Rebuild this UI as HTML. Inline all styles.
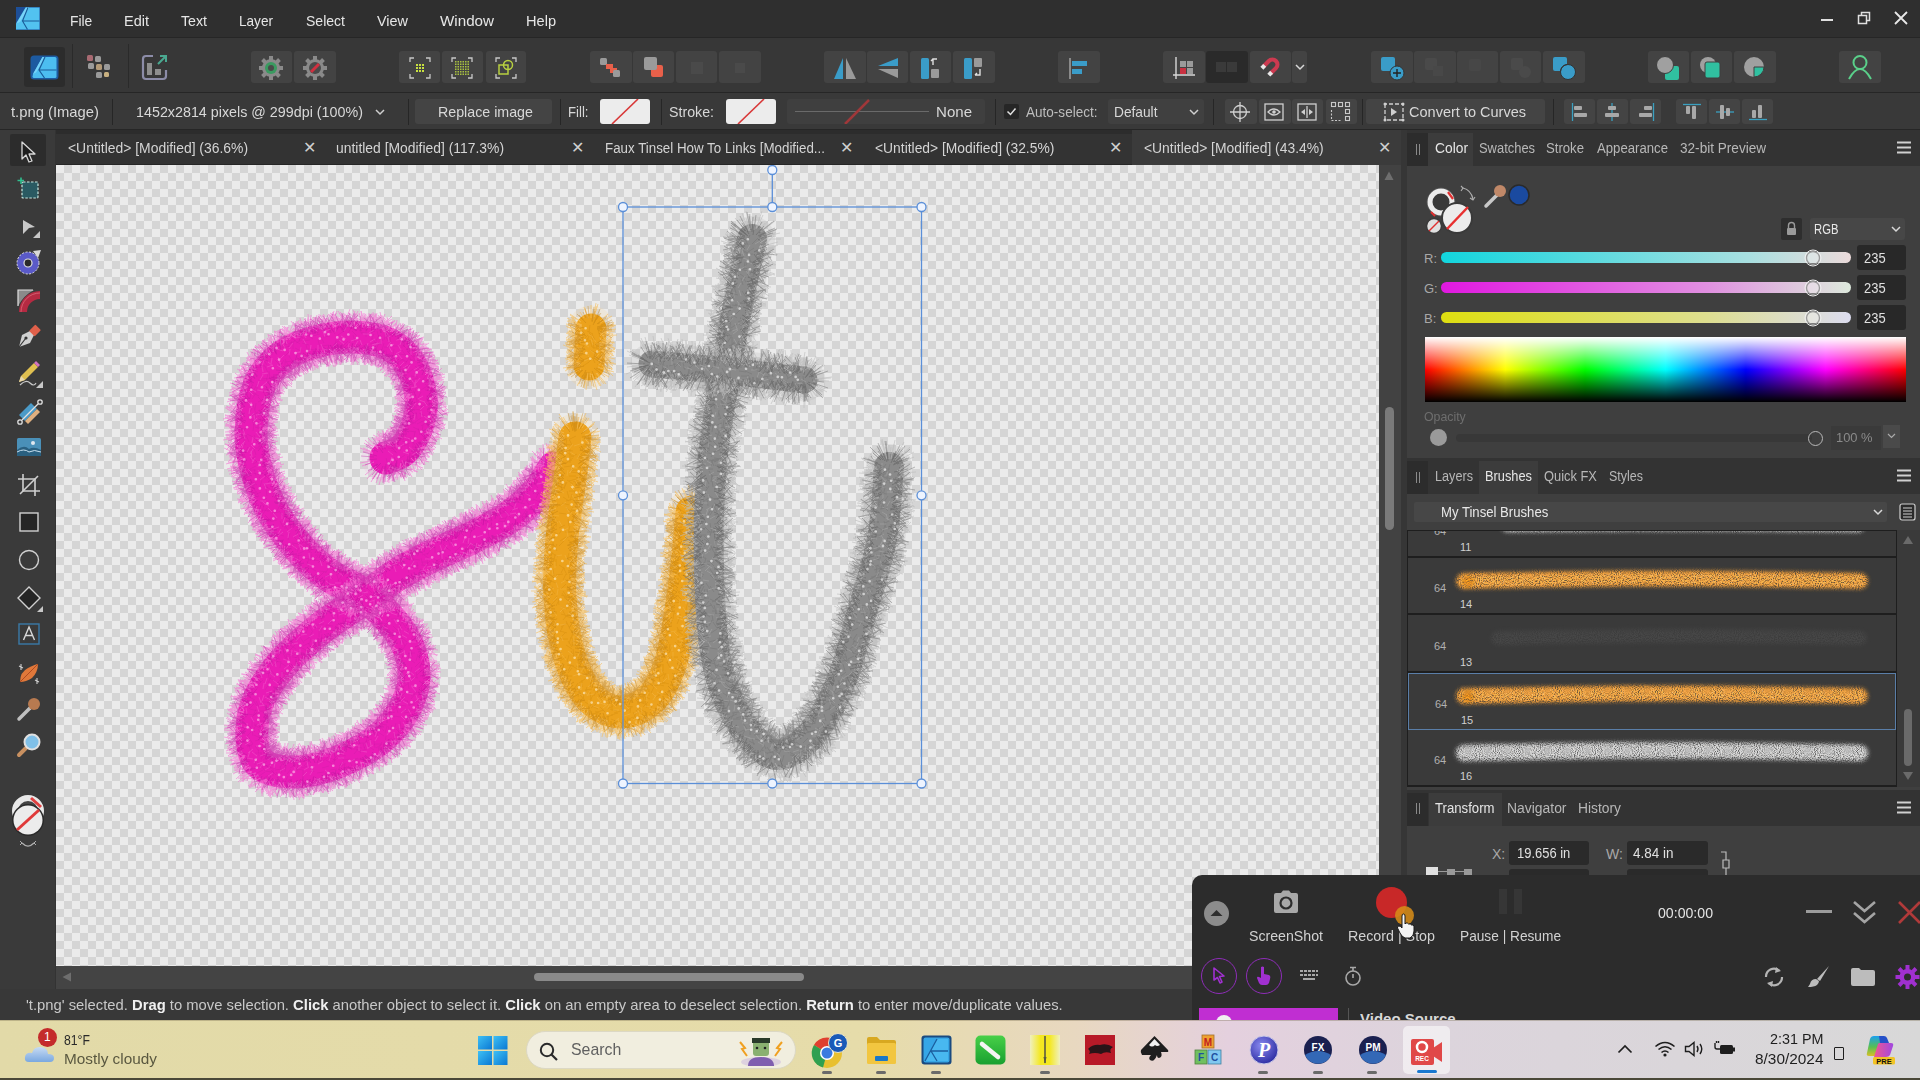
<!DOCTYPE html>
<html><head><meta charset="utf-8">
<style>
*{margin:0;padding:0;box-sizing:border-box}
html,body{width:1920px;height:1080px;overflow:hidden;background:#333;font-family:"Liberation Sans",sans-serif;color:#dcdcdc}
.a{position:absolute}
#menubar{left:0;top:0;width:1920px;height:37px;background:#2f2f2f}
#menubar .mi{position:absolute;top:12px;font-size:15px;color:#e6e6e6}
#toolbar{left:0;top:37px;width:1920px;height:56px;background:#373737;border-top:1px solid #262626;border-bottom:1px solid #262626}
.tb{position:absolute;top:13px;height:32px;background:#434343;border-radius:3px}
#ctx{left:0;top:93px;width:1920px;height:37px;background:#393939;border-bottom:1px solid #262626}
#ctx .t{position:absolute;top:10px;font-size:15px;color:#d8d8d8;white-space:nowrap}
.sep{position:absolute;top:6px;width:1px;height:26px;background:#262626}
.cb{position:absolute;top:6px;height:25px;background:#444444;border-radius:3px}
#tabs{left:56px;top:130px;width:1345px;height:35px;background:#333333;border-top:4px solid #2c2c2c;border-bottom:1px solid #262626}
#tabs .tab{position:absolute;top:-4px;height:35px;font-size:14px;color:#d4d4d4}
#tabs .tab span{position:absolute;top:10px;white-space:nowrap}
#tabs .tab i{position:absolute;top:8px;font-style:normal;font-size:16px;color:#d0d0d0}
#lefttools{left:0;top:130px;width:55px;height:859px;background:#3a3a3a}
#canvas{left:56px;top:165px;width:1323px;height:801px;background-color:#ebebeb;
background-image:repeating-conic-gradient(#d5d5d5 0 25%,#ebebeb 0 50%);background-size:16px 16px}
#vscroll{left:1379px;top:165px;width:22px;height:801px;background:#424242}
#hscroll{left:56px;top:966px;width:1345px;height:23px;background:#444444}
#status{left:0;top:989px;width:1920px;height:31px;background:#383838}
#status .t{position:absolute;left:26px;top:7px;font-size:15px;color:#c8c8c8;white-space:nowrap}
#status b{color:#f0f0f0}
#panel{left:1401px;top:130px;width:519px;height:745px;background:#3f3f3f;border-left:6px solid #363636}
#taskbar{left:0;top:1020px;width:1920px;height:60px;background:linear-gradient(90deg,#e2daa8 0%,#e6dcaa 45%,#e8d8c0 56%,#e4d0de 64%,#dcd4dc 75%,#d8d8d8 100%)}
#rec{left:1192px;top:875px;width:728px;height:145px;background:#2c2c2c;border-top-left-radius:10px}
#panel .ph{position:absolute;top:10px;font-size:14px;color:#b8b8b8;white-space:nowrap}
#panel .ph2{position:absolute;font-size:13px;color:#a8a8a8;white-space:nowrap}
#panel .vb{width:49px;height:25px;background:#282828;border-radius:3px;font-size:14px;color:#e0e0e0;padding:5px 0 0 7px}
#panel .brow{position:absolute;left:0;width:488px;height:57px;border-bottom:2px solid #1e1e1e;background:#3a3a3a}
#panel .brow .n1{position:absolute;left:26px;top:24px;font-size:11px;color:#b0b0b0}
#panel .brow .n2{position:absolute;left:52px;top:40px;font-size:11px;color:#d0d0d0}
#rec .rt{position:absolute;font-size:15px;color:#d2d2d2;white-space:nowrap}
#taskbar .tt{position:absolute;white-space:nowrap;color:#1e1e1e}
</style></head><body>

<div id="menubar" class="a">
  <div class="mi" style="left: 70px; transform-origin: left top; width: auto; transform: scaleX(0.923);">File</div>
  <div class="mi" style="left: 124px; transform-origin: left top; width: auto; transform: scaleX(0.967);">Edit</div>
  <div class="mi" style="left: 181px; transform-origin: left top; width: auto; transform: scaleX(0.945);">Text</div>
  <div class="mi" style="left: 239px; transform-origin: left top; width: auto; transform: scaleX(0.906);">Layer</div>
  <div class="mi" style="left: 306px; transform-origin: left top; width: auto; transform: scaleX(0.935);">Select</div>
  <div class="mi" style="left: 377px; transform-origin: left top; width: auto; transform: scaleX(0.961);">View</div>
  <div class="mi" style="left: 440px; transform-origin: left top; width: auto; transform: scaleX(1.012);">Window</div>
  <div class="mi" style="left: 526px; transform-origin: left top; width: auto; transform: scaleX(0.972);">Help</div>

  <svg class="a" style="left:16px;top:7px" width="24" height="23" viewBox="0 0 24 23"><rect x="0" y="0" width="24" height="23" fill="#1d4f98"></rect><path d="M0 16.5 L9.5 0.5 H23.5 V22.5 H0 Z" fill="#52c2f0"></path><path d="M0.5 16.5 L10 0.5 H13 L4 15 Z" fill="#7ad4f8"></path><path d="M12 0.5 L6.5 14 L11.5 22.5 M6.5 14 H23.5" stroke="#1a5a98" stroke-width="1.1" fill="none"></path></svg>
  <div class="a" style="left:1821px;top:19px;width:12px;height:2px;background:#e0e0e0"></div>
  <svg class="a" style="left:1857px;top:11px" width="14" height="14" viewBox="0 0 14 14"><rect x="1.5" y="4.5" width="8" height="8" fill="none" stroke="#e0e0e0" stroke-width="1.5"></rect><path d="M4.5 4.5 V1.5 H12.5 V9.5 H9.5" fill="none" stroke="#e0e0e0" stroke-width="1.5"></path></svg>
  <svg class="a" style="left:1894px;top:11px" width="14" height="14" viewBox="0 0 14 14"><path d="M1 1 L13 13 M13 1 L1 13" stroke="#e8e8e8" stroke-width="1.8"></path></svg>
</div>

<div id="toolbar" class="a">
<div class="tb" style="left:24px;width:41px;top:9px;height:40px;background:#2c2c2c"></div>
<div class="tb" style="left:251px;width:41px"></div>
<div class="tb" style="left:294px;width:42px"></div>
<div class="tb" style="left:399px;width:41px"></div>
<div class="tb" style="left:442px;width:41px"></div>
<div class="tb" style="left:486px;width:40px"></div>
<div class="tb" style="left:590px;width:42px"></div>
<div class="tb" style="left:633px;width:41px"></div>
<div class="tb" style="left:676px;width:41px"></div>
<div class="tb" style="left:719px;width:42px"></div>
<div class="tb" style="left:824px;width:42px"></div>
<div class="tb" style="left:867px;width:41px"></div>
<div class="tb" style="left:910px;width:41px"></div>
<div class="tb" style="left:953px;width:42px"></div>
<div class="tb" style="left:1058px;width:42px"></div>
<div class="tb" style="left:1163px;width:42px"></div>
<div class="tb" style="left:1206px;width:42px;background:#2a2a2a"></div>
<div class="tb" style="left:1250px;width:41px"></div>
<div class="tb" style="left:1292px;width:15px"></div>
<div class="tb" style="left:1371px;width:42px"></div>
<div class="tb" style="left:1414px;width:42px"></div>
<div class="tb" style="left:1457px;width:41px"></div>
<div class="tb" style="left:1500px;width:41px"></div>
<div class="tb" style="left:1543px;width:42px"></div>
<div class="tb" style="left:1648px;width:41px"></div>
<div class="tb" style="left:1691px;width:41px"></div>
<div class="tb" style="left:1734px;width:42px"></div>
<div class="tb" style="left:1839px;width:42px"></div>
<div class="a" style="left:72px;top:6px;width:1px;height:44px;background:#2a2a2a"></div>
<div class="a" style="left:128px;top:6px;width:1px;height:44px;background:#2a2a2a"></div>

<svg class="a" style="left:30px;top:17px" width="29" height="25" viewBox="0 0 29 25">
  <defs><linearGradient id="lg1" x1="0" y1="0" x2="1" y2="1"><stop offset="0" stop-color="#1f6fb8"></stop><stop offset="1" stop-color="#52c3f2"></stop></linearGradient></defs>
  <rect x="0.5" y="0.5" width="28" height="24" rx="3.5" fill="#1d5aa0"></rect>
  <path d="M3 19 L12.5 2 H25 Q26.5 2 26.5 3.5 V21.5 Q26.5 23 25 23 H4 Q2.5 23 2.5 21.5 Z" fill="#4cbdf0"></path>
  <path d="M3 19 L12.5 2 H15.5 L6 17.5 Z" fill="#76d2f8"></path>
  <path d="M15 2 L9 15 L14.5 23 M9 15 H26.5" stroke="#1a5a98" stroke-width="1.2" fill="none"></path>
</svg>
<svg class="a" style="left:86px;top:16px" width="28" height="26" viewBox="0 0 28 26">
  <rect x="1" y="1" width="6" height="6" rx="1.5" fill="#a86a72"></rect><rect x="9" y="2" width="6" height="6" rx="1.5" fill="#9a9a9a"></rect>
  <rect x="2" y="9" width="6" height="6" rx="1.5" fill="#9a9a9a"></rect><rect x="10" y="10" width="6" height="6" rx="1.5" fill="#b39a78"></rect><rect x="18" y="10" width="6" height="6" rx="1.5" fill="#9a9a9a"></rect>
  <rect x="10" y="18" width="6" height="6" rx="1.5" fill="#9a9a9a"></rect><rect x="18" y="18" width="5" height="5" rx="1.5" fill="#c8b080"></rect>
</svg>
<svg class="a" style="left:141px;top:15px" width="30" height="28" viewBox="0 0 30 28">
  <path d="M12 3 H5 Q2 3 2 6 V23 Q2 26 5 26 H22 Q25 26 25 23 V17" fill="none" stroke="#8c8ca8" stroke-width="2.2"></path>
  <rect x="6" y="10" width="5" height="12" fill="#8e8e8e"></rect><rect x="14" y="16" width="6" height="6" fill="#8e8e8e"></rect>
  <path d="M17 11 L25 3 M19 3 H25 V9" fill="none" stroke="#4aa890" stroke-width="2"></path>
</svg>
<svg class="a" style="left:258px;top:17px" width="26" height="26" viewBox="0 0 26 26">
  <g fill="#8a8a8a"><circle cx="13" cy="13" r="9"></circle>
  <rect x="11" y="1" width="4" height="5"></rect><rect x="11" y="20" width="4" height="5"></rect><rect x="1" y="11" width="5" height="4"></rect><rect x="20" y="11" width="5" height="4"></rect>
  <rect x="11" y="1" width="4" height="5" transform="rotate(45 13 13)"></rect><rect x="11" y="20" width="4" height="5" transform="rotate(45 13 13)"></rect><rect x="1" y="11" width="5" height="4" transform="rotate(45 13 13)"></rect><rect x="20" y="11" width="5" height="4" transform="rotate(45 13 13)"></rect></g>
  <circle cx="13" cy="13" r="6" fill="#3a9a60"></circle><circle cx="13" cy="13" r="3" fill="#4a4a4a"></circle>
</svg>
<svg class="a" style="left:302px;top:17px" width="26" height="26" viewBox="0 0 26 26">
  <g fill="#8a8a8a"><circle cx="13" cy="13" r="9"></circle>
  <rect x="11" y="1" width="4" height="5"></rect><rect x="11" y="20" width="4" height="5"></rect><rect x="1" y="11" width="5" height="4"></rect><rect x="20" y="11" width="5" height="4"></rect>
  <rect x="11" y="1" width="4" height="5" transform="rotate(45 13 13)"></rect><rect x="11" y="20" width="4" height="5" transform="rotate(45 13 13)"></rect><rect x="1" y="11" width="5" height="4" transform="rotate(45 13 13)"></rect><rect x="20" y="11" width="5" height="4" transform="rotate(45 13 13)"></rect></g>
  <circle cx="13" cy="13" r="6" fill="#4a4a4a"></circle><path d="M9 17 L17 9" stroke="#d03040" stroke-width="3"></path>
</svg>
<svg class="a" style="left:409px;top:19px" width="22" height="22" viewBox="0 0 22 22"><path d="M1 5 V1 H5 M17 1 H21 V5 M21 17 V21 H17 M5 21 H1 V17" fill="none" stroke="#c8c8c8" stroke-width="1.3"></path><g fill="#c8e040"><rect x="7" y="7" width="2" height="2"></rect><rect x="7" y="10" width="2" height="2"></rect><rect x="7" y="13" width="2" height="2"></rect><rect x="10" y="7" width="2" height="2"></rect><rect x="10" y="10" width="2" height="2"></rect><rect x="10" y="13" width="2" height="2"></rect><rect x="13" y="7" width="2" height="2"></rect><rect x="13" y="10" width="2" height="2"></rect><rect x="13" y="13" width="2" height="2"></rect></g></svg>
<svg class="a" style="left:451px;top:19px" width="22" height="22" viewBox="0 0 22 22"><path d="M1 5 V1 H5 M17 1 H21 V5 M21 17 V21 H17 M5 21 H1 V17" fill="none" stroke="#c8c8c8" stroke-width="1.3"></path><g fill="#a8c040"><rect x="4.0" y="4.0" width="1.5" height="1.5"></rect><rect x="4.0" y="6.5" width="1.5" height="1.5"></rect><rect x="4.0" y="9.0" width="1.5" height="1.5"></rect><rect x="4.0" y="11.5" width="1.5" height="1.5"></rect><rect x="4.0" y="14.0" width="1.5" height="1.5"></rect><rect x="4.0" y="16.5" width="1.5" height="1.5"></rect><rect x="6.5" y="4.0" width="1.5" height="1.5"></rect><rect x="6.5" y="6.5" width="1.5" height="1.5"></rect><rect x="6.5" y="9.0" width="1.5" height="1.5"></rect><rect x="6.5" y="11.5" width="1.5" height="1.5"></rect><rect x="6.5" y="14.0" width="1.5" height="1.5"></rect><rect x="6.5" y="16.5" width="1.5" height="1.5"></rect><rect x="9.0" y="4.0" width="1.5" height="1.5"></rect><rect x="9.0" y="6.5" width="1.5" height="1.5"></rect><rect x="9.0" y="9.0" width="1.5" height="1.5"></rect><rect x="9.0" y="11.5" width="1.5" height="1.5"></rect><rect x="9.0" y="14.0" width="1.5" height="1.5"></rect><rect x="9.0" y="16.5" width="1.5" height="1.5"></rect><rect x="11.5" y="4.0" width="1.5" height="1.5"></rect><rect x="11.5" y="6.5" width="1.5" height="1.5"></rect><rect x="11.5" y="9.0" width="1.5" height="1.5"></rect><rect x="11.5" y="11.5" width="1.5" height="1.5"></rect><rect x="11.5" y="14.0" width="1.5" height="1.5"></rect><rect x="11.5" y="16.5" width="1.5" height="1.5"></rect><rect x="14.0" y="4.0" width="1.5" height="1.5"></rect><rect x="14.0" y="6.5" width="1.5" height="1.5"></rect><rect x="14.0" y="9.0" width="1.5" height="1.5"></rect><rect x="14.0" y="11.5" width="1.5" height="1.5"></rect><rect x="14.0" y="14.0" width="1.5" height="1.5"></rect><rect x="14.0" y="16.5" width="1.5" height="1.5"></rect><rect x="16.5" y="4.0" width="1.5" height="1.5"></rect><rect x="16.5" y="6.5" width="1.5" height="1.5"></rect><rect x="16.5" y="9.0" width="1.5" height="1.5"></rect><rect x="16.5" y="11.5" width="1.5" height="1.5"></rect><rect x="16.5" y="14.0" width="1.5" height="1.5"></rect><rect x="16.5" y="16.5" width="1.5" height="1.5"></rect></g></svg>
<svg class="a" style="left:495px;top:19px" width="22" height="22" viewBox="0 0 22 22"><path d="M1 5 V1 H5 M17 1 H21 V5 M21 17 V21 H17 M5 21 H1 V17" fill="none" stroke="#c8c8c8" stroke-width="1.3"></path><rect x="4" y="8" width="9" height="9" fill="none" stroke="#b8d040" stroke-width="1.5"></rect><circle cx="13" cy="8" r="4.5" fill="none" stroke="#b8d040" stroke-width="1.5"></circle></svg>

<svg class="a" style="left:598px;top:19px" width="26" height="22" viewBox="0 0 26 22"><rect x="2" y="1" width="7" height="7" rx="1.5" fill="#9a9a9a"></rect><path d="M8 7 H15 V11 H19 V16 H12 V12 H8 Z" fill="#e8604a"></path><rect x="15" y="13" width="7" height="7" rx="1.5" fill="#9a9a9a"></rect></svg>
<svg class="a" style="left:641px;top:17px" width="26" height="24" viewBox="0 0 26 24"><rect x="10" y="10" width="12" height="12" rx="2" fill="#e8604a"></rect><rect x="3" y="2" width="13" height="13" rx="2" fill="#9a9a9a"></rect></svg>
<svg class="a" style="left:686px;top:19px" width="22" height="22" viewBox="0 0 22 22"><rect x="5" y="5" width="12" height="12" fill="#4a4a4a"></rect></svg>
<svg class="a" style="left:729px;top:19px" width="22" height="22" viewBox="0 0 22 22"><rect x="6" y="6" width="10" height="10" fill="#4a4a4a"></rect></svg>
<svg class="a" style="left:831px;top:17px" width="28" height="26" viewBox="0 0 28 26"><path d="M12 3 L12 24 L3 24 Z" fill="#3a9cc8"></path><path d="M15 3 L15 24 L25 24 Z" fill="#9a9a9a"></path></svg>
<svg class="a" style="left:874px;top:17px" width="28" height="26" viewBox="0 0 28 26"><path d="M24 3 V11 L4 11 Z" fill="#3a9cc8"></path><path d="M24 14 V23 L4 14 Z" fill="#9a9a9a"></path></svg>
<svg class="a" style="left:917px;top:17px" width="28" height="26" viewBox="0 0 28 26"><rect x="4" y="3" width="8" height="21" rx="1.5" fill="#3a9cc8"></rect><rect x="14" y="14" width="8" height="9" rx="1" fill="#9a9a9a"></rect><path d="M16 10 V4 H20 M16 4 L14 6" fill="none" stroke="#e0e0e0" stroke-width="1.4"></path></svg>
<svg class="a" style="left:960px;top:17px" width="28" height="26" viewBox="0 0 28 26"><rect x="4" y="3" width="8" height="21" rx="1.5" fill="#3a9cc8"></rect><rect x="14" y="3" width="8" height="9" rx="1" fill="#9a9a9a"></rect><path d="M20 14 V20 H15 M15 20 L17 18" fill="none" stroke="#e0e0e0" stroke-width="1.4"></path></svg>
<svg class="a" style="left:1066px;top:17px" width="26" height="26" viewBox="0 0 26 26"><rect x="3" y="3" width="2" height="21" fill="#8a8a8a"></rect><rect x="6" y="6" width="15" height="5" fill="#3a9cc8"></rect><rect x="6" y="14" width="10" height="5" fill="#3a9cc8"></rect></svg>
<svg class="a" style="left:1171px;top:17px" width="26" height="26" viewBox="0 0 26 26"><path d="M5 2 V24 M2 20 H24" stroke="#d8d8d8" stroke-width="1.4"></path><rect x="9" y="6" width="6" height="6" fill="#9a9a9a"></rect><rect x="16" y="6" width="6" height="6" fill="#9a9a9a"></rect><rect x="9" y="13" width="6" height="6" fill="#c83040"></rect><rect x="16" y="13" width="6" height="6" fill="#9a9a9a"></rect></svg>
<svg class="a" style="left:1215px;top:21px" width="24" height="16" viewBox="0 0 24 16"><rect x="1" y="3" width="10" height="10" fill="#3a3a3a"></rect><rect x="12" y="3" width="10" height="10" fill="#3a3a3a"></rect></svg>
<svg class="a" style="left:1257px;top:15px" width="26" height="26" viewBox="0 0 26 26"><g transform="rotate(45 14 13)"><path d="M9 19 V11 A5 5 0 0 1 19 11 V19" fill="none" stroke="#cc3a50" stroke-width="4.2"></path><rect x="7" y="17" width="4.2" height="4" fill="#e8e8e8"></rect><rect x="16.8" y="17" width="4.2" height="4" fill="#e8e8e8"></rect></g></svg>
<svg class="a" style="left:1294px;top:24px" width="12" height="10" viewBox="0 0 12 10"><path d="M2 3 L6 7 L10 3" fill="none" stroke="#d8d8d8" stroke-width="1.5"></path></svg>
<svg class="a" style="left:1378px;top:16px" width="28" height="28" viewBox="0 0 28 28"><rect x="3" y="3" width="14" height="14" rx="2" fill="#3a9cc8"></rect><circle cx="19" cy="19" r="7" fill="#3a9cc8" stroke="#333" stroke-width="1"></circle><path d="M19 15 V23 M15 19 H23" stroke="#222" stroke-width="1.4"></path></svg>
<svg class="a" style="left:1421px;top:16px" width="28" height="28" viewBox="0 0 28 28"><rect x="4" y="4" width="12" height="12" rx="2" fill="#4a4a4a"></rect><rect x="12" y="12" width="10" height="10" fill="#484848"></rect></svg>
<svg class="a" style="left:1464px;top:16px" width="28" height="28" viewBox="0 0 28 28"><rect x="5" y="5" width="12" height="12" rx="2" fill="#474747"></rect></svg>
<svg class="a" style="left:1507px;top:16px" width="28" height="28" viewBox="0 0 28 28"><rect x="4" y="4" width="12" height="12" rx="2" fill="#4a4a4a"></rect><circle cx="18" cy="18" r="6" fill="#4a4a4a"></circle></svg>
<svg class="a" style="left:1550px;top:16px" width="28" height="28" viewBox="0 0 28 28"><rect x="3" y="3" width="14" height="14" rx="2" fill="#3a9cc8"></rect><circle cx="18" cy="18" r="7.5" fill="#3a9cc8" stroke="#333" stroke-width="1"></circle><path d="M10.5 17 A7.5 7.5 0 0 1 17 10.5" fill="none" stroke="#333" stroke-width="1"></path></svg>
<svg class="a" style="left:1654px;top:16px" width="28" height="28" viewBox="0 0 28 28"><rect x="11" y="12" width="14" height="14" rx="2" fill="#30c0a0"></rect><circle cx="11" cy="11" r="8.5" fill="#a0a0a0" stroke="#3e3e3e" stroke-width="1"></circle></svg>
<svg class="a" style="left:1697px;top:16px" width="28" height="28" viewBox="0 0 28 28"><circle cx="11" cy="11" r="8" fill="#a0a0a0"></circle><rect x="8" y="8" width="15" height="16" rx="2" fill="#30c0a0" stroke="#3e3e3e" stroke-width="1"></rect></svg>
<svg class="a" style="left:1741px;top:16px" width="28" height="28" viewBox="0 0 28 28"><circle cx="13" cy="13" r="10" fill="#a0a0a0"></circle><path d="M13 13 H23 A10 10 0 0 1 13 23 Z" fill="#30c0a0" stroke="#3e3e3e" stroke-width="1"></path></svg>
<svg class="a" style="left:1846px;top:15px" width="28" height="28" viewBox="0 0 28 28"><circle cx="14" cy="9.5" r="6.5" fill="none" stroke="#5ad08a" stroke-width="2"></circle><path d="M3 26 Q14 6 25 26" fill="none" stroke="#5ad08a" stroke-width="2"></path></svg>
</div>
<div id="ctx" class="a">
<div class="t" style="left: 11px; transform-origin: left top; width: auto; transform: scaleX(0.986);">t.png (Image)</div>
<div class="sep" style="left:112px"></div>
<div class="t" style="left: 136px; transform-origin: left top; width: auto; transform: scaleX(0.954);">1452x2814 pixels @ 299dpi (100%)</div>
<svg class="a" style="left:374px;top:15px" width="12" height="8" viewBox="0 0 12 8"><path d="M2 2 L6 6 L10 2" fill="none" stroke="#cfcfcf" stroke-width="1.5"></path></svg>
<div class="sep" style="left:408px"></div>
<div class="cb" style="left:415px;width:137px"></div>
<div class="t" style="left: 438px; transform-origin: left top; width: auto; transform: scaleX(0.949);">Replace image</div>
<div class="sep" style="left:560px"></div>
<div class="t" style="left: 567.5px; transform-origin: left top; width: auto; transform: scaleX(0.879);">Fill:</div>
<svg class="a" style="left:600px;top:6px" width="50" height="25" viewBox="0 0 50 25"><rect x="0" y="0" width="50" height="25" rx="3" fill="#ececec"></rect><path d="M12 25 L38 0" stroke="#d83838" stroke-width="1.6"></path></svg>
<div class="sep" style="left:661px"></div>
<div class="t" style="left: 669px; transform-origin: left top; width: auto; transform: scaleX(0.947);">Stroke:</div>
<svg class="a" style="left:726px;top:6px" width="50" height="25" viewBox="0 0 50 25"><rect x="0" y="0" width="50" height="25" rx="3" fill="#ececec"></rect><path d="M12 25 L38 0" stroke="#d83838" stroke-width="1.6"></path></svg>
<div class="cb" style="left:787px;width:198px;background:#3f3f3f"></div>
<svg class="a" style="left:787px;top:6px" width="150" height="25" viewBox="0 0 150 25"><path d="M8 12.5 H142" stroke="#6a6a6a" stroke-width="1"></path><path d="M58 25 L82 1" stroke="#a0383a" stroke-width="2.5"></path></svg>
<div class="t" style="left: 936px; transform-origin: left top; width: auto; transform: scaleX(1.004);">None</div>
<div class="sep" style="left:995px"></div>
<div class="a" style="left:1004px;top:11px;width:15px;height:15px;background:#262626;border-radius:2px"></div>
<svg class="a" style="left:1004px;top:11px" width="15" height="15" viewBox="0 0 15 15"><path d="M3.5 7.5 L6.5 10.5 L11.5 4.5" fill="none" stroke="#e0e0e0" stroke-width="1.5"></path></svg>
<div class="t" style="left: 1025.5px; color: rgb(189, 189, 189); transform-origin: left top; width: auto; transform: scaleX(0.903);">Auto-select:</div>
<div class="cb" style="left:1108px;width:96px;background:#404040"></div>
<div class="t" style="left: 1113.5px; transform-origin: left top; width: auto; transform: scaleX(0.915);">Default</div>
<svg class="a" style="left:1188px;top:15px" width="12" height="8" viewBox="0 0 12 8"><path d="M2 2 L6 6 L10 2" fill="none" stroke="#cfcfcf" stroke-width="1.5"></path></svg>
<div class="sep" style="left:1213px"></div>
<div class="cb" style="left:1225px;width:32px"></div>
<div class="cb" style="left:1259px;width:32px"></div>
<div class="cb" style="left:1292px;width:31px"></div>
<div class="cb" style="left:1326px;width:31px"></div>
<svg class="a" style="left:1229px;top:8px" width="22" height="22" viewBox="0 0 22 22"><circle cx="11" cy="11" r="6.5" fill="none" stroke="#d0d0d0" stroke-width="1.3"></circle><path d="M11 1 V21 M1 11 H21" stroke="#d0d0d0" stroke-width="1.3"></path></svg>
<svg class="a" style="left:1263px;top:8px" width="22" height="22" viewBox="0 0 22 22"><rect x="2" y="3" width="18" height="16" fill="none" stroke="#d0d0d0" stroke-width="1.3"></rect><path d="M5 11 Q11 5 17 11 Q11 17 5 11 Z" fill="none" stroke="#d0d0d0" stroke-width="1.3"></path><circle cx="11" cy="11" r="1.8" fill="#d0d0d0"></circle></svg>
<svg class="a" style="left:1296px;top:8px" width="22" height="22" viewBox="0 0 22 22"><rect x="2" y="3" width="18" height="16" fill="none" stroke="#d0d0d0" stroke-width="1.3"></rect><path d="M11 5 V17" stroke="#d0d0d0" stroke-width="1.3"></path><path d="M5 11 L9 8 V14 Z M17 11 L13 8 V14 Z" fill="#d0d0d0"></path></svg>
<svg class="a" style="left:1330px;top:8px" width="22" height="22" viewBox="0 0 22 22"><g fill="none" stroke="#c8c8c8" stroke-width="1.1"><rect x="1.5" y="1.5" width="4" height="4"></rect><rect x="8.5" y="1.5" width="4" height="4"></rect><rect x="15.5" y="1.5" width="4" height="4"></rect><rect x="15.5" y="8.5" width="4" height="4"></rect><rect x="15.5" y="15.5" width="4" height="4"></rect><path d="M1.5 9 V19.5 H12" stroke-dasharray="2 1.5"></path></g></svg>
<div class="sep" style="left:1362px"></div>
<div class="cb" style="left:1366px;width:179px"></div>
<svg class="a" style="left:1383px;top:8px" width="22" height="22" viewBox="0 0 22 22"><path d="M2 3 V19 H20 V3 Z" fill="none" stroke="#d0d0d0" stroke-width="1.3" stroke-dasharray="4 2"></path><path d="M8 7 L14 11 L8 15 Z" fill="#d0d0d0"></path><circle cx="2" cy="3" r="1.5" fill="#d0d0d0"></circle><circle cx="20" cy="3" r="1.5" fill="#d0d0d0"></circle><circle cx="2" cy="19" r="1.5" fill="#d0d0d0"></circle><circle cx="20" cy="19" r="1.5" fill="#d0d0d0"></circle></svg>
<div class="t" style="left: 1409px; transform-origin: left top; width: auto; transform: scaleX(0.968);">Convert to Curves</div>
<div class="sep" style="left:1553px"></div>
<div class="cb" style="left:1564px;width:31px"></div>
<div class="cb" style="left:1597px;width:31px"></div>
<div class="cb" style="left:1630px;width:31px"></div>
<div class="cb" style="left:1676px;width:31px"></div>
<div class="cb" style="left:1709px;width:31px"></div>
<div class="cb" style="left:1742px;width:31px"></div>
<svg class="a" style="left:1569px;top:9px" width="22" height="20" viewBox="0 0 22 20"><path d="M3.5 1 V19" stroke="#3aa0c0" stroke-width="1.3"></path><rect x="5" y="4" width="8" height="4" rx="1" fill="#a8a8a8"></rect><rect x="5" y="11" width="13" height="4" rx="1" fill="#a8a8a8"></rect></svg>
<svg class="a" style="left:1601px;top:9px" width="22" height="20" viewBox="0 0 22 20"><path d="M11 1 V19" stroke="#3aa0c0" stroke-width="1.3"></path><rect x="7" y="4" width="8" height="4" rx="1" fill="#a8a8a8"></rect><rect x="4" y="11" width="14" height="4" rx="1" fill="#a8a8a8"></rect></svg>
<svg class="a" style="left:1635px;top:9px" width="22" height="20" viewBox="0 0 22 20"><path d="M18.5 1 V19" stroke="#3aa0c0" stroke-width="1.3"></path><rect x="9" y="4" width="8" height="4" rx="1" fill="#a8a8a8"></rect><rect x="4" y="11" width="13" height="4" rx="1" fill="#a8a8a8"></rect></svg>
<svg class="a" style="left:1681px;top:9px" width="22" height="20" viewBox="0 0 22 20"><path d="M2 2.5 H20" stroke="#3aa0c0" stroke-width="1.3"></path><rect x="5" y="4" width="4" height="8" rx="1" fill="#a8a8a8"></rect><rect x="11" y="4" width="4" height="13" rx="1" fill="#a8a8a8"></rect></svg>
<svg class="a" style="left:1714px;top:9px" width="22" height="20" viewBox="0 0 22 20"><path d="M2 10 H20" stroke="#3aa0c0" stroke-width="1.3"></path><rect x="6" y="3" width="4" height="14" rx="1" fill="#a8a8a8"></rect><rect x="12" y="6" width="4" height="8" rx="1" fill="#a8a8a8"></rect></svg>
<svg class="a" style="left:1747px;top:9px" width="22" height="20" viewBox="0 0 22 20"><path d="M2 17.5 H20" stroke="#3aa0c0" stroke-width="1.3"></path><rect x="5" y="8" width="4" height="8" rx="1" fill="#a8a8a8"></rect><rect x="11" y="3" width="4" height="13" rx="1" fill="#a8a8a8"></rect></svg>
</div>
<div id="lefttools" class="a">
<div class="a" style="left:10px;top:4px;width:36px;height:32px;background:#2c2c2c;border-radius:2px"></div>
<svg class="a" style="left:19px;top:10px" width="20" height="24" viewBox="0 0 20 24"><path d="M3 2 V19 L7 15 L10 22 L13 21 L10 14 H16 Z" fill="#1e1e1e" stroke="#d8d8d8" stroke-width="1.3" stroke-linejoin="round"></path></svg>
<svg class="a" style="left:17px;top:47px" width="24" height="24" viewBox="0 0 24 24"><rect x="5" y="5" width="16" height="16" rx="1" fill="#2a5a62" stroke="#c8e8e0" stroke-width="1.2" stroke-dasharray="2.5 1.5"></rect><path d="M4 0.5 V7 M0.5 3.5 H7" stroke="#30c090" stroke-width="1.6"></path></svg>
<svg class="a" style="left:18px;top:87px" width="24" height="22" viewBox="0 0 24 22"><path d="M5 3 L17 10 L11 11 L5 17 Z" fill="#c8c8c8"></path><path d="M22 14 V21 H15 Z" fill="#c8c8c8"></path></svg>
<svg class="a" style="left:15px;top:118px" width="28" height="28" viewBox="0 0 28 28"><circle cx="13" cy="15" r="11" fill="#5a5ac8" stroke="#e0e0e0" stroke-width="1" stroke-dasharray="2 1.5"></circle><circle cx="13" cy="15" r="4" fill="#2a2a2a" stroke="#e0e0e0" stroke-width="1.2"></circle><path d="M18 3 L26 2 L23 10 Z" fill="#d8d8d8"></path></svg>
<svg class="a" style="left:16px;top:157px" width="26" height="26" viewBox="0 0 26 26"><path d="M2 3 H18 Q8 8 2 19 Z" fill="#8a8a8a"></path><path d="M2 19 V3 H17" fill="none" stroke="#e0e0e0" stroke-width="1.2"></path><path d="M3 25 A21 21 0 0 1 24 4 V12 A13 13 0 0 0 11 25 Z" fill="#b52a42"></path><path d="M5 25 A19 19 0 0 1 24 6" fill="none" stroke="#e07080" stroke-width="0.9" opacity="0.8"></path></svg>
<svg class="a" style="left:16px;top:193px" width="26" height="26" viewBox="0 0 26 26"><path d="M3 24 L6 12 L14 8 L18 12 L14 20 Z" fill="#d0d0d0"></path><path d="M3 24 L10 15" stroke="#333" stroke-width="1.2"></path><circle cx="10" cy="15" r="1.6" fill="#333"></circle><rect x="15" y="3" width="8" height="9" rx="1" fill="#e0604a" transform="rotate(45 19 7.5)"></rect></svg>
<svg class="a" style="left:16px;top:231px" width="28" height="28" viewBox="0 0 28 28"><path d="M3 21 L5 15 L18 2 L22 6 L9 19 Z" fill="#e0c050"></path><path d="M18 2 L22 6 L24 4 L20 0 Z" fill="#d070c0"></path><path d="M3 21 L5 15 L9 19 Z" fill="#e8d8b0"></path><path d="M4 24 Q10 18 14 22 Q18 26 20 22" fill="none" stroke="#c8c8c8" stroke-width="1.2"></path><path d="M27 20 V27 H20 Z" fill="#c8c8c8"></path></svg>
<svg class="a" style="left:16px;top:268px" width="28" height="28" viewBox="0 0 28 28"><path d="M3 17 L15 5 L21 11 L9 23 Z" fill="#4a9ac8"></path><path d="M9 23 L21 11 L24 14 L12 26 Z" fill="#e0b080"></path><circle cx="4" cy="24" r="2.2" fill="none" stroke="#e0e0e0" stroke-width="1.3"></circle><circle cx="24" cy="4" r="2.2" fill="none" stroke="#e0e0e0" stroke-width="1.3"></circle><path d="M6 22 L22 6" stroke="#e0e0e0" stroke-width="1.3"></path></svg>
<svg class="a" style="left:16px;top:306px" width="26" height="22" viewBox="0 0 26 22"><rect x="1" y="2" width="24" height="18" rx="1.5" fill="#4a90b8"></rect><path d="M1 14 Q8 8 13 13 Q18 10 25 14 V20 H1 Z" fill="#2a6080"></path><circle cx="17" cy="7" r="2" fill="#e0e8f0"></circle><path d="M1 16 Q8 12 13 16 Q18 13 25 16" fill="none" stroke="#c8e0f0" stroke-width="1"></path></svg>
<svg class="a" style="left:17px;top:343px" width="24" height="24" viewBox="0 0 24 24"><path d="M6 1 V18 H23 M1 6 H18 V23" fill="none" stroke="#d0d0d0" stroke-width="1.6"></path><path d="M3 21 L21 3" stroke="#d0d0d0" stroke-width="1.6"></path></svg>
<svg class="a" style="left:18px;top:381px" width="22" height="22" viewBox="0 0 22 22"><rect x="2" y="2" width="18" height="18" fill="#252525" stroke="#d0d0d0" stroke-width="1.4"></rect></svg>
<svg class="a" style="left:17px;top:418px" width="24" height="24" viewBox="0 0 24 24"><circle cx="12" cy="12" r="9.5" fill="none" stroke="#d0d0d0" stroke-width="1.4"></circle></svg>
<svg class="a" style="left:16px;top:455px" width="28" height="28" viewBox="0 0 28 28"><path d="M13 2 L24 13 L13 24 L2 13 Z" fill="#252525" stroke="#d0d0d0" stroke-width="1.4"></path><path d="M27 21 V27 H21 Z" fill="#c8c8c8"></path></svg>
<svg class="a" style="left:17px;top:492px" width="24" height="24" viewBox="0 0 24 24"><rect x="2" y="2" width="20" height="20" fill="none" stroke="#3a7aa8" stroke-width="1.4"></rect><path d="M6.5 18 L12 5 L17.5 18 M8.5 13.5 H15.5" fill="none" stroke="#d8d8d8" stroke-width="1.4"></path></svg>
<svg class="a" style="left:16px;top:530px" width="26" height="26" viewBox="0 0 26 26"><path d="M4 22 Q4 12 12 8 Q20 4 22 4 Q22 12 16 18 Q10 22 4 22 Z" fill="#e0783a"></path><path d="M4 22 L22 4" stroke="#b04a20" stroke-width="1"></path><path d="M3 6 L7 8 M5 4 V10 M19 20 L23 22 M21 18 V24" stroke="#d0d0d0" stroke-width="1.1"></path></svg>
<svg class="a" style="left:16px;top:566px" width="26" height="26" viewBox="0 0 26 26"><path d="M3 23 L14 12" stroke="#c0c0c0" stroke-width="3.5" stroke-linecap="round"></path><circle cx="18" cy="8" r="6" fill="#b87a50"></circle></svg>
<svg class="a" style="left:16px;top:602px" width="26" height="26" viewBox="0 0 26 26"><path d="M3 23 L10 16" stroke="#c89060" stroke-width="4" stroke-linecap="round"></path><circle cx="16" cy="10" r="7.5" fill="#80c0e8" stroke="#e0e0e0" stroke-width="2"></circle></svg>
<svg class="a" style="left:9px;top:663px" width="40" height="64" viewBox="0 0 40 64"><circle cx="19" cy="18" r="15" fill="#444" stroke="#2a2a2a" stroke-width="1"></circle><circle cx="19" cy="18" r="13" fill="none" stroke="#e8e8e8" stroke-width="6"></circle><path d="M22 5 L32 14" stroke="#e04040" stroke-width="3"></path><circle cx="19" cy="27" r="16" fill="#2a2a2a"></circle><circle cx="19" cy="27" r="14.5" fill="#ececec"></circle><path d="M8 37 L30 17" stroke="#e03a3a" stroke-width="3"></path><path d="M13 50 Q19 56 25 50" fill="none" stroke="#b0b0b0" stroke-width="1.2"></path><path d="M11 48 L13 50 L11 52 M27 48 L25 50 L27 52" fill="none" stroke="#b0b0b0" stroke-width="1"></path></svg>
</div>
<div id="tabs" class="a">
<div class="tab" style="left:0;width:268px"><span style="left: 12px; transform-origin: left top; width: auto; transform: scaleX(0.993);">&lt;Untitled&gt; [Modified] (36.6%)</span><i style="left:247px">✕</i></div>
<div class="tab" style="left:268px;width:269px"><span style="left: 12px; transform-origin: left top; width: auto; transform: scaleX(0.992);">untitled [Modified] (117.3%)</span><i style="left:247px">✕</i></div>
<div class="tab" style="left:537px;width:269px"><span style="left: 12px; transform-origin: left top; width: auto; transform: scaleX(0.953);">Faux Tinsel How To Links [Modified...</span><i style="left:247px">✕</i></div>
<div class="tab" style="left:806px;width:270px"><span style="left: 13.4px; transform-origin: left top; width: auto; transform: scaleX(0.989);">&lt;Untitled&gt; [Modified] (32.5%)</span><i style="left:247px">✕</i></div>
<div class="tab" style="left:1076px;width:269px;background:#3b3b3b"><span style="left: 12px; transform-origin: left top; width: auto; transform: scaleX(0.991);">&lt;Untitled&gt; [Modified] (43.4%)</span><i style="left:246px">✕</i></div>
</div>
<div id="canvas" class="a" style="overflow:hidden"><svg class="a" style="left:-56px;top:-165px" width="1920" height="1080" viewBox="0 0 1920 1080">
<defs><filter id="soft" x="-5%" y="-5%" width="110%" height="110%"><feGaussianBlur stdDeviation="0.45"></feGaussianBlur></filter></defs>
<g filter="url(#soft)">
<path d="M386.0 458.0 C389.0 456.5 398.7 454.7 404.0 449.0 C409.3 443.3 415.2 432.7 418.0 424.0 C420.8 415.3 422.3 407.0 421.0 397.0 C419.7 387.0 415.5 372.8 410.0 364.0 C404.5 355.2 397.5 348.5 388.0 344.0 C378.5 339.5 365.2 337.3 353.0 337.0 C340.8 336.7 326.8 338.7 315.0 342.0 C303.2 345.3 291.3 349.7 282.0 357.0 C272.7 364.3 264.2 373.3 259.0 386.0 C253.8 398.7 251.3 418.7 251.0 433.0 C250.7 447.3 253.3 458.8 257.0 472.0 C260.7 485.2 265.8 499.2 273.0 512.0 C280.2 524.8 290.5 538.3 300.0 549.0 C309.5 559.7 318.8 568.0 330.0 576.0 C341.2 584.0 354.5 586.3 367.0 597.0 C379.5 607.7 397.3 625.2 405.0 640.0 C412.7 654.8 415.8 670.8 413.0 686.0 C410.2 701.2 400.5 718.3 388.0 731.0 C375.5 743.7 354.5 755.2 338.0 762.0 C321.5 768.8 302.5 772.5 289.0 772.0 C275.5 771.5 262.8 768.8 257.0 759.0 C251.2 749.2 250.5 728.0 254.0 713.0 C257.5 698.0 267.0 683.0 278.0 669.0 C289.0 655.0 305.2 641.0 320.0 629.0 C334.8 617.0 354.0 606.2 367.0 597.0 C380.0 587.8 386.8 581.0 398.0 574.0 C409.2 567.0 421.8 561.0 434.0 555.0 C446.2 549.0 458.7 544.2 471.0 538.0 C483.3 531.8 497.2 525.3 508.0 518.0 C518.8 510.7 528.3 502.3 536.0 494.0 C543.7 485.7 551.0 472.3 554.0 468.0" fill="none" stroke="#f4b0e4" stroke-width="49" stroke-linecap="round" stroke-linejoin="round" opacity="0.2"></path>
<path d="M386.0 458.0 C389.0 456.5 398.7 454.7 404.0 449.0 C409.3 443.3 415.2 432.7 418.0 424.0 C420.8 415.3 422.3 407.0 421.0 397.0 C419.7 387.0 415.5 372.8 410.0 364.0 C404.5 355.2 397.5 348.5 388.0 344.0 C378.5 339.5 365.2 337.3 353.0 337.0 C340.8 336.7 326.8 338.7 315.0 342.0 C303.2 345.3 291.3 349.7 282.0 357.0 C272.7 364.3 264.2 373.3 259.0 386.0 C253.8 398.7 251.3 418.7 251.0 433.0 C250.7 447.3 253.3 458.8 257.0 472.0 C260.7 485.2 265.8 499.2 273.0 512.0 C280.2 524.8 290.5 538.3 300.0 549.0 C309.5 559.7 318.8 568.0 330.0 576.0 C341.2 584.0 354.5 586.3 367.0 597.0 C379.5 607.7 397.3 625.2 405.0 640.0 C412.7 654.8 415.8 670.8 413.0 686.0 C410.2 701.2 400.5 718.3 388.0 731.0 C375.5 743.7 354.5 755.2 338.0 762.0 C321.5 768.8 302.5 772.5 289.0 772.0 C275.5 771.5 262.8 768.8 257.0 759.0 C251.2 749.2 250.5 728.0 254.0 713.0 C257.5 698.0 267.0 683.0 278.0 669.0 C289.0 655.0 305.2 641.0 320.0 629.0 C334.8 617.0 354.0 606.2 367.0 597.0 C380.0 587.8 386.8 581.0 398.0 574.0 C409.2 567.0 421.8 561.0 434.0 555.0 C446.2 549.0 458.7 544.2 471.0 538.0 C483.3 531.8 497.2 525.3 508.0 518.0 C518.8 510.7 528.3 502.3 536.0 494.0 C543.7 485.7 551.0 472.3 554.0 468.0" fill="none" stroke="#ea1eb6" stroke-width="33" stroke-linecap="round" stroke-linejoin="round"></path>
<path d="M382 447l-14 -2M380 443l2 -6M390 467l14 4M381 445l-2 -11M392 470l13 8M383 448l3 -14M393 473l11 1M383 446l-7 -9M393 471l-6 11M392 468l15 6M393 471l0 7M382 442l5 -12M385 445l-8 -12M385 447l-7 -10M385 447l-2 -16M385 446l-7 -15M385 442l2 -12M385 442l6 -9M385 441l-12 -6M394 469l13 9M394 466l15 9M395 468l-3 13M396 472l10 4M386 442l5 -7M388 444l5 -9M396 468l1 10M388 446l0 -18M396 467l-4 12M387 440l-5 -10M398 469l-11 10M389 445l7 -15M388 442l-12 -4M389 443l-1 -9M399 469l-8 9M389 443l-9 -4M400 470l-6 10M390 443l-14 -5M400 467l5 14M390 443l1 -14M400 467l5 7M392 446l-16 -6M390 441l-12 2M390 440l8 -7M391 443l-11 -7M402 466l11 6M391 443l-14 -3M401 463l-4 17M391 441l-16 -2M393 444l-12 -8M403 465l15 7M391 440l-6 -8M392 442l0 -8M391 439l8 -8M406 467l6 10M391 439l-6 -4M406 466l11 6M406 462l17 6M394 444l-1 -16M393 441l-17 -2M392 440l-2 -8M393 441l6 -14M394 442l-4 -12M406 461l-5 17M395 443l-14 -8M410 463l7 2M409 462l2 8M395 443l-7 -11M394 442l4 -12M412 463l3 9M394 440l-4 -14M396 443l4 -13M396 442l-2 -13M396 442l-4 -15M411 458l11 12M395 441l-13 2M396 442l-16 -9M394 440l-2 -12M392 438l-13 3M393 438l-6 -8M397 442l-11 -8M396 441l1 -14M395 439l-13 -6M396 441l2 -13M397 442l-2 -18M415 456l3 14M394 438l-8 1M397 440l-3 -17M417 458l12 4M397 440l-15 5M397 440l1 -17M418 457l2 8M393 437l-9 6M417 454l12 -6M420 456l5 2M395 437l-8 2M399 440l-15 -6M419 454l4 7M419 454l7 5M416 452l11 10M420 455l4 10M420 453l8 2M397 436l-11 -5M419 452l9 5M398 438l-8 -12M422 452l9 -7M417 449l11 -1M397 436l1 -17M420 451l8 3M418 449l12 8M396 434l-0 -16M422 451l13 -2M418 449l18 -5M420 448l14 -4M423 450l-2 14M421 449l4 16M422 450l11 5M421 448l5 13M422 448l8 3M421 448l9 0M401 435l-11 -3M422 447l10 3M400 434l-5 -15M398 432l-0 -12M401 434l-1 -15M424 446l10 7M401 433l-11 -6M424 446l10 0M397 431l-3 -15M400 431l-2 -15M403 433l-10 -10M401 432l-13 1M422 444l7 14M421 442l11 -1M402 431l-1 -17M398 429l-1 -8M402 432l-10 -9M403 431l-12 -9M425 443l14 -4M403 431l-6 -12M401 430l-3 -17M426 442l7 1M400 428l-14 7M401 429l-2 -9M422 440l11 11M400 427l0 -10M427 441l7 9M425 440l14 -4M427 441l9 3M428 440l-0 10M426 439l14 -2M426 439l11 0M428 440l10 -4M427 438l7 5M403 427l-8 -12M426 438l10 10M404 427l-11 1M427 437l10 4M427 437l11 0M405 427l-12 5M402 425l-9 5M430 437l-2 13M424 434l16 -3M425 434l14 -7M402 424l-4 -6M404 424l-9 -6M406 425l-5 -18M405 425l-3 -10M402 423l-14 7M407 425l-5 -18M405 424l-10 -14M432 435l0 11M403 423l-11 -8M406 423l-8 -6M407 424l-11 4M429 432l5 7M430 433l6 9M403 421l-2 -14M405 422l-12 -2M426 430l7 11M431 432l11 7M431 430l12 -8M430 430l8 3M404 421l-4 -14M402 420l-12 10M404 420l0 -14M408 421l-10 -11M428 428l7 15M430 428l3 15M433 428l5 7M434 428l12 -4M407 420l-11 -2M433 428l0 9M429 425l13 1M433 427l6 5M407 419l-6 -15M405 418l-13 11M410 419l-15 1M404 417l-0 -14M409 418l-15 -10M430 424l15 5M432 424l11 -5M408 417l-9 -15M434 424l8 -2M408 417l-14 3M432 422l6 13M432 423l10 4M435 423l1 10M434 423l6 -5M434 422l6 8M410 416l-14 -3M435 422l3 12M430 421l16 -12M405 414l-7 10M435 421l10 7M433 420l6 16M429 419l7 11M435 419l2 14M406 413l-4 -8M405 413l-3 -6M408 414l-10 3M435 418l6 3M408 413l-13 -6M431 417l8 14M434 418l13 1M435 417l3 11M437 417l1 12M433 416l9 7M431 416l9 12M437 416l6 3M434 415l13 -5M406 411l-7 -14M432 415l13 11M407 410l-11 -6M405 410l-9 -5M431 413l11 10M409 410l-13 11M406 409l-12 8M437 413l11 2M437 413l7 15M433 412l8 7M405 408l-10 11M436 411l3 13M434 411l8 -13M436 411l12 4M409 408l-12 -6M432 410l6 11M433 410l8 12M412 408l-16 14M406 407l-4 10M437 409l10 -3M436 409l13 4M408 407l-11 -12M434 407l9 -13M411 406l-13 -12M433 407l13 -14M432 407l12 -12M410 405l-13 15M407 405l-5 11M410 405l-13 -10M405 405l-11 7M432 404l15 10M406 404l-4 13M433 404l7 -12M436 404l10 1M432 403l14 0M406 404l-9 -7M438 403l5 -1M434 403l7 9M432 402l11 -13M408 403l-8 11M435 402l9 -4M436 402l9 -13M406 402l-8 2M436 400l8 -3M433 400l9 4M437 400l2 -11M409 401l-9 -6M408 401l-10 -2M406 401l-12 4M436 399l12 11M435 398l8 -5M431 398l15 -10M433 398l7 -11M437 398l9 10M407 400l-12 -2M407 400l-6 9M432 397l10 -5M436 396l8 -15M410 398l-13 -5M433 395l8 -11M411 398l-15 -10M410 398l-14 -4M433 394l10 1M411 397l-14 7M432 394l11 -1M409 398l-5 13M409 397l-10 -5M431 393l13 5M406 397l-11 2M406 397l-9 4M436 391l8 11M433 392l9 4M410 396l-15 -13M436 391l5 8M407 395l-8 9M435 390l7 9M407 395l-5 13M409 395l-13 -10M410 394l-9 9M406 394l-8 -5M433 389l11 -3M434 389l7 8M406 393l-12 4M410 393l-13 7M405 394l-0 11M407 393l-11 -1M405 393l-10 4M432 387l15 0M435 386l2 -12M409 392l-12 2M432 386l11 12M431 386l11 -6M429 386l16 2M429 386l9 -16M434 384l9 -11M406 391l-6 6M433 384l9 -8M404 391l-7 -1M430 384l10 1M407 390l-11 -1M435 382l5 -7M435 382l2 -9M428 383l16 7M404 389l-10 -2M429 383l10 -14M409 388l-14 -3M405 388l-12 -12M429 381l13 -13M429 381l15 9M429 381l11 -4M433 379l11 12M409 386l-14 -7M428 380l17 -3M404 387l-5 8M408 385l-18 -6M433 378l8 9M428 379l17 -5M429 379l6 -9M427 378l13 4M427 378l16 2M433 376l5 1M405 385l-13 -7M428 377l5 -13M404 384l-7 11M402 385l-3 13M404 384l-13 -0M430 375l7 -5M430 375l5 -11M429 375l4 -14M405 383l-11 7M425 375l13 -13M430 373l4 -8M428 374l5 -12M403 383l-15 -7M430 372l6 1M426 373l6 -17M405 381l-9 9M430 372l4 -8M425 372l16 6M427 372l8 -16M427 372l17 8M427 372l15 1M429 370l8 5M404 379l-9 2M428 370l7 -9M424 371l14 -11M426 369l13 -1M402 379l-2 13M405 378l-15 -8M424 370l6 -18M429 367l3 -5M399 379l-8 -2M402 378l-10 2M424 369l11 -13M429 366l5 -2M424 367l15 0M424 368l6 -11M402 377l-10 -7M427 365l11 1M428 365l12 8M402 376l-10 -4M403 375l-14 -3M424 365l14 -5M404 374l-13 2M427 364l11 -4M402 375l-3 11M423 364l16 -1M403 373l-15 -2M401 375l-11 -5M400 375l-5 8M422 363l16 4M423 363l5 -15M400 374l-8 1M424 362l15 5M397 375l-0 15M425 360l10 -0M399 374l-8 4M425 360l9 -6M424 359l6 -5M421 361l12 -7M421 360l18 4M420 361l14 7M400 372l-6 9M402 370l-7 18M424 357l1 -8M423 358l9 7M399 371l-10 6M419 359l11 -7M419 358l14 6M398 371l-7 13M418 358l6 -11M397 371l-14 -5M418 358l2 -17M418 358l13 -6M420 355l13 3M399 369l-17 -7M419 356l9 -4M417 357l10 -7M419 354l10 2M397 369l-4 8M419 354l11 -4M418 355l16 -3M416 355l8 -12M420 352l13 2M398 367l-13 6M397 368l-9 -0M418 351l-1 -10M397 367l-2 13M417 352l15 -3M419 351l9 5M396 367l-12 9M416 352l8 -6M418 350l11 -7M415 352l11 -5M418 348l-1 -9M417 349l11 -1M418 348l5 -10M416 350l4 -12M418 347l13 2M418 347l-6 -10M416 348l8 -1M416 348l10 6M394 366l-2 12M395 365l1 17M397 363l-17 7M392 367l-6 10M415 346l8 -2M415 345l6 -1M393 365l-11 8M392 366l-7 10M394 363l-15 -5M410 348l17 -1M394 363l-15 -3M411 348l16 0M410 347l2 -13M413 344l7 -1M412 345l15 -1M392 364l-9 4M409 346l11 -11M393 363l-18 -3M394 361l-4 16M412 343l0 -7M408 345l11 -5M411 342l-1 -16M410 342l14 -5M408 345l9 -5M389 364l-4 6M410 341l13 -2M391 362l-13 5M408 343l11 -11M391 361l4 14M389 363l3 11M391 361l-14 6M408 342l14 -2M407 340l9 -8M406 341l14 -6M392 358l-10 9M392 358l-12 13M405 340l-5 -17M407 338l2 -9M407 339l4 -11M390 359l-9 5M406 338l5 -6M387 362l-10 1M406 337l5 -5M403 341l-0 -18M388 360l7 14M390 357l-2 16M404 337l6 -4M390 358l-4 10M386 362l6 9M404 336l9 -8M389 357l-3 15M389 358l-5 13M387 358l-10 8M402 336l16 0M401 337l10 -5M387 358l-14 6M399 338l15 -4M385 361l-6 6M387 357l-4 12M385 360l-10 -3M386 357l6 15M387 356l-17 5M384 360l-3 7M387 356l1 17M399 333l15 -1M398 334l16 -2M399 334l4 -8M398 335l4 -7M396 335l11 -5M397 334l2 -9M384 357l9 13M396 336l0 -12M383 357l-5 11M396 333l13 -7M396 332l3 -8M384 356l-13 9M382 358l-3 5M383 355l-14 8M384 354l6 13M395 332l2 -12M392 335l11 -11M393 332l-9 -10M394 330l-10 -12M383 353l5 12M382 354l-8 9M393 329l-9 -9M382 354l-18 4M380 358l-9 8M381 354l-2 12M382 352l-12 13M392 329l4 -5M380 358l4 11M390 328l-3 -11M389 330l11 -1M389 332l-9 -11M389 332l15 -5M388 330l8 -7M379 356l-9 3M388 330l-10 -15M388 329l7 -9M386 331l-11 -17M387 329l-4 -11M378 355l-7 5M387 328l9 -3M377 356l1 7M385 332l-1 -11M386 327l1 -7M378 354l6 13M384 332l-8 -15M384 332l13 -8M377 354l-12 11M378 351l-6 12M377 352l3 11M376 353l-1 12M375 356l1 11M383 330l5 -9M382 329l-12 -14M382 329l11 -7M375 354l3 13M383 325l-3 -13M381 327l11 -11M375 351l2 16M381 327l-9 -12M374 353l-10 12M379 329l16 -8M373 355l-10 5M379 329l-7 -11M373 355l-7 4M379 327l6 -13M379 325l3 -8M373 351l9 14M373 349l-9 16M377 328l17 -7M372 351l12 12M372 352l-1 14M372 349l1 12M376 329l16 -10M371 351l2 15M376 329l-1 -16M376 328l-3 -16M370 351l10 8M370 354l-13 4M370 351l3 12M375 329l7 -14M374 325l-11 -7M374 325l-2 -8M369 354l-4 9M374 326l-3 -10M373 325l3 -11M372 327l5 -14M368 353l-10 5M368 350l-6 9M367 353l8 10M371 325l4 -10M371 324l6 -10M367 351l-3 8M370 325l13 -9M366 349l-2 13M370 326l-1 -13M370 328l1 -11M365 349l4 13M365 351l-11 10M368 328l3 -11M369 324l3 -11M368 322l2 -5M364 354l5 8M367 328l14 -13M364 349l-11 13M366 324l11 -7M363 353l-10 9M366 324l2 -8M366 327l-5 -16M362 352l9 8M362 353l-12 1M362 352l7 12M365 324l1 -9M363 328l-2 -17M361 352l2 11M364 325l-0 -12M361 350l-8 11M363 323l10 -6M363 325l10 -7M363 324l-4 -11M363 322l10 -8M359 352l11 7M359 348l-13 9M361 323l-7 -6M362 321l-9 -5M360 325l-7 -15M358 351l13 10M358 347l1 11M358 348l-0 12M359 323l-15 -9M359 324l6 -8M357 347l-7 11M359 322l-11 -10M356 351l-4 6M356 348l-4 12M356 348l-4 13M357 327l10 -9M355 349l-4 16M356 326l10 -12M355 351l-2 12M355 351l-10 6M354 349l-7 8M354 347l-0 14M354 353l-1 12M355 322l-11 -7M354 326l2 -13M353 347l12 9M353 353l-12 4M354 324l4 -10M353 324l-12 -9M353 327l-13 -15M352 349l-1 13M352 350l6 15M351 347l12 11M351 327l4 -16M351 351l12 9M351 349l-0 13M350 327l-11 -14M350 327l8 -16M350 326l8 -8M350 350l0 8M349 348l4 10M349 350l7 7M349 350l7 10M349 353l8 3M348 326l-10 -15M348 327l-7 -12M348 352l11 11M348 324l-12 -7M346 324l-5 -7M347 352l7 10M347 351l1 11M347 350l-7 13M346 349l13 6M345 323l3 -6M345 323l-16 -8M345 324l-11 -6M344 321l11 -3M344 321l-14 -8M344 325l6 -16M345 350l-2 13M343 324l-12 -7M344 348l8 10M343 323l5 -8M342 321l-7 -4M343 348l11 11M341 325l-13 -11M341 326l-6 -9M343 349l-9 13M342 353l8 4M342 350l-11 6M340 321l-6 -3M340 324l10 -10M341 353l2 6M341 352l12 3M341 350l-9 12M341 349l-1 16M340 348l-14 12M340 353l14 7M340 350l12 5M338 325l7 -8M336 327l-9 -8M336 327l-3 -15M339 351l-3 15M336 326l-12 -6M338 353l-3 7M338 353l-13 6M335 324l-5 -9M335 326l-9 -8M333 322l-13 -3M337 348l-13 13M333 323l-0 -11M337 354l-1 7M336 352l12 10M333 328l11 -15M335 349l0 18M333 327l-0 -10M334 349l10 11M335 352l7 12M331 322l6 -11M331 328l-15 -10M334 354l-7 12M334 354l5 7M333 350l8 15M329 322l8 -9M333 352l-5 14M328 325l-8 -6M329 327l5 -10M333 355l-12 6M331 350l12 11M331 349l-2 14M328 328l6 -17M332 355l-3 11M326 328l-3 -11M331 354l7 10M331 353l6 12M326 327l-2 -12M330 354l-8 10M329 349l13 13M325 328l-13 -4M325 327l-12 -10M329 356l7 9M329 353l4 11M324 329l-11 -8M328 353l6 14M323 328l2 -10M322 325l1 -7M323 330l-18 -9M323 330l-10 -9M321 327l10 -7M320 324l-2 -7M320 325l-10 -4M321 328l-13 -4M320 330l-1 -16M325 352l14 7M326 355l1 12M319 326l13 -12M324 350l5 17M325 356l2 11M325 355l11 2M325 355l-11 5M317 327l-12 -2M323 352l-7 16M323 354l14 5M317 325l-1 -5M317 331l-14 -9M322 354l-9 7M315 326l9 -12M316 328l-6 -11M321 353l12 8M314 326l-13 -1M321 354l13 3M314 326l-13 -1M313 326l8 -11M321 357l11 3M314 329l-10 -10M321 357l4 7M312 327l5 -12M320 356l13 3M320 357l10 2M319 354l12 11M319 357l9 6M318 353l-2 14M311 327l-11 -5M311 327l-6 -5M317 354l8 7M318 356l-8 12M310 330l1 -15M317 352l4 11M317 356l12 10M309 331l-5 -10M309 332l-11 -9M310 333l-2 -19M308 330l-1 -9M315 354l4 10M308 332l7 -15M308 330l-10 -5M315 358l-6 11M306 329l2 -12M307 331l-10 -8M315 359l0 11M306 333l3 -14M305 330l9 -11M314 359l-7 7M314 358l4 11M313 359l-11 10M313 358l6 6M304 331l-7 -9M313 359l4 9M311 355l4 10M304 333l-4 -15M311 355l13 7M303 330l-10 -1M311 358l3 7M310 355l18 5M310 355l3 16M310 357l13 5M301 334l9 -9M311 360l-4 12M308 354l18 7M309 356l-2 10M300 334l-3 -9M308 356l11 11M299 332l-4 -6M301 335l-10 -14M299 335l-19 -6M308 359l-3 9M298 332l3 -9M298 333l4 -12M307 359l-2 7M306 358l7 11M298 336l1 -16M307 359l10 8M296 333l0 -10M306 359l3 8M306 359l5 12M306 358l7 7M295 334l8 -11M305 360l18 2M296 338l-14 -8M305 360l-8 11M295 338l-13 -12M304 358l-6 15M295 338l1 -17M303 357l17 4M293 336l-9 -10M303 359l7 7M294 337l8 -13M293 335l5 -14M303 362l16 5M303 363l13 1M292 337l-12 -5M303 363l-7 12M301 360l7 13M291 338l-14 -2M302 362l-10 10M302 362l6 8M289 335l-15 -4M302 364l14 -2M288 335l6 -7M290 338l-9 -7M299 361l5 14M301 363l5 8M290 340l-8 -12M299 361l15 4M300 364l-5 15M287 338l6 -14M288 339l7 -10M298 361l-4 16M287 340l0 -13M297 360l-1 13M287 340l-3 -9M299 364l5 10M285 339l-12 -0M284 338l-9 -1M285 340l-17 -5M297 362l-2 14M295 360l-6 18M284 340l4 -13M295 361l2 17M297 364l10 10M282 340l-8 -9M297 366l12 6M284 343l1 -16M283 341l4 -11M295 365l11 2M283 344l5 -17M296 365l4 8M295 364l-1 13M279 340l0 -10M280 342l3 -9M293 362l15 2M295 365l-8 10M293 364l3 15M293 364l10 8M294 365l-1 10M281 346l-2 -14M277 341l8 -9M292 364l17 0M277 341l4 -12M278 343l0 -13M291 364l14 8M293 367l-7 9M292 366l6 6M277 345l-19 1M291 365l11 1M276 345l-6 -8M274 342l-4 -7M292 366l6 5M291 368l-4 11M274 344l-12 -2M290 366l13 0M292 368l-7 12M290 367l8 5M274 347l-7 -9M276 348l2 -16M292 370l12 -1M288 366l6 14M289 367l-3 11M271 345l-3 -11M290 369l11 -5M290 370l14 -3M288 368l-3 14M274 351l-12 -11M289 369l4 12M286 367l6 17M289 370l11 4M272 349l-1 -12M288 369l6 6M269 348l2 -10M289 372l13 4M273 352l2 -20M285 367l17 3M288 371l13 5M268 348l-14 -1M285 369l17 3M287 371l14 -1M288 373l-2 15M271 354l-7 -15M267 350l-13 2M268 350l-8 -3M266 350l-2 -7M267 351l-12 -5M285 371l6 9M269 353l-17 -2M267 354l-14 -5M267 353l2 -13M269 355l-11 -11M286 374l-4 9M286 375l7 -1M285 374l-3 13M267 355l-1 -11M263 351l-4 -6M282 372l14 8M265 355l-11 2M264 354l-9 -9M281 371l2 12M282 374l2 11M281 373l2 12M281 372l19 -2M262 354l-11 -5M281 374l-3 17M264 358l-1 -15M281 374l12 6M281 374l11 11M260 356l-9 -3M265 360l-2 -19M264 359l-17 -2M279 374l16 1M280 375l5 10M281 376l7 6M280 375l5 9M279 374l9 12M278 375l0 13M280 376l12 11M281 378l-1 15M281 377l12 -0M258 359l-12 2M279 377l4 8M259 360l3 -11M262 362l-11 -5M258 361l0 -11M279 378l1 16M277 376l12 9M280 379l-2 14M260 364l-14 -6M278 379l-1 17M257 361l-7 -10M277 378l13 8M280 381l10 -0M279 380l9 -8M277 379l8 7M259 365l-12 -6M256 364l-13 -1M257 365l3 -14M256 364l-13 2M255 363l-6 -7M278 381l2 15M253 364l1 -8M254 364l-2 -12M279 383l7 -5M276 381l3 14M275 380l12 -5M279 383l2 9M254 366l-7 -14M275 382l6 8M252 367l-12 3M277 383l6 8M273 381l0 15M254 369l-13 -3M273 381l5 11M253 369l-5 -12M255 370l-1 -17M274 383l8 3M272 382l10 4M255 372l-14 -3M251 369l-0 -13M251 371l-0 -17M252 372l-0 -15M273 384l11 6M273 384l7 10M254 374l-15 -9M273 385l15 1M248 371l-10 8M251 372l-10 3M271 385l14 7M252 375l-13 2M253 375l-19 3M249 373l-7 -8M272 387l4 13M247 374l-10 -5M248 374l-7 -1M249 375l-10 -5M247 376l-2 -12M272 388l8 11M272 387l6 8M251 377l-10 -9M275 390l8 -3M270 388l14 6M249 378l-12 -1M273 389l1 17M248 379l-7 -14M275 391l7 -7M272 389l17 -5M249 379l-7 -13M273 391l7 0M247 380l-10 -3M248 380l-14 2M248 380l-11 -0M272 391l9 6M246 381l-11 0M248 381l-4 -13M272 391l6 15M246 382l-11 -9M270 391l12 -8M246 382l-6 -9M244 381l-5 -12M248 384l-10 -1M273 393l7 8M270 392l10 -4M249 385l-13 -6M271 394l8 -8M247 385l-12 1M272 394l6 -7M247 385l-6 -13M248 387l-16 -7M270 394l12 7M244 386l-8 -3M247 387l-10 -3M246 388l-12 0M271 396l6 3M248 388l-18 -5M243 387l-13 3M270 396l5 10M247 389l-16 -1M246 389l-6 -10M271 396l10 3M242 389l-13 4M247 391l-12 5M270 397l7 6M247 391l-12 5M266 397l13 -5M245 391l-8 -8M244 391l-15 5M244 391l-5 -17M242 392l-7 9M246 393l-10 -11M267 398l7 13M270 399l8 -8M240 393l-6 5M272 401l8 3M245 394l-8 -16M269 400l8 -5M266 400l6 11M245 395l-12 2M266 400l17 0M245 395l-14 -9M265 401l15 -7M269 402l11 -11M266 401l17 -9M243 396l-6 -10M245 398l-17 1M242 397l-9 -8M244 398l-12 6M240 397l-13 5M265 404l11 -9M242 399l-13 -4M239 398l-7 -9M244 399l-12 -11M240 400l-12 8M266 405l13 6M268 405l6 -9M264 405l11 -6M267 406l13 -11M240 401l-8 -2M240 401l-6 6M270 407l10 7M244 403l-12 -11M239 402l-3 -9M240 402l-12 -3M270 408l-0 11M264 408l13 3M270 408l8 4M239 403l-8 -9M241 403l-7 -7M266 409l12 4M238 404l-3 -13M241 405l-9 -12M240 404l-8 -4M241 406l-16 2M270 410l7 8M265 410l5 14M265 410l15 -7M240 407l-7 -14M266 411l8 -9M240 407l-9 2M241 407l-14 11M268 412l5 7M265 411l14 5M243 408l-15 11M241 408l-10 -14M264 412l10 13M267 413l6 4M266 413l10 -4M267 413l13 -10M239 410l-6 -7M241 410l-9 4M267 414l10 1M240 410l-12 11M265 414l7 8M242 411l-13 -7M264 414l12 -6M265 414l10 -9M266 415l7 -4M241 412l-14 9M240 412l-14 -6M265 415l14 -8M262 416l17 -11M268 417l2 9M265 416l10 -4M265 416l9 -7M236 414l-9 -5M268 418l9 -3M241 414l-14 9M238 414l-5 10M238 415l-12 -7M243 416l-14 -13M240 415l-16 7M265 418l8 13M265 419l10 -8M268 419l5 -12M241 417l-13 2M240 416l-17 3M238 417l-11 -11M268 420l2 12M238 417l-4 -10M238 417l-13 -2M265 421l10 -1M240 419l-9 -13M265 421l11 6M263 421l11 12M267 423l11 -1M265 422l14 -5M267 423l5 -8M267 423l6 8M237 421l-12 5M241 421l-10 8M265 424l7 8M263 423l9 3M264 425l11 6M239 423l-14 -8M241 423l-12 -0M242 423l-11 -8M237 424l-7 7M267 426l9 -14M236 424l-11 -7M242 424l-17 2M239 425l-14 -8M264 427l14 2M263 427l10 12M264 427l12 3M264 428l14 -9M239 426l-13 0M267 428l7 6M238 426l-7 10M263 429l9 -2M237 428l-7 -3M239 428l-11 12M262 429l10 6M241 429l-16 -5M263 430l14 -3M237 429l-7 -2M266 430l8 -9M235 430l-5 -7M261 431l10 -10M238 430l-8 13M264 431l9 3M238 431l-13 1M264 432l11 -7M262 432l12 -13M261 432l13 -10M241 433l-11 4M262 433l12 -10M266 433l5 13M263 433l9 -11M236 434l-10 -11M261 434l15 -6M239 434l-9 4M261 434l16 4M265 435l14 -0M236 435l-7 2M237 435l-7 -12M240 435l-15 0M241 436l-8 -11M262 436l13 7M239 436l-13 3M262 436l8 -13M264 437l9 -6M263 437l9 -11M262 437l14 10M236 437l-8 -12M238 438l-12 12M236 438l-13 2M263 438l13 10M241 438l-15 -1M235 440l-6 -8M261 439l17 -8M263 439l13 2M239 439l-9 -5M235 441l-4 12M239 441l-8 8M267 439l7 8M267 439l5 8M237 442l-8 -12M236 442l-8 12M261 441l12 -9M267 440l4 -15M267 441l5 -5M236 443l-6 15M262 441l11 -6M237 443l-8 -7M261 443l14 -8M263 442l9 -9M266 442l7 12M265 442l5 -12M242 445l-13 16M261 444l10 -12M267 443l10 5M240 446l-15 -2M266 444l7 13M267 444l7 -13M266 444l12 -3M235 447l-5 1M239 448l-12 -11M236 449l-8 -7M262 446l9 -13M263 445l11 -8M266 446l6 -3M265 446l10 7M241 449l-9 8M240 449l-14 6M239 451l-14 -7M266 447l9 -12M238 451l-5 11M263 448l17 9M266 448l11 1M238 452l-6 5M268 448l11 9M266 448l10 6M239 454l-8 4M237 454l-9 8M237 454l-13 -6M265 449l14 1M237 455l-6 16M267 450l8 4M241 454l-14 -9M238 455l-9 -2M239 456l-10 0M268 451l8 0M236 457l-5 12M266 451l2 -13M237 458l-6 -3M265 453l12 2M240 457l-11 -2M242 457l-12 6M268 453l7 1M240 459l-9 4M267 453l7 0M243 458l-15 -11M243 459l-17 5M267 454l9 -10M266 454l12 3M266 454l7 9M241 461l-13 2M238 462l-5 5M269 455l3 -15M241 461l-4 12M265 457l15 2M264 457l12 -9M240 462l-6 8M244 462l-5 14M266 458l10 2M269 457l12 -3M238 464l-8 -13M268 457l9 8M242 465l-10 11M269 458l6 1M244 464l-12 -4M242 465l-15 4M269 459l8 -6M267 460l10 -2M243 466l-12 6M267 460l5 -12M241 467l-9 -1M245 466l-12 11M241 467l-8 3M269 460l14 -3M241 469l-13 2M268 462l12 -6M244 468l-7 9M265 463l16 -0M269 463l12 11M269 463l4 -13M269 463l8 9M246 469l-14 -1M242 471l-12 -5M241 471l-5 8M267 464l8 -5M246 470l-13 15M266 466l14 -0M268 465l13 -2M270 465l7 9M270 465l5 -15M266 467l15 8M267 466l15 1M244 473l-15 1M244 473l-13 4M266 468l18 -4M244 474l-8 15M245 474l-14 -2M271 466l6 -6M246 474l-11 -4M270 468l8 11M243 475l-9 -9M269 468l9 8M271 468l6 -11M243 476l-9 6M242 477l-9 1M267 470l8 -17M268 470l13 -7M242 478l-9 -11M267 471l12 8M273 469l5 -2M271 470l4 -17M268 471l14 -5M271 471l5 -14M270 471l15 6M242 480l-6 7M274 471l4 -6M269 472l10 -0M268 472l13 4M274 472l4 -3M272 472l10 6M271 473l1 -12M272 472l11 10M244 482l-10 6M272 473l6 -11M248 481l-11 12M272 473l8 3M250 481l-11 8M274 474l9 12M272 474l8 -3M273 474l6 -12M249 483l-16 5M270 476l13 0M244 484l-9 -1M274 475l7 5M269 477l16 -6M248 484l-10 1M250 484l-8 10M274 476l9 4M273 477l1 -11M245 486l-2 11M248 485l-8 6M249 485l-10 -9M270 479l10 -10M249 486l-9 14M273 478l12 5M273 478l9 -1M248 488l-16 -7M250 487l-15 -6M272 479l6 -9M275 478l9 9M273 480l5 -17M272 480l13 -7M271 481l13 -6M273 480l10 2M248 490l-4 7M251 489l-14 -0M273 481l9 9M246 491l-4 12M271 483l18 6M251 490l-14 4M271 483l18 4M277 481l7 -2M273 483l6 -15M249 492l-10 8M273 483l6 -14M248 492l-14 -3M276 483l9 4M251 493l-8 3M250 493l-9 8M275 484l13 -6M251 494l-12 6M277 484l1 -9M252 494l-17 -8M272 486l6 -11M275 486l13 7M250 496l-12 7M251 495l-10 9M254 494l-11 15M252 496l-12 8M250 497l-10 4M251 496l-13 6M253 496l-7 13M255 496l-14 -3M251 498l-9 -9M254 496l-9 14M273 489l10 -16M275 489l9 -5M279 487l6 2M254 498l-12 4M276 489l7 -6M255 499l-18 -8M254 499l-16 1M278 489l14 5M251 500l-14 -1M275 492l11 0M274 492l9 -5M275 491l17 -4M256 499l-10 15M277 492l13 9M277 492l11 7M254 501l-8 7M254 501l-9 10M278 493l17 1M252 504l-8 11M255 502l-16 -1M277 493l8 -17M252 505l-1 15M279 493l-1 -14M280 493l12 -3M280 492l2 -10M253 506l-1 16M253 506l-7 3M277 495l6 -14M254 505l-2 12M280 495l7 -4M279 495l16 2M255 506l-14 3M253 507l-9 -10M277 497l11 4M255 508l-8 5M279 496l10 -13M257 506l-4 16M282 496l7 -3M278 498l12 -3M255 509l-10 -5M256 508l-4 16M279 499l6 -16M254 510l-3 6M282 497l10 -5M283 497l4 -4M281 499l11 7M258 510l-6 17M259 510l-7 15M283 498l1 -9M279 501l12 -13M256 512l-7 -2M261 510l-12 -1M284 499l4 -3M257 513l-13 0M280 502l14 -4M284 500l2 -16M256 514l-8 9M279 503l15 -8M284 501l13 -5M282 501l16 7M285 500l13 8M259 515l-7 8M282 503l5 -12M282 503l13 -6M262 513l-4 13M260 516l-8 -1M261 515l-10 6M258 517l-8 -1M258 517l-3 8M285 503l15 7M258 518l-1 11M284 504l9 -9M283 505l4 -14M286 504l8 3M262 517l-15 -8M259 519l-2 14M260 519l-12 -3M261 519l-9 11M264 518l-12 6M285 506l6 -12M286 505l-0 -17M260 521l-8 -1M262 520l-0 10M285 507l12 -1M262 520l-3 12M261 522l-9 4M283 509l16 5M284 508l8 -9M265 520l-3 18M266 521l-15 -4M264 522l-9 -1M263 523l-11 1M266 521l-10 4M262 525l-8 5M266 522l-11 -1M286 510l4 -16M287 509l11 2M266 524l-7 9M288 510l5 -12M285 512l13 3M264 525l2 14M264 526l-5 11M266 525l-9 10M265 526l0 13M267 524l-6 17M290 511l10 -6M286 514l11 -16M266 527l-16 -2M287 513l13 -5M268 527l-7 6M268 526l-12 8M268 527l-5 14M267 527l-15 3M288 515l16 -7M267 529l-6 13M266 529l-9 -7M287 515l7 -9M269 529l-17 -2M292 514l8 -1M270 528l-14 4M270 528l-4 10M269 531l-8 7M289 517l3 -11M271 529l-16 5M272 529l-19 1M268 533l-12 4M269 532l-16 -5M268 532l-10 -7M291 517l8 -3M273 531l-12 9M270 533l-5 9M290 519l12 5M291 518l12 7M292 519l13 -9M271 533l-9 4M269 535l-10 -6M274 531l-20 0M294 519l16 3M292 520l6 -13M271 535l-13 -5M292 520l17 2M270 537l-10 -7M296 519l1 -8M270 537l-11 3M274 534l-11 -1M274 536l-11 9M271 538l-14 -5M274 536l-11 8M276 534l-8 8M297 521l7 -1M275 537l-4 14M295 522l4 -17M296 521l15 3M273 540l-4 5M298 522l12 -2M295 524l0 -14M273 540l-10 -7M297 523l14 5M295 525l17 5M297 523l-2 -15M296 524l2 -18M297 525l-2 -17M276 540l-11 -2M299 523l2 -14M277 540l-13 1M300 524l7 -1M297 526l6 -7M278 540l-15 -5M299 525l5 -9M300 525l9 -9M277 543l-12 2M277 543l3 11M298 527l10 -9M299 527l-3 -14M280 542l-17 6M298 529l12 -6M280 542l-14 -2M281 543l-1 12M302 526l5 -4M280 543l-18 -3M280 544l-8 5M282 544l-17 3M282 544l0 14M299 531l10 -9M303 527l8 9M280 547l-14 -7M303 528l9 4M300 531l5 -16M280 547l-7 4M302 531l9 -6M302 531l2 -10M280 548l3 16M279 549l-2 6M285 546l-4 18M280 550l-6 7M300 534l8 -14M281 549l-5 11M301 535l5 -16M282 550l-12 -1M284 548l0 14M281 551l4 10M282 551l-4 12M305 532l4 -12M283 550l-12 -4M304 533l13 1M284 551l-8 7M284 551l-12 -1M284 551l-0 18M306 533l13 -4M305 535l6 -15M283 554l-3 10M285 552l-12 -2M307 533l8 -4M286 553l-8 11M286 553l-7 12M307 535l-2 -11M303 538l15 -0M286 555l-5 12M288 553l-15 8M304 539l6 -18M289 552l-16 -0M305 540l10 -13M286 556l-13 3M286 556l-3 11M290 553l-13 1M305 541l3 -20M309 538l2 -13M286 557l-12 -3M308 539l4 -12M311 537l-2 -14M289 556l-17 -4M309 539l3 -15M307 541l9 -15M288 559l-15 -7M290 557l2 15M292 555l-3 11M291 556l-12 8M290 559l1 15M293 556l-13 4M310 541l8 -9M289 560l-14 -5M292 558l-1 17M290 560l-14 -1M290 560l-12 -1M294 557l-14 5M312 542l-1 -10M292 560l-12 -4M311 543l14 5M313 540l-1 -12M310 545l6 -11M315 541l7 -7M312 543l15 -2M314 541l9 -1M292 563l-17 -5M310 546l13 -1M315 542l9 4M292 563l-11 2M313 545l2 -17M313 545l13 1M315 543l0 -10M313 545l-1 -17M296 562l-14 7M297 561l-14 2M293 565l-12 -4M295 563l-17 -3M314 547l-0 -19M314 546l5 -7M312 548l17 -0M294 566l-6 9M298 564l-12 3M296 565l-11 -4M298 563l-9 11M295 566l-12 3M296 567l-8 -2M296 566l-7 12M297 565l-1 12M299 564l-11 2M297 567l-1 13M318 546l9 0M297 567l1 16M297 567l-2 10M320 546l11 2M316 549l7 -14M317 548l10 -2M300 565l-12 11M299 569l3 16M318 549l-3 -12M317 550l8 -10M299 568l-15 -1M298 571l-11 3M302 567l-12 1M300 569l1 16M318 550l9 -2M319 551l19 1M302 568l2 13M318 551l-1 -14M300 571l-4 5M300 572l5 16M321 550l-3 -8M304 568l1 17M300 572l-9 6M301 572l-9 -3M321 552l8 -8M302 572l3 9M301 573l-3 7M323 550l15 5M323 551l14 1M306 570l-11 9M322 552l17 3M322 553l9 -1M321 554l14 3M305 573l4 13M324 551l5 -5M325 552l3 -7M304 576l5 12M307 572l1 12M305 574l-11 -5M306 575l2 11M324 555l3 -11M305 576l-9 -6M324 554l12 -2M309 574l-15 -2M310 573l2 18M327 553l0 -11M326 555l9 -0M307 578l-5 8M328 554l3 -10M308 576l-11 -4M308 576l-16 -3M328 555l-8 -12M310 576l-13 1M327 557l7 -4M326 557l2 -10M330 555l12 -3M329 555l7 -3M309 580l-9 4M309 580l2 9M312 577l-19 -0M326 561l13 -8M328 559l14 -8M311 579l-14 4M331 557l8 -8M313 578l-13 8M311 581l-4 11M328 560l-3 -12M328 562l1 -14M312 582l2 13M330 560l-0 -12M313 581l-7 9M332 559l-3 -11M315 581l-9 8M329 562l-4 -13M313 583l-16 -2M315 582l1 16M314 584l-6 1M314 584l-6 1M314 584l-2 6M316 582l-5 6M334 559l-7 -12M318 580l6 13M331 563l18 1M332 564l15 -1M331 564l11 -9M334 561l8 -6M317 583l-2 16M334 563l11 -1M334 562l14 -4M320 581l-8 7M336 561l3 -10M336 562l-7 -9M318 585l6 13M320 584l-15 2M319 585l0 14M335 564l6 -10M337 561l2 -11M320 585l-5 6M334 566l12 -12M335 567l16 -2M320 587l-4 9M334 567l-2 -13M320 586l-6 7M336 566l-2 -13M322 586l-16 -1M337 565l-5 -16M336 567l5 -10M337 566l14 -5M323 586l-10 9M323 586l-8 6M321 589l-12 -1M339 565l9 -6M339 565l-1 -15M324 587l-13 3M337 568l3 -11M339 567l-3 -15M327 585l5 14M338 568l-1 -12M337 569l-0 -19M340 566l-8 -11M339 569l3 -13M325 590l-15 5M327 586l-13 3M339 569l13 -5M327 589l-2 14M341 567l14 -6M328 588l-10 3M327 592l-16 2M329 588l1 15M341 568l-3 -17M328 590l-5 9M329 591l-8 13M329 590l-0 16M343 566l-4 -10M341 569l5 -15M342 569l16 -2M342 570l12 -7M342 569l8 -10M330 591l-4 10M331 591l0 10M342 571l1 -18M331 592l-14 4M332 589l-13 2M343 570l8 -12M331 594l1 12M332 593l4 9M333 591l9 17M332 595l-16 1M345 570l5 -12M344 571l16 -6M345 570l5 -13M334 593l-12 9M334 593l-16 7M334 593l3 13M333 596l7 9M347 569l4 -8M347 569l2 -9M337 591l-2 17M348 568l-6 -9M337 592l-16 2M337 592l3 16M337 593l-8 7M348 570l-9 -11M349 569l-5 -9M349 570l-4 -8M347 574l2 -14M336 598l1 6M339 592l-7 17M348 574l-5 -14M338 596l5 11M350 570l4 -8M350 572l18 -2M351 569l6 -10M340 593l-4 11M338 598l-0 12M339 598l-5 5M351 572l-5 -11M341 594l-16 5M341 593l-13 13M352 572l-2 -10M352 571l8 -4M340 598l-1 7M342 594l7 17M343 595l-3 11M351 576l6 -15M341 599l-2 13M343 595l8 16M354 572l-1 -10M354 573l-8 -13M342 599l7 13M354 573l11 -2M354 575l5 -8M354 576l10 -9M356 572l9 -5M343 600l-10 7M355 576l1 -9M355 576l-8 -11M355 576l1 -10M346 595l8 18M358 573l-4 -13M355 578l12 -10M345 599l0 12M347 596l-14 3M348 596l-2 16M358 576l1 -9M347 598l-7 6M359 574l2 -10M360 574l12 -7M358 579l-1 -14M346 602l-9 6M346 601l5 13M349 597l6 19M347 601l-1 9M360 576l-2 -15M348 599l2 11M361 578l-7 -12M361 577l1 -9M349 599l-10 6M363 574l5 -8M350 599l-14 8M349 601l1 16M363 577l10 -2M351 599l-8 13M362 581l13 -4M362 581l14 -2M362 581l0 -17M351 599l3 14M365 579l1 -15M365 578l-2 -8M352 600l-4 13M350 604l-12 5M365 580l10 -3M353 600l-11 12M353 601l-3 11M353 600l5 15M365 584l19 -5M351 605l-6 10M353 601l-5 16M365 583l7 -17M355 601l-18 3M353 605l-10 2M354 602l-8 5M353 604l-12 -2M368 583l17 -2M369 581l9 -4M356 602l-15 1M370 580l-8 -13M355 605l-5 13M369 585l15 -3M355 604l-8 12M354 606l-13 5M371 583l-4 -16M370 585l3 -16M357 603l6 16M372 583l-6 -13M358 603l-12 5M371 586l1 -18M358 604l-8 8M371 586l18 -6M355 608l-2 5M372 588l-3 -13M374 585l3 -11M372 587l-5 -19M375 586l-4 -10M358 606l-14 -2M357 607l-2 10M356 609l-12 -0M357 610l-10 6M377 585l-8 -12M374 589l-4 -17M376 587l4 -12M359 609l-4 5M360 607l5 12M361 606l-12 6M378 586l4 -12M359 610l-17 -5M362 607l-3 11M379 587l-4 -11M360 608l2 11M377 591l4 -18M380 587l-6 -8M360 610l-11 -3M359 611l-10 3M380 589l14 3M360 612l-14 -2M378 591l13 -7M360 611l-12 6M364 609l-12 1M379 592l-2 -16M378 593l13 -4M362 611l-11 -4M379 593l10 -8M364 610l-5 14M381 591l6 -6M362 613l7 11M364 612l-13 0M363 613l1 15M381 593l14 -10M383 591l1 -11M383 592l6 -7M364 614l1 15M380 596l16 -8M383 592l11 2M383 594l14 5M364 614l-13 -6M364 615l-1 11M366 612l1 17M385 594l12 1M384 595l10 -7M386 593l-2 -9M386 593l1 -6M387 593l4 -9M383 598l20 -1M383 598l17 1M365 617l-8 5M370 613l-3 14M366 618l-10 2M366 618l-12 -0M388 595l12 -0M369 616l-8 3M387 597l-2 -16M387 597l-5 -15M371 614l-14 6M369 618l-7 7M386 600l1 -20M389 597l4 -8M368 619l5 13M387 601l15 -4M389 599l-1 -11M372 616l-12 2M387 601l11 -6M388 602l-1 -15M392 598l2 -4M369 621l5 16M371 618l-12 5M370 622l-5 4M391 600l8 -1M389 602l2 -17M389 602l11 -7M391 602l13 -3M371 622l-3 8M392 601l17 3M389 604l12 -11M393 602l13 -3M390 604l11 -14M371 623l-2 7M376 619l-1 16M391 606l8 -16M373 623l3 11M395 601l3 -7M391 605l15 -3M374 624l-6 3M373 624l-10 2M392 606l19 -0M374 624l0 13M378 622l-7 7M393 607l13 -6M375 625l3 17M394 606l12 -4M375 626l-13 -6M377 624l-16 -4M398 605l4 -13M375 626l-12 -0M399 605l8 1M396 608l0 -19M396 608l15 4M397 607l11 -11M398 608l8 -12M399 607l13 -3M398 608l17 6M400 606l9 -4M398 610l0 -11M380 626l-14 -4M380 626l-17 -4M398 609l3 -10M400 610l10 -0M378 630l-12 -6M401 608l15 5M400 610l4 -9M382 628l-0 17M383 627l-8 12M402 609l7 -5M379 630l6 12M383 628l-7 10M400 613l14 -10M382 629l-1 14M380 630l-10 -4M383 630l1 17M400 615l2 -15M382 630l0 14M403 612l5 -12M381 633l1 14M403 614l2 -16M405 613l-4 -13M402 615l8 -10M386 630l-5 14M402 617l5 -12M403 616l12 -3M404 615l10 -1M403 618l3 -11M404 617l15 4M404 617l15 2M404 617l1 -10M386 633l-11 4M384 635l-11 -6M403 620l5 -17M385 634l-4 16M405 619l9 -10M388 633l-5 10M407 617l3 -9M387 634l-5 14M405 621l18 1M410 617l-3 -16M407 620l1 -11M387 635l-6 13M406 622l0 -17M386 637l-15 -4M387 636l-16 -3M388 636l-1 18M407 622l5 -18M387 637l1 17M408 622l15 -1M410 620l-0 -12M390 637l-7 8M410 622l7 -3M387 639l-7 5M408 623l4 -10M409 625l-1 -13M409 624l12 5M409 625l15 -5M409 624l-1 -17M387 641l-6 11M390 639l-14 1M389 640l-9 -8M387 641l1 9M414 624l9 -5M413 625l15 -1M389 641l-13 -4M391 639l-5 14M392 640l-5 16M391 641l-2 14M388 642l0 10M392 640l-14 -5M393 641l-4 14M410 629l2 -15M391 642l-2 16M412 628l8 -2M414 628l8 3M412 630l18 -0M411 631l18 -0M394 641l-13 -3M393 643l-14 -2M415 629l-0 -15M412 632l2 -17M416 629l6 -3M414 631l-1 -13M390 645l-2 10M418 629l5 -3M392 644l-4 7M416 632l10 6M392 645l-8 1M394 644l-16 4M392 645l-16 -7M418 632l14 3M415 634l9 -11M396 644l-15 -2M394 645l-3 12M394 646l-8 9M393 647l-8 1M417 634l8 -8M392 647l-8 3M392 648l-11 5M416 636l10 1M417 636l6 -7M416 636l4 -18M416 638l11 -13M392 649l-1 8M419 636l0 -11M417 637l9 1M416 639l17 -2M418 639l0 -13M421 637l-2 -14M416 639l13 -7M394 651l-8 5M417 640l12 -13M417 640l11 -2M394 651l-14 -5M396 651l-14 -8M397 650l-11 -7M398 650l-12 -8M418 642l9 -14M420 642l11 5M398 651l-17 -4M399 651l-6 11M398 651l-3 16M418 645l12 -15M422 643l7 -1M396 653l-1 11M398 652l-6 18M423 644l14 12M421 645l8 -9M419 646l14 1M423 644l5 -2M395 656l-5 2M422 646l8 -15M420 647l11 8M420 647l18 3M400 655l-11 5M396 656l-3 16M423 647l3 -9M426 646l5 0M425 648l3 -12M422 649l9 -3M399 656l-7 12M424 648l2 -14M397 658l-9 -11M426 649l8 11M399 657l-15 -7M423 650l11 -5M397 659l-9 6M395 660l-5 -8M422 652l16 3M421 652l8 -12M401 659l-16 -7M424 653l10 -7M401 659l-5 12M401 659l-13 -4M398 661l-7 6M399 661l-6 13M401 660l-9 13M397 661l-4 15M401 661l-7 9M398 662l-5 7M422 656l14 -11M399 662l-12 -9M403 662l-13 14M398 663l-6 6M400 662l-11 -11M425 657l14 12M399 664l-14 -8M426 658l5 -14M398 664l-11 -3M397 664l-4 17M403 664l-17 -9M398 665l-11 10M426 659l11 2M429 659l4 -9M424 661l11 1M426 661l6 10M397 666l-2 14M427 661l10 4M398 667l-7 6M403 666l-9 12M424 663l13 -1M399 667l-9 -9M397 668l-12 -5M428 663l4 12M426 664l12 2M426 664l14 2M403 668l-15 -9M398 669l-8 14M398 669l-6 -12M401 668l-5 13M400 669l-7 7M404 669l-18 -4M424 667l7 -14M398 669l-11 7M426 668l13 1M399 670l-9 -9M426 668l12 12M401 670l-9 -11M424 669l11 5M400 671l-7 -9M425 669l8 11M399 671l-2 12M424 671l17 1M399 672l-7 -3M427 671l8 -6M400 672l-8 -7M428 672l11 3M430 672l3 -10M430 672l5 -6M398 673l-5 -9M424 673l11 -0M426 673l13 -10M403 674l-9 -7M428 673l13 5M430 675l4 13M429 675l11 -11M427 675l11 3M426 675l14 -9M425 676l15 -5M427 676l14 -8M400 676l-9 -6M398 676l-12 2M400 677l-11 10M404 677l-12 -15M403 677l-14 10M402 677l-11 -12M400 677l-10 -4M400 677l-7 3M430 679l3 11M399 677l-10 6M404 679l-17 2M402 678l-7 -8M399 678l-6 3M399 678l-7 -6M400 679l-6 -12M424 681l12 2M428 682l12 3M402 679l-10 4M397 680l-7 -1M427 683l12 -0M425 683l14 4M425 683l11 14M400 681l-9 12M404 682l-10 -5M402 681l-13 -9M399 681l-8 11M428 686l10 -2M429 686l2 9M423 685l10 -10M399 682l-4 -10M429 688l7 -8M429 688l2 12M429 688l4 -9M398 683l-7 -7M426 689l3 11M398 683l-8 -14M399 684l-9 -6M427 689l13 5M400 685l-6 -8M401 685l-13 -10M427 690l6 6M425 690l8 -9M424 691l12 2M399 685l-11 6M401 686l-9 -10M422 691l7 11M400 687l-13 0M423 692l8 10M428 694l7 8M427 694l11 -9M424 694l9 -11M400 688l-8 -7M422 694l13 -1M402 688l-12 -4M423 695l15 -11M423 695l13 -3M402 689l-10 -3M422 695l3 13M422 696l12 6M398 689l-13 5M401 690l-16 -1M401 690l-11 -3M400 691l-6 -7M425 699l9 3M397 690l-2 -10M422 698l13 -6M422 700l6 6M400 692l-8 -16M426 701l7 6M398 691l-3 -11M426 702l9 6M424 702l3 8M396 691l-13 -3M399 693l-10 -9M399 693l-13 1M396 692l-13 8M421 702l11 -6M419 701l16 1M396 693l-8 1M394 692l-8 -8M395 693l2 -12M398 694l-4 -13M400 696l-15 -0M399 695l-9 -15M394 693l-9 3M419 703l17 6M419 705l16 -0M419 705l15 5M419 705l13 -8M418 704l18 -8M422 707l-1 12M423 708l7 1M419 706l14 5M393 695l-5 -0M395 697l-1 -12M397 697l-9 -10M419 707l11 -3M396 697l-13 8M422 710l9 0M420 709l9 5M396 698l-11 -4M393 696l-5 -1M397 700l-18 6M418 709l11 8M393 697l-7 9M420 710l9 3M417 710l18 -6M416 709l13 1M392 698l-3 -7M418 711l7 10M392 699l-12 7M416 711l17 1M418 712l2 10M418 712l9 -9M415 712l11 -1M391 700l-7 -0M392 700l0 -17M393 700l-5 -14M417 714l8 2M418 715l12 -5M395 702l-9 -4M395 702l-12 -2M418 716l6 2M393 702l-7 -2M392 702l-13 9M391 701l-14 9M393 703l-0 -11M418 717l10 1M393 703l-2 -14M414 716l10 11M390 703l-6 -2M395 706l-5 -18M392 704l-13 -3M393 705l-18 4M390 704l-4 -5M412 717l3 12M415 719l8 4M416 719l-2 16M416 721l13 -6M392 706l-3 -9M389 704l-8 6M389 704l-9 -9M391 707l-11 5M413 720l14 -2M411 719l17 -1M410 718l20 -4M414 722l14 -3M390 707l-6 -14M389 706l-15 3M392 708l-17 1M387 707l-12 -2M412 723l12 6M412 722l10 -5M389 708l-11 2M410 722l6 16M392 711l-10 -15M389 709l-16 6M392 711l-15 -6M413 726l8 9M410 724l12 -6M410 724l15 -3M408 723l19 2M407 724l14 4M409 725l-0 12M410 725l11 -5M389 711l-14 -7M406 725l19 -5M411 728l8 7M406 724l13 11M408 726l8 4M386 712l-16 4M387 712l-10 2M405 725l16 -3M405 725l1 19M405 727l13 -4M408 729l14 3M387 713l-15 3M410 730l9 -7M384 712l2 -12M384 712l3 -12M405 728l11 10M409 731l13 -7M387 716l-11 -2M406 730l9 1M404 729l15 -5M388 716l-2 -20M385 716l-15 -3M407 733l11 -7M405 731l-0 11M406 732l10 4M383 715l-16 6M382 714l2 -15M404 731l6 15M383 715l-0 -16M404 733l3 16M381 715l2 -12M384 717l-16 0M401 731l19 0M384 718l-16 2M385 719l-9 -10M381 716l-5 -11M403 734l12 -3M383 718l1 -10M404 737l7 5M402 735l7 3M383 718l3 -13M382 719l-11 -1M402 736l10 -3M400 734l7 12M384 721l-11 -13M403 739l-4 16M402 738l2 9M400 736l5 8M383 721l-14 1M380 719l2 -10M382 722l-1 -14M381 720l-13 -5M382 721l3 -12M378 719l-16 5M397 737l14 -1M380 721l2 -16M401 741l5 1M400 742l-6 13M381 723l-11 -13M399 740l5 10M378 720l-9 -0M398 742l13 5M398 742l6 4M399 743l6 4M397 740l14 7M378 723l-6 -10M395 740l-1 19M398 743l3 8M396 741l19 -1M376 722l-5 -12M379 725l-15 3M379 725l-2 -11M379 725l-13 3M377 725l2 -14M392 741l6 17M376 723l-7 -13M396 745l16 -3M375 723l-3 -9M375 723l-3 -12M391 741l17 3M376 725l-11 -6M377 727l3 -15M375 725l-15 3M376 726l-14 -6M394 747l16 -4M390 744l12 11M375 727l-12 1M376 727l-7 -8M373 724l7 -16M375 728l-18 -3M392 749l17 -4M392 748l10 -6M392 749l9 1M371 725l-4 -6M391 750l-1 7M375 729l-7 -9M375 729l-3 -13M387 747l1 11M387 747l9 11M388 747l4 16M371 727l-14 1M388 750l-2 16M388 750l-6 11M373 730l2 -13M370 727l-14 -0M370 728l-10 2M384 747l18 -0M384 747l4 16M372 730l-4 -12M387 752l-4 15M369 729l-7 -9M371 731l-15 -9M370 730l-8 -6M369 730l-13 -0M384 751l8 5M367 728l4 -12M383 750l14 -1M367 729l-12 3M367 729l-7 -5M369 732l3 -17M370 733l-5 -14M381 751l5 10M383 753l-6 12M380 750l-4 16M366 730l6 -13M380 753l5 9M381 753l-2 16M365 730l4 -9M380 752l4 8M380 754l-1 13M366 734l-12 1M381 756l17 -2M367 735l-5 -16M366 736l2 -16M363 732l-15 3M379 756l13 -0M365 734l1 -15M365 736l-11 -6M364 734l-8 -6M363 734l-6 -14M380 759l8 6M362 733l2 -11M376 755l9 9M376 756l4 15M375 755l18 4M363 738l-5 -13M360 733l-5 -10M374 756l-1 13M363 738l1 -17M361 737l4 -12M361 737l-6 -13M361 736l-7 -10M374 757l-6 11M372 757l1 17M375 761l9 -0M359 736l-6 -9M373 759l-1 12M357 734l-14 0M358 736l-4 -9M372 759l12 1M359 739l-6 -11M357 736l7 -15M372 761l12 2M359 740l-7 -8M370 758l13 9M358 741l-11 -9M370 762l17 1M355 736l-0 -7M357 739l-5 -13M355 738l7 -14M367 759l17 4M355 738l-10 -1M355 737l-9 -6M354 738l9 -13M356 742l-12 -6M369 764l11 -2M366 759l6 10M367 765l12 1M354 740l-8 -5M354 741l-9 -9M354 741l4 -11M367 766l-9 13M365 764l-4 13M352 740l-0 -11M351 738l-14 -3M353 743l-0 -15M363 762l11 12M364 763l11 4M350 739l-11 -7M361 762l3 13M349 739l-7 -7M349 739l-1 -11M350 741l9 -12M349 741l2 -12M360 762l19 5M361 763l1 17M363 767l4 4M362 768l8 4M361 767l-0 9M350 745l5 -19M347 740l-3 -7M360 768l14 -0M348 744l-13 -1M359 766l1 14M360 767l8 4M346 743l-3 -10M345 741l-11 2M359 768l15 6M357 765l-2 14M358 770l-7 9M358 769l-3 10M346 746l0 -12M344 742l-5 -5M355 767l15 7M345 746l-14 -3M344 744l5 -9M344 744l-16 -6M342 743l-9 -8M356 772l8 5M343 744l-12 0M342 743l-10 -4M354 769l5 9M341 743l1 -8M355 772l-1 6M343 747l-8 -14M352 769l-7 14M352 769l-2 14M342 746l2 -11M342 746l-2 -11M353 773l-10 12M352 772l8 11M341 749l-2 -11M339 744l8 -13M351 771l-8 9M341 750l2 -12M350 771l-4 10M349 769l1 11M339 749l-13 -3M348 769l-1 15M339 750l-14 -1M337 745l2 -11M337 746l2 -7M349 775l8 4M337 746l8 -12M337 748l-2 -10M347 773l13 7M337 748l-6 -5M336 748l8 -9M346 771l13 1M336 749l-0 -11M336 749l1 -10M336 750l-13 -6M345 770l7 14M345 773l1 15M345 774l8 7M334 748l-16 -1M335 751l3 -12M345 776l1 9M333 748l4 -14M335 752l-14 -5M335 752l5 -11M332 748l-12 -5M333 750l-5 -7M334 753l-7 -14M333 751l-10 -7M341 772l4 12M341 773l5 8M340 772l10 13M342 775l10 3M340 775l0 11M332 752l0 -16M331 752l-12 -1M342 778l4 3M331 754l-9 -16M330 750l3 -7M329 749l10 -10M330 751l-1 -14M338 776l9 11M329 750l-8 -4M339 779l0 10M330 753l-18 -5M337 776l11 10M329 754l-16 -7M337 775l16 6M328 751l-1 -9M327 752l-4 -9M327 753l-8 -9M327 751l-12 -6M327 751l-6 -9M335 777l-0 10M335 777l-4 10M327 753l-4 -8M335 777l-0 11M333 776l-3 16M334 778l7 8M333 776l17 9M326 755l-14 -10M325 754l-2 -10M325 754l-7 -7M325 753l-3 -9M325 753l-5 -14M323 751l-11 -3M331 777l3 12M331 775l-1 15M324 754l11 -13M331 779l15 8M323 755l9 -11M322 751l3 -5M322 751l-2 -12M330 780l3 7M321 751l10 -7M323 757l-16 -8M322 753l-12 -10M328 779l-10 8M320 752l8 -7M327 776l17 7M322 757l7 -14M320 754l9 -13M328 782l3 5M319 753l7 -7M320 754l3 -13M320 757l5 -17M326 779l-3 14M326 782l-9 7M326 781l7 8M318 753l5 -9M318 755l-7 -8M318 753l1 -7M317 753l-15 -2M317 754l-8 -8M317 756l-3 -10M323 779l12 7M323 779l14 5M323 782l10 9M315 753l-4 -12M323 781l0 12M316 756l7 -9M315 753l-9 -1M321 780l7 9M315 754l1 -7M321 781l8 13M321 784l-8 11M320 780l-4 9M320 781l-10 9M320 778l-11 14M320 784l8 4M319 783l8 4M314 759l-1 -12M319 779l-8 12M318 782l10 8M312 754l-10 -1M317 779l10 8M318 782l13 6M311 756l-1 -14M317 782l-4 13M312 758l11 -11M312 759l-3 -13M311 758l12 -14M316 784l7 9M310 755l-11 -3M316 786l7 6M315 784l11 7M315 782l-11 12M314 780l10 9M310 758l-2 -13M314 786l-4 6M313 781l7 11M314 784l-8 8M308 755l3 -12M308 759l-12 -13M308 759l-7 -13M308 758l-3 -11M307 754l-12 1M306 755l-7 -12M307 756l-13 -2M307 758l-7 -9M307 757l-6 -7M310 783l-2 10M310 782l9 10M305 755l13 -9M305 755l4 -9M305 757l11 -6M309 782l-2 12M305 760l-14 -11M305 756l13 -10M308 784l-1 12M304 757l-10 -10M304 756l0 -11M308 781l-6 16M303 759l13 -12M307 784l10 8M303 755l-9 -4M307 785l11 6M302 756l7 -5M302 759l-12 -3M302 758l7 -12M305 785l-6 15M304 786l0 12M304 784l-1 13M304 786l-6 9M301 756l-3 -12M302 781l-3 16M300 757l-3 -11M300 759l10 -9M300 760l-14 -7M299 758l10 -12M299 761l4 -16M299 757l11 -9M301 783l-6 10M300 788l-0 5M300 788l-1 7M298 758l11 -6M300 783l4 16M298 781l-8 17M297 756l-9 -2M299 784l4 11M299 785l-6 7M297 785l0 11M297 782l-7 13M296 760l6 -10M297 784l-8 10M296 782l-12 11M295 756l-3 -8M295 759l10 -13M295 758l-9 -9M294 762l12 -16M294 757l-12 -3M295 783l12 12M295 787l14 8M293 760l-4 -9M293 785l9 7M294 788l5 10M293 784l0 14M292 762l3 -11M292 782l-12 15M292 760l-13 -9M292 782l11 16M291 782l3 18M291 757l14 -5M291 787l-9 3M291 756l-1 -6M290 758l11 -4M290 757l7 -5M290 787l-1 6M290 787l-7 7M289 783l7 14M290 756l-5 -9M289 762l8 -12M288 788l-2 5M289 757l5 -13M288 782l11 15M288 782l2 15M289 756l-10 -11M288 761l-1 -14M288 760l-11 -13M288 756l-4 -7M288 759l7 -7M287 761l9 -13M287 756l4 -5M285 787l-12 2M287 760l-10 -10M284 788l-12 1M284 786l11 11M284 784l-8 12M284 785l-2 7M285 757l3 -14M283 782l2 12M282 786l-9 4M285 760l13 -13M284 756l-6 -12M284 761l1 -18M281 786l12 9M281 785l-15 9M280 782l-9 12M280 786l-10 10M280 782l2 13M280 783l6 10M282 759l-10 -13M279 782l7 12M282 761l-12 -10M278 785l-8 6M281 761l-4 -16M281 756l-10 -10M282 755l9 -1M281 759l-10 -11M280 760l8 -8M281 756l-6 -9M280 757l-0 -14M280 757l13 -9M280 756l-0 -13M274 785l12 8M279 758l-6 -10M280 756l3 -8M278 761l-12 -15M274 781l-6 15M279 756l5 -10M278 761l10 -13M278 757l12 -6M278 757l12 -8M272 781l5 15M278 755l-11 -10M276 759l14 -10M278 754l-2 -7M270 784l3 12M270 784l6 10M277 756l10 -8M268 785l-11 3M269 781l2 17M269 781l-7 11M268 780l-13 12M276 755l-1 -13M268 781l-13 3M276 756l14 -4M266 783l0 8M265 784l-9 6M274 758l-6 -12M267 779l-18 9M275 753l5 -5M266 778l-4 15M273 758l-10 -15M266 779l3 15M264 779l6 17M273 757l13 -6M263 783l-1 10M274 755l13 -9M272 757l4 -15M263 779l-1 17M261 782l1 12M261 783l9 14M271 758l8 -15M260 781l-11 6M261 780l-2 7M272 756l7 -14M260 778l8 14M272 754l3 -6M273 754l-8 -12M260 778l-12 8M259 776l-16 1M272 755l2 -14M272 755l-4 -14M273 753l9 2M272 754l5 -4M256 778l-7 9M256 779l-18 -1M255 779l9 13M272 752l-6 -12M270 755l13 -3M270 756l-2 -12M271 755l12 0M269 755l0 -15M253 776l-2 10M256 773l-16 3M268 757l-1 -20M253 773l6 11M272 752l9 3M268 756l0 -14M252 774l-12 8M250 774l-6 6M249 774l-15 -4M252 772l-13 1M270 753l9 -2M249 772l-11 10M271 752l13 6M271 751l12 1M251 771l-4 10M268 754l2 -13M271 751l13 2M251 768l-17 0M270 753l10 1M249 767l-13 12M268 753l8 -10M269 753l0 -15M270 752l6 -5M249 765l-16 9M270 752l13 5M245 768l-10 2M247 767l-13 -6M245 766l-11 -4M245 766l-6 3M243 767l-0 15M266 753l2 -14M246 764l-3 18M248 763l-14 -5M271 750l12 11M267 752l11 6M246 762l-16 3M270 750l4 -12M265 753l14 -10M270 750l6 -11M264 752l11 -13M244 761l-14 -1M246 760l-4 13M268 751l1 -12M269 750l12 10M266 751l13 -4M244 759l-16 -3M243 760l-12 -9M245 757l-14 4M240 759l-3 9M242 758l-6 10M241 759l-10 5M240 757l-7 -5M243 756l-16 -10M244 756l-12 9M270 748l7 -6M244 755l-10 13M266 748l6 -17M264 749l18 -3M245 755l-8 14M243 753l-17 0M269 747l3 -15M241 754l-12 7M239 754l-6 -8M239 753l-2 14M267 747l8 -8M240 753l-10 -3M269 746l8 -2M265 746l11 -11M269 745l6 12M242 751l-9 4M266 746l9 4M267 745l4 -11M265 745l13 -5M266 745l9 11M266 745l5 -11M237 749l-10 -0M266 744l12 11M264 744l11 -5M267 744l4 -11M264 744l8 -14M237 748l-8 -3M264 744l8 -15M238 747l-8 8M239 746l-13 -3M240 746l-14 5M240 746l-12 -6M238 746l-6 -4M237 745l-6 -11M237 745l-5 6M241 744l-7 -10M268 741l9 1M242 743l-13 8M242 743l-14 13M266 740l8 -11M268 740l12 5M242 741l-9 -9M265 739l14 -2M266 739l6 11M236 742l-6 -13M268 738l3 12M238 740l-14 -3M237 740l-7 -14M267 738l10 -7M267 737l6 2M264 737l7 12M268 737l2 11M262 738l10 10M268 736l5 -7M267 736l9 7M242 738l-17 6M242 738l-13 -6M262 736l16 -4M267 736l11 -6M264 736l16 -4M265 736l10 1M262 735l13 12M268 735l3 9M242 735l-10 -7M265 735l6 -11M242 734l-9 -9M266 734l6 9M264 734l14 4M241 734l-13 15M237 733l-5 8M263 733l8 7M238 733l-8 3M239 733l-12 -7M266 732l12 -7M239 732l-8 1M236 732l-8 7M237 732l-6 -5M237 731l-5 -9M266 731l11 4M263 731l11 -8M238 731l-14 -1M263 730l10 -5M267 730l11 -5M267 730l8 -13M238 730l-5 -13M266 730l13 7M264 729l10 7M264 729l13 -3M241 729l-14 8M265 729l15 -0M268 729l8 -1M240 727l-14 -9M240 727l-13 -10M242 726l-17 2M236 726l-5 9M242 726l-13 2M241 726l-17 -1M265 727l13 -8M268 727l9 -1M242 725l-18 4M263 727l14 4M265 726l6 8M264 726l10 5M266 726l11 4M267 726l11 8M265 725l8 2M263 725l12 -1M237 722l-5 -13M266 725l9 10M268 724l11 8M239 721l-12 -8M240 722l-8 -1M242 722l-13 2M268 724l12 0M265 723l8 -10M264 723l13 8M266 723l9 -6M267 723l13 4M266 723l5 15M239 719l-3 -12M242 719l-14 -9M265 721l14 -6M242 718l-12 4M238 718l-5 -5M269 722l5 9M266 721l12 4M240 716l-5 -12M266 720l10 -5M238 716l-8 10M268 720l8 -9M239 715l-9 -5M268 720l10 5M266 719l13 5M239 713l-8 -8M243 714l-11 7M242 714l-10 9M239 713l-10 1M240 712l-9 -3M244 713l-11 -4M238 712l-6 9M240 712l-6 10M244 712l-17 -3M244 711l-6 -14M268 717l4 7M268 717l12 2M241 709l-8 10M268 716l9 -12M269 716l8 2M239 709l-10 -4M266 714l12 -4M243 709l-8 -9M268 715l10 -1M268 715l9 6M265 713l14 -5M240 706l-4 -8M268 714l8 14M264 713l16 -0M264 712l11 -4M245 706l-10 -16M267 713l8 9M243 705l-5 -15M246 705l-10 7M241 703l-10 -8M244 704l-13 2M244 704l-14 8M267 711l7 9M246 704l-12 1M241 702l-12 4M243 702l-15 8M241 700l-0 -10M246 702l-17 8M270 711l11 -3M245 702l-12 4M242 699l-8 -3M247 701l-10 -6M270 710l4 8M267 709l16 -10M243 698l-9 -11M243 698l-2 -12M270 709l6 12M270 709l11 -0M269 707l14 7M244 697l-10 1M273 709l11 -0M244 697l-4 -11M269 706l13 1M247 697l-13 -0M247 697l-7 -17M246 696l-11 -8M246 695l-6 -16M247 695l-7 -15M246 695l-1 -16M246 695l-16 2M245 693l-6 -9M273 705l5 10M273 705l6 3M272 705l8 13M248 693l-11 -10M245 691l-7 -12M245 691l-9 -4M271 703l16 -2M250 692l-1 -13M270 702l17 -5M249 691l-10 7M269 701l12 11M270 701l13 3M273 702l9 9M250 690l-9 -5M271 701l4 14M249 688l-13 -4M272 700l3 19M249 689l-7 -3M248 688l-7 -2M272 699l16 -8M272 699l9 -3M249 687l-5 -5M271 699l13 -6M274 699l5 14M275 700l8 7M271 698l13 0M275 700l13 4M251 686l-9 3M254 687l-6 -12M274 699l2 13M277 700l-0 9M250 684l-15 5M252 685l-13 -5M249 683l-3 -9M254 686l-13 -5M272 695l19 -5M275 697l8 4M254 685l-16 4M249 682l-7 -2M278 698l9 4M272 694l14 -4M276 697l8 -6M256 684l-13 -8M273 693l14 12M255 683l-14 -2M253 682l-13 3M253 682l-14 3M256 682l-16 3M251 679l-4 -2M252 680l-14 1M278 695l-2 13M276 693l14 -6M252 678l-3 -8M257 681l-8 -14M278 694l4 7M275 691l13 8M275 691l19 -5M258 681l-6 -13M279 694l11 6M278 692l4 16M277 691l13 9M258 679l-13 -7M278 692l6 5M280 692l-2 14M254 675l-13 -1M257 678l-15 -4M279 691l13 0M255 675l-0 -8M280 691l14 -3M278 690l13 -2M255 675l-4 -11M257 675l-6 -7M279 689l14 4M277 688l12 9M278 689l15 -4M278 687l19 -6M283 691l8 4M279 688l8 6M280 689l5 7M278 686l11 4M283 690l-1 7M258 673l-10 0M258 672l2 -12M260 673l-16 7M279 686l12 1M280 686l-0 13M260 673l-8 -7M282 687l16 -1M259 671l-10 -10M280 685l14 -3M262 673l-10 -6M264 672l-17 -3M282 686l7 8M259 669l-10 2M283 686l8 4M284 686l10 -8M285 686l7 3M261 669l-11 -8M260 669l-11 -3M283 683l12 -2M282 683l11 5M260 667l-12 -4M264 670l-10 -13M264 668l-11 -4M283 683l10 5M282 682l13 1M282 682l14 9M261 665l2 -11M261 665l-8 7M263 667l-11 0M261 665l-9 1M265 667l-14 -1M263 665l-0 -14M264 666l-12 -1M262 665l-9 2M267 667l-19 3M263 664l-7 -7M284 679l9 16M266 666l-2 -11M283 678l12 9M267 665l-13 -6M265 664l-11 1M286 680l11 7M265 663l-9 3M285 678l15 -2M286 679l6 12M286 679l1 15M288 679l4 15M287 678l3 11M285 676l13 -2M285 677l5 18M287 677l11 4M269 663l-6 -15M267 661l-11 -7M269 662l-6 -10M266 659l3 -11M288 677l12 8M291 679l9 -5M266 659l3 -11M267 658l-12 -3M288 675l18 -3M292 678l14 -7M271 661l-16 -7M272 660l-18 4M290 675l15 -4M289 675l17 -5M289 674l11 4M269 657l2 -13M270 658l-6 -12M272 659l1 -19M290 674l7 12M292 675l10 -4M290 672l11 2M273 658l1 -17M293 675l-0 11M290 672l-1 20M273 657l-1 -15M270 654l-8 3M293 674l15 -3M295 674l5 10M293 672l9 11M291 671l5 9M294 673l-1 10M275 655l-14 -9M294 672l7 6M292 670l4 17M275 655l-3 -18M296 673l-3 14M293 670l11 6M292 669l16 -2M272 651l2 -8M293 668l3 15M276 653l-11 -4M294 670l1 18M273 651l-7 -3M276 651l-12 -4M278 653l-18 0M276 651l-5 -6M279 654l2 -15M275 649l-12 -2M294 666l5 11M293 666l14 6M275 649l-3 -7M276 648l3 -13M297 668l6 9M296 667l17 -0M277 649l-2 -7M281 651l-8 -16M277 647l-2 -9M298 668l10 2M277 647l-0 -13M281 650l-12 -2M278 646l-10 6M299 667l11 -3M298 666l4 13M301 667l9 5M297 664l-2 16M281 647l-10 -5M278 645l-11 6M281 646l-2 -17M301 666l9 7M302 667l3 11M280 645l-17 6M302 665l11 -4M283 646l0 -16M301 665l-4 13M281 644l-5 -12M299 661l15 8M284 645l-15 -3M303 665l8 10M281 642l-9 -6M302 662l-5 13M301 661l15 -3M282 642l-9 -8M282 642l5 -11M303 662l8 1M284 642l-3 -10M287 645l-12 -14M300 659l12 3M287 643l-2 -17M305 662l15 -6M304 661l1 12M285 641l-8 -10M287 641l2 -17M288 642l-9 -12M288 642l-12 -6M285 640l-11 3M305 659l6 15M288 641l-4 -15M305 659l12 4M289 642l-13 1M290 641l2 -19M304 656l-3 16M287 637l-6 -7M288 639l-9 -9M306 657l1 13M290 640l-6 -8M291 640l4 -15M287 636l-7 -7M291 638l-13 -7M289 636l2 -11M289 637l-15 -1M289 636l6 -16M308 656l6 9M306 653l15 4M293 639l-9 -13M308 655l6 14M307 653l1 19M292 636l-6 -11M311 657l15 -2M310 655l12 2M295 637l-0 -15M291 633l-3 -14M310 654l9 3M309 653l14 -1M295 635l-14 3M292 632l4 -12M296 636l-11 -7M309 652l14 7M296 634l-16 -5M294 633l0 -14M313 654l-5 10M310 650l5 18M312 651l17 0M294 630l-13 4M298 635l-0 -19M312 651l8 11M298 633l-17 -1M299 634l-5 -12M294 629l-14 0M299 634l3 -17M316 652l6 11M313 648l7 10M315 651l12 1M314 650l-5 16M317 652l8 -0M316 650l8 0M300 632l-9 -7M297 628l-5 -9M301 632l-20 -4M299 628l0 -9M301 631l-10 -4M298 627l1 -7M301 629l-9 -4M301 629l2 -14M316 647l11 10M302 630l-12 -9M299 625l-5 -6M318 647l12 -4M301 628l-0 -10M303 630l1 -14M319 647l1 15M303 628l-7 -12M321 649l14 1M319 647l12 3M304 628l-16 2M303 626l6 -15M302 625l-13 2M302 625l-13 -4M321 646l18 -2M305 627l3 -13M302 623l-0 -5M303 624l-10 -4M320 643l14 -3M321 644l3 14M322 645l5 11M321 644l12 -2M304 622l-8 -2M306 624l-6 -9M308 626l-6 -17M308 626l-11 -9M305 620l-13 3M308 625l-13 -4M305 621l-10 -1M325 645l4 12M309 624l-9 -5M324 643l-0 14M307 621l-14 3M308 622l3 -18M323 639l-1 16M310 623l3 -15M326 643l-6 13M310 624l-18 0M311 622l-6 -16M309 619l1 -9M310 622l-11 -1M324 639l12 3M309 619l-11 -6M325 638l18 5M325 638l9 6M309 618l1 -7M313 621l-12 -3M313 621l-4 -15M326 638l-1 20M312 620l5 -15M328 637l11 4M313 620l-16 -4M330 641l-6 9M314 620l2 -17M314 618l-7 -12M315 619l-19 -1M315 620l-17 -7M313 617l-11 -2M315 618l-10 -3M314 617l-18 1M315 619l-1 -16M316 619l-7 -15M316 617l-1 -11M330 636l-6 11M314 615l1 -13M317 618l-18 -2M318 617l-19 -3M315 613l-7 -7M315 614l1 -12M317 616l6 -17M332 634l0 11M317 614l-4 -10M334 637l4 6M334 637l5 6M333 634l12 -3M319 615l-15 2M332 633l6 15M333 634l7 11M318 612l-8 -6M333 632l11 8M320 614l1 -10M321 616l-4 -12M336 634l4 10M334 631l1 17M322 615l-18 -5M321 614l2 -15M320 610l-14 -5M321 612l-7 -13M322 612l-8 -12M322 613l-11 -10M322 610l-0 -10M322 610l-6 -10M336 630l9 8M336 630l2 17M338 630l15 6M325 613l-9 -11M340 634l11 -1M336 629l-2 15M325 610l-1 -14M323 607l-12 -5M324 610l-2 -11M339 631l-3 17M324 608l2 -11M326 610l1 -16M324 607l-4 -4M341 631l11 -4M343 632l9 0M341 630l13 3M327 610l-8 -7M326 607l-13 1M343 631l-0 11M329 610l-15 -7M342 628l12 3M328 608l-12 2M327 604l8 -12M342 627l-0 13M344 630l-8 14M330 609l-19 -1M330 607l-5 -11M329 606l4 -9M344 628l10 6M344 628l-2 16M346 629l-7 13M346 629l6 3M330 605l-16 -1M344 626l13 1M344 624l10 7M347 628l9 -0M332 605l-2 -8M345 625l9 4M348 627l-6 15M347 626l17 3M332 603l3 -15M349 628l10 1M335 606l-8 -14M346 622l-0 12M335 606l2 -19M349 627l5 3M334 602l-6 -4M336 605l-14 -2M350 626l9 5M336 605l-10 -12M350 624l10 10M334 600l9 -10M336 603l-15 -3M349 623l-1 12M338 603l-10 -11M336 600l-14 1M338 604l-5 -13M337 603l2 -12M338 601l-0 -11M337 600l-9 -8M352 623l-2 11M352 623l-3 14M353 622l12 -1M353 623l4 11M340 602l-9 -6M354 624l5 12M341 602l3 -18M341 602l-15 -10M355 624l1 5M340 600l8 -13M341 599l-9 -12M354 619l15 5M342 600l-7 -13M356 623l1 10M340 595l5 -13M357 622l-8 8M341 598l5 -13M340 596l-2 -6M355 617l7 14M343 598l1 -13M358 622l0 7M355 617l-0 18M342 595l3 -10M359 620l-8 10M344 597l2 -11M357 617l-2 18M346 598l1 -17M343 594l-14 4M358 618l-5 18M344 595l4 -12M347 597l-17 -3M347 598l-17 -2M360 618l11 -2M359 617l13 -1M345 592l6 -12M347 596l-17 -1M360 617l15 -1M359 614l13 13M346 593l1 -10M348 595l-4 -12M347 594l0 -14M363 619l-7 15M349 595l0 -13M361 614l14 1M350 596l-19 -5M361 614l1 13M363 615l11 -1M347 590l-13 -3M350 595l-15 -2M350 595l-0 -14M364 614l14 2M363 613l10 9M365 615l12 7M351 594l4 -12M363 611l15 10M367 617l8 1M350 590l0 -9M349 590l7 -13M365 611l2 12M351 591l3 -15M353 593l-16 -3M366 614l15 4M368 614l-2 11M366 611l-3 18M351 589l6 -9M366 612l10 9M366 609l-5 19M370 615l5 3M368 612l3 16M354 590l5 -16M356 593l-12 -10M356 592l-3 -12M368 609l14 11M368 611l20 1M356 590l-1 -10M354 588l-3 -6M356 590l-11 -7M355 589l-6 -12M356 588l-7 -6M358 591l5 -19M372 613l-3 12M356 588l-3 -15M371 608l5 8M372 610l-3 13M358 589l-3 -13M373 611l-8 9M374 611l11 -3M372 609l8 9M357 587l-13 3M360 590l5 -17M374 608l6 8M358 586l4 -13M372 606l3 17M372 606l10 15M360 586l1 -14M361 588l-11 -10M359 585l-11 -8M374 607l1 15M376 607l0 8M359 583l-10 1M375 605l-2 12M375 606l6 7M376 605l17 6M378 608l-3 9M360 583l-4 -8M363 587l-9 -6M379 607l14 2M379 608l11 -1M362 584l-11 -9M362 584l-11 -7M361 581l-11 -1M377 602l13 10M380 607l-8 12M362 582l-4 -12M378 602l-1 13M362 581l5 -14M366 585l3 -16M378 602l17 5M379 602l4 9M380 602l12 3M382 605l11 -3M365 583l-3 -16M383 605l6 7M366 582l1 -12M367 583l5 -18M365 580l-8 -1M382 601l14 3M366 581l-2 -12M369 584l-2 -14M366 581l2 -16M385 603l10 8M385 604l9 7M383 601l-1 13M381 599l-1 17M386 603l-8 10M384 600l1 12M385 603l-3 10M367 579l-8 -2M369 580l1 -12M371 582l3 -13M369 580l1 -12M370 581l-17 -1M368 577l3 -8M370 579l-11 -6M384 597l5 9M386 599l12 5M389 601l3 8M388 600l-6 17M387 599l7 7M385 597l3 10M390 600l-4 12M390 600l7 -0M373 579l-1 -15M373 579l-1 -11M371 575l-3 -10M387 595l7 15M373 577l-7 -10M373 577l-0 -9M374 576l-1 -15M388 595l14 3M390 598l9 3M389 596l10 12M374 575l-10 -5M391 597l8 4M374 575l-7 -5M391 596l-6 11M390 593l5 16M374 574l5 -17M376 576l-13 -8M373 572l-1 -14M393 595l-1 13M392 595l10 2M376 575l-14 -9M374 571l-8 -2M376 572l-8 -10M394 595l10 0M378 575l-5 -10M394 595l2 7M395 595l3 9M379 574l-12 -2M377 572l-11 -5M392 591l3 15M396 595l15 -0M381 574l-17 -4M379 573l-16 -2M380 574l-9 -14M395 592l1 15M395 592l7 10M396 593l2 12M395 591l2 11M397 593l-6 16M381 572l-13 -3M397 593l3 12M394 589l19 4M380 568l7 -12M383 572l-17 -0M395 588l3 12M398 592l1 8M382 569l4 -17M382 569l-10 -1M384 572l-13 -3M384 571l-18 -4M399 591l6 4M382 567l-1 -7M385 571l-13 -12M382 567l-13 1M401 591l2 11M384 567l-14 -3M385 569l-12 -6M383 567l-5 -9M398 586l1 17M398 586l12 3M399 586l4 12M386 568l-4 -9M399 585l13 12M387 567l-3 -17M399 585l-1 18M387 568l0 -16M402 588l13 0M388 567l0 -14M387 566l-11 -5M401 587l7 13M390 568l-17 -8M386 562l-17 3M403 587l13 1M401 585l13 8M405 589l-2 9M391 566l-12 -12M390 566l-13 -10M388 563l-10 -2M392 566l-16 -2M404 586l-7 15M406 588l7 4M390 563l-10 -8M405 584l8 6M390 561l-8 -1M403 582l7 9M390 561l2 -11M391 560l-13 -3M405 582l6 12M393 563l-5 -7M391 560l-5 -9M407 584l16 3M393 560l8 -12M394 562l-4 -8M394 563l-6 -8M395 562l2 -18M407 581l7 11M396 564l-2 -16M393 559l-9 -6M409 582l7 8M395 560l-11 -3M397 562l-5 -16M410 585l-7 14M408 580l-2 16M396 558l4 -12M397 561l-15 -2M397 561l-11 -8M399 562l1 -16M410 580l12 2M411 582l5 14M397 559l3 -14M411 580l5 13M400 561l-10 -7M399 560l2 -17M411 581l-6 15M413 582l1 9M413 583l-1 9M414 583l16 1M400 559l-10 -4M412 579l6 15M412 579l9 12M414 583l4 12M411 578l-1 18M414 579l16 6M401 557l-16 -0M402 558l-17 -4M401 556l-1 -9M402 555l-13 -5M416 582l-7 7M415 581l-9 12M415 579l-7 16M402 553l10 -13M414 577l4 10M416 580l3 7M415 578l-8 17M406 558l-17 -4M416 578l5 7M404 556l4 -10M417 579l11 -1M405 555l-6 -13M418 579l-3 12M404 553l-6 -9M416 575l1 11M417 575l15 10M406 555l3 -12M406 554l-4 -8M419 580l10 5M407 555l-8 -6M420 579l2 10M419 578l15 5M418 576l1 15M421 578l5 13M420 576l14 0M409 556l-7 -10M421 580l11 -0M409 554l4 -14M407 550l-17 1M409 554l-12 -8M408 551l0 -6M420 574l11 14M420 573l3 11M411 555l-19 -7M409 551l-3 -11M424 578l-0 10M409 550l11 -12M411 552l-11 -5M409 549l-5 -2M423 575l9 7M412 552l6 -17M423 573l7 13M422 572l10 8M425 576l9 4M412 550l-7 -11M414 553l2 -13M411 548l-3 -10M425 574l4 7M414 551l-8 -12M412 549l4 -12M427 577l0 9M414 550l0 -13M426 573l10 8M414 550l-12 -10M414 549l-15 -3M415 549l-14 -0M428 576l12 5M417 552l-8 -8M415 549l-13 -6M427 571l12 6M416 549l-13 -1M418 552l-8 -8M427 571l-3 18M428 571l13 5M428 571l1 17M428 572l6 9M427 569l14 11M431 574l9 5M431 574l8 6M431 575l-4 7M419 550l-9 -13M432 574l-4 13M420 549l2 -12M420 549l-9 -11M421 551l6 -19M431 569l12 4M432 572l12 3M431 571l-0 12M431 570l1 9M419 544l-7 -1M432 570l4 10M420 544l-15 2M421 547l-5 -9M432 567l-9 18M421 544l-1 -8M423 548l7 -11M434 572l-4 12M435 571l17 3M424 548l-14 -8M434 569l10 10M434 570l-6 12M436 570l-9 11M434 567l-7 12M423 543l-3 -7M436 570l14 -0M435 567l1 13M424 543l7 -7M426 547l7 -17M436 569l12 8M437 569l0 14M424 542l-5 -6M426 546l-13 -8M427 548l-8 -16M439 570l-0 13M438 569l-2 8M427 545l-2 -10M426 543l-9 -3M440 569l0 8M426 541l-9 -3M429 547l4 -19M427 542l-4 -8M440 567l3 7M439 565l9 8M439 566l13 9M427 541l5 -12M440 564l4 15M429 542l-17 -0M441 567l9 3M441 566l-8 11M442 566l-4 12M429 541l7 -12M441 565l-9 14M431 545l3 -18M432 544l-14 -10M441 563l-1 11M431 541l5 -13M432 544l-6 -14M431 538l11 -11M444 568l12 -3M432 541l9 -12M432 541l2 -10M432 539l-10 1M435 544l-12 -5M444 564l5 7M433 540l-5 -11M444 562l-0 15M445 563l10 4M435 542l7 -15M445 565l-1 8M436 542l3 -16M436 541l-15 -8M447 566l-6 7M434 537l3 -9M445 560l-6 18M448 566l-10 10M446 562l-4 17M435 537l-6 -8M446 560l14 12M447 562l-7 11M436 537l2 -13M447 563l15 0M450 565l1 10M449 563l14 0M438 539l-6 -8M437 537l-8 -8M450 563l14 5M439 538l-4 -11M437 535l-5 -8M448 559l-2 12M450 561l10 3M449 559l-6 16M441 541l-16 -4M452 565l5 7M441 539l-7 -7M439 534l4 -10M440 536l9 -10M450 559l-8 15M453 562l-2 8M451 559l7 8M441 536l-10 -7M443 539l-6 -9M453 561l8 7M453 560l-1 16M443 538l4 -12M452 558l-4 15M443 536l-13 1M453 557l6 14M444 537l-18 -5M455 563l6 6M445 537l4 -17M443 533l-4 -9M454 557l17 4M445 537l-13 -6M446 536l-13 -4M455 556l19 5M445 535l-17 -5M444 533l6 -7M446 536l-11 -10M447 537l1 -17M457 559l13 0M445 533l-5 -9M447 535l-18 -3M447 534l6 -11M457 557l-0 15M458 559l6 7M459 559l7 6M458 557l-3 15M449 536l8 -13M447 533l-12 -6M450 537l-11 -9M459 556l12 8M461 560l12 5M460 558l8 12M449 531l-7 -5M451 535l-8 -11M450 534l2 -13M449 530l12 -12M450 530l-2 -7M450 530l-8 -9M460 554l6 8M462 559l17 2M452 533l-7 -8M452 533l-7 -7M453 536l1 -12M462 555l-6 10M464 557l-2 12M454 535l-13 -4M465 559l10 -2M464 557l-5 11M465 557l12 -1M453 531l-9 -11M466 558l-6 11M452 529l1 -12M453 529l-13 -4M464 552l-5 13M466 556l-4 8M464 553l16 6M456 532l7 -16M467 557l5 6M467 558l9 4M467 557l-2 10M456 529l8 -12M468 557l-0 11M455 528l-12 2M456 529l9 -7M458 531l-19 -3M457 530l-7 -11M468 554l15 2M456 527l10 -8M459 531l8 -15M458 529l8 -10M459 532l-8 -8M469 554l3 12M471 556l3 11M459 530l-14 -3M471 554l13 -1M471 554l3 6M460 528l0 -10M470 549l-4 15M472 555l6 4M470 550l16 2M462 530l-15 -3M472 551l13 3M471 550l4 10M461 528l-1 -14M462 529l2 -17M461 526l-15 1M472 549l-4 14M472 550l4 10M463 528l-13 -2M464 531l-4 -18M475 554l-10 10M474 551l8 5M463 527l-2 -10M464 529l-10 -13M476 553l-0 12M464 528l-5 -8M476 550l4 7M464 527l-13 1M475 548l-4 17M465 527l-16 -7M465 526l-1 -12M464 524l-9 -7M477 551l-2 12M476 547l15 5M478 549l10 9M478 549l5 15M467 528l-1 -15M465 524l1 -13M466 524l-6 -10M466 522l-14 1M467 525l-6 -13M480 551l10 8M469 527l8 -17M478 545l15 7M480 549l5 12M467 522l-9 2M469 525l-9 -5M468 522l2 -13M467 522l-16 -1M468 523l1 -13M469 523l-16 -5M482 549l-8 9M470 524l-13 -3M471 527l-1 -14M470 522l-12 2M470 521l-6 -6M483 548l14 5M483 547l-1 15M483 545l8 13M473 525l-4 -15M470 520l2 -6M472 524l-7 -11M471 520l-1 -6M472 520l-11 -6M484 545l13 1M474 524l3 -12M484 543l16 3M485 545l-9 17M486 547l7 11M485 545l10 4M485 542l10 11M485 542l14 13M487 546l-10 12M474 521l1 -11M487 544l1 12M476 522l5 -13M474 518l-11 2M489 547l-0 11M487 542l13 10M477 521l-6 -14M475 518l3 -7M475 518l2 -12M488 542l11 7M477 519l7 -15M491 546l-9 7M489 543l0 11M479 522l-14 -10M478 518l-13 -0M490 542l9 11M491 545l-6 10M492 544l4 8M493 545l-2 13M491 542l-7 12M493 546l1 6M492 543l-8 12M479 516l-4 -4M481 520l-10 -9M479 516l-3 -12M494 543l3 6M493 540l4 16M494 544l5 4M480 516l-13 3M482 517l-10 -10M493 539l16 8M481 515l11 -11M481 515l-13 -6M484 519l-10 -7M483 518l-7 -11M497 543l11 3M483 516l-16 -1M497 542l-9 14M485 520l6 -17M497 543l11 -2M483 515l-12 -4M484 514l-7 -9M498 541l13 7M497 539l16 2M484 514l7 -12M499 541l-4 13M486 516l6 -10M497 538l7 8M497 538l13 -0M486 515l7 -11M485 513l5 -7M499 539l12 10M488 518l-19 -4M489 518l0 -13M501 541l-1 6M489 517l-4 -14M489 517l1 -14M490 517l-5 -9M488 514l-11 -3M489 515l-7 -14M490 516l-4 -15M501 536l-2 16M503 539l-5 12M491 516l-16 -6M502 538l14 6M491 514l-16 -0M491 515l2 -12M502 535l12 1M501 534l19 7M492 514l-6 -11M490 511l2 -13M493 516l-10 -10M492 514l-10 -11M492 512l6 -13M490 510l2 -9M506 537l-7 12M505 535l-2 12M505 533l18 6M491 509l10 -7M493 512l6 -14M505 533l13 8M493 511l0 -13M492 509l-11 -0M508 536l15 4M507 535l14 5M494 510l4 -14M494 510l-14 0M509 535l6 5M494 510l-13 3M509 534l-2 11M497 513l3 -18M497 513l-11 -13M510 535l11 3M509 531l8 8M509 531l16 1M496 509l7 -11M509 531l-7 11M510 530l11 8M497 510l-6 -15M511 532l9 11M499 513l-7 -10M513 534l13 1M497 508l-1 -8M499 512l-13 -4M498 510l-0 -17M513 531l7 8M498 509l-3 -9M497 506l-5 -4M498 508l-14 -2M500 509l-8 -10M513 529l2 10M499 507l7 -16M514 530l13 4M514 527l14 11M513 527l12 3M501 508l-3 -8M514 528l9 13M515 527l-2 11M501 507l-16 1M516 529l12 7M516 529l9 8M515 525l-2 18M517 527l-3 18M515 525l-2 15M516 526l10 6M518 527l-7 14M516 525l10 11M519 528l11 -1M503 506l-15 0M504 506l-12 -2M503 504l-7 -7M502 503l8 -13M518 525l4 10M522 528l12 3M519 524l0 12M505 506l1 -11M506 506l-2 -16M521 524l10 4M520 523l-2 15M507 506l-14 -3M522 526l15 0M506 502l7 -13M521 522l19 4M523 525l10 -2M522 524l-0 11M524 524l14 3M524 525l7 2M509 505l-16 -0M522 523l-3 11M507 500l-2 -6M525 524l11 -3M523 522l10 6M524 523l14 2M525 522l-6 13M508 501l4 -17M525 522l1 10M524 520l8 6M525 519l19 1M511 502l-0 -17M511 502l-15 1M525 520l15 3M510 499l-12 -5M528 521l8 10M527 520l-2 9M529 522l0 11M528 520l7 4M509 497l-1 -8M527 518l20 1M527 518l11 2M527 517l-3 19M528 518l9 8M530 520l1 13M512 499l-11 -1M515 501l-16 1M511 496l-9 1M513 498l-13 -2M513 498l-3 -12M514 498l-11 -9M530 516l3 17M513 497l-11 1M515 499l3 -14M530 515l-0 12M534 519l-1 7M515 497l-9 -13M514 495l-17 1M514 494l-7 -0M531 514l-2 18M535 518l1 12M533 517l3 9M534 515l11 8M518 498l2 -16M514 493l-3 -5M533 514l7 14M518 496l-11 -0M535 515l8 4M535 515l-5 10M516 494l-7 -7M519 496l-1 -12M518 494l-14 1M515 491l-1 -10M516 492l-3 -12M538 514l-3 12M516 491l1 -12M538 515l13 -3M535 511l17 3M521 494l-8 -8M538 513l-5 11M535 509l18 4M520 493l-14 0M537 510l6 16M536 509l-0 13M518 490l-1 -8M537 510l15 6M519 490l-10 -2M538 510l18 -4M520 491l2 -12M540 511l12 -4M540 510l10 10M540 510l7 4M538 508l11 7M541 511l5 4M538 506l7 9M538 506l15 8M523 491l-17 3M523 491l-12 1M539 506l13 2M540 506l15 4M524 491l-7 -13M543 510l0 6M543 508l15 -3M523 488l-3 -8M525 490l-4 -14M523 488l-17 4M526 489l-7 -16M526 490l-19 -3M525 488l-1 -12M524 488l-5 -14M546 507l4 5M524 487l-14 3M541 503l8 10M545 507l1 12M527 488l-4 -18M544 504l8 5M546 506l9 10M546 506l12 2M525 485l-4 -7M528 487l-19 -0M527 487l-11 0M528 487l-14 3M528 487l-4 -17M525 483l-12 5M546 503l7 10M526 485l-4 -9M525 483l-12 6M526 483l-3 -12M525 482l-14 7M546 501l17 1M530 486l-16 -6M548 501l11 0M527 484l3 -12M548 501l1 14M529 484l-16 4M527 482l-2 -15M528 483l-16 0M550 501l2 7M550 500l9 4M526 480l1 -15M549 499l12 -2M547 497l1 20M529 482l-11 3M531 483l-7 -14M531 483l-15 -6M530 483l-12 -11M528 479l-8 -3M530 481l-7 -11M549 495l4 16M528 480l2 -11M531 480l-7 -9M554 498l13 -5M551 496l-0 18M532 481l-11 -10M534 482l-8 -15M532 480l-7 -13M554 496l8 7M550 493l9 9M532 479l-13 -2M533 480l-12 -3M550 492l9 11M553 494l1 15M553 493l15 1M556 495l6 2M553 492l6 6M532 478l-7 -7M553 491l14 1M552 490l13 6M554 492l12 -4M555 492l6 5M535 477l1 -17M534 477l-16 -2M533 476l-6 -10M535 478l-16 -4M536 477l-15 1M556 490l14 5M536 477l-4 -15M553 488l12 3M533 473l1 -12M556 489l5 9M558 490l14 -0M558 490l5 1M559 490l-1 8M536 474l-14 6M559 489l13 -6M554 486l12 14M555 485l12 4M533 471l-1 -12M558 487l10 4M560 489l-1 14M560 488l13 -4M535 471l-11 6M537 473l-13 6M559 486l9 -5M558 485l13 0M558 485l3 12M535 470l-7 -1M559 486l-0 14M562 486l13 -5M539 472l-2 -17M562 486l11 -2M556 483l13 6M559 483l2 14M558 482l13 4M536 468l-9 7M538 469l-9 -0M537 468l-9 1M536 467l-4 -10M539 469l-7 -13M541 470l-4 -18M563 482l8 -3M561 481l9 5M539 467l-9 -10M559 480l11 9M564 482l8 -5M559 479l16 -4M559 479l11 3M562 481l1 15M560 478l14 2M560 479l13 0M542 467l-13 -3M564 481l11 -6M564 479l10 10M561 478l17 -1M542 466l-15 6M543 466l-13 1M544 466l-3 -13M544 466l-13 -6M541 464l-2 -12M541 464l-7 -4M565 478l11 -4M543 464l-10 -5M540 462l1 -14M541 463l-10 6M562 475l7 10M566 477l8 5M565 476l-1 14M544 463l-1 -19M542 461l-10 -10M567 477l7 -3M545 463l-8 -12M565 476l10 6M380 473l-4 10M384 472l-1 10M376 466l-11 9M384 469l-2 11M378 445l-4 -7M372 452l-9 -4M373 454l-10 -3M371 461l-11 2M378 449l-10 -11M377 468l-10 11M372 452l-5 -2M385 471l-1 13M373 453l-13 -5M374 448l-9 -8M379 469l-7 10M378 448l-5 -7M390 469l4 13M377 472l-6 10M374 450l-10 -7M383 471l-4 14M374 462l-12 4M388 472l1 11M550 456l-4 -13M564 469l11 1M550 452l-2 -8M561 460l11 -13M565 458l4 -3M568 467l13 -1M567 469l14 1M566 469l12 1M556 458l3 -17M567 473l8 3M564 467l17 -1M554 455l-0 -13M566 466l13 -3M568 466l8 -1M562 464l15 -7M547 459l-8 -11M541 459l-7 -5M570 470l7 1M564 462l8 -5M563 465l11 -3M563 456l7 -9M568 470l6 1" stroke="#f47ad4" stroke-width="0.9" opacity="0.7"></path>
<path d="M388 464l13 6M388 464l12 10M391 469l8 3M391 469l13 3M390 464l3 12M384 447l2 -12M393 467l11 3M386 449l-13 -6M393 466l8 6M392 463l-3 15M387 445l-4 -5M386 443l6 -9M387 443l-4 -8M396 467l-9 10M396 463l-6 14M396 463l-3 18M399 468l13 2M397 463l-8 17M400 467l4 12M397 460l-2 15M391 444l-14 -2M393 448l-5 -11M401 462l9 14M393 447l-10 -8M393 444l-5 -11M393 444l6 -13M394 445l-9 -12M395 447l-6 -14M405 461l-5 16M404 460l1 17M394 442l3 -12M406 460l13 3M393 440l-15 3M394 441l0 -14M410 460l-2 7M409 459l-4 16M398 445l-9 -11M408 456l-2 14M411 456l8 2M412 458l14 -2M398 443l0 -15M410 453l-1 13M396 439l-13 -5M415 456l15 -4M397 440l-1 -15M411 451l11 7M411 450l19 -1M412 451l14 -1M398 438l0 -9M414 450l10 15M401 440l-19 -0M398 437l-6 -7M419 451l-3 14M401 438l-19 -1M415 446l4 10M404 439l-17 -1M403 437l-15 4M403 438l-9 -12M402 436l-11 -8M404 437l-3 -12M417 444l10 16M416 443l9 12M420 444l-1 10M418 443l9 4M419 442l17 1M403 433l-15 6M401 431l-12 3M407 434l-17 1M424 442l8 6M404 431l-6 -7M406 432l-10 -15M424 441l8 13M404 430l-13 -9M409 432l-13 -6M401 427l-5 0M407 430l-10 -14M409 429l-17 2M408 429l-19 3M421 434l12 13M408 428l-14 -9M424 434l3 10M405 426l-9 -2M407 426l-2 -11M424 433l12 8M408 425l-16 1M422 431l13 -4M404 422l-10 2M408 424l-17 4M429 431l8 11M426 430l15 5M427 429l17 -6M410 423l-13 -5M411 422l-16 -6M412 422l-5 -12M428 427l6 5M427 426l15 -9M405 418l-9 0M405 418l-2 -8M426 424l17 5M413 419l-15 -5M428 423l10 -2M405 416l-5 6M431 422l11 9M425 421l9 12M414 417l-15 9M428 420l16 -3M431 420l12 1M410 415l-13 -4M414 415l-18 7M407 413l-5 -3M414 414l-12 -11M431 417l9 8M431 416l8 8M435 417l12 -4M428 414l12 1M410 411l-12 12M429 413l10 6M413 411l-12 -8M415 410l-12 -2M429 412l9 6M427 410l16 -8M414 409l-15 11M427 409l15 -1M435 410l6 -5M428 408l11 -1M413 407l-15 -2M410 406l-9 -9M415 406l-11 -5M411 405l-14 -1M408 405l-4 8M428 404l14 0M431 404l12 12M429 403l13 3M412 403l-8 3M415 402l-16 10M413 402l-14 -1M433 400l11 12M427 401l17 -5M427 400l13 -11M413 401l-11 8M411 400l-8 12M428 398l15 -14M408 400l-7 9M427 397l8 -10M433 395l4 9M429 396l17 -4M433 394l12 -8M434 394l13 3M434 393l5 11M414 396l-10 11M432 392l11 -2M412 395l-15 -11M431 391l8 -8M430 391l7 10M432 389l7 5M427 390l15 2M407 393l-11 2M433 388l10 11M412 391l-10 -6M429 388l13 8M427 387l14 5M409 391l-13 -2M428 385l8 -17M429 385l10 -2M411 388l-7 11M411 388l-11 8M432 382l5 -0M428 383l11 4M426 382l12 -13M407 387l-8 -9M424 382l12 -0M428 380l8 4M412 384l-17 6M410 385l-12 9M430 377l11 -3M410 383l-16 4M408 383l-16 -10M411 382l-10 7M410 381l-13 14M428 375l2 -8M411 380l-14 12M405 382l-7 8M409 379l-12 -4M422 375l6 -13M407 379l-8 15M404 380l0 9M402 380l-3 9M404 379l-6 9M406 377l-14 3M426 369l4 -16M421 370l20 5M425 369l14 0M407 375l-15 -0M424 367l15 5M426 365l11 6M405 375l-5 10M408 372l-20 2M418 368l12 -5M418 366l13 -4M407 372l-12 -4M404 372l-16 -1M402 373l-15 -6M421 362l4 -9M400 373l-4 3M417 363l18 -8M402 371l-14 -2M419 360l17 0M401 371l-0 15M421 358l1 -9M416 360l19 4M420 356l8 -3M421 356l6 -3M419 355l-1 -15M418 356l-1 -11M420 353l13 -1M398 368l-7 11M415 355l10 1M401 366l-8 17M413 356l19 0M396 368l-9 3M413 354l8 -5M396 367l3 15M399 363l-12 0M395 367l2 11M414 350l15 -2M415 349l4 -6M412 350l1 -9M409 352l1 -19M413 347l4 -6M409 351l16 -2M412 346l5 -12M399 359l-12 10M407 350l6 -12M409 347l9 -1M408 347l6 -17M393 363l-10 1M397 357l-13 6M409 344l8 -12M407 345l5 -8M404 347l0 -16M393 359l-12 2M406 344l16 -6M391 360l-4 6M408 340l1 -9M393 356l-11 1M403 343l8 -10M393 355l-5 11M402 342l13 -5M392 355l-16 4M402 341l15 1M389 357l6 12M387 360l4 13M390 354l-16 4M401 338l4 -8M388 356l0 15M398 339l10 -10M387 355l-15 7M396 340l7 -8M398 335l9 -2M397 336l14 -7M386 355l-6 12M395 337l10 -13M384 355l-1 13M395 334l3 -9M392 337l5 -10M393 335l15 -6M383 353l-10 3M382 356l-4 10M384 350l-3 10M382 354l4 11M381 355l-11 7M388 337l4 -15M389 331l-5 -7M387 335l-5 -15M381 349l6 11M386 337l16 -9M378 355l6 11M378 355l8 6M386 329l-3 -6M379 351l-15 9M377 353l-9 0M377 353l-2 13M377 349l-12 5M377 350l-1 10M381 333l0 -11M381 333l-5 -14M376 346l-12 9M375 352l-8 5M375 348l6 15M379 329l-8 -13M373 351l9 14M379 327l-6 -6M373 347l-12 12M377 329l13 -5M371 351l-10 6M375 330l9 -6M374 332l-1 -15M375 327l-11 -9M372 333l-2 -19M374 326l6 -3M368 350l-4 14M369 346l-6 17M371 325l10 -8M368 346l-6 13M367 345l-4 11M367 345l5 19M366 344l2 19M369 324l-3 -4M365 346l-15 10M365 347l6 13M366 331l6 -11M364 345l7 17M365 327l10 -4M362 350l3 10M361 351l10 10M364 324l-8 -3M362 329l9 -15M361 344l-11 9M361 331l-1 -15M361 331l-4 -11M358 351l-3 10M358 346l-14 14M357 344l-3 14M357 346l10 13M356 350l-11 3M358 324l-9 -8M356 331l-7 -18M355 346l-10 9M354 348l10 6M355 330l-4 -11M353 343l-6 17M354 329l-3 -11M352 348l9 7M352 346l-1 16M351 329l4 -15M351 349l4 13M350 347l-11 6M350 325l4 -12M349 349l-3 14M349 327l6 -7M348 324l3 -6M348 349l-10 8M347 328l-5 -14M347 347l9 11M345 329l13 -14M345 325l3 -8M345 347l-10 14M344 325l5 -10M343 332l7 -15M343 326l-1 -13M342 330l-7 -16M342 331l5 -16M342 344l-0 18M342 348l-6 10M339 324l-8 -4M341 345l-0 17M339 344l-3 20M340 345l7 11M339 350l-2 10M336 325l-4 -8M337 343l5 20M336 332l7 -16M334 332l-11 -16M336 345l11 6M335 346l-0 17M335 346l11 10M334 346l-11 16M334 344l4 16M331 333l-3 -15M330 327l-11 -6M332 348l2 9M329 329l-11 -13M331 347l14 7M330 345l10 16M330 350l-7 7M329 345l-5 16M326 333l-8 -13M329 351l-9 8M324 331l9 -17M328 349l4 13M323 330l-2 -11M327 351l5 12M321 326l-11 -7M322 330l6 -15M325 349l3 17M320 330l1 -9M323 347l14 9M319 328l-5 -4M318 333l-11 -9M318 331l5 -11M316 329l-2 -5M316 329l7 -8M321 353l5 8M320 351l7 7M315 334l3 -16M319 349l2 18M312 328l-2 -5M314 334l2 -17M316 348l-5 19M313 334l-3 -13M311 331l-3 -9M316 352l11 13M310 333l-8 -9M309 331l-14 -6M309 336l6 -13M308 330l-13 -5M307 331l-2 -13M313 351l8 13M306 332l6 -11M312 353l13 8M312 354l13 3M304 332l1 -8M305 336l9 -15M303 331l-11 1M311 358l4 8M309 353l12 10M308 354l16 6M307 351l4 17M300 333l-7 -11M301 335l4 -14M300 336l-3 -10M299 334l2 -6M298 336l3 -9M306 357l-1 14M299 341l8 -19M296 334l6 -11M303 353l13 9M296 337l-1 -14M303 356l4 14M302 354l9 15M301 354l10 16M304 361l4 8M301 357l-2 14M301 358l5 10M291 337l9 -13M300 357l8 14M301 361l2 7M290 339l-10 -3M299 359l-0 14M297 355l-6 19M287 337l-8 -5M297 358l14 6M285 338l-5 -7M298 362l1 9M298 364l7 5M285 339l-11 -4M286 345l-2 -10M296 362l-2 14M294 361l6 9M294 360l10 11M293 360l3 15M294 362l11 1M293 363l-5 9M292 361l9 3M281 345l-11 1M279 343l-10 3M293 366l7 11M291 362l8 10M278 346l-6 -12M280 348l-0 -19M290 364l9 10M280 350l2 -17M277 349l-10 0M291 367l-0 9M288 365l12 3M288 365l8 13M287 365l6 13M287 365l-4 16M276 352l-15 -9M276 353l-5 -12M276 354l0 -12M271 348l3 -7M285 366l5 12M288 370l2 5M283 366l8 8M272 353l-9 -13M283 368l15 6M285 370l10 -2M268 353l-14 0M281 367l14 9M271 358l-11 -12M267 353l1 -9M284 373l-5 15M265 353l2 -11M282 372l9 4M268 358l-17 -6M263 355l-10 -6M280 371l13 10M268 361l-14 -6M265 359l-10 -12M276 370l15 2M261 357l-11 2M278 373l11 -4M263 360l2 -13M277 374l3 19M279 376l8 10M279 377l13 0M262 363l-8 -9M278 378l5 1M277 376l9 0M258 363l3 -9M278 378l9 11M273 375l12 0M274 376l1 11M261 368l-4 -17M273 377l2 17M277 381l1 13M271 377l13 1M254 366l-12 -2M257 368l-13 3M257 370l-3 -11M269 378l17 5M270 380l15 -3M276 383l15 -8M253 370l-7 -8M254 371l-6 -5M274 385l5 7M268 381l7 16M267 382l13 12M253 374l-14 4M251 374l-15 4M257 377l-7 -13M255 378l-11 -5M271 386l1 14M255 379l-6 -11M251 377l-6 -3M252 379l-16 6M266 386l5 14M269 388l7 6M252 381l-11 6M252 382l-9 -15M254 383l-13 -7M248 381l-11 9M267 389l6 9M268 390l8 8M269 391l9 13M247 384l-15 8M268 392l3 9M244 384l-4 1M266 392l8 4M252 388l-17 -7M270 394l7 -2M250 389l-13 -9M248 388l-12 8M267 395l15 -2M265 395l9 8M243 389l1 -11M269 397l5 -6M265 397l9 5M265 397l16 -4M248 393l-16 -10M266 398l6 5M245 394l-10 2M246 394l-14 3M264 400l10 8M262 400l18 -10M250 398l-20 3M268 402l6 8M249 399l-7 -13M266 403l10 5M248 400l-9 -10M263 403l7 8M244 401l-10 -3M243 400l-7 4M240 401l-9 12M262 405l14 -7M244 403l-14 -8M246 403l-14 -9M265 408l8 12M267 408l1 9M266 409l13 -4M243 405l-9 -7M239 405l-2 -7M245 406l-15 7M245 407l-12 -15M259 410l14 9M263 411l12 -8M240 408l-6 12M266 412l8 -3M260 412l17 -1M241 410l-11 12M262 413l15 7M260 414l9 -9M259 413l12 15M259 415l15 -8M245 413l-18 8M241 413l-9 -3M265 416l13 4M264 417l8 -10M262 417l12 13M241 415l-4 -11M241 415l-4 -11M242 417l-12 5M245 417l-7 -10M258 419l15 5M243 418l-11 3M243 419l-10 -8M263 421l7 3M246 421l-17 -5M238 420l-4 12M243 422l-10 -10M242 422l-11 12M242 423l-7 -9M245 423l-14 -9M265 426l7 -11M263 426l12 -1M264 427l8 -1M261 427l8 -3M259 428l10 -7M241 427l-7 4M239 428l-5 -12M260 429l17 7M243 429l-13 -3M265 430l8 8M239 430l-8 1M242 430l-11 -3M258 432l13 2M240 431l-9 6M261 433l15 -3M263 433l9 14M259 434l10 1M258 434l16 2M244 435l-18 0M262 435l10 5M265 436l5 -7M238 436l-8 14M244 437l-13 7M238 437l-10 4M241 438l-8 8M261 438l9 -7M259 439l8 -10M265 439l3 -6M264 439l8 -8M237 441l-5 10M261 441l15 2M261 441l14 8M259 442l12 -5M237 443l-3 11M265 442l3 -7M260 443l11 4M258 444l15 -10M239 446l-4 -10M261 445l10 -1M263 444l11 -4M261 446l9 10M239 448l-1 10M243 449l-5 10M242 449l-8 9M239 451l-6 12M245 450l-15 -4M265 448l9 3M243 452l-12 2M247 452l-20 1M258 451l12 -15M264 451l9 6M240 455l-12 -10M262 452l9 -7M245 455l-15 -1M264 453l9 11M240 457l-11 -5M267 453l6 -8M264 454l9 0M245 459l-9 15M262 455l11 -13M247 460l-10 9M247 460l-11 -6M267 456l7 3M245 461l-11 1M261 459l15 2M261 459l11 -13M246 463l-16 -9M266 459l10 -7M245 465l-6 13M261 461l14 7M244 467l-8 16M245 466l-5 12M262 463l16 10M246 467l-15 7M244 469l-7 5M245 469l-12 -2M245 470l-5 9M269 464l8 7M262 467l17 -8M263 467l11 -1M250 471l-9 12M245 473l-10 -3M245 473l-9 7M245 474l-7 6M243 475l-3 4M251 473l-11 5M245 476l-7 6M263 471l10 -8M249 476l-9 6M250 476l-17 -6M252 476l-19 -8M266 472l9 -11M246 479l-4 16M246 479l-10 -7M264 475l16 -7M251 479l-10 13M271 474l4 -9M270 474l7 -1M252 481l-16 -2M268 476l9 -1M246 483l-13 1M252 482l-12 16M251 483l-8 14M273 476l5 -7M251 484l-15 -3M246 486l-3 -9M249 486l-8 3M247 487l-10 -2M274 479l-1 -8M250 487l-10 10M274 480l7 5M268 482l14 -10M274 481l5 -3M273 481l4 -13M253 490l-8 9M255 489l-14 -7M248 492l-10 -4M271 484l9 -12M270 486l15 4M250 493l-8 -2M252 493l-3 10M252 493l-4 15M252 495l-7 -2M255 493l-15 -4M272 488l15 5M251 496l-5 4M277 487l6 -6M273 489l9 -4M276 489l13 7M255 497l-12 8M258 497l-14 -6M274 491l7 -11M277 490l7 9M277 491l2 -15M258 500l-13 11M253 502l1 11M256 502l-14 -9M275 494l13 -2M257 503l-9 14M278 494l10 5M272 497l13 -10M274 496l13 -4M255 506l-1 9M259 505l-9 3M281 496l11 6M261 505l-5 14M281 497l4 -12M276 499l10 -1M278 499l6 -14M257 509l-7 -5M274 502l20 1M277 501l16 5M275 503l17 3M276 503l14 -7M258 513l-6 2M260 511l-11 1M278 504l8 -11M261 513l-12 8M278 505l14 6M262 513l-1 13M283 503l12 2M279 506l5 -15M260 517l-5 5M282 505l11 -5M283 506l7 -4M285 504l4 -8M280 508l13 5M263 518l-14 -6M286 506l12 7M283 508l5 -12M267 519l-16 5M284 509l12 1M266 521l-15 4M287 508l4 -12M267 521l-6 8M269 520l-16 7M284 512l17 1M271 520l-14 0M285 513l14 -5M284 514l18 2M266 527l-7 6M284 515l14 -4M284 517l18 -4M266 528l-9 4M285 517l13 5M291 513l3 -6M273 526l-11 4M274 525l-16 2M290 516l6 -12M270 530l-5 7M271 530l-13 7M269 532l-5 12M289 520l8 -8M286 521l18 1M277 529l-17 9M277 530l-19 -0M273 534l-11 -2M289 522l15 -4M277 533l-17 1M293 521l7 -2M275 535l-3 9M288 525l13 -2M275 537l-13 -6M279 534l-15 4M293 525l6 -7M278 536l-19 -5M293 527l3 -14M296 524l6 -13M297 525l8 3M295 526l2 -8M299 525l10 0M279 540l-5 4M279 541l-11 -2M281 540l-5 10M295 531l15 -8M282 540l-1 15M283 541l-12 12M284 540l-15 2M283 543l-10 1M281 544l-15 2M281 546l-6 10M284 544l-16 5M296 535l7 -12M286 544l-1 19M283 548l3 11M282 549l-8 -2M288 545l-14 12M299 536l14 -8M304 533l-4 -10M301 535l8 -11M299 539l4 -14M287 549l-12 9M305 535l-4 -8M301 538l12 -7M288 551l-5 6M291 548l-14 12M292 549l-14 -1M307 536l1 -7M290 552l-10 10M305 539l9 -8M307 539l-2 -15M293 551l-12 13M307 541l9 -12M309 539l13 2M309 541l11 4M290 557l1 8M306 544l0 -14M290 559l-12 -3M297 554l-16 1M310 542l-1 -9M308 545l-2 -11M296 557l-1 16M313 542l-6 -11M311 543l-1 -9M309 547l11 -0M293 562l2 7M310 547l-0 -16M313 545l15 4M310 549l2 -16M309 550l4 -13M313 548l8 -14M310 550l17 -5M296 565l-4 10M300 561l-1 15M301 562l-14 4M314 549l1 -12M316 548l3 -12M299 566l-2 12M299 567l-6 2M301 565l-1 11M304 563l-18 4M302 565l-18 -1M318 550l1 -10M315 553l8 -14M317 553l10 -6M300 570l-3 4M303 569l-9 -1M301 571l-13 2M306 567l-6 9M320 553l9 -8M305 570l1 15M308 567l-12 5M306 571l-6 7M309 568l-9 11M306 573l-13 -3M319 558l7 -15M309 572l-8 8M320 560l10 -15M323 558l4 -13M322 559l6 -9M326 556l-4 -11M321 561l12 -7M312 574l-12 2M310 576l-12 5M326 559l3 -14M323 562l12 -12M329 557l-3 -15M313 577l-10 2M316 576l-5 10M330 558l10 -2M317 576l-16 5M326 564l13 -1M329 562l14 -6M317 578l4 15M328 566l18 -2M317 580l-8 3M317 581l-5 8M329 566l1 -12M329 567l15 -2M333 563l-4 -9M323 578l-16 10M331 567l1 -13M321 581l-14 1M332 567l18 -3M321 583l4 16M324 579l1 13M324 581l-6 9M325 580l-15 4M322 585l-9 8M333 571l13 -7M334 571l16 -5M322 587l-10 -1M334 572l15 -9M335 571l4 -19M339 566l-0 -14M324 589l-9 10M336 573l3 -12M327 588l-7 8M339 569l-2 -9M330 584l-15 9M338 573l16 -11M339 572l11 -13M339 572l15 -2M342 567l-5 -10M339 574l3 -19M332 587l-11 4M334 586l-19 8M342 572l15 -2M332 593l-0 6M344 570l-3 -7M333 594l1 10M334 591l5 11M343 576l9 -10M343 575l-5 -19M345 574l2 -14M345 574l2 -11M335 596l2 5M336 595l-6 1M338 594l2 7M338 593l-7 10M339 593l-3 11M346 578l13 -4M341 592l-4 14M341 592l2 14M348 578l15 -9M349 576l3 -9M344 590l-4 15M351 574l2 -6M344 592l4 20M341 598l-3 6M354 574l-2 -10M351 581l16 -10M344 596l-3 12M354 577l3 -7M346 596l4 9M345 597l-10 1M354 581l8 -13M348 594l6 13M356 580l7 -12M348 595l6 11M347 599l-2 7M359 575l7 -3M360 576l9 -1M347 601l-16 0M360 580l9 -4M359 581l9 -4M351 599l-11 -0M353 594l-10 17M360 585l14 -7M351 600l-12 0M353 598l4 17M362 584l15 -4M354 598l-16 9M362 585l10 -13M364 585l-4 -14M364 585l12 -10M364 587l14 -12M353 604l2 7M358 598l-13 14M354 604l-15 -1M359 598l-15 11M369 584l9 -9M360 599l-10 10M371 584l6 -7M361 600l1 16M359 602l-1 11M361 601l-15 3M357 606l-3 7M375 586l-1 -6M363 601l-3 14M360 606l-9 2M362 603l-5 16M363 603l-18 5M375 589l6 -6M373 593l14 -2M374 592l13 -5M377 590l2 -9M364 606l-10 7M361 610l-2 13M364 607l-1 16M376 595l2 -15M376 595l18 0M366 607l-10 5M378 595l15 -3M378 596l9 -9M379 595l13 -10M378 598l8 -11M382 593l5 -2M381 596l7 -12M380 598l5 -10M370 610l-9 15M385 594l5 -10M381 600l14 0M382 599l11 -12M372 611l1 16M382 600l0 -13M371 614l-10 6M386 599l-5 -11M372 614l-6 8M370 616l-3 8M371 617l4 11M373 615l2 19M386 603l5 -16M386 604l3 -19M372 619l-8 9M375 616l-7 14M391 602l3 -5M376 617l-17 -1M391 604l17 1M374 620l-12 -4M377 619l-3 17M380 617l-2 18M393 606l12 -0M389 609l11 -14M391 609l3 -16M378 622l-11 11M396 606l5 -9M391 611l6 -11M381 622l-0 12M395 609l7 -11M378 626l-2 4M380 625l-10 -1M398 610l-4 -13M383 623l-17 4M398 611l9 3M396 613l6 -14M385 625l-11 15M382 627l2 10M383 628l-9 12M381 630l-8 -5M398 617l3 -18M387 626l-15 3M386 629l-4 16M400 617l17 -0M388 629l-6 18M404 615l11 6M388 630l-15 6M388 630l-15 -3M390 630l-11 6M385 634l-6 -1M389 632l-16 8M403 621l14 4M391 632l-18 1M387 635l-14 1M386 637l-1 12M406 622l8 -3M393 633l-17 1M388 637l-6 6M409 623l0 -10M387 639l-7 6M406 626l7 -12M394 635l-13 -1M395 635l-12 3M409 626l8 -2M390 640l-12 6M407 629l17 -2M413 626l11 -0M391 640l-5 9M394 640l-12 -0M392 641l-13 4M397 639l-10 18M414 628l-4 -9M396 641l-11 7M392 643l-7 -3M412 633l10 -8M412 632l17 6M394 644l-5 3M416 632l7 -8M398 643l-13 4M417 633l-0 -16M394 646l-6 1M415 635l5 -14M418 635l8 7M418 635l-1 -11M418 637l8 -5M412 640l19 -8M417 639l4 -7M412 641l11 -11M400 648l-5 13M418 640l6 -9M399 650l-6 7M416 642l8 -17M402 649l-14 13M403 649l-19 6M418 645l9 -15M419 644l11 -7M415 647l11 -5M401 652l-16 6M400 654l-5 12M399 654l-12 6M417 649l11 -0M423 647l8 3M418 650l13 -8M419 650l12 -2M418 652l18 -4M421 651l13 -2M420 652l11 -10M423 651l9 -3M420 654l9 -16M402 659l-14 6M424 654l5 5M399 661l-5 9M403 661l-13 -4M418 657l12 -9M419 658l11 -12M398 663l-3 2M399 664l-4 -6M401 663l-2 8M405 663l-18 -5M425 660l8 10M425 661l4 -10M401 665l-7 12M401 666l-3 7M406 665l-10 -7M421 664l11 3M400 667l-13 2M404 668l-15 -5M407 667l-14 -11M402 669l-9 -11M405 669l-10 12M405 670l-12 -6M403 670l-8 13M426 669l3 -7M400 671l-8 11M423 671l12 13M425 671l14 8M420 672l10 -8M403 673l-5 6M422 673l15 -4M407 674l-12 12M428 675l2 -9M423 675l12 -13M420 676l12 -2M403 676l-8 3M400 677l-7 -10M422 677l13 -7M427 679l9 -3M423 679l13 -5M400 678l-10 3M405 679l-7 -12M419 681l12 8M401 679l-7 -6M404 681l-9 8M400 680l-12 6M405 682l-9 -5M426 684l10 7M425 686l7 2M405 683l-12 -10M400 683l-9 4M424 687l13 -1M421 688l7 13M425 688l13 -1M419 689l9 9M423 689l12 5M422 691l8 -8M421 690l12 12M423 692l15 -7M404 688l-10 -8M418 692l16 8M423 694l5 13M404 690l-13 -2M422 695l10 4M418 695l17 -5M425 697l10 -1M398 690l-8 -12M398 690l-6 -13M423 700l14 -9M421 699l5 17M420 700l11 -9M421 700l7 5M420 701l8 -6M401 694l-11 5M401 695l-6 -8M419 702l12 2M418 703l14 6M419 703l12 10M400 697l-5 -14M397 696l-10 9M417 705l13 4M417 705l12 3M418 707l8 6M400 698l-16 6M420 709l10 -5M417 708l8 3M401 701l-12 -7M401 701l-12 -5M401 702l-19 -5M397 700l-1 -13M418 712l-1 10M393 700l-8 7M399 704l-9 -6M418 713l5 5M399 705l-16 -4M417 714l4 6M393 702l-9 8M414 714l10 -7M412 714l13 8M396 705l-9 -1M414 717l7 8M414 717l8 -5M412 717l16 -5M409 715l15 9M412 718l9 3M414 719l10 -4M411 719l1 8M407 716l9 19M407 718l14 -4M411 720l1 13M392 709l-5 -9M390 709l1 -11M407 721l10 14M410 723l1 10M390 710l-2 -16M392 712l-18 4M406 723l17 6M409 725l9 -1M387 711l1 -13M387 711l-7 -0M387 712l-8 -6M409 728l5 9M386 713l-7 -10M404 726l10 5M392 718l-18 -4M388 715l-6 -4M386 715l-12 -0M405 729l4 8M386 716l2 -17M405 731l12 4M387 718l-5 -15M401 730l7 7M399 729l13 -2M403 732l6 8M383 717l2 -13M382 717l-5 -9M403 736l6 -2M403 736l5 -0M400 735l5 11M387 723l-0 -15M397 734l16 7M399 735l-0 16M399 737l1 13M381 720l-13 0M395 735l14 1M399 739l9 1M398 739l-3 9M382 724l-1 -12M384 727l-16 -2M395 739l9 10M377 722l-7 -0M378 723l4 -15M392 739l5 8M380 726l-14 -8M393 742l5 14M381 728l-18 -4M379 728l-9 -8M389 739l-2 13M378 728l-1 -14M389 741l2 11M378 730l-13 1M379 731l-14 -11M387 742l11 10M374 727l-9 -1M375 730l3 -14M385 742l13 8M384 743l-0 18M373 729l-5 -4M384 744l-2 19M385 745l15 9M375 735l-6 -14M384 746l12 11M385 750l3 6M383 748l14 7M372 735l-12 -11M381 747l2 10M371 736l-4 -10M380 748l6 17M367 732l-13 -4M381 751l3 11M379 750l12 9M381 754l-7 11M365 732l5 -13M369 738l-11 -5M365 735l-15 -3M365 735l-9 -2M378 756l9 7M365 737l-14 -7M374 753l1 15M364 738l-6 -9M372 752l9 9M362 735l-10 2M372 754l1 17M373 756l3 7M371 755l1 13M371 755l13 5M359 739l-10 2M371 758l2 7M359 741l-1 -11M370 759l3 7M360 744l-5 -11M369 759l-3 11M368 761l10 -2M365 755l13 11M364 756l15 7M365 757l8 7M363 757l4 18M354 741l-5 -10M362 757l10 13M365 762l3 15M353 744l-3 -12M353 744l-2 -10M360 759l14 4M363 766l-3 13M352 747l-15 -6M361 764l-2 15M351 748l-11 -3M352 749l-18 -8M359 766l1 8M349 747l5 -13M348 747l-7 -7M357 764l5 8M346 744l2 -12M345 744l3 -8M347 750l-9 -12M346 748l5 -11M353 766l8 9M355 769l3 8M346 752l1 -19M354 770l-1 11M341 745l1 -7M344 752l4 -15M352 771l10 -3M343 753l-8 -12M348 766l7 9M340 748l8 -8M341 754l-11 -10M338 746l-6 -5M340 753l5 -16M346 767l13 3M345 767l10 15M339 754l-5 -18M344 767l3 19M338 754l-7 -8M335 750l-15 -3M343 770l11 3M341 768l9 9M342 770l4 13M333 750l1 -9M333 751l-4 -12M333 753l4 -11M335 757l-2 -13M338 769l13 7M331 750l5 -7M338 773l2 8M338 773l6 12M331 756l-9 -16M336 770l-3 15M329 755l4 -10M329 754l-13 -5M335 774l3 7M336 775l3 11M335 778l4 3M333 772l16 10M325 751l-11 -0M332 772l16 11M331 772l8 17M333 778l3 7M329 771l-2 18M331 777l10 8M323 754l-6 -8M323 753l2 -12M330 780l-2 9M329 779l14 7M326 773l2 19M321 754l-9 -1M327 780l5 3M320 754l7 -13M326 781l-7 10M321 761l4 -16M323 775l1 12M324 778l-3 10M322 775l6 9M324 780l13 2M316 756l-2 -12M322 777l-1 14M316 758l7 -11M317 763l8 -20M319 778l-3 14M321 782l8 10M315 763l-7 -18M318 778l-11 15M313 758l-11 -2M318 783l-4 10M317 780l8 10M312 759l-14 -9M314 776l-5 17M315 777l10 9M314 780l13 8M311 763l-9 -15M308 756l-7 -0M309 757l-8 -5M309 762l-5 -16M312 782l11 5M311 779l-10 9M307 761l-10 -5M310 780l-8 10M309 779l6 9M309 783l1 8M309 783l-3 5M307 779l6 10M308 785l11 1M304 762l4 -14M303 759l1 -10M305 780l9 11M305 782l-8 10M303 777l-1 17M303 780l-6 11M302 780l7 13M302 779l9 16M301 779l-10 12M301 784l-10 7M298 762l6 -14M298 765l6 -12M299 783l3 7M297 762l-4 -9M297 780l-1 18M296 758l3 -12M296 781l8 15M295 765l-7 -14M294 766l-3 -15M295 784l14 7M293 762l-7 -14M294 786l-12 7M292 762l4 -11M292 761l2 -9M291 779l3 17M291 785l-9 6M290 780l10 11M290 786l9 3M289 758l9 -10M289 763l-11 -13M288 764l-1 -15M288 782l-2 16M286 783l2 8M286 784l9 13M287 761l4 -10M287 758l-14 -8M285 766l7 -13M286 760l-2 -13M283 780l-1 10M285 759l11 -5M284 761l8 -6M283 765l11 -17M280 786l4 9M280 785l-3 13M282 759l9 -11M282 759l2 -10M278 779l-2 11M281 758l11 -6M277 779l2 9M277 777l11 16M279 762l3 -11M275 779l12 16M278 758l-8 -10M278 762l-1 -13M273 779l0 9M273 778l-9 10M276 760l-5 -11M277 758l7 -5M271 776l-7 11M274 764l10 -15M269 777l-2 11M275 757l-3 -9M273 760l-4 -10M267 778l-12 4M265 782l-3 8M272 761l12 -9M273 758l7 -9M273 757l9 -2M271 759l12 -6M273 756l15 -4M262 776l-5 12M272 756l-8 -6M270 759l4 -11M270 760l2 -10M271 757l9 -3M259 776l-8 2M271 755l9 -3M268 760l14 -10M269 757l5 -15M268 758l9 -6M254 775l-9 -3M266 760l9 -15M257 768l-16 4M253 773l3 15M265 759l17 -4M270 753l7 3M253 768l-11 4M265 757l14 -3M266 755l12 -2M249 769l-7 5M265 756l13 -4M267 754l9 -10M263 756l14 -8M265 755l12 -2M267 753l-2 -11M247 765l-7 -1M250 761l-13 5M264 754l18 3M248 761l-16 3M248 761l-6 9M247 760l-11 4M263 753l13 -7M244 759l-6 9M247 758l-8 9M247 757l-4 13M242 758l-3 16M247 755l-14 -7M241 757l-8 -7M267 748l10 -6M261 750l16 -11M265 748l1 -9M261 749l18 -4M264 747l8 4M240 753l-10 -11M265 746l10 2M264 746l10 -7M265 745l15 4M243 749l-9 -10M266 744l13 8M244 748l-13 6M239 747l-4 -0M241 747l-9 7M238 746l-12 -6M239 746l-5 -7M238 745l-5 -4M242 744l-6 11M260 741l16 6M240 743l-5 -7M245 741l-19 1M258 740l14 -13M246 740l-17 10M265 738l12 -5M259 738l16 -9M261 738l5 -11M241 738l-12 -11M262 737l12 -5M261 736l15 -6M265 736l6 -7M262 735l13 -12M238 735l-9 11M258 734l14 -4M238 734l-8 -12M245 733l-17 2M261 733l10 13M240 732l-9 13M244 732l-15 10M245 731l-18 3M246 731l-17 10M261 730l11 12M263 730l8 9M245 729l-10 10M246 729l-16 -7M241 727l-14 -6M264 729l10 0M259 727l9 -9M241 726l-9 -14M263 727l13 3M263 727l13 10M246 724l-14 -4M238 724l-11 4M245 723l-15 -7M261 725l9 -10M239 721l-4 7M244 722l-12 1M266 723l7 -5M263 723l7 -10M238 719l-8 -5M267 723l6 -1M244 718l-13 9M259 721l15 0M267 721l7 2M265 720l14 -3M244 716l-16 10M266 719l4 4M239 713l-5 -12M248 715l-14 -4M263 717l14 8M248 714l-15 4M264 716l10 13M264 716l13 10M265 715l14 -2M264 715l7 1M264 714l13 -4M268 715l2 10M242 707l-6 -5M243 707l-10 7M267 713l4 11M263 712l10 13M249 706l-16 -8M249 706l-12 -16M250 705l-9 -10M250 705l-20 -2M267 710l12 2M265 709l12 4M248 702l-9 -6M249 702l-12 -4M266 707l4 10M250 701l-19 -2M268 707l5 14M246 698l-3 -13M264 704l8 17M266 705l6 18M251 697l-10 -3M248 696l-5 -10M269 704l11 -3M267 703l15 -6M269 703l3 12M270 703l15 -2M253 694l-14 -9M254 694l-19 5M250 690l-12 6M253 692l-11 2M272 700l2 8M253 690l-8 -4M272 699l14 5M250 688l-8 2M267 696l16 10M255 689l-16 -6M273 698l6 1M269 696l17 3M269 694l15 1M270 695l14 8M269 694l9 8M271 695l8 13M269 692l13 11M253 683l-3 -8M276 695l1 7M271 692l6 10M275 694l1 16M254 681l-8 -7M273 691l10 2M258 682l-10 -3M276 692l9 2M275 691l16 -7M256 678l1 -8M261 682l-12 -11M276 690l15 -5M274 689l18 -3M273 687l20 2M258 677l-7 -5M276 688l7 10M279 689l10 2M262 677l-10 -6M279 688l7 10M280 688l11 -1M280 688l14 -5M260 673l-0 -16M281 687l-0 7M280 686l-1 12M264 674l-13 -4M262 671l3 -11M279 684l10 12M278 682l11 12M280 683l4 9M281 682l9 6M266 672l-19 -3M280 681l12 3M282 682l8 5M265 668l-4 -17M284 682l8 7M283 680l12 8M280 677l3 16M264 665l-11 3M280 677l8 10M266 665l-12 -0M282 677l12 7M285 678l14 7M265 662l-11 1M287 678l4 11M284 676l13 -1M286 676l-2 12M287 677l6 1M287 675l12 -5M272 663l-17 2M272 662l-2 -9M289 676l6 4M272 661l-11 -8M285 671l18 7M271 658l-12 3M271 658l-7 -12M290 673l8 5M274 659l-2 -11M290 671l2 8M277 660l-13 -9M293 673l-1 8M292 672l1 13M279 659l-15 -5M292 670l17 1M274 653l-11 -7M293 670l8 6M295 670l3 14M289 665l13 13M275 651l-4 -10M276 652l-0 -11M291 664l12 14M280 653l0 -19M296 667l14 2M296 667l1 7M296 665l6 4M278 648l-4 -11M281 649l-10 3M284 653l-3 -12M297 663l3 15M280 647l-0 -15M299 664l-4 12M296 661l10 15M283 646l-11 0M296 659l0 13M298 660l14 -0M287 649l-5 -12M288 647l-8 -16M302 662l7 7M303 662l-3 9M284 642l-9 2M289 645l-18 -5M288 644l-15 -0M299 654l18 1M302 657l-1 14M288 641l4 -13M291 644l1 -16M291 642l-4 -13M301 653l6 14M294 644l-11 -12M306 656l4 6M304 653l2 13M293 641l-10 -7M306 653l11 3M294 640l-14 -11M297 641l-10 -16M308 653l2 17M307 650l5 10M294 637l-4 -13M294 635l-5 -7M293 633l-7 2M307 647l10 10M294 633l6 -8M298 635l-4 -9M310 649l-3 10M298 633l-17 -2M298 634l-6 -9M310 646l12 14M297 630l-10 0M315 650l12 1M301 633l-12 -10M314 647l-1 12M313 645l13 10M317 649l13 -1M317 648l9 -4M303 629l-11 -2M313 642l8 12M319 647l8 -4M315 642l4 13M320 646l-5 9M303 625l-9 -1M318 642l15 1M305 627l-1 -13M308 628l-11 -4M319 642l2 13M318 638l1 15M323 645l11 5M322 642l2 9M309 626l-4 -10M311 626l-16 -7M324 642l9 4M322 638l-3 18M325 642l6 10M327 642l1 11M311 623l-0 -17M324 637l14 -1M326 639l17 -0M327 639l-2 10M324 634l9 8M327 637l-4 13M328 638l8 5M328 636l10 11M314 619l-10 -0M331 639l6 -1M316 619l-4 -8M328 633l7 10M330 635l10 7M330 634l18 2M332 636l13 -2M331 633l-2 13M321 619l-3 -15M330 630l15 4M318 614l3 -15M323 619l-7 -19M323 618l3 -17M335 632l9 -0M324 617l-11 -7M325 617l-17 -3M324 615l-14 -8M322 610l4 -9M337 631l-0 7M335 627l5 14M335 626l11 8M327 614l-9 -13M327 613l-19 -3M340 630l4 7M338 627l-0 11M329 612l-16 -9M331 614l-7 -12M343 630l9 8M338 623l13 11M342 627l5 9M340 623l14 2M332 610l-11 -3M344 628l14 -2M346 628l5 11M332 608l-6 -11M346 627l11 1M335 610l-12 -7M344 621l2 18M346 624l-4 11M337 608l-11 -13M338 609l-7 -10M336 605l-12 -3M339 609l-17 -8M335 602l-11 2M346 618l-3 15M350 622l4 12M339 606l2 -14M351 622l11 7M351 621l12 3M353 622l8 2M351 620l16 2M354 622l-1 12M339 598l-13 3M352 616l15 6M354 619l5 9M344 602l1 -19M344 601l-9 -4M353 614l9 14M346 603l-13 -4M358 620l7 10M347 602l-13 -2M344 596l-10 3M356 614l12 3M360 618l-4 11M347 598l0 -12M346 594l-8 -5M360 617l-6 7M348 596l2 -8M347 594l8 -10M362 616l12 7M360 612l-3 18M352 598l-5 -11M351 595l-7 -11M351 595l-13 -9M361 610l3 18M363 611l1 10M364 612l8 4M365 612l-3 12M367 614l10 -0M367 613l14 1M365 610l13 6M355 592l2 -13M355 593l-8 -3M367 609l16 5M355 591l-3 -11M357 592l-4 -11M359 595l-11 -15M370 610l9 7M359 593l-12 -3M357 589l-9 -1M360 592l-4 -17M359 589l5 -9M358 588l-15 -2M361 590l-0 -18M374 608l5 6M361 588l3 -13M360 587l5 -9M376 608l1 6M374 605l14 3M376 605l5 13M377 606l-2 7M376 604l13 6M362 584l-8 -7M375 600l3 13M367 589l-4 -16M365 585l-1 -11M380 604l8 6M379 601l11 1M379 602l7 3M378 598l14 4M381 602l5 11M380 599l11 12M369 585l-4 -11M380 597l8 15M368 582l2 -9M381 596l7 12M368 580l3 -8M368 579l-8 -0M385 600l11 3M373 583l-13 -4M370 579l-15 -2M372 580l-3 -9M383 594l13 4M385 595l-3 11M372 577l-9 -4M375 580l-11 -8M387 595l18 1M377 581l-15 -8M387 593l-3 11M377 579l-8 -5M390 595l7 -0M387 590l2 12M376 575l1 -15M376 575l-11 -6M389 590l8 15M377 573l-1 -6M390 590l-0 15M380 576l1 -17M379 574l5 -10M390 587l14 13M382 577l-5 -18M395 591l-4 10M380 572l-13 3M383 574l-9 -5M393 588l9 12M393 585l9 10M383 573l-5 -16M383 571l0 -9M382 570l5 -11M384 569l3 -13M397 587l-1 14M384 568l-16 1M387 572l-11 -10M398 586l-5 14M400 588l11 -1M397 582l-2 16M388 570l-5 -17M390 571l-8 -7M401 586l-6 9M387 564l2 -6M401 585l7 8M399 580l11 13M392 569l4 -18M403 583l-5 14M401 581l19 6M391 562l-5 -4M401 579l13 9M402 578l10 13M402 579l-2 15M406 583l16 1M404 580l16 9M394 560l-5 -8M398 566l-7 -16M396 560l-7 -4M406 578l1 17M407 578l8 13M397 561l-8 -7M401 565l1 -14M407 575l3 13M408 576l3 14M408 575l9 9M413 582l8 3M400 560l-2 -12M402 560l-5 -12M402 560l-5 -9M405 564l-12 -15M411 575l13 10M405 562l-14 -4M403 558l-2 -9M403 555l-3 -5M414 577l-7 14M415 575l-7 13M414 575l2 14M415 574l13 6M414 572l3 13M408 559l-19 -6M406 555l-7 -6M410 560l-13 -8M410 560l1 -16M409 556l1 -16M418 573l11 1M411 558l2 -12M419 573l-1 14M420 572l-2 12M419 572l9 11M420 570l9 8M420 570l2 16M420 569l16 11M414 556l-5 -8M412 551l5 -14M414 555l-1 -12M414 551l7 -12M415 554l-1 -12M414 549l-11 -6M414 550l4 -13M415 550l2 -9M416 551l6 -10M416 548l-6 -2M419 554l-9 -7M417 549l-14 -3M417 548l-7 -3M421 553l-1 -13M419 550l-4 -5M429 569l6 9M430 571l-3 14M431 569l13 3M423 553l-13 -4M431 567l-1 12M424 552l5 -14M433 569l2 9M431 565l19 7M433 568l10 7M435 570l11 -3M425 549l-1 -18M435 569l12 1M436 568l9 -2M425 545l-5 -6M427 547l0 -11M436 567l7 2M427 546l8 -13M435 562l8 11M439 568l9 -3M439 568l4 6M438 563l-4 15M438 564l5 10M432 549l-11 -16M437 560l-1 13M441 565l-7 8M442 566l8 5M431 541l5 -9M431 542l-11 -1M444 566l-5 7M435 548l-12 -8M433 541l8 -9M442 560l6 10M445 563l1 15M442 559l10 12M436 541l-6 -12M435 540l-9 -8M436 541l-9 -7M438 543l-7 -9M448 564l-2 10M448 564l7 1M448 561l-3 8M446 557l1 19M448 558l-4 12M441 544l3 -16M450 560l2 8M439 537l9 -7M440 537l4 -9M448 555l6 10M449 555l6 18M450 555l9 17M444 541l-8 -10M444 541l6 -12M454 560l6 7M454 561l14 -0M452 553l12 16M447 542l-13 -12M445 534l3 -8M448 541l-11 -15M447 537l-7 -5M447 536l-16 -2M447 535l1 -7M456 555l8 13M457 553l11 7M451 540l-12 -7M450 536l0 -9M451 538l-6 -17M450 535l2 -15M458 552l8 17M451 534l-13 -2M462 558l-1 8M453 536l-3 -16M462 555l-8 7M456 538l-18 -11M456 539l3 -14M453 531l-4 -10M456 538l-8 -15M457 537l2 -15M456 535l0 -11M456 533l-9 -8M465 551l-4 9M457 531l-13 -4M456 529l2 -5M458 532l6 -11M466 548l-5 19M460 534l-8 -15M467 548l-3 13M461 533l5 -11M468 548l2 18M471 552l-3 10M460 529l6 -6M462 532l-9 -4M462 531l-7 -5M471 548l11 11M461 527l3 -11M464 530l2 -16M464 532l-10 -4M464 528l-17 -2M466 533l-6 -11M473 544l8 11M473 544l8 17M467 530l-3 -14M474 545l7 12M468 530l-3 -13M475 543l1 20M469 529l-12 -9M468 527l-17 -4M479 547l13 -0M479 547l9 11M471 528l-14 -5M472 531l-10 -7M469 523l-4 -2M473 529l-4 -12M473 528l-8 -16M474 530l1 -16M473 525l-11 -1M483 546l-8 9M481 539l12 7M473 523l-1 -10M476 527l-6 -15M483 540l2 16M484 540l-0 14M475 522l-10 -2M487 543l9 -1M484 538l-3 13M488 543l-0 12M479 526l-9 -14M481 527l-13 -10M481 527l-14 -12M478 519l-15 1M479 521l5 -9M489 537l8 8M488 537l1 20M483 525l2 -15M490 539l14 9M493 542l1 9M491 536l12 2M492 536l14 12M492 537l15 5M484 520l-13 -1M492 535l7 16M486 521l-7 -13M493 535l-2 11M488 522l-9 -7M484 515l0 -8M498 538l10 0M498 538l-4 10M490 521l-3 -18M487 515l-6 -3M499 536l1 9M501 539l-2 12M499 534l8 15M492 521l-4 -12M490 514l6 -14M500 534l5 9M502 534l-0 9M490 512l-8 -1M495 519l4 -21M503 533l-2 15M493 514l0 -8M505 536l15 1M492 511l-8 1M506 534l-7 13M504 529l5 13M505 531l5 11M498 516l-15 -5M497 515l-14 -2M507 530l-6 12M497 514l-15 -4M508 530l-6 17M500 516l-0 -15M497 510l-9 -1M511 532l10 -3M511 531l5 5M497 508l-12 4M512 530l-5 14M513 531l3 9M514 530l10 -1M514 530l-6 14M501 509l-13 -5M511 524l-1 15M512 523l10 15M516 529l-2 9M502 506l-13 2M504 509l-6 -8M515 523l1 16M515 523l-2 11M505 507l-9 -11M518 525l16 3M517 522l4 13M516 520l-3 16M520 523l14 7M507 506l3 -18M508 505l-9 -10M522 524l8 4M509 505l3 -13M509 505l-13 -10M509 503l6 -13M510 505l-16 -1M522 519l11 12M513 507l-14 -10M522 517l9 12M510 501l-12 -2M527 521l12 -4M525 518l15 2M515 504l-5 -17M512 500l4 -12M516 503l-16 -5M526 515l1 14M525 513l6 11M515 500l-9 -2M528 514l1 10M517 501l-4 -12M527 511l-1 22M519 502l-15 -1M518 500l-13 -12M532 515l6 10M520 500l-4 -16M520 500l1 -18M520 498l-1 -14M530 509l19 4M519 495l-3 -9M533 511l10 3M521 496l2 -13M531 507l12 17M522 495l-4 -12M535 510l2 13M524 496l-14 -5M521 493l-5 -8M537 508l16 -2M523 494l-12 -8M524 493l1 -19M522 492l-9 1M537 505l8 4M523 491l-8 -7M540 507l17 -3M528 494l-17 -4M525 490l-11 -2M542 507l-3 10M528 492l-8 -9M525 489l-8 -11M528 490l-9 -12M525 487l-9 4M540 500l15 0M530 491l-1 -13M528 488l-5 -10M542 500l5 15M544 501l11 10M526 485l4 -8M528 485l-12 1M526 484l5 -9M532 487l-3 -17M544 498l12 10M543 495l13 11M528 483l-6 -11M548 498l16 -0M546 497l13 -0M547 496l6 12M544 493l19 -2M548 495l11 5M535 485l-3 -21M546 492l2 15M551 496l5 4M532 480l1 -9M549 493l9 0M537 483l-6 -16M549 492l17 -4M538 482l-9 -17M555 494l12 3M549 488l11 12M532 477l-0 -14M554 490l10 -4M551 488l11 14M536 477l-17 4M553 488l5 5M536 475l-11 -6M557 489l6 4M536 475l-11 -6M539 476l-10 -6M538 474l-10 -4M555 485l6 7M557 485l9 3M535 472l-11 6M539 473l-17 5M555 483l12 10M542 474l-16 -6M559 484l12 -3M544 473l-19 3M558 482l12 3M559 482l7 10M561 482l5 7M557 479l9 14M560 481l14 -3M556 477l9 10M558 478l16 2M563 480l12 -0M563 480l8 -6M564 479l-1 14M562 478l2 10M558 474l16 6M557 474l9 14M558 473l16 10M558 473l11 10M561 474l9 10M563 475l12 0M543 461l1 -13M549 465l-15 -3M383 466l-6 13M377 459l-10 1M381 463l-8 8M377 464l-6 4M386 470l0 6M377 456l-14 -4M388 468l2 11M378 464l-10 7M383 450l-4 -10M385 466l-2 17M378 464l-7 6M378 452l-12 -8M374 457l-13 -1M390 470l5 12M385 471l-1 7M377 469l-5 6M383 453l-11 -16M379 469l-6 10M373 462l-8 3M375 451l-9 -5M386 464l-1 18M379 470l-3 5M562 466l12 -3M548 464l-11 -7M557 462l7 -16M565 472l14 5M560 469l15 3M558 459l5 -11M562 468l10 -0M561 469l14 1M562 472l15 6M560 459l7 -9M560 461l8 -9M553 460l-1 -11M557 461l4 -9M553 462l-2 -16M564 475l9 6M561 465l18 -7M565 472l14 4M558 457l3 -8M566 476l7 4M551 455l-2 -8M548 464l-10 -8M561 472l11 6" stroke="#b0189a" stroke-width="0.8" opacity="0.45"></path>
<path d="M386 458l2 7M388 463l3 6M387 445l-7 2M392 468l2 7M390 464l6 3M390 445l-7 2M392 466l7 1M396 465l1 7M394 457l3 6M388 448l7 1M391 447l5 5M391 450l6 3M394 440l-3 6M392 445l5 5M394 441l1 7M405 455l-6 4M411 459l-4 5M405 461l7 1M403 445l-3 6M398 442l1 7M412 453l2 7M416 454l-6 4M398 436l-3 6M401 438l-4 6M410 443l-6 3M408 443l0 7M412 447l7 1M402 441l7 2M413 442l4 6M413 440l-0 7M410 437l3 6M405 435l4 6M417 442l7 2M420 443l6 3M424 438l-4 6M401 430l6 3M429 439l-7 2M415 431l-1 7M409 431l7 1M430 436l-6 3M418 428l2 7M429 432l-2 7M421 430l6 4M413 427l6 3M423 425l-1 7M414 423l-7 3M409 422l7 1M403 418l5 4M427 422l-6 4M423 421l-6 3M421 418l-6 4M424 421l6 4M430 419l-7 2M410 413l1 7M416 412l1 7M417 413l-5 4M436 414l-5 5M419 413l6 3M437 411l-4 6M427 411l6 4M410 405l1 7M414 409l7 1M410 407l7 0M436 405l0 7M426 404l-6 4M416 405l7 2M428 400l2 7M424 401l5 5M414 398l-3 6M420 400l-6 3M433 398l-7 1M427 395l0 7M415 394l2 7M413 395l-3 6M435 391l-6 3M421 392l-3 6M425 390l7 1M413 390l3 6M416 388l-2 7M415 392l-7 1M425 384l5 4M427 386l-6 4M407 386l3 6M431 380l1 7M429 378l4 6M406 385l5 5M429 380l-7 1M411 381l3 6M429 373l-0 7M426 375l-4 6M409 377l-2 7M418 378l-7 2M411 376l7 1M403 377l2 7M429 365l-1 7M426 365l3 6M418 368l-3 6M423 364l2 7M415 366l5 5M413 369l-5 4M421 360l3 7M402 374l-7 1M407 366l-4 6M424 358l-5 5M411 363l-5 5M405 366l-4 6M409 359l7 2M412 356l4 5M409 356l3 6M409 358l-4 6M397 365l-3 6M401 359l6 3M407 351l5 5M404 359l-6 3M406 349l4 5M394 360l5 5M399 354l7 1M402 350l4 6M388 361l6 3M403 345l5 5M409 337l-2 7M386 361l7 3M402 341l-0 7M392 358l-5 5M387 355l5 5M394 349l-1 7M390 358l-7 2M399 346l-7 0M387 356l-4 6M398 331l3 6M386 350l1 7M393 334l6 4M384 347l7 0M390 337l1 7M385 351l-5 5M379 353l4 6M384 343l-2 7M385 335l3 6M386 333l-2 7M385 327l3 6M381 338l-1 7M380 335l3 6M381 343l-7 2M379 343l-3 6M377 331l2 7M379 335l-3 6M372 338l4 6M377 342l-7 2M378 328l-7 2M374 334l-3 6M375 322l-4 6M371 348l-6 3M367 325l6 3M374 324l-7 1M370 324l-5 5M366 330l-0 7M361 328l7 2M361 332l7 2M361 348l-3 6M358 344l4 6M360 321l0 7M358 328l4 6M353 349l6 4M359 325l-3 6M353 335l2 7M352 331l5 5M352 343l-0 7M349 327l6 3M347 321l6 4M352 327l-4 6M350 342l-5 5M345 348l6 4M348 321l-6 3M348 341l-5 5M341 345l6 4M340 326l5 5M344 331l-6 4M340 350l5 5M342 345l-4 5M341 327l-7 2M340 340l-6 4M337 345l0 7M336 340l-1 7M331 329l4 5M331 325l-2 7M330 345l6 3M325 324l5 5M329 347l4 6M330 351l-1 7M330 336l-7 1M320 329l6 4M329 345l-7 1M317 323l5 5M321 337l3 6M321 351l5 4M320 329l-3 6M320 334l-7 2M318 340l2 7M316 349l5 5M310 331l7 2M314 353l7 1M313 351l7 2M307 335l6 4M313 353l5 5M314 352l-2 7M308 349l7 1M310 340l-7 1M312 354l-1 7M302 343l7 2M306 345l2 7M297 335l6 3M308 353l-2 7M302 340l-6 3M303 358l6 3M294 340l6 4M301 347l-1 7M290 337l6 4M295 348l6 3M295 341l-7 3M293 342l0 7M290 336l-7 1M292 341l-4 6M297 359l0 7M300 361l-3 6M290 346l-7 2M292 362l7 2M290 351l-5 5M289 356l4 6M276 344l7 2M284 346l-5 4M296 366l-7 2M292 361l-7 1M285 359l3 6M291 365l0 7M285 361l-0 7M274 349l3 6M272 348l0 7M284 360l-4 6M283 363l-6 3M275 360l5 5M271 353l-5 5M281 366l2 7M268 354l-3 6M264 350l-0 7M284 372l-3 6M267 355l-5 5M263 359l4 6M265 357l-5 5M262 359l-7 1M261 357l-5 5M265 366l3 7M258 365l7 1M269 371l1 7M280 378l-2 7M274 377l-7 2M260 367l-7 1M268 374l-2 7M252 369l6 3M253 372l5 4M261 378l7 1M274 383l-4 6M258 380l7 0M274 385l0 7M247 374l5 5M272 386l2 7M264 385l5 4M264 389l7 1M250 380l3 6M257 384l0 7M267 387l-4 6M252 385l-1 7M256 386l-3 6M263 391l3 6M253 388l-6 3M253 393l6 3M244 389l4 6M256 393l-4 6M251 392l-1 7M258 397l5 5M264 399l-6 3M266 401l-5 5M246 398l-7 1M249 402l-7 1M242 398l-0 7M266 405l-5 5M256 403l-1 7M241 402l-1 7M253 404l2 7M253 406l-3 6M261 409l5 5M265 411l5 5M258 410l5 5M255 411l4 6M258 412l-6 4M254 413l-5 5M236 411l5 5M255 415l0 7M261 419l7 1M260 417l1 7M254 419l6 4M252 419l2 7M262 420l3 6M258 422l-0 7M266 423l-5 5M255 427l7 2M254 424l-1 7M247 426l-4 6M248 428l-7 2M265 429l-1 7M261 429l4 6M241 432l-6 3M236 433l7 2M247 434l6 3M240 436l7 0M254 435l3 6M246 435l3 7M253 437l5 5M244 437l-0 7M259 438l-0 7M262 440l-6 3M246 444l-6 3M259 440l1 7M239 447l-6 4M264 444l-6 3M248 447l-3 6M261 448l-7 0M240 450l3 6M254 448l2 7M271 451l-7 0M239 455l7 2M241 456l-3 6M264 450l0 7M261 454l5 4M256 456l-6 4M253 458l5 5M262 457l7 2M247 465l-7 1M259 461l-6 3M267 461l-6 4M262 460l3 6M244 469l7 1M256 466l-6 3M249 470l7 0M245 470l6 4M273 465l-4 5M254 469l2 7M243 474l3 6M253 473l7 2M263 472l-4 6M268 472l-7 2M247 480l7 0M266 472l-1 7M264 474l5 5M252 482l-7 1M247 484l7 1M251 481l6 4M262 480l-2 7M255 482l-2 7M247 488l6 3M253 485l-2 7M264 483l4 5M254 487l2 7M264 486l6 3M277 482l-5 5M261 492l-6 3M256 491l3 6M266 489l1 7M270 490l7 0M278 486l2 7M256 499l-7 2M257 500l-4 5M282 492l-7 0M273 493l4 6M267 498l-5 4M260 501l4 6M275 495l4 6M278 495l2 7M274 497l5 5M277 498l4 5M264 505l-2 7M267 508l-4 6M262 510l7 1M279 503l7 0M274 510l-7 1M285 503l-4 6M280 505l-3 6M279 512l-7 1M265 515l5 5M269 520l-6 3M271 519l-7 1M279 511l4 5M274 519l-6 3M288 511l-4 6M277 520l-7 2M287 514l-4 5M274 524l-5 4M273 529l-7 2M285 516l5 4M290 516l-1 7M280 521l3 6M285 522l0 7M267 534l6 3M295 523l-7 2M284 524l4 6M290 523l1 7M277 534l7 2M297 521l-0 7M298 523l-5 5M279 542l-6 3M283 541l-7 1M280 542l-4 6M290 533l-2 7M304 527l-4 5M305 526l-5 5M305 532l-7 0M299 530l4 6M294 537l5 5M285 545l7 2M306 532l-2 7M292 543l7 1M293 544l3 6M304 539l-5 5M306 542l-7 2M307 538l-5 5M293 551l-0 7M300 546l-3 6M307 544l-4 6M310 545l-7 0M302 555l-7 1M304 551l-6 3M298 555l1 7M315 540l-1 7M298 560l-3 6M306 549l6 4M294 564l6 3M303 559l-5 5M303 558l7 1M300 565l-5 5M312 554l-2 7M309 558l-2 7M307 561l2 7M322 546l-1 7M318 556l-4 5M322 555l-7 0M309 568l-3 6M314 560l7 1M323 558l-5 5M310 568l6 3M328 555l-4 5M309 573l6 4M310 577l1 7M316 574l-5 5M312 578l7 0M328 556l5 5M320 571l7 1M324 572l-5 5M329 568l-4 5M323 577l-5 5M316 582l5 5M338 560l-6 4M325 580l-4 6M331 575l-7 2M328 574l5 5M331 569l6 3M328 579l1 7M329 580l-1 7M331 587l-7 1M338 566l2 7M342 564l1 7M342 572l-6 3M331 586l2 7M337 575l2 7M342 575l-4 6M346 567l-2 7M342 572l7 2M332 593l5 5M341 579l3 6M341 591l-6 4M347 572l3 6M346 572l6 3M354 576l-7 1M351 582l-7 0M349 576l5 4M342 592l2 7M342 597l5 5M358 576l-7 2M343 598l5 5M362 573l-7 2M354 595l-7 0M357 585l-5 5M362 580l-5 5M350 593l5 5M364 576l-0 7M360 579l6 3M363 588l-5 5M359 587l6 3M355 596l6 4M358 596l-2 7M351 606l7 1M361 600l-6 3M357 602l2 7M356 603l2 7M356 605l6 4M365 595l5 5M355 609l6 3M367 596l3 6M375 595l-5 5M362 604l5 5M382 591l-5 4M362 607l5 4M367 605l6 4M366 606l6 4M388 592l-6 4M374 607l-6 4M374 608l-4 5M387 592l-1 7M374 608l6 3M388 600l-7 1M393 596l-5 5M388 596l6 4M390 603l-5 5M379 612l-3 6M386 612l-6 4M388 604l4 5M390 610l-5 5M393 602l3 6M388 613l-1 7M375 623l5 5M392 611l7 2M390 616l-4 6M390 620l-5 5M383 623l7 2M382 627l-2 7M391 619l7 0M384 630l-3 6M402 618l-6 3M397 620l4 6M384 630l6 3M402 622l-3 6M393 626l5 5M392 630l6 3M402 622l4 6M395 632l-3 6M402 627l-3 6M389 638l-2 7M399 630l3 6M412 627l-5 5M415 629l-7 0M414 630l-6 4M417 626l-2 7M402 637l-2 7M395 642l-4 6M402 638l5 4M415 633l-4 6M417 634l6 3M402 640l3 6M407 643l-4 6M397 648l-6 4M402 647l-4 6M398 648l6 3M423 640l1 7M401 651l-5 5M411 649l-3 6M401 651l2 7M415 653l-7 0M411 650l1 7M403 657l-6 4M409 653l-1 7M420 653l-1 7M418 654l-2 7M397 663l7 0M409 659l6 4M423 658l1 7M420 660l7 2M420 662l-5 5M423 661l-4 6M421 664l-2 7M396 667l5 5M412 667l-2 7M399 668l4 6M424 669l-1 7M422 670l-5 5M416 671l1 7M408 672l3 6M424 677l7 1M411 677l7 1M428 679l-6 3M426 679l6 3M404 677l1 7M425 680l-4 6M424 683l-5 5M426 683l-5 5M408 682l1 7M409 683l-6 4M425 688l-5 5M419 687l-0 7M416 691l5 4M397 684l2 7M417 692l-6 4M405 692l7 1M425 697l-1 7M415 694l-4 5M406 692l-5 5M421 699l-6 3M417 700l4 6M396 691l1 7M404 697l-7 2M402 698l6 4M407 700l3 6M415 704l-7 1M421 710l-7 0M401 699l-5 4M399 705l7 1M410 710l7 2M410 709l-7 2M399 702l-3 6M411 712l-7 1M412 714l4 5M399 706l-6 4M396 706l2 7M392 705l-6 3M408 715l0 7M411 721l-7 1M406 717l1 7M394 716l7 1M395 712l-7 2M389 714l6 3M383 711l7 1M400 721l1 7M383 713l7 2M403 726l-1 7M388 713l-5 5M396 723l-2 7M384 713l-1 7M398 728l1 7M396 729l5 5M404 736l-6 4M392 725l-3 7M388 726l2 7M380 724l7 1M394 733l-0 7M387 726l-2 7M380 726l4 5M383 725l-7 1M395 741l-7 2M392 738l-6 3M386 736l-1 7M378 732l6 4M392 745l-6 4M376 729l2 7M373 727l-0 7M388 746l-0 7M384 748l4 6M382 742l-3 6M374 744l7 0M382 744l-6 4M378 747l2 7M374 741l1 7M368 735l-2 7M372 739l-7 3M368 746l6 4M374 753l3 6M357 732l5 5M368 742l-4 6M366 743l-7 0M363 743l2 7M367 749l-7 2M371 758l-1 7M355 747l7 1M353 741l6 3M356 749l5 4M360 758l6 3M358 749l-4 5M351 749l7 0M350 742l-0 7M354 759l7 0M344 744l6 4M358 758l-6 3M355 761l-0 7M359 766l-6 3M351 769l6 4M349 760l3 6M350 759l-7 1M350 767l3 6M352 770l-5 5M339 754l7 2M345 763l-1 7M338 756l6 4M344 762l-5 4M345 764l-6 3M341 763l-2 7M338 755l-5 5M338 758l-6 4M335 757l-1 7M338 772l1 7M329 758l7 2M333 779l7 0M337 769l-7 1M326 760l6 4M336 773l-6 3M324 749l-1 7M328 757l-5 4M320 750l3 6M329 766l-7 2M326 776l2 7M327 774l-2 7M321 775l6 3M317 757l4 5M324 772l-7 1M326 781l-6 3M318 756l-6 4M317 782l7 1M309 752l5 4M309 757l7 2M310 753l0 7M311 766l3 6M313 777l1 7M310 765l2 7M313 780l-4 6M310 758l-7 0M308 756l-6 4M308 761l-4 5M308 766l-7 2M304 752l-2 7M305 761l-7 1M303 770l0 7M298 783l7 2M296 769l7 1M298 764l-1 7M299 756l-4 6M298 780l-4 6M293 765l5 5M296 765l-6 3M290 757l6 4M289 779l3 6M291 757l-0 7M291 769l-4 5M288 780l2 7M283 781l7 2M288 776l-3 6M286 765l-1 7M287 763l-4 6M287 754l-6 4M287 760l-7 3M283 762l-3 6M280 766l2 7M282 769l-7 1M276 772l3 6M270 782l6 3M270 782l5 4M273 769l-0 7M271 770l5 5M270 778l-4 6M269 768l7 0M270 774l-6 4M265 771l7 1M265 766l7 2M272 764l-7 2M265 772l-6 4M264 763l5 5M261 765l4 6M263 770l-6 3M252 773l2 7M267 761l-6 4M269 756l-6 4M266 754l7 1M269 752l-4 6M256 759l3 6M256 758l-1 7M264 754l-3 6M266 749l3 6M261 752l0 7M249 760l-7 0M240 760l6 3M255 753l7 0M258 749l1 7M266 746l-3 6M263 747l6 4M266 744l-4 6M255 746l4 5M249 745l2 7M242 747l-2 7M245 745l7 1M253 744l-6 3M243 742l6 3M266 738l2 7M249 738l4 6M262 739l-7 2M250 738l-7 2M243 737l-5 4M254 735l6 3M265 735l-7 1M242 732l-5 5M251 732l-5 5M252 729l1 7M258 729l4 6M250 727l5 5M269 729l-6 3M256 725l-3 6M260 725l2 7M254 725l6 3M245 724l6 3M252 720l0 7M254 724l7 1M238 717l3 6M269 723l-7 1M246 716l-4 5M239 717l6 3M241 713l6 4M246 714l-6 4M247 714l7 1M257 712l-5 5M256 709l-3 7M260 712l-6 3M250 709l7 2M265 713l7 1M260 711l7 0M254 704l-5 5M245 701l6 4M246 699l-4 5M256 701l3 6M253 700l4 6M272 704l-3 6M249 697l6 3M251 692l-5 5M261 702l7 0M245 690l6 3M268 699l5 5M257 689l-5 5M270 696l-6 4M258 687l-4 6M268 695l4 5M254 683l-7 2M274 694l0 7M259 682l-4 6M269 692l6 4M274 690l1 7M275 690l-2 7M269 684l-4 6M263 680l-5 5M253 676l7 2M275 690l6 3M258 672l0 7M283 688l-6 3M280 684l-0 7M271 677l-3 6M285 685l-6 4M269 678l6 3M271 673l-7 1M268 671l1 7M282 678l-5 5M269 672l5 4M270 667l-0 7M271 670l4 5M285 677l3 6M264 663l5 4M282 671l-0 7M285 677l6 3M288 673l-7 0M283 673l6 3M278 661l-5 5M269 657l4 6M274 661l7 1M281 661l-1 7M281 663l6 4M268 653l7 1M277 654l3 6M280 654l-5 5M282 653l-7 1M281 653l-7 0M286 654l1 7M283 653l3 6M275 646l6 3M290 654l0 7M288 648l-4 6M287 654l7 2M292 657l7 1M289 651l6 4M301 654l-6 4M297 653l2 7M290 645l6 4M295 645l-5 5M286 639l6 3M297 652l7 1M308 652l-4 6M306 655l5 5M307 654l5 4M300 647l6 3M305 650l7 2M310 650l3 6M309 643l-6 3M300 637l4 6M308 643l4 6M312 649l5 4M311 638l-2 7M310 637l-6 4M312 639l3 6M302 629l5 5M308 627l-2 7M312 632l-3 6M320 639l1 7M308 622l-5 5M323 637l-6 4M309 626l4 6M319 630l0 7M322 634l-1 7M316 623l-1 7M314 627l7 2M321 626l-0 7M327 633l1 7M324 624l-7 1M335 637l-6 4M316 613l3 6M326 625l0 7M321 615l1 7M332 634l5 4M324 613l-7 2M326 625l7 1M335 630l5 4M321 611l6 4M336 627l4 6M336 621l-7 2M331 615l4 6M325 610l7 3M336 612l-7 1M343 623l-7 2M332 606l2 7M337 612l1 7M343 617l0 7M328 602l7 0M339 608l2 7M353 624l-5 5M339 610l7 0M350 621l3 6M346 615l6 3M357 622l-6 3M345 599l-7 1M354 614l-3 6M344 595l-2 7M360 618l-6 3M355 606l-6 3M352 605l0 7M361 611l-5 5M345 594l5 5M361 609l-2 7M347 597l7 0M356 596l-5 4M363 607l-7 0M355 599l6 3M367 608l-7 2M363 598l-7 1M350 586l5 5M357 594l5 5M355 589l5 5M369 607l6 4M364 593l-6 4M366 591l-6 3M364 598l7 2M367 594l4 6M374 602l1 7M366 584l-7 1M361 587l7 1M367 588l5 5M369 594l7 2M375 598l7 0M377 591l-5 5M369 581l3 6M378 591l-1 7M368 576l2 7M372 583l3 6M380 585l-7 0M381 586l-3 6M381 583l-7 1M375 575l-3 6M385 583l-5 5M388 594l6 4M388 591l6 4M386 586l3 6M385 579l0 7M385 578l-0 7M385 578l3 6M385 572l-6 4M385 576l6 4M391 586l7 2M387 569l-2 7M390 579l5 4M399 582l-1 7M402 586l-3 6M397 582l6 4M402 582l-6 3M392 564l-2 7M391 561l-6 4M401 582l7 2M401 583l7 1M391 559l5 5M392 559l4 6M408 581l4 6M394 561l6 4M411 580l0 7M395 560l7 2M414 579l-2 7M403 557l-6 3M407 566l2 7M411 573l2 7M417 574l-6 4M416 574l-4 6M407 552l-6 3M420 577l-3 6M411 567l7 2M420 575l0 7M419 565l-7 2M414 558l-2 7M417 562l1 7M412 553l1 7M426 573l-2 7M413 559l7 1M413 551l6 4M414 550l4 6M421 565l7 1M421 558l2 7M428 562l-7 0M433 570l-7 2M427 559l1 7M430 561l-5 5M429 553l-7 2M424 555l6 4M433 561l0 7M419 542l7 2M431 549l-4 6M429 545l-7 1M433 558l6 4M440 561l-5 5M436 564l7 0M440 564l2 7M435 546l-0 7M442 558l-6 3M440 555l2 7M436 540l-7 2M443 550l-4 6M444 551l-7 1M446 551l-7 0M445 549l-6 4M450 559l-2 7M452 559l-7 1M455 561l-7 0M443 544l5 5M445 547l6 4M444 537l0 7M456 554l-3 6M457 556l-5 5M448 539l2 7M454 555l5 5M451 538l1 7M455 550l2 7M453 535l-2 7M452 535l1 7M450 529l3 6M461 546l-5 5M455 534l1 7M454 534l4 6M456 527l-3 6M460 534l-5 5M459 531l0 7M460 545l7 0M469 544l-4 6M469 545l-2 7M461 533l5 5M466 541l4 6M461 523l1 7M470 545l4 5M472 548l7 1M477 548l-1 7M471 531l-1 7M468 526l-1 7M481 545l-2 7M471 525l-2 7M473 525l-2 7M475 528l-5 5M475 521l-7 2M478 543l7 1M473 524l6 4M489 545l-6 3M472 521l7 0M484 541l5 4M490 538l-4 6M486 538l4 6M481 516l-5 5M479 518l3 6M484 519l-1 7M488 530l1 7M483 518l4 6M485 523l4 5M492 523l-4 6M502 541l-7 1M491 521l1 7M483 512l5 4M497 534l6 3M498 524l-6 4M497 523l1 7M492 511l-2 7M505 529l-4 6M500 528l4 5M502 531l7 1M491 510l6 4M498 521l7 1M504 529l7 2M508 528l4 6M506 518l-7 1M505 512l-7 3M507 516l-3 6M500 509l6 4M506 510l-6 3M506 513l5 5M503 507l4 6M517 522l3 6M515 517l1 7M518 515l-6 3M507 500l-6 4M515 507l-5 5M515 514l6 4M511 498l-5 5M507 497l2 7M518 508l3 6M520 516l7 1M515 497l-6 3M526 510l-4 6M512 497l6 3M519 498l-7 3M518 502l7 2M515 498l7 2M519 494l1 7M524 498l-3 6M526 500l4 6M533 504l-4 6M542 511l-7 2M522 492l2 7M527 500l7 0M539 506l-0 7M542 505l0 7M519 488l7 1M539 500l2 7M533 499l7 3M523 482l2 7M521 485l7 1M532 491l6 4M539 492l-3 6M538 489l-5 5M535 491l6 4M525 479l5 5M546 494l3 6M537 483l-7 2M534 483l4 5M549 489l-6 3M552 491l-3 7M542 482l-0 7M543 485l6 4M554 487l-1 7M550 487l5 5M548 481l2 7M555 488l5 5M557 484l2 7M551 481l4 6M554 478l-6 4M563 486l-7 0M560 479l-1 7M556 478l-7 2M564 479l-2 7M541 467l-7 0M560 480l7 1M553 472l3 6M541 460l-4 5M547 465l2 7M553 471l7 1M557 472l6 3" stroke="#cc14a4" stroke-width="0.8" opacity="0.45"></path>
<path d="M391 465l-3 5M393 466l-2 6M392 457l-2 6M388 451l5 4M402 467l-5 3M389 443l4 4M402 460l2 6M393 446l6 0M396 442l1 6M403 452l6 2M404 444l-5 3M417 452l-5 3M409 447l5 4M397 436l6 2M420 445l-2 6M404 437l6 2M423 443l3 5M397 428l6 2M405 428l-6 1M402 427l6 1M432 435l-5 3M426 432l6 2M427 429l4 5M431 426l-5 4M402 416l4 4M436 423l-6 2M415 414l-1 6M424 416l5 4M421 411l1 6M432 411l-2 6M434 408l-2 6M424 406l-4 4M416 403l-4 5M424 401l3 5M419 400l6 2M433 395l-1 6M423 396l-5 3M411 393l-0 6M412 394l-6 1M431 385l-2 6M428 385l6 2M417 386l-6 2M414 382l1 6M416 380l-1 6M420 378l-4 5M410 377l3 5M399 380l6 1M416 371l-1 6M423 368l-5 3M419 367l-5 3M406 368l-0 6M410 365l-3 5M408 365l-5 3M416 355l-0 6M404 362l-4 4M418 350l-5 3M411 349l-0 6M393 361l4 4M398 354l4 5M394 356l3 5M401 351l-5 3M398 345l3 5M402 339l-2 6M402 339l-6 1M389 347l3 5M394 344l-5 3M391 342l-4 5M388 336l1 6M386 332l4 5M385 331l1 6M381 338l0 6M380 343l-6 2M378 343l-6 2M370 349l5 4M375 339l-5 3M374 330l-5 3M368 343l-2 6M363 334l6 0M360 349l4 5M360 340l2 5M361 319l-1 6M358 341l-3 5M357 339l-6 2M355 323l-5 3M350 346l1 6M349 343l-1 6M347 326l-3 5M341 336l5 3M339 340l5 4M340 325l-6 1M335 326l1 6M337 343l-4 4M332 351l4 5M331 329l-6 2M324 321l0 6M323 331l2 6M322 349l6 1M321 344l2 5M322 350l-2 6M318 345l0 6M313 328l-5 3M314 354l4 5M311 345l-1 6M303 333l3 5M303 339l3 5M303 335l-6 1M301 337l-6 1M301 347l-1 6M289 333l5 4M300 352l-6 1M293 343l-4 5M285 338l2 6M290 349l-1 6M282 343l3 5M297 367l-6 0M277 349l6 2M284 355l-4 4M287 367l5 4M278 357l2 6M280 362l1 6M277 365l5 3M272 358l-1 6M268 362l5 4M273 365l-6 2M264 360l-2 6M260 360l-6 2M262 366l1 6M268 373l-6 1M257 369l-6 0M263 375l-3 5M272 386l6 2M267 382l-5 4M259 381l-2 6M269 388l2 6M264 391l6 1M257 390l6 1M251 389l5 3M249 391l4 4M265 396l-1 6M264 398l-2 6M261 403l6 0M247 401l4 4M251 402l1 6M265 407l-3 5M240 405l-1 6M250 408l-1 6M262 414l-6 1M254 413l-4 4M254 415l1 6M257 418l-4 4M261 422l-5 3M260 426l6 0M260 425l-0 6M262 428l4 5M243 429l2 6M256 432l4 5M243 433l2 6M255 438l6 1M253 437l-1 6M245 441l-4 4M244 442l-2 6M251 445l4 4M250 447l-3 5M253 449l-3 5M251 451l1 6M240 456l4 5M250 456l3 5M255 458l-3 5M263 461l-6 1M260 461l-2 6M242 468l-1 6M248 469l4 4M246 471l3 5M258 470l3 5M270 469l-2 6M270 472l5 3M265 476l-5 4M255 483l-5 3M250 486l-5 3M271 483l-6 1M264 483l2 6M248 492l-0 6M247 496l6 2M248 498l5 3M278 489l-5 4M277 491l-3 5M266 501l-6 0M262 501l4 4M264 503l5 3M256 509l5 4M279 500l0 6M268 508l4 4M261 516l-3 5M286 504l-0 6M273 513l4 5M266 520l-0 6M282 513l-0 6M288 511l4 4M285 517l-2 6M279 527l-6 2M289 522l-5 4M281 529l-3 5M283 532l-5 4M292 528l-5 4M289 532l-1 6M304 526l-6 2M298 534l-5 3M300 530l2 6M289 544l-3 5M299 537l4 4M292 545l5 4M298 543l5 4M299 545l2 5M313 542l-6 1M309 548l-6 2M295 558l5 3M312 544l5 3M296 564l-0 6M309 553l1 6M317 547l2 5M319 548l3 5M307 564l6 2M303 572l3 5M304 575l6 0M320 560l2 6M325 557l5 4M315 576l-1 6M329 559l6 2M327 565l5 3M330 564l5 3M330 575l-5 2M330 573l1 6M326 581l5 4M329 585l-3 5M329 584l6 1M338 572l5 4M335 583l6 0M350 569l-6 0M340 589l-2 6M352 570l-5 3M351 569l2 5M350 574l6 2M353 577l1 6M350 595l-5 4M349 597l-1 6M351 594l3 5M355 590l3 5M363 582l6 0M368 582l-2 6M368 592l-6 1M357 601l5 4M359 604l-0 6M373 589l3 5M364 606l-2 6M375 600l-6 2M366 607l6 2M382 593l6 1M372 607l5 3M368 615l5 3M383 604l-2 6M389 605l-5 3M390 603l1 6M390 607l1 6M374 625l5 3M391 613l6 2M397 610l4 5M383 626l5 3M394 619l3 5M384 631l5 3M401 621l6 2M399 625l3 5M398 628l2 6M409 624l1 6M404 631l5 3M402 635l5 3M414 630l4 4M401 639l1 6M418 634l1 6M410 642l6 0M396 649l3 5M405 651l-5 3M404 650l1 6M410 651l1 6M426 649l1 6M422 655l6 1M424 656l-3 5M424 658l2 6M403 664l-2 6M407 669l-6 1M420 668l-5 4M409 671l5 4M406 673l4 4M409 674l2 6M415 677l-4 4M410 681l-6 1M401 679l2 6M411 686l6 1M412 687l4 5M420 693l6 2M407 693l6 1M416 695l2 6M419 698l-4 4M402 693l-2 6M405 697l-4 4M403 701l5 3M416 711l6 1M401 702l-6 2M408 709l3 5M406 709l-5 4M414 716l-2 6M408 717l2 6M401 716l4 4M384 708l5 4M403 722l3 5M390 715l2 5M399 724l1 6M382 717l6 0M388 719l-6 2M402 734l-5 4M394 732l1 6M390 730l-3 5M396 739l-5 4M398 745l-6 1M385 741l6 1M373 727l3 5M377 731l-2 6M378 736l-3 5M373 733l-5 3M367 729l-2 6M370 740l1 6M373 745l-5 3M366 743l2 6M370 756l2 6M361 751l6 1M359 745l0 6M358 745l-6 1M350 744l4 4M348 746l6 1M357 765l3 5M355 759l-5 3M353 766l2 6M340 749l5 3M338 753l6 1M344 758l-6 0M343 762l-3 5M344 773l-2 6M334 751l-4 5M337 774l3 5M331 755l-2 6M328 751l-6 2M328 756l-6 0M325 770l5 4M320 754l1 6M323 761l-5 3M318 752l-5 2M319 781l4 4M314 779l6 0M314 766l-3 5M313 770l-3 5M307 761l1 6M309 767l-5 3M307 772l-4 4M303 755l-5 3M302 765l-5 4M294 761l6 1M295 767l-0 6M295 759l-4 4M292 784l-2 6M287 756l5 4M288 759l-2 6M282 783l4 5M285 768l-5 3M278 782l1 6M273 783l5 3M275 779l-3 5M275 762l-1 6M273 773l-5 3M273 761l-3 5M270 767l-5 3M273 756l-5 4M258 774l-3 5M263 763l-3 5M263 762l-6 2M250 766l-1 6M257 758l-3 5M266 754l-6 2M247 758l6 1M252 752l5 4M250 751l-2 6M253 749l-5 4M262 746l-6 0M260 742l5 3M250 742l-5 3M266 739l-6 1M246 736l4 4M268 734l-5 3M267 731l-3 5M263 730l-4 4M262 727l-2 6M244 727l6 1M247 723l1 6M263 723l-6 2M259 720l2 6M251 717l3 5M239 714l6 2M244 710l-4 5M246 708l1 6M269 711l0 6M257 706l2 6M273 710l-6 1M265 705l-6 1M261 701l3 5M259 697l2 6M264 695l-2 6M265 697l5 3M249 687l6 1M249 683l5 4M272 691l-6 2M264 683l-1 6M259 678l-5 3M254 677l6 2M267 678l-2 6M260 672l2 6M273 680l5 4M263 667l-4 4M270 673l5 4M269 667l2 6M269 663l-5 4M282 672l0 6M270 661l3 5M275 661l1 6M271 657l5 2M289 665l-5 4M292 669l4 4M283 659l6 2M288 657l2 6M297 662l-2 6M285 648l2 5M292 650l-1 6M284 643l6 2M294 651l6 2M300 649l-0 6M298 643l-6 1M307 649l-1 6M300 636l-4 5M310 647l2 6M313 644l-3 5M307 634l-6 1M313 639l0 6M314 634l-5 3M303 622l4 5M304 622l6 2M311 624l3 5M314 623l3 5M322 626l-3 5M313 614l3 5M324 621l-5 3M322 615l-6 1M323 612l-2 6M332 620l-4 4M327 609l-2 6M339 625l1 6M332 611l2 6M342 624l4 4M332 606l6 2M345 613l-6 2M352 620l-6 0M351 616l-1 6M344 602l2 6M352 613l5 4M360 616l-3 5M352 598l-5 3M350 591l-4 5M346 590l5 3M361 600l-4 4M361 598l-2 6M363 595l-5 3M361 589l-6 1M360 584l-5 3M374 601l-0 6M378 601l-2 6M377 596l-6 1M374 594l5 4M371 581l-5 3M377 591l4 4M381 587l-6 1M373 577l3 5M383 583l-2 5M375 572l3 5M388 581l-5 3M382 574l2 6M378 568l6 2M399 588l2 6M401 585l-6 2M386 566l5 3M400 581l3 5M394 566l2 6M398 563l-6 2M412 582l-5 3M399 564l4 4M406 564l-4 5M404 557l-3 5M407 569l6 0M413 575l6 2M414 561l-3 5M410 554l2 6M425 574l-6 2M426 570l-6 1M423 569l4 4M427 564l-4 5M415 547l6 1M433 566l-6 1M431 559l-6 0M424 542l-1 6M432 563l6 2M426 546l5 2M434 546l-4 4M429 540l5 3M441 563l5 3M442 553l0 6M440 545l2 6M439 534l-2 6M447 545l-3 5M445 535l-4 4M453 557l4 4M449 536l-3 5M451 542l3 5M456 553l5 3M458 539l-6 1M460 552l6 1M468 552l-3 5M468 550l-1 6M465 537l-2 6M471 543l-4 5M469 538l-1 6M470 543l5 3M477 543l-2 6M472 526l-5 3M482 543l-3 5M470 521l4 5M483 535l-6 2M475 525l6 2M475 521l6 0M482 518l-5 3M495 540l-3 5M488 523l-1 6M484 518l6 2M497 534l2 6M493 516l-6 2M504 532l-5 3M491 508l1 6M504 532l5 3M504 522l-0 6M499 513l3 5M508 520l-0 6M514 527l2 6M505 511l4 5M504 502l-1 6M516 513l-6 1M515 513l4 4M518 508l-6 2M516 503l-2 6M512 496l2 6M533 516l-3 5M528 508l-6 0M533 513l5 3M517 494l6 2M535 504l-6 2M519 490l6 1M525 493l5 3M524 485l2 6M545 501l-4 4M543 500l4 4M528 484l4 4M541 495l6 0M534 481l-6 2M554 493l-6 1M543 483l-6 1M541 482l6 2M541 475l-5 4M531 470l5 3M544 472l-5 3M553 478l4 4M542 467l1 6M561 476l-5 3M548 470l6 1M561 471l-2 6" stroke="#f47ad4" stroke-width="0.8" opacity="0.4"></path>
<path d="M388.6 463.5h0.1M392.5 459.9h0.1M398.7 457.0h0.1M399.0 448.1h0.1M406.7 450.5h0.1M406.1 442.3h0.1M412.3 440.8h0.1M415.2 438.5h0.1M421.3 431.7h0.1M409.0 423.4h0.1M425.6 421.8h0.1M428.9 416.8h0.1M431.4 409.7h0.1M419.5 404.1h0.1M430.3 398.8h0.1M412.6 396.9h0.1M418.8 389.9h0.1M423.1 381.2h0.1M409.7 378.7h0.1M416.7 372.4h0.1M405.4 370.0h0.1M411.5 362.4h0.1M407.0 356.2h0.1M410.4 347.0h0.1M396.0 356.3h0.1M401.7 339.2h0.1M391.3 345.2h0.1M380.2 351.8h0.1M380.0 337.8h0.1M373.0 347.6h0.1M370.5 335.0h0.1M368.0 324.9h0.1M357.1 338.0h0.1M355.5 327.7h0.1M348.3 334.5h0.1M343.5 339.4h0.1M337.2 337.4h0.1M328.5 334.2h0.1M325.0 332.1h0.1M319.8 338.6h0.1M311.3 335.7h0.1M306.0 334.5h0.1M307.0 351.1h0.1M301.6 355.9h0.1M295.5 353.1h0.1M284.6 349.9h0.1M276.5 348.1h0.1M279.0 359.6h0.1M269.3 354.2h0.1M272.8 368.3h0.1M259.5 362.3h0.1M272.1 382.1h0.1M252.2 374.6h0.1M261.9 387.2h0.1M251.1 389.8h0.1M267.0 399.7h0.1M245.9 400.4h0.1M251.1 404.8h0.1M263.9 413.1h0.1M250.3 417.4h0.1M256.4 423.3h0.1M247.0 427.3h0.1M260.6 432.3h0.1M259.8 440.6h0.1M254.2 444.3h0.1M243.1 450.6h0.1M244.2 459.4h0.1M261.2 459.7h0.1M259.8 465.0h0.1M259.7 473.1h0.1M255.8 479.2h0.1M271.8 479.1h0.1M259.8 488.4h0.1M270.0 491.7h0.1M263.8 497.7h0.1M267.4 503.4h0.1M278.7 500.7h0.1M274.7 510.8h0.1M273.3 518.6h0.1M272.3 526.8h0.1M287.0 523.9h0.1M276.3 538.0h0.1M280.2 543.5h0.1M289.2 544.2h0.1M298.6 540.5h0.1M304.1 548.4h0.1M306.9 548.2h0.1M303.8 557.5h0.1M312.9 558.6h0.1M312.9 566.5h0.1M318.1 573.6h0.1M328.6 566.9h0.1M331.0 574.3h0.1M335.6 570.1h0.1M334.9 587.3h0.1M341.7 586.4h0.1M346.6 587.5h0.1M347.8 593.5h0.1M356.0 586.4h0.1M360.4 590.5h0.1M361.6 599.2h0.1M361.3 607.1h0.1M370.1 604.2h0.1M376.3 605.8h0.1M379.9 613.3h0.1M387.9 615.3h0.1M389.2 623.4h0.1M397.8 620.7h0.1M394.7 633.7h0.1M399.5 636.8h0.1M413.9 634.5h0.1M409.9 641.4h0.1M411.5 648.2h0.1M405.3 656.0h0.1M409.8 659.7h0.1M405.7 668.1h0.1M408.2 672.4h0.1M409.2 676.1h0.1M415.4 685.6h0.1M401.4 689.4h0.1M407.1 692.0h0.1M411.5 702.2h0.1M413.7 707.5h0.1M399.7 707.0h0.1M406.0 716.9h0.1M391.5 716.4h0.1M388.3 717.9h0.1M393.0 728.0h0.1M389.3 731.1h0.1M378.7 730.0h0.1M386.4 743.6h0.1M369.9 734.0h0.1M374.7 754.2h0.1M370.9 757.5h0.1M354.2 745.2h0.1M356.5 762.2h0.1M349.4 761.0h0.1M338.3 753.5h0.1M342.7 771.5h0.1M333.2 765.7h0.1M328.4 773.0h0.1M323.9 776.9h0.1M313.0 757.4h0.1M311.8 767.2h0.1M307.3 781.6h0.1M299.5 763.7h0.1M293.6 771.9h0.1M291.1 774.9h0.1M283.8 777.1h0.1M279.0 774.9h0.1M276.4 760.7h0.1M271.9 762.8h0.1M263.9 764.6h0.1M256.8 767.8h0.1M255.7 759.7h0.1M264.2 749.0h0.1M259.5 746.0h0.1M247.4 740.6h0.1M260.7 734.2h0.1M252.1 730.0h0.1M247.6 727.2h0.1M258.2 719.8h0.1M258.7 715.6h0.1M247.0 704.6h0.1M250.5 702.5h0.1M255.5 694.3h0.1M271.0 697.0h0.1M256.4 684.7h0.1M269.7 684.9h0.1M263.0 673.0h0.1M267.5 669.3h0.1M277.3 674.4h0.1M287.4 670.9h0.1M273.3 656.2h0.1M288.4 662.0h0.1M287.4 650.4h0.1M297.2 653.8h0.1M300.3 645.6h0.1M312.0 649.4h0.1M303.3 631.6h0.1M315.8 640.7h0.1M312.8 624.5h0.1M324.8 628.7h0.1M329.8 628.8h0.1M333.6 620.2h0.1M334.0 613.3h0.1M341.3 609.6h0.1M342.6 602.6h0.1M351.0 608.3h0.1M360.8 612.2h0.1M355.5 593.9h0.1M366.3 600.6h0.1M370.9 596.8h0.1M378.1 597.5h0.1M374.1 581.6h0.1M389.1 590.7h0.1M387.9 579.8h0.1M395.6 583.1h0.1M399.5 582.2h0.1M406.7 577.8h0.1M404.1 565.0h0.1M409.1 568.3h0.1M414.5 566.3h0.1M414.2 553.9h0.1M417.3 550.9h0.1M434.0 565.0h0.1M432.1 557.4h0.1M438.5 553.6h0.1M442.6 552.2h0.1M450.1 557.3h0.1M455.5 554.2h0.1M455.5 544.7h0.1M462.2 548.7h0.1M465.3 537.2h0.1M466.7 530.6h0.1M474.4 536.7h0.1M484.4 539.6h0.1M484.7 532.2h0.1M489.4 528.8h0.1M497.3 528.3h0.1M497.0 524.2h0.1M505.1 526.1h0.1M508.3 521.9h0.1M515.3 517.5h0.1M518.9 514.1h0.1M529.7 515.7h0.1M525.3 507.3h0.1M529.5 499.4h0.1M540.3 504.4h0.1M535.2 491.0h0.1M544.2 492.9h0.1M550.9 490.5h0.1M541.1 476.8h0.1M550.7 476.0h0.1M560.4 475.1h0.1" stroke="#ffc8f0" stroke-width="2.6" stroke-linecap="round" opacity="0.6"></path>
</g>
<g filter="url(#soft)">
<path d="M575.0 438.0 C574.2 444.8 572.2 462.3 570.0 479.0 C567.8 495.7 563.7 518.2 562.0 538.0 C560.3 557.8 558.8 578.5 560.0 598.0 C561.2 617.5 564.0 638.5 569.0 655.0 C574.0 671.5 581.5 687.5 590.0 697.0 C598.5 706.5 610.0 711.5 620.0 712.0 C630.0 712.5 641.7 707.8 650.0 700.0 C658.3 692.2 664.8 680.0 670.0 665.0 C675.2 650.0 678.0 628.3 681.0 610.0 C684.0 591.7 686.2 571.3 688.0 555.0 C689.8 538.7 691.3 519.2 692.0 512.0" fill="none" stroke="#f4d090" stroke-width="49" stroke-linecap="round" stroke-linejoin="round" opacity="0.2"></path>
<path d="M575.0 438.0 C574.2 444.8 572.2 462.3 570.0 479.0 C567.8 495.7 563.7 518.2 562.0 538.0 C560.3 557.8 558.8 578.5 560.0 598.0 C561.2 617.5 564.0 638.5 569.0 655.0 C574.0 671.5 581.5 687.5 590.0 697.0 C598.5 706.5 610.0 711.5 620.0 712.0 C630.0 712.5 641.7 707.8 650.0 700.0 C658.3 692.2 664.8 680.0 670.0 665.0 C675.2 650.0 678.0 628.3 681.0 610.0 C684.0 591.7 686.2 571.3 688.0 555.0 C689.8 538.7 691.3 519.2 692.0 512.0" fill="none" stroke="#eca21c" stroke-width="33" stroke-linecap="round" stroke-linejoin="round"></path>
<path d="M585 439l11 2M564 437l-10 -13M589 440l7 -2M563 437l-13 11M586 440l7 8M563 438l-9 3M565 438l-11 6M591 441l10 -4M588 442l7 2M563 439l-10 -6M591 442l8 -1M564 439l-12 -10M564 440l-14 -8M560 440l-10 8M589 443l10 4M586 443l6 9M587 444l14 -2M590 444l9 -6M561 441l-8 -15M562 441l-10 7M564 442l-10 -1M588 445l6 -12M560 442l-10 7M561 442l-11 13M559 443l-7 1M591 447l10 5M560 443l-5 -13M589 446l7 13M558 444l-8 -6M586 447l14 2M587 447l8 4M564 444l-14 11M563 445l-17 3M559 445l-6 -3M586 448l12 -11M564 446l-8 -13M585 449l15 -8M589 450l9 11M561 446l-4 -11M563 447l-9 8M560 447l-11 -2M559 447l-8 -1M564 448l-9 -13M583 450l16 -4M562 449l-12 8M563 449l-10 -6M563 449l-12 -16M563 449l-10 -9M585 453l13 6M588 453l12 8M589 453l6 -10M587 453l4 12M558 450l-11 12M557 450l-8 1M559 451l-12 -4M561 451l-13 -3M587 455l12 -13M557 451l-6 -5M587 455l12 2M558 451l-6 -2M557 452l-5 11M583 456l12 13M559 453l-13 -8M557 452l-2 -14M582 457l11 -4M583 457l15 -2M558 454l-7 3M557 454l-2 -10M588 458l9 12M589 459l5 5M588 458l2 12M560 455l-9 2M584 459l9 -8M560 456l-12 -0M583 459l13 -2M561 456l-6 -8M584 460l9 12M586 461l12 -1M588 461l5 -12M585 460l10 11M584 461l14 5M558 458l-13 -6M557 458l-8 -13M587 462l7 8M588 463l5 1M561 460l-10 -10M587 463l4 8M557 459l-1 -13M562 461l-16 -4M556 460l-8 7M588 464l7 13M557 461l-8 -11M557 462l-3 -14M583 465l13 2M561 462l-13 4M558 462l-5 -11M561 463l-11 8M582 466l10 -10M585 466l13 4M585 466l6 -9M561 465l-15 -9M581 467l15 7M560 465l-7 -13M556 464l-9 12M584 469l11 9M560 466l-10 13M587 469l8 3M558 466l-10 3M559 467l-9 -8M559 467l-13 -9M562 467l-8 -14M586 470l9 1M583 471l15 5M583 471l9 -10M558 468l-11 -2M583 471l11 0M581 472l13 -13M559 469l-11 -7M560 469l-11 -10M559 469l-10 12M555 469l-6 2M586 473l6 -6M581 473l14 -12M581 473l11 -5M584 474l10 11M558 471l-10 3M560 471l-12 3M581 474l10 3M583 475l10 -1M558 472l-8 -7M555 472l-2 -12M561 472l-11 -7M555 472l-5 -16M559 473l-10 -17M556 473l-8 -7M557 473l-12 13M558 474l-4 -11M585 477l13 5M555 474l-11 11M558 474l-15 -6M586 478l12 -2M557 475l-9 9M584 478l8 1M555 475l-12 -4M586 480l5 -10M557 476l-5 -8M556 476l-9 -13M586 480l7 -8M580 480l12 15M557 477l-11 -6M558 477l-13 -9M559 477l-10 1M558 478l-13 3M586 482l6 4M584 481l9 -5M557 478l-14 7M584 482l9 -6M558 479l-9 10M583 482l5 11M558 479l-7 10M581 483l9 8M584 483l9 13M558 480l-7 10M585 484l3 -10M556 481l-8 10M558 481l-15 -9M556 481l-10 -1M557 481l-9 3M582 485l10 -0M554 481l-7 4M581 485l11 -8M558 482l-7 -11M580 486l15 6M581 486l9 16M580 486l16 -7M582 486l11 4M553 484l-11 -2M555 484l-12 8M583 488l8 11M585 488l10 -7M581 489l12 -9M555 485l-7 4M559 485l-13 -12M558 485l-6 -12M554 486l-5 -11M583 490l11 -13M584 490l8 -2M554 486l-11 6M557 487l-10 -4M581 491l8 5M556 487l-10 1M553 487l-9 -2M557 488l-8 -13M579 492l13 5M559 489l-15 6M579 492l16 8M553 489l-10 -2M553 489l-2 -12M558 490l-11 -3M554 489l-3 -13M554 490l-6 -9M556 491l-11 -12M555 490l-10 -13M583 495l12 -4M556 492l-10 9M581 496l5 9M554 491l-9 2M556 492l-9 -14M584 497l10 -13M580 497l9 7M580 497l10 3M558 493l-14 -6M578 497l6 13M555 494l-12 3M557 494l-11 -12M580 498l10 1M555 495l-9 8M580 499l11 5M578 499l12 11M581 499l7 -9M583 501l6 -4M581 500l6 -7M552 496l-9 -3M580 500l13 1M557 498l-15 7M581 502l11 7M553 497l-7 0M555 498l-12 -2M555 499l-13 2M552 498l-5 -14M555 499l-9 6M557 499l-9 -12M580 504l8 -3M555 500l-10 -10M582 504l5 -7M556 500l-10 -8M551 501l-10 -9M576 505l16 2M552 501l-10 9M551 501l-11 -7M557 503l-12 1M552 502l-6 -3M582 507l2 14M552 502l-9 -9M552 503l-3 -12M550 503l-10 -5M581 508l9 7M550 503l-8 11M556 505l-16 0M553 505l-10 12M579 509l7 12M580 509l8 -2M551 506l-10 -4M579 510l15 2M579 510l12 6M581 510l4 8M576 511l12 -10M556 508l-12 7M576 511l17 -2M578 511l11 12M577 512l8 6M578 512l8 -10M581 513l8 3M576 512l9 11M581 514l1 10M554 510l-16 -2M575 513l10 -11M577 513l6 13M576 514l9 10M554 511l-11 -2M549 511l-6 10M551 511l-8 4M579 516l5 12M578 516l9 1M575 515l12 12M578 516l9 13M551 513l-7 -4M577 517l13 -9M578 517l13 -2M575 517l12 -5M552 515l-9 7M574 518l11 6M577 518l11 -10M548 514l-9 9M577 520l4 10M577 520l8 -1M552 516l-8 -16M548 516l-3 -6M553 518l-11 10M552 517l-8 -8M574 520l14 -8M579 521l13 1M574 522l17 7M575 522l15 -2M554 519l-11 -9M552 519l-13 4M552 520l-15 9M549 520l-8 12M551 520l-13 -0M578 523l4 14M552 521l-9 -11M548 521l-5 4M576 524l13 -0M549 521l-10 6M578 526l12 -11M574 525l13 -13M575 525l10 11M577 526l5 9M574 527l10 -2M549 524l-9 12M551 524l-5 -10M577 527l9 -0M548 525l-4 -13M549 525l-3 -12M551 525l-10 -11M575 528l14 -4M577 529l7 2M573 529l11 14M551 526l-9 -10M551 526l-9 -0M550 527l-12 10M576 530l13 1M551 528l-16 1M550 527l-10 -13M577 532l7 12M551 529l-9 -7M552 529l-13 -2M574 531l11 -4M549 530l-7 -4M549 530l-13 -2M550 530l-14 -9M578 533l6 4M547 531l-8 -7M574 534l15 8M575 534l11 3M551 531l-9 -8M574 535l13 7M550 533l-12 -8M576 535l10 7M550 533l-13 -7M574 536l17 1M578 536l9 12M552 534l-11 -4M551 534l-9 7M552 535l-12 -7M576 538l8 -6M552 535l-16 8M551 535l-11 8M573 538l12 -5M578 539l10 9M574 538l10 -5M574 538l14 -12M549 537l-11 5M547 537l-9 9M548 537l-8 8M578 540l5 1M578 541l5 -10M551 539l-11 -5M548 539l-14 6M549 539l-8 8M576 542l10 5M548 540l-13 3M552 540l-14 6M578 542l9 -7M574 543l9 11M578 543l8 -14M576 543l13 -7M572 543l11 7M550 542l-9 -12M550 542l-10 -14M575 544l3 10M548 542l-6 -7M577 546l10 -3M577 546l8 8M576 546l7 9M547 543l-6 -3M551 545l-13 14M548 545l-6 10M572 547l18 -5M571 547l13 -1M578 548l4 -8M545 546l-6 -9M572 548l11 5M550 546l-11 -13M551 547l-13 9M547 547l-11 -9M550 547l-9 -1M573 549l11 5M549 548l-12 10M572 550l12 12M545 548l-6 12M577 551l7 1M549 550l-13 0M546 549l-9 8M571 551l13 4M547 550l-11 -3M573 553l12 -2M574 553l9 -13M576 553l12 -5M577 553l7 2M545 552l-8 -8M545 552l-7 -4M573 554l8 10M549 552l-11 -14M546 553l-4 -9M571 555l11 1M576 555l7 -3M576 555l6 1M549 555l-13 4M573 556l11 -4M548 555l-11 -5M548 555l-12 14M549 556l-14 -10M549 556l-12 -13M546 556l-7 -7M572 557l14 -10M545 557l-12 2M573 559l8 -11M576 559l7 11M574 559l13 5M550 558l-16 5M546 558l-11 -1M576 560l9 -10M548 558l-8 5M548 560l-13 -9M573 561l13 -6M549 560l-11 -13M544 559l-7 13M549 561l-10 3M549 561l-15 2M570 562l10 -12M571 562l11 -2M547 562l-9 12M550 562l-10 8M544 562l-7 -13M575 563l6 4M574 565l9 7M549 563l-14 14M575 565l5 -11M572 564l12 1M549 565l-7 10M573 566l10 -12M574 566l6 6M573 566l11 15M547 566l-11 -1M572 567l13 12M548 566l-11 5M576 567l8 -8M546 567l-6 -8M570 568l12 -10M572 568l10 2M575 568l7 1M576 569l4 -8M544 568l-6 -5M545 568l-9 4M570 569l12 -3M547 569l-10 14M550 570l-16 -5M547 569l-7 -8M546 569l-5 -12M547 571l-14 -6M549 571l-11 6M545 571l-12 -3M550 571l-11 8M549 572l-13 -1M573 573l10 -10M575 573l10 3M548 572l-7 -9M550 573l-16 -4M545 573l-10 6M547 573l-9 -16M573 574l6 -6M570 575l12 15M548 574l-10 -0M573 575l10 9M548 574l-9 -3M544 576l-10 4M570 576l15 -2M545 576l-9 -13M574 576l8 -13M545 577l-13 0M545 577l-8 7M570 577l13 -12M573 577l7 7M571 579l13 -3M571 579l10 -0M574 579l9 12M547 578l-14 -7M547 579l-14 -6M574 580l6 -4M547 579l-11 4M543 579l-11 3M572 581l14 2M546 581l-8 7M545 581l-7 5M573 581l9 -8M571 582l10 -9M572 582l13 0M570 582l11 3M547 582l-11 -13M545 583l-13 -2M546 583l-12 -2M549 583l-13 -7M570 583l11 -13M547 584l-14 -7M572 584l11 -10M570 584l10 -2M571 584l11 -11M572 585l13 -13M573 585l11 2M546 586l-8 -15M549 586l-12 -5M549 587l-9 -7M572 587l12 -5M547 587l-13 0M546 587l-7 9M571 588l5 -12M574 588l8 -8M570 588l15 -9M571 588l14 6M545 589l-5 8M575 589l5 7M571 589l12 -16M572 589l14 6M543 591l-12 0M571 590l15 2M570 590l17 7M575 590l6 -1M572 591l11 4M544 592l-7 -4M574 591l8 -0M548 592l-9 -2M573 592l5 11M573 592l14 5M573 592l8 9M570 592l12 4M549 594l-15 -7M544 595l-10 3M545 595l-7 14M572 593l8 -13M570 595l16 -2M548 596l-15 6M546 596l-10 -8M574 594l10 8M576 595l3 10M573 596l10 -7M549 597l-15 -2M547 597l-13 -11M576 596l12 -0M547 598l-6 11M547 598l-13 -6M573 597l9 1M545 600l-9 11M545 600l-13 2M544 600l-8 14M548 599l-14 6M574 599l7 5M546 601l-12 -2M571 599l12 -12M545 601l-9 -14M544 602l-8 -9M546 602l-4 10M545 602l-7 12M547 602l-7 14M546 603l-4 9M575 601l8 12M571 601l13 13M547 603l-15 5M551 604l-13 11M572 602l10 -6M548 604l-11 5M575 602l9 2M549 605l-16 2M573 603l8 2M548 605l-12 4M575 603l6 -3M548 607l-11 8M549 607l-14 -7M548 607l-12 0M572 605l15 11M576 606l6 12M549 608l-10 12M574 606l11 5M551 608l-8 13M574 607l9 9M571 607l10 -14M577 607l5 13M548 609l-12 9M575 608l8 3M550 610l-13 -6M572 608l11 0M549 610l-7 -10M572 609l7 -9M547 612l-8 12M571 609l11 -5M573 609l9 -9M572 611l15 1M573 610l11 8M572 611l15 6M575 610l12 1M549 614l-15 5M546 614l-8 -9M546 614l-10 -12M550 614l-9 15M548 615l-10 -0M571 613l7 -13M576 612l8 -11M551 615l-16 -5M577 613l9 -1M548 617l-9 -12M577 614l4 -8M552 616l-14 1M549 618l-8 3M576 615l9 14M577 615l5 6M578 615l8 0M550 619l-12 8M577 616l5 -8M575 616l11 -5M575 616l10 -9M574 617l15 -6M574 617l10 -11M551 620l-12 2M549 620l-12 7M550 621l-15 4M574 619l12 13M577 618l8 5M572 619l11 5M551 623l-11 2M550 623l-6 12M552 622l-14 2M547 623l-9 -6M573 621l10 -1M574 621l7 -7M546 624l-4 5M547 624l-8 -6M577 621l9 9M579 621l6 -6M550 625l-10 -6M547 626l-10 -10M576 623l7 -3M579 622l12 9M575 623l13 -3M548 627l-11 -7M550 628l-14 -1M548 628l-12 5M572 624l16 2M551 628l-14 -3M549 629l-9 -6M578 625l12 1M576 625l6 -10M577 625l6 10M578 626l11 10M577 626l7 -5M575 626l10 10M550 630l-4 12M578 627l2 -11M574 628l10 -6M576 627l9 -1M554 631l-18 -10M553 632l-16 7M554 632l-12 -2M551 633l-9 16M552 632l-10 -9M576 630l12 -8M577 629l10 -11M550 634l-8 11M548 634l-9 5M552 635l-7 9M554 635l-11 5M553 635l-14 -12M578 630l8 11M579 631l11 -2M554 636l-9 7M578 632l6 -8M574 632l13 -11M575 633l11 -5M580 632l7 13M553 637l-11 -7M576 633l14 -1M549 639l-4 10M577 634l12 2M579 634l5 -16M579 634l7 5M553 640l-13 -9M578 635l9 -3M579 635l12 11M576 635l16 11M552 641l-11 6M550 642l-5 -12M577 636l8 9M576 636l15 11M580 637l11 -7M580 637l10 -3M580 637l11 4M554 642l-7 16M551 644l-13 -2M554 643l-11 4M580 638l10 3M579 638l7 -8M556 644l-15 -4M580 639l5 -7M576 640l17 7M579 639l6 -5M551 646l-7 14M581 640l4 -12M550 646l-6 12M577 641l15 -4M553 647l-9 -5M555 647l-13 12M580 641l6 -5M551 647l-12 -1M579 642l10 -1M582 642l13 6M578 642l10 -3M552 648l-7 13M583 642l4 -10M555 649l-12 -6M580 643l7 7M555 649l-9 -6M554 650l-11 -10M576 645l11 -8M579 644l9 9M579 644l10 1M556 651l-10 1M580 645l9 -3M581 645l2 -14M554 652l-10 -9M555 653l-14 -5M552 653l-7 5M582 646l11 -6M557 652l-11 10M580 647l5 -10M583 646l9 -7M557 653l-4 14M558 653l-8 13M556 655l-9 3M557 655l-12 6M582 648l5 -10M558 654l-12 4M555 656l-9 -7M583 648l6 -2M579 649l12 4M557 656l-10 11M555 657l-5 17M583 649l7 -13M583 649l3 -7M555 657l-14 -0M558 658l-13 6M582 650l14 2M582 651l8 -10M559 657l-12 5M558 659l-12 -10M557 659l-10 12M583 651l8 2M554 660l-7 3M582 653l13 10M556 661l-11 -6M556 661l-12 6M583 652l7 -3M582 654l14 9M555 662l-11 -2M557 662l-8 -9M560 661l-12 4M560 662l-13 -3M557 663l-12 6M560 662l-11 -8M556 663l-11 -6M580 656l16 -3M583 655l6 -13M560 663l-15 -8M582 656l14 -0M557 665l-4 14M560 664l-16 -7M582 657l13 2M558 665l-6 11M562 665l-17 -10M557 666l-8 -4M582 658l6 -8M559 666l-3 15M586 657l2 -8M557 667l-6 8M560 666l-8 14M584 658l15 3M557 669l-4 13M558 668l-11 -11M583 659l15 8M557 668l-9 -2M560 669l-15 -11M559 669l-14 -7M584 660l8 9M583 660l17 6M586 660l4 -6M560 670l-9 -2M561 670l-8 13M587 660l9 -4M558 672l0 13M582 663l7 -18M558 672l-10 -2M588 660l7 -3M586 662l13 7M562 672l-6 15M559 673l-0 16M585 663l12 11M584 664l14 0M587 663l9 -4M583 664l17 8M585 664l4 -12M589 663l4 -5M585 665l9 -9M562 674l-7 16M559 675l-9 -6M586 665l9 1M588 664l5 -8M584 666l10 -7M560 676l-2 8M588 665l10 5M564 675l-12 8M562 676l-4 10M586 666l13 1M588 666l10 -10M563 677l-14 -8M566 676l-18 5M587 667l10 8M589 667l9 -8M565 678l-8 10M566 677l-6 14M560 679l-5 -2M587 669l13 -2M566 679l-11 -6M589 668l8 -9M561 680l-8 -1M562 682l-7 0M565 680l-1 14M567 679l-6 18M566 680l-16 0M589 671l11 -6M592 669l-1 -13M591 670l6 -11M568 680l-11 4M568 682l-9 7M568 682l-10 7M568 682l-5 17M567 682l-17 -2M592 672l14 6M565 685l2 12M590 673l1 -11M566 684l-1 13M565 686l-7 13M593 672l10 5M566 686l-8 -3M587 675l14 -6M592 674l10 -11M589 675l10 -4M571 685l-19 2M593 673l9 2M592 675l8 -10M568 688l-9 -4M593 675l15 9M591 676l8 -7M595 675l7 7M566 690l-13 -8M571 688l-7 16M567 690l-8 2M594 676l-2 -12M568 691l-9 2M592 678l17 4M591 678l2 -18M571 691l-17 0M568 693l-5 3M570 691l-11 10M591 679l6 -14M572 692l-18 -3M573 691l-7 11M591 680l14 -7M568 694l-3 13M597 678l-2 -17M574 692l-8 9M595 679l13 6M572 693l-10 6M596 679l8 1M597 679l4 -9M570 696l-2 9M594 681l12 -1M592 683l15 -6M575 694l-9 9M570 697l-10 -4M594 682l1 -12M594 683l9 -7M596 682l12 -4M573 697l-13 -7M598 681l2 -15M593 685l19 2M571 700l3 12M572 699l-2 6M574 698l-10 1M597 683l10 2M574 699l-8 -0M595 685l5 -15M573 700l-16 -3M596 685l14 4M575 700l-6 5M594 686l16 -3M597 684l5 -11M599 684l8 2M598 685l12 2M575 702l-13 -1M599 684l11 4M598 685l7 -13M596 687l4 -18M576 703l-7 6M576 702l-3 7M598 686l14 -5M601 685l-4 -11M580 701l-11 12M599 686l8 -6M579 704l-8 5M600 686l10 1M578 704l-16 -3M599 687l7 -11M582 703l-14 3M598 689l12 -4M597 690l17 -8M582 703l-6 13M582 705l-13 8M581 706l-13 5M581 706l-4 16M599 689l16 1M581 708l-16 -5M601 689l-1 -16M601 688l3 -15M599 690l-2 -13M584 706l-12 9M583 707l-17 -0M582 708l-13 5M602 688l8 2M599 693l-2 -19M601 691l8 -8M601 691l6 -10M586 707l-14 10M602 691l7 -5M600 693l15 -8M585 710l-6 6M602 691l12 -6M585 712l-14 -1M585 712l-3 7M587 709l-11 1M588 709l1 16M586 713l5 16M585 714l3 9M586 713l-7 10M588 711l-8 13M605 691l2 -8M589 711l-2 10M588 713l-12 5M586 715l9 9M603 696l18 -5M607 690l14 4M587 716l-11 -2M589 714l-10 8M589 716l4 15M606 692l3 -6M605 694l4 -13M606 692l10 -1M592 715l-16 7M590 718l-9 2M590 718l-10 3M591 715l-12 5M607 693l9 -2M606 695l10 -8M592 717l0 13M606 695l-2 -12M608 694l8 -4M592 720l5 10M595 715l-12 8M606 697l10 -12M593 720l-0 6M608 696l-6 -13M606 698l15 -8M595 717l1 13M610 693l13 -1M609 694l-3 -14M609 694l13 -1M608 696l7 -7M610 695l12 -5M597 719l-2 8M597 719l0 13M611 693l4 -9M598 720l-6 5M599 717l-13 11M598 720l10 12M611 694l9 -2M611 696l2 -11M601 718l-3 12M600 720l7 9M612 693l10 -4M612 696l7 -4M600 722l-11 4M601 721l1 9M602 718l-2 15M601 723l-10 9M612 696l-11 -13M611 699l7 -9M612 697l6 -11M613 695l-1 -8M602 724l3 9M603 722l-12 5M603 721l1 10M612 701l-7 -19M606 719l-11 11M604 724l2 13M604 724l-9 5M614 699l6 -7M614 697l6 -12M606 722l-4 15M607 720l-4 12M607 725l1 12M608 722l-1 16M615 698l-3 -11M608 721l-15 5M616 696l-8 -11M616 697l2 -7M615 698l-6 -10M608 727l5 5M616 700l-8 -11M616 701l-4 -14M610 725l-12 5M617 695l-5 -9M617 699l12 -2M612 725l-4 7M611 725l-1 9M612 724l6 12M613 726l-2 9M613 727l-12 4M618 698l-10 -10M613 726l5 10M615 724l12 13M615 724l8 11M615 724l5 9M618 700l-6 -12M616 727l2 12M619 697l14 -7M616 725l4 15M619 701l-10 -13M620 700l11 -5M618 722l3 12M618 723l-2 11M620 701l4 -16M619 727l2 11M619 722l11 13M621 696l14 -6M619 723l5 16M621 700l13 -13M620 727l-13 7M621 696l2 -5M621 702l7 -12M622 699l1 -13M622 725l-4 14M622 697l9 -12M622 725l-9 7M623 726l2 13M622 697l10 -6M624 728l-4 8M624 728l-13 7M623 700l5 -17M623 701l-3 -13M623 702l4 -14M623 698l5 -7M627 725l11 7M626 724l8 9M624 699l5 -9M626 723l3 14M628 727l10 5M624 698l5 -14M628 728l-4 10M628 723l14 5M625 697l4 -8M630 725l5 7M625 696l9 -4M630 728l-6 7M626 699l8 -11M626 701l-12 -6M631 724l1 13M625 696l-3 -12M626 696l-4 -9M626 695l-13 -4M627 700l-7 -8M626 696l-16 -2M627 698l7 -12M628 700l-7 -15M627 699l12 -14M628 701l-6 -13M635 722l10 13M636 726l2 6M635 721l6 15M636 725l8 5M637 724l3 9M630 700l-11 -12M629 697l-14 -2M636 720l3 12M639 724l-4 11M630 700l-5 -17M631 700l4 -11M639 725l-4 8M631 698l-14 -5M630 696l-4 -6M640 722l1 15M631 699l-13 -9M640 720l-1 9M640 720l11 13M631 697l-13 -4M631 698l8 -14M641 720l2 14M632 698l7 -15M632 697l-3 -12M632 698l-10 -9M632 696l-4 -8M644 722l13 -0M632 696l-12 -8M642 718l9 11M634 698l1 -12M631 693l-11 -6M643 717l5 11M644 720l13 -2M646 719l18 3M633 694l-17 -2M632 693l7 -14M635 699l-15 -10M645 716l8 9M636 698l-9 -9M646 718l-6 11M645 716l12 7M648 717l15 3M649 719l6 4M649 719l-8 13M647 717l7 11M650 719l14 0M635 693l3 -8M648 716l15 1M634 692l-8 -2M637 695l4 -17M649 716l-1 13M651 717l-8 12M635 693l-3 -11M651 715l-0 10M635 691l4 -13M637 694l-14 -6M638 696l-17 -1M637 693l-10 -11M639 695l-12 -8M653 717l13 -4M638 695l-13 -9M652 712l18 -0M639 694l-10 -7M653 714l7 5M655 716l-1 8M656 715l-7 11M638 692l3 -12M638 692l3 -15M654 713l13 9M640 693l-10 -13M639 693l-2 -12M640 694l-8 -6M640 694l-5 -13M641 693l-2 -13M641 693l-12 -11M638 689l-6 -5M657 712l11 9M639 689l-5 -10M657 711l4 10M641 692l4 -16M642 693l-2 -15M660 712l14 -1M657 709l13 9M642 692l2 -14M659 711l-4 11M643 692l-14 2M641 690l1 -15M657 707l13 3M643 692l-14 -2M644 692l-9 -10M642 690l-14 -0M643 691l-0 -16M658 706l-2 16M642 689l-5 -7M663 709l14 1M643 690l-15 4M660 706l1 14M645 691l-12 -3M644 690l-4 -17M641 687l-10 4M641 687l1 -16M642 687l4 -12M661 703l15 -1M644 688l-13 -4M661 703l-0 14M641 685l-11 7M666 706l11 -3M662 702l1 17M665 705l7 8M647 689l-20 0M662 701l-0 19M664 702l13 -3M647 689l-19 -2M648 688l-19 4M667 703l12 -3M643 684l5 -13M665 702l0 15M647 687l-14 4M643 684l3 -10M645 685l-14 2M647 686l2 -12M669 701l4 6M669 701l6 4M647 685l-9 -6M665 698l12 7M648 685l-6 -12M669 699l10 4M667 698l3 15M667 698l10 13M648 684l-7 -6M672 699l2 11M649 685l-9 -15M650 685l-8 -10M671 697l-4 11M650 684l-17 -0M668 696l7 7M650 684l-18 -4M646 680l4 -13M649 682l-5 -17M671 696l10 -7M668 694l7 12M649 681l-12 1M652 682l-16 1M673 695l10 -6M669 693l2 14M648 679l-6 -7M648 679l-4 -5M671 693l14 5M671 693l11 -4M674 693l9 -7M651 680l-18 -1M648 678l-7 -12M670 691l12 6M670 689l7 12M651 679l-1 -15M674 692l12 -1M673 691l8 4M648 676l-5 -10M675 691l5 9M672 689l1 16M649 677l-13 -3M653 678l-16 -7M652 678l-16 6M650 676l-12 5M677 690l-1 12M649 675l1 -13M677 689l-1 11M652 676l-7 -9M675 688l7 9M655 677l-13 2M652 675l-4 -18M673 686l16 -7M651 675l-11 7M651 674l-3 -13M655 676l-12 -4M675 685l15 6M673 684l16 -0M674 684l14 -0M650 672l-5 -9M655 675l-6 -14M678 685l8 -5M655 673l-9 -17M678 684l5 16M651 672l-8 3M656 674l-4 -16M674 681l12 -5M675 682l16 3M678 683l12 -8M652 671l-10 2M652 670l-9 9M679 682l8 -2M676 681l10 13M652 670l-11 -2M679 681l9 -7M653 670l-1 -13M680 681l6 11M654 670l-4 -17M654 669l-9 -8M678 679l9 2M656 670l-4 -17M682 680l7 7M679 678l10 -2M654 668l-12 -1M681 679l11 -4M655 668l-7 -8M677 676l10 15M678 676l6 11M657 668l-5 -10M655 667l-10 -5M677 674l16 -1M657 667l-13 -7M679 675l16 -10M656 666l-10 -4M656 665l-11 -1M655 665l-7 -11M657 665l-14 2M654 664l-4 -4M681 673l14 -5M656 664l-12 -5M655 663l-7 1M655 664l-8 6M684 673l5 5M654 662l-7 6M679 671l10 3M658 664l-14 -6M680 670l14 -6M659 663l-3 -13M656 662l-7 -2M657 662l-14 1M684 670l12 -6M679 669l9 10M659 662l-13 -3M658 661l-8 1M680 667l18 -6M680 668l7 19M685 669l11 -5M657 660l-4 -12M685 668l11 3M657 659l-8 0M659 660l-10 -2M657 659l-14 -2M661 659l-12 -6M658 658l-6 -7M662 659l-13 9M685 666l1 12M684 665l15 1M686 665l4 7M661 658l-7 -11M658 657l-6 -15M687 664l3 12M686 664l7 -6M684 663l9 -11M682 663l6 16M656 654l-8 6M658 655l-11 8M660 656l-13 -2M657 655l-1 -12M662 655l-14 -5M687 662l4 13M662 655l-10 4M684 661l10 5M682 659l18 -2M657 653l-11 13M685 660l7 6M660 653l-2 -11M663 653l-11 -11M658 652l-9 -4M688 660l10 -11M686 659l11 3M660 652l-6 -16M657 651l-7 -1M688 659l11 -10M664 652l-17 5M687 657l10 -0M689 657l6 -6M659 650l-11 -10M684 656l15 -2M684 655l12 -5M661 650l-8 5M689 656l7 -13M664 650l-13 11M658 648l-2 -11M683 654l11 3M659 648l-9 1M686 654l10 -8M686 653l15 -5M686 653l10 -10M661 648l-9 -4M658 647l-8 2M659 646l-13 10M662 647l-13 -7M663 647l-11 -14M690 653l4 -11M689 651l12 4M687 651l16 -4M689 651l4 16M662 646l-6 -10M663 645l-8 10M691 651l5 15M689 650l8 -1M660 644l-10 12M688 649l8 4M660 643l-11 12M665 644l-17 3M662 644l-12 1M686 647l9 10M684 647l11 3M666 643l-8 -12M687 647l14 -5M686 646l15 4M687 646l9 -2M663 642l-5 -10M685 646l12 0M662 640l-11 -8M665 641l-8 -16M664 640l-7 -9M690 645l8 -11M687 644l9 4M661 639l-12 -0M689 644l12 -5M688 644l7 15M691 643l7 14M662 638l-12 -7M666 639l-12 -8M688 643l15 -12M665 637l-12 0M688 641l14 6M665 637l-16 6M661 637l-5 7M662 636l-8 -13M662 636l-11 5M690 641l6 15M688 640l11 10M688 639l8 14M686 639l14 -12M691 640l10 -3M693 640l9 -7M692 639l9 3M664 634l-8 -5M691 638l9 6M689 638l6 10M666 633l-10 3M662 632l-8 -3M690 637l10 -9M690 637l11 0M691 636l5 7M662 631l-5 -4M691 636l11 -10M665 631l-12 10M666 630l-14 -3M688 634l15 -3M688 634l14 10M691 635l13 2M690 633l14 2M666 629l-12 5M687 633l12 17M666 629l-14 -9M687 632l16 7M689 632l12 1M662 627l-6 -1M692 632l12 -3M693 631l11 -2M693 631l10 -7M662 626l-5 13M693 631l5 15M664 625l-7 -0M665 626l-12 -1M693 630l9 -12M694 630l7 12M688 628l11 11M691 629l10 12M666 625l-12 -11M692 629l12 3M690 627l9 -6M691 627l8 4M691 627l14 -7M691 627l10 -9M689 626l11 3M666 622l-5 -13M690 626l7 9M665 622l-8 10M692 625l11 3M665 621l-5 10M664 621l-11 8M663 621l-7 9M663 619l-8 8M668 620l-9 -9M667 620l-12 10M693 624l3 11M668 619l-15 -5M663 618l-8 6M695 623l1 13M689 622l10 4M669 618l-10 11M666 617l-4 -14M693 622l7 6M664 617l-11 -4M668 617l-13 -9M693 620l5 11M667 616l-10 -1M691 620l14 -12M667 615l-5 -10M666 615l-6 -17M690 619l17 -9M692 619l13 -7M665 614l-10 5M670 615l-16 -9M693 618l12 11M690 618l8 11M693 617l11 0M692 617l10 11M668 613l-14 4M665 613l-12 -5M696 616l8 -4M690 615l14 2M671 612l-10 10M670 612l-11 -1M695 615l10 -6M668 611l-15 0M691 615l11 5M670 611l-10 9M671 610l-10 -6M693 614l12 2M671 610l-7 -13M666 609l-10 -8M692 612l17 -5M697 613l11 -3M665 608l-8 14M692 612l16 -7M695 612l4 9M666 607l-6 10M671 608l-17 0M671 608l-10 -15M691 610l10 -10M696 611l10 -4M697 611l6 -11M670 607l-6 -14M666 605l-3 -9M672 606l-7 -14M670 605l-9 10M668 605l-8 -7M698 609l7 -12M667 604l-5 -9M695 608l4 14M694 608l14 -6M694 607l7 -8M693 607l15 -9M666 603l-10 2M697 607l9 10M697 606l7 12M669 602l-14 -2M697 606l6 2M669 602l-15 2M697 605l6 6M693 604l12 -11M694 604l6 10M692 604l11 8M696 604l11 10M669 600l-10 -9M667 599l-4 -6M668 600l-11 7M671 599l-14 1M693 602l9 -10M667 598l-12 5M696 603l2 12M670 597l-12 13M669 597l-8 1M669 597l-10 -4M697 601l7 8M668 596l-4 -11M670 596l-6 -8M699 601l10 -3M670 596l-9 13M694 599l11 -7M696 599l11 -0M693 598l14 1M669 595l-7 -6M672 594l-14 -4M674 595l-16 5M673 595l-16 11M696 598l8 4M695 596l10 14M669 593l-8 8M697 597l8 11M699 597l12 5M669 592l-6 10M693 595l10 9M668 592l-7 -8M668 592l-6 3M668 590l-3 -10M671 591l-8 -8M672 591l-11 6M697 594l5 11M696 593l9 -0M697 593l13 -10M696 593l15 3M667 589l-5 2M699 592l9 -7M669 588l-5 -13M673 589l-9 3M673 589l-14 2M699 591l9 12M699 591l5 13M673 588l-9 -5M670 587l-4 -14M697 590l15 3M669 586l-8 -12M669 586l-3 -12M669 586l-12 8M697 589l10 -14M696 588l9 13M671 585l-7 -0M698 589l7 0M700 588l4 7M697 587l9 -13M672 584l-9 8M675 585l-11 -18M671 583l-7 4M671 583l-10 -14M697 586l15 -4M674 583l-12 -3M695 585l12 -8M673 582l-10 0M674 582l-14 2M673 582l-9 4M674 581l-10 3M698 584l13 3M697 584l8 -12M671 581l-4 -10M675 580l-13 2M671 579l-10 14M701 583l12 -7M697 583l11 -12M670 578l-9 7M673 579l-10 -10M698 582l14 -0M669 578l-7 13M672 577l-6 -11M674 578l-16 2M697 580l13 -12M674 578l-16 8M674 576l-15 10M670 576l-7 -3M698 579l6 10M700 580l7 -3M702 579l5 13M698 578l14 -2M699 578l8 -12M673 575l-6 -12M672 574l-11 -2M697 577l12 10M676 574l-11 8M675 574l-13 6M672 573l-6 9M672 573l-12 4M675 573l-9 -1M701 576l12 -7M697 575l9 -1M698 575l13 6M700 575l11 -5M699 575l10 -7M696 573l14 -8M670 570l-5 7M700 574l12 -14M673 571l-12 5M699 573l15 -3M673 570l-11 11M698 573l9 11M672 570l-13 -2M698 571l12 -14M699 572l11 13M676 569l-11 -12M697 571l10 7M699 570l8 -2M673 567l-7 -6M700 571l11 -11M697 570l12 -13M672 566l-11 6M698 569l12 14M696 569l17 4M700 569l5 11M698 568l8 12M701 568l5 12M677 566l-17 12M674 565l-14 1M703 568l7 -12M698 567l13 6M696 567l15 9M703 568l10 2M702 566l7 7M671 563l-9 1M703 567l2 -11M703 567l5 0M697 565l16 -8M673 562l-6 -10M673 562l-9 5M702 565l9 -7M673 561l-6 1M698 564l14 -1M675 561l-6 -12M697 564l11 -5M700 563l11 -0M673 560l-10 -4M699 563l7 10M699 563l10 6M698 562l11 -1M677 559l-11 -17M699 562l13 1M671 559l-5 10M675 558l-15 -2M673 558l-10 -3M672 558l-11 -5M699 561l14 -10M702 560l6 5M704 560l1 10M701 560l13 -2M676 557l-12 -3M672 556l-8 -7M699 559l11 -9M702 559l5 -11M699 559l12 -1M675 555l-10 -3M672 555l-5 -2M676 555l-14 1M704 558l12 -5M678 554l-15 13M698 556l12 12M703 557l8 8M679 554l-13 -11M678 553l-12 -11M703 556l5 5M676 553l-10 9M698 555l16 4M674 551l-9 -5M673 551l-3 -10M699 554l8 -11M678 552l-18 1M700 553l8 12M701 553l7 8M704 553l4 5M700 553l10 16M705 553l3 -10M704 552l5 6M702 552l14 -4M702 552l8 14M679 549l-13 5M704 551l9 -9M679 549l-15 -10M700 551l7 12M672 547l-8 -5M700 550l14 0M704 550l13 -8M701 550l11 -3M703 549l11 8M673 546l-9 5M703 549l11 -11M702 549l9 14M677 546l-12 -6M675 545l-13 2M675 545l-8 13M700 548l14 -5M675 544l-6 10M677 544l-12 -1M699 547l12 16M675 544l-7 5M703 546l8 -0M703 546l8 -7M699 546l11 -3M673 543l-7 5M702 545l6 5M675 542l-8 12M705 545l8 -7M703 545l9 12M675 541l-2 -12M679 542l-9 10M700 544l17 -5M678 542l-13 4M675 540l-8 -9M705 543l6 -12M704 543l6 14M678 541l-13 2M675 539l-8 -15M678 540l-9 9M699 542l16 5M676 539l-13 -1M674 538l-9 1M706 541l5 -8M700 541l11 11M678 539l-9 -9M675 537l-6 -11M674 537l-3 -14M677 537l-9 -2M675 537l-6 10M703 539l8 3M705 539l12 -1M702 539l6 13M679 537l-16 9M705 538l6 2M675 535l-7 -5M704 538l7 11M678 535l-10 -12M680 534l-10 9M677 534l-9 8M705 537l7 12M699 536l10 -10M679 533l-11 -15M675 533l-4 -10M679 533l-13 4M701 535l10 16M706 534l9 5M706 534l8 -5M674 532l-9 9M700 534l16 -4M702 533l14 -10M704 533l8 -10M705 533l8 4M704 533l13 -7M677 529l-12 -4M704 532l9 16M702 532l10 -8M704 532l11 -15M678 528l-11 -9M706 531l10 -1M700 530l14 2M706 531l5 5M680 527l-10 -5M677 527l-9 11M677 527l-9 -0M707 530l5 -2M705 528l9 10M676 526l-2 -12M707 529l9 -8M678 526l-6 -14M702 527l12 -2M703 527l9 -3M678 525l-15 -4M679 525l-10 -9M706 526l11 5M681 524l-16 7M702 526l10 8M706 526l11 5M703 525l10 15M706 525l5 -7M675 522l-4 -8M677 523l-3 -11M702 524l15 -10M707 524l7 -11M681 522l-15 1M676 521l-5 1M681 521l-15 6M704 523l10 -1M701 523l18 -1M704 523l8 5M707 522l4 9M677 519l-7 13M704 522l11 7M680 520l-12 6M706 521l5 14M704 521l5 13M680 518l-11 -15M679 518l-15 -4M703 519l17 1M675 517l-9 12M676 517l-11 3M680 517l-10 11M678 516l-14 6M677 516l-4 -13M679 516l-10 -5M703 518l12 -12M680 515l-12 -6M678 515l-14 -0M676 515l-3 -10M682 515l-12 -1M676 514l-6 13M703 516l14 -1M678 514l-9 -9M706 516l9 -11M678 513l-8 -1M678 513l-9 -4M679 513l-12 15M677 513l-9 -5M702 514l17 -5M704 514l6 10M707 514l6 6M676 512l-5 2M679 511l-15 4M678 511l-8 5M706 513l14 1M703 513l16 8M565 436l-11 -3M561 433l-12 -4M564 433l-12 -5M574 423l-1 -11M581 426l5 -9M566 425l-5 -7M581 424l5 -11M586 437l13 -1M579 429l5 -10M589 433l7 -2M567 427l-5 -6M562 429l-7 -5M583 432l11 -8M568 425l-5 -8M564 430l-10 -8M584 431l11 -9M566 426l-4 -5M577 429l2 -12M582 428l7 -10M569 429l-10 -15M585 435l15 -4M585 431l9 -7M703 512l17 0M692 502l-0 -17M697 502l5 -12M707 508l6 -1M703 512l12 0M685 504l-10 -12M697 498l3 -9M696 500l5 -15M684 507l-10 -7M685 505l-10 -10M683 501l-8 -10M699 505l13 -13M701 506l14 -10M677 509l-9 -2M694 501l2 -15M694 497l2 -10M706 507l6 -2M690 497l-1 -11M688 500l-4 -10M685 505l-8 -8M688 502l-6 -14M690 497l-2 -13" stroke="#f6c060" stroke-width="0.9" opacity="0.7"></path>
<path d="M589 440l2 12M584 439l14 -11M561 437l-3 -6M562 438l-10 -9M566 439l-12 -1M565 439l-9 6M564 440l-6 -13M586 443l10 12M585 444l12 2M586 444l9 9M588 445l3 12M562 442l-13 -0M565 444l-13 -10M563 443l-13 10M581 446l11 13M586 447l10 10M567 446l-13 -10M564 446l-10 8M562 446l-9 11M582 449l10 4M564 448l-11 -6M580 450l12 4M562 449l-8 11M561 449l-5 -5M585 453l11 -6M565 450l-18 2M565 451l-6 -9M567 452l-13 -4M584 455l12 3M587 455l10 7M563 453l-6 -7M581 455l16 1M579 456l17 8M563 454l-10 -2M560 455l-7 5M566 456l-12 7M561 456l-7 -10M565 457l-12 -11M579 460l14 9M580 460l15 11M583 461l9 -10M560 459l-10 3M562 460l-11 7M582 462l12 -11M561 461l-13 -0M579 463l13 -8M566 463l-12 3M578 464l15 -9M566 464l-11 -8M582 466l7 10M582 467l9 11M579 467l15 -12M578 468l15 -1M558 466l-4 8M558 467l-3 5M583 470l8 0M562 468l-12 10M582 471l6 -6M564 470l-13 -15M579 472l7 8M562 470l-16 1M577 472l13 10M578 473l12 12M559 471l-11 2M584 475l6 -1M557 472l-6 6M582 476l5 12M565 474l-13 -16M564 475l-13 1M558 474l-12 -7M582 478l6 -6M564 476l-19 -1M576 478l15 -3M581 479l10 -3M560 477l-9 5M556 477l-11 7M563 479l-16 -2M564 479l-9 -9M563 480l-13 8M558 479l-8 10M577 483l12 5M577 483l15 -6M561 481l-11 -12M557 481l-11 2M576 485l15 -9M576 485l11 -6M559 483l-14 10M575 485l17 -0M563 485l-18 -11M581 488l8 14M559 485l-10 -10M575 488l15 -3M580 490l13 7M557 486l-5 -14M555 487l-12 1M562 488l-10 -8M582 492l8 -5M563 489l-13 8M558 490l-14 6M581 493l11 -6M555 490l-11 10M562 492l-14 2M554 491l-12 3M579 495l6 -7M559 493l-11 -8M554 493l-5 1M557 494l-7 -6M580 498l4 -9M573 498l16 -4M556 495l-8 -7M576 500l9 10M580 500l5 1M575 501l17 -2M573 500l12 6M574 502l12 1M575 502l12 14M555 500l-7 2M576 503l4 11M556 501l-11 -3M579 505l11 -7M580 506l9 -12M575 506l11 10M560 505l-18 -1M558 504l-13 4M556 505l-15 2M552 505l-8 8M554 506l-10 11M552 506l-12 6M579 511l12 -3M572 510l12 2M553 509l-5 -4M578 512l7 2M558 511l-17 9M555 510l-12 3M575 514l11 12M572 514l15 11M573 515l6 8M551 512l-11 -1M572 516l15 12M553 514l-9 12M554 515l-10 -10M576 518l12 4M554 516l-7 10M556 517l-11 10M552 517l-6 2M550 517l-4 -3M554 519l-12 5M572 521l10 3M555 520l-11 -8M554 520l-9 -3M555 522l-9 6M550 521l-11 7M556 523l-16 -10M578 526l6 2M552 524l-12 -10M556 524l-10 9M552 525l-8 1M552 525l-7 2M554 527l-13 12M573 529l7 3M555 528l-16 7M552 528l-10 5M577 532l6 -11M557 529l-14 6M550 530l-10 -7M569 532l18 -1M549 531l-5 0M553 532l-12 7M571 535l10 7M550 533l-5 -11M548 534l-5 1M572 536l8 8M570 537l16 -1M575 537l6 -12M555 537l-11 5M550 536l-13 -0M553 538l-13 2M575 540l4 10M573 541l13 1M576 541l10 -6M574 542l9 2M550 540l-5 6M549 541l-11 8M569 543l11 -4M575 544l10 -8M576 545l6 1M567 545l19 6M568 545l11 -4M554 545l-11 -1M550 545l-9 7M569 548l16 -7M568 548l12 11M570 549l17 3M571 549l10 -3M570 550l7 -8M569 550l12 5M551 550l-7 -6M547 550l-7 5M549 551l-7 -11M573 553l5 -11M571 554l9 -1M572 554l12 -1M550 553l-11 -13M574 555l11 9M572 556l9 8M552 555l-14 1M570 557l11 9M575 558l4 -6M552 557l-13 8M567 558l12 10M566 559l17 -7M554 559l-16 -2M546 559l-6 -0M571 561l13 12M554 561l-19 5M571 562l11 -12M570 563l12 -5M547 562l-8 8M550 563l-9 -5M570 564l10 8M553 565l-13 -15M548 565l-9 -4M572 567l8 -1M552 566l-11 -3M548 567l-12 2M547 567l-7 -6M570 569l8 10M550 568l-12 -0M548 569l-8 -2M551 570l-13 -1M568 571l17 -1M571 572l14 -9M568 573l12 -5M573 573l9 -4M574 574l9 -10M572 574l10 4M572 575l8 12M569 575l15 -1M547 576l-5 12M570 576l8 -4M573 577l9 -2M569 577l11 1M569 579l12 -14M554 578l-13 -11M567 580l11 3M565 580l17 4M552 581l-18 -3M569 581l10 10M551 582l-12 5M574 582l9 2M547 583l-12 -5M546 583l-9 14M548 584l-11 8M549 584l-5 8M573 585l10 7M547 586l-10 -11M553 587l-13 8M567 587l12 7M550 588l-13 4M567 588l15 -6M545 589l-4 -9M551 589l-11 -8M567 590l17 -4M569 590l11 -2M568 591l14 8M551 592l-9 -2M572 592l10 0M568 592l9 -5M546 594l-5 -12M553 594l-17 6M573 594l9 12M567 595l15 10M571 596l11 10M546 597l-8 8M568 597l16 8M551 598l-13 5M570 598l9 10M547 599l-8 -7M566 599l15 11M547 601l-12 6M549 602l-9 -4M568 600l13 -7M546 603l-6 -12M572 601l6 5M551 604l-13 2M548 604l-9 6M566 604l16 7M555 605l-12 6M553 606l-16 -11M571 605l10 -4M553 607l-11 -10M550 608l-10 7M555 609l-19 -1M547 609l-10 9M549 610l-6 10M574 608l6 5M574 609l7 4M555 611l-11 8M549 613l-8 7M550 613l-5 11M569 612l10 0M548 614l-4 -11M570 613l7 8M547 616l-12 -0M571 614l14 -10M567 615l18 3M552 617l-8 0M555 617l-15 6M573 616l7 7M548 619l-10 4M554 620l-15 -4M556 620l-19 -8M553 621l-8 12M549 622l-8 -5M550 623l-10 -10M552 622l-7 8M575 621l3 -8M551 624l-9 6M555 625l-13 -6M570 622l12 5M577 623l9 8M556 626l-11 12M573 624l3 -10M576 624l10 4M556 628l-10 -7M574 625l14 7M554 630l-7 7M554 630l-11 4M569 628l8 -12M576 627l5 -8M556 632l-11 17M555 632l-15 -2M574 630l16 -4M571 631l15 2M571 632l17 6M553 635l-13 -11M572 633l12 -14M555 636l-11 5M577 633l12 10M555 637l-4 10M573 635l10 -13M553 638l-11 -9M557 639l-15 -6M551 640l-6 5M558 640l-17 -4M577 636l5 -8M558 641l-12 4M576 637l8 -14M575 639l13 3M553 643l-14 -3M555 644l-13 -8M552 645l-7 -2M555 645l-11 -6M573 641l18 7M557 646l-10 -9M578 641l9 -10M556 648l-11 -2M555 648l-4 14M572 645l15 1M558 648l-12 -4M578 645l6 -14M556 650l-8 14M558 651l-14 -4M579 645l5 -6M559 652l-10 2M555 653l-3 6M575 648l10 1M579 647l8 5M562 653l-15 -7M555 655l-4 8M581 649l7 0M556 656l-7 -1M575 652l14 2M580 650l13 8M555 658l-11 -3M556 658l-7 -6M557 659l-10 7M562 658l-18 4M580 653l14 -1M580 653l4 -12M560 661l-12 -3M580 654l15 4M559 662l-12 5M580 655l8 -0M580 656l14 -3M558 663l-9 6M582 656l9 6M563 663l-10 14M564 664l-4 13M583 657l10 9M559 667l-5 1M577 660l15 -1M580 660l7 -17M585 658l6 7M584 660l13 -0M563 668l-12 5M583 661l4 -10M563 669l-4 15M563 670l-5 14M579 664l10 -15M567 670l-15 6M584 663l13 2M579 666l17 5M565 672l-11 7M584 665l9 -4M566 672l-14 11M580 668l16 -5M579 668l8 -18M584 667l9 -0M565 675l-3 9M563 677l-5 8M568 675l-18 1M568 676l-5 16M585 669l3 -11M565 679l-11 9M568 678l-7 15M589 669l4 -4M564 681l-5 2M571 679l-5 11M582 674l18 1M565 683l-9 1M588 672l11 1M571 682l-16 -1M569 683l-11 -1M574 682l-12 7M587 675l11 -9M567 687l-14 -2M590 675l13 4M592 675l10 2M573 685l-7 8M592 676l3 -7M590 677l1 -14M592 677l6 4M592 678l6 -6M575 688l-14 10M570 691l-7 -4M576 689l-6 11M576 689l-20 -1M594 680l-2 -12M593 680l-1 -10M573 694l-15 -6M594 681l9 2M594 682l11 -6M594 682l1 -12M573 697l-1 6M574 696l-14 2M590 687l3 -13M580 693l-14 9M596 684l15 7M574 699l-14 -5M592 688l4 -15M594 687l10 2M576 701l-10 -1M575 702l-4 11M598 686l2 -8M579 700l-6 7M582 699l-6 11M581 700l-10 10M579 704l-8 -0M580 703l1 12M600 687l10 -1M585 700l-14 4M597 691l16 -0M600 689l12 -4M582 707l-10 4M583 706l-9 1M598 693l0 -19M599 691l2 -7M602 689l3 -9M585 708l-9 3M589 705l-1 19M600 693l8 -12M602 692l2 -10M603 692l7 -2M599 697l7 -15M590 708l-16 2M590 710l-1 9M589 711l-7 11M601 698l5 -18M591 711l3 13M603 696l11 -3M602 697l9 -8M604 696l-2 -15M592 714l6 13M593 715l4 13M604 698l9 -11M605 698l5 -16M608 694l-6 -9M608 695l-4 -14M597 714l-3 10M597 716l-15 7M595 719l2 8M606 701l14 -7M599 715l-8 14M601 713l-9 12M600 716l5 15M600 718l1 7M603 713l7 19M603 716l1 14M610 700l5 -12M603 719l6 10M609 704l5 -16M612 699l-4 -12M611 701l12 -5M611 704l2 -13M606 718l-12 9M608 716l0 14M613 700l5 -6M615 698l-3 -13M615 698l6 -7M614 703l12 -6M614 704l8 -13M617 697l12 -4M611 721l0 11M616 705l11 -11M612 725l-1 6M616 706l8 -17M617 700l-8 -14M615 722l-11 10M615 720l-3 10M618 704l0 -11M616 722l-6 15M619 704l14 -13M617 726l1 4M620 703l2 -13M620 700l10 -7M621 707l5 -14M621 705l-1 -19M622 725l-4 11M622 700l-10 -4M624 726l11 4M623 719l-1 12M625 723l3 7M625 721l9 16M623 697l10 -2M624 700l7 -6M625 705l1 -18M628 725l-9 9M629 722l11 12M629 723l-1 9M630 719l-1 13M627 705l-15 -11M627 703l10 -15M633 725l4 11M628 700l-9 -9M629 705l6 -16M636 724l7 6M629 700l-14 -4M630 700l-10 -9M629 697l11 -12M637 719l12 4M632 703l-1 -16M630 697l-11 -8M631 700l4 -13M633 703l-5 -12M639 718l4 12M632 699l4 -9M632 697l-4 -13M643 720l-2 14M644 721l-0 11M633 696l-5 -3M642 714l13 12M645 718l7 10M633 695l-10 -7M645 715l-4 10M646 716l5 5M636 697l-6 -4M638 700l-11 -13M650 718l0 6M645 711l5 20M649 715l12 1M647 712l-3 13M652 716l15 -1M651 716l1 12M650 712l6 8M639 696l5 -12M639 695l-4 -15M639 694l3 -8M653 712l10 3M639 693l-8 -10M643 697l-14 -1M654 711l2 16M657 713l12 2M640 692l5 -11M655 708l9 5M658 712l6 10M659 711l14 -4M656 708l-3 15M660 710l8 2M646 695l-16 -1M657 704l14 10M643 691l-10 -2M662 708l2 6M661 707l14 -5M659 703l14 8M645 691l-3 -12M663 705l4 9M659 701l9 13M661 701l8 12M646 689l-10 1M644 686l-7 2M646 688l-9 -11M660 698l6 10M648 689l-7 -13M666 701l9 0M667 702l8 8M664 698l12 13M648 686l-5 -9M663 696l2 18M669 699l8 2M650 685l-6 -11M649 685l-6 -10M671 697l7 1M653 686l-14 -10M665 692l8 8M670 695l3 13M654 684l-4 -11M667 692l18 -5M672 693l15 -7M670 692l2 14M668 690l13 5M653 681l-6 -7M655 681l-15 -8M651 679l-3 -9M673 690l14 -5M672 689l8 -0M668 686l13 13M674 689l6 -1M650 675l-4 -11M670 685l12 0M672 685l9 7M658 678l-12 -6M676 686l5 -3M656 676l-16 6M676 685l7 0M656 675l-10 1M671 681l6 17M676 683l12 -1M672 680l12 -6M677 683l3 7M654 671l2 -10M655 671l-11 -10M677 680l13 -9M673 678l10 5M653 668l-1 -9M673 677l11 -3M680 678l2 14M659 670l-9 6M657 668l0 -11M680 677l3 5M674 673l7 12M676 674l14 -8M660 667l-12 3M658 666l-7 -3M656 664l-8 -5M680 673l11 -2M661 665l-12 7M657 663l-7 -13M656 662l-12 -3M675 668l15 9M661 662l-16 1M658 661l-5 7M679 667l12 10M662 662l-15 -10M682 667l6 13M663 661l-10 3M662 659l-14 9M659 658l-6 -13M677 663l13 14M680 663l7 8M658 656l-1 -8M665 658l-7 -14M665 657l-11 -12M660 656l-7 3M680 660l5 11M665 656l-11 5M667 655l-9 -8M663 654l-13 7M665 654l-11 3M684 659l7 3M662 652l-12 -11M663 652l-10 -6M685 656l4 10M681 656l13 13M687 656l6 0M668 651l-9 -11M680 653l13 -8M667 650l-19 -0M666 649l-11 -8M664 648l-16 -1M664 647l-9 -0M687 652l4 6M667 647l-13 -8M668 647l-12 3M661 644l-4 -15M662 645l-6 -2M682 648l13 -5M665 644l-8 1M688 648l1 9M667 643l-5 -12M682 645l13 16M684 646l11 11M668 641l-17 -6M685 644l8 -9M662 639l-6 6M689 644l4 12M666 639l-12 6M682 642l16 12M664 637l-11 3M686 641l13 -2M662 636l-6 -1M683 639l16 -8M667 635l-11 11M666 635l-9 -3M686 638l12 -1M688 638l8 -7M663 632l-5 -7M688 637l8 -10M671 632l-17 -8M669 632l-8 -7M688 634l9 10M665 630l-4 -7M687 633l14 -2M666 629l-9 8M664 628l-8 -10M667 628l-8 -7M669 627l-10 4M686 630l8 9M670 626l-15 12M669 626l-8 6M672 626l-17 3M670 625l-17 -2M685 626l16 -6M692 628l7 6M665 622l-6 -4M672 623l-17 -11M667 621l-6 -7M689 625l8 -4M690 624l8 5M668 620l-14 -2M668 619l-6 -0M667 619l-10 -8M665 617l-11 10M669 618l-9 2M668 617l-9 9M672 617l-9 9M667 615l-5 -4M668 615l-11 -8M687 617l7 10M666 614l-4 11M686 616l14 -8M687 616l9 5M686 615l13 -1M686 615l15 4M693 615l11 0M691 614l10 -8M675 611l-15 2M694 614l6 7M669 609l-8 10M673 609l-9 7M693 611l13 -8M690 611l10 -5M675 607l-17 11M689 610l14 -11M690 609l11 -6M672 606l-8 -1M675 605l-15 11M693 608l7 -3M672 604l-15 -4M688 606l16 8M673 603l-7 -8M671 602l-8 -13M669 601l-7 -9M670 601l-4 -11M672 600l-11 12M670 600l-10 8M672 599l-7 -14M673 599l-16 -3M672 598l-15 3M675 598l-9 -8M690 599l12 10M673 597l-14 -1M696 599l6 10M677 596l-16 11M673 595l-13 -8M674 595l-10 11M674 594l-11 -6M673 593l-15 -2M693 595l9 14M695 595l12 -11M677 592l-13 -8M677 592l-11 9M697 593l8 -2M674 590l-14 13M670 588l-9 -4M671 589l-8 2M693 590l5 10M678 588l-11 -10M672 586l-6 -4M694 589l15 -1M675 586l-14 -10M674 586l-12 6M693 587l10 -10M697 587l8 -1M679 584l-12 -2M679 584l-12 -6M692 584l10 4M671 582l-7 3M693 583l6 10M698 584l5 7M691 582l10 -8M673 580l-10 -4M679 579l-12 -0M672 578l-8 -8M675 578l-13 1M671 577l-6 9M699 579l4 2M676 577l-9 -8M671 575l-5 -14M695 578l13 -7M679 575l-16 -9M697 577l6 4M680 574l-16 -5M693 575l13 -11M678 572l-13 0M696 574l8 10M678 571l-8 -7M697 574l14 -6M697 572l8 -4M679 570l-14 -2M674 569l-6 -7M680 569l-10 -10M681 568l-11 -8M680 568l-18 5M676 567l-11 -4M697 569l15 1M696 568l8 -7M678 566l-11 -1M674 564l-7 5M696 567l12 8M673 563l-8 -6M693 565l13 -8M678 563l-14 8M679 563l-16 -3M698 564l13 8M697 564l11 -2M698 563l11 13M678 560l-9 -5M673 559l-5 -10M679 560l-13 5M679 559l-10 -8M675 558l-12 -7M699 560l10 9M678 557l-10 -1M697 559l14 5M680 557l-12 -2M680 556l-12 12M700 558l6 2M676 554l-11 5M702 557l10 -12M679 553l-10 -8M674 552l-5 -9M674 551l-5 11M699 554l11 1M682 551l-13 -7M695 552l16 -2M700 552l6 -5M700 552l5 5M678 549l-6 -9M680 549l-15 -9M694 549l12 4M699 550l16 -5M680 547l-11 -4M678 547l-14 8M675 545l-4 3M678 546l-16 -0M677 545l-9 -9M695 546l8 10M681 544l-14 -14M700 546l6 -9M701 545l10 -3M679 543l-6 -7M701 544l5 6M702 544l5 -11M682 541l-11 10M677 540l-8 -5M703 542l7 -1M682 540l-15 -10M703 541l8 9M701 541l8 6M704 540l3 -6M680 538l-5 -10M696 538l13 8M681 537l-12 8M680 536l-14 -5M682 536l-8 -11M696 536l16 3M702 536l9 6M684 534l-17 -10M700 535l8 -10M682 532l-17 -4M678 532l-5 9M703 533l12 7M702 533l6 11M683 530l-17 0M699 531l11 0M677 528l-7 7M684 529l-12 4M696 529l12 5M682 527l-16 1M698 528l8 11M700 528l13 1M704 527l5 -3M705 527l10 3M682 524l-12 -4M683 524l-18 2M678 523l-6 -5M678 523l-8 4M704 524l10 -3M681 522l-11 11M704 523l4 7M704 523l7 -11M698 521l14 13M705 522l9 -12M677 518l-10 6M678 518l-7 12M699 519l9 10M699 519l10 10M677 516l-5 -3M682 517l-13 4M682 515l-10 -2M699 517l8 10M698 516l12 9M704 516l9 -7M698 515l15 13M682 513l-9 10M699 514l12 10M700 514l15 -7M681 511l-10 -13M705 513l11 -1M574 430l-2 -15M573 426l-2 -10M579 427l3 -9M582 437l17 -2M576 431l2 -14M586 438l7 0M576 427l1 -14M578 429l5 -16M575 429l-0 -12M580 429l7 -11M575 431l-0 -15M573 431l-5 -18M586 439l7 1M587 439l7 1M581 434l11 -8M570 432l-11 -15M576 425l1 -11M584 438l12 0M588 439l13 1M579 426l2 -7M574 425l-1 -14M575 432l-1 -16M700 500l5 -7M698 509l11 -5M705 507l6 -2M687 507l-9 -10M687 505l-9 -15M705 507l5 -2M700 503l8 -9M682 505l-5 -3M680 504l-8 -5M691 500l-1 -10M686 503l-6 -10M703 507l11 -4M692 504l-0 -16M692 503l0 -14M698 506l7 -7M679 509l-11 -2M686 506l-9 -9M699 511l14 -2M692 502l-0 -14M700 512l14 1M684 504l-9 -10M700 512l12 0" stroke="#b87810" stroke-width="0.8" opacity="0.45"></path>
<path d="M576 436l-6 3M588 436l2 7M563 436l-5 5M569 438l-6 3M567 438l-1 7M569 439l3 6M564 444l7 1M589 446l-7 0M582 444l-2 7M565 443l-5 5M589 449l-6 4M579 447l5 5M585 450l-5 5M566 450l7 1M570 449l0 7M557 451l7 1M568 453l6 4M577 454l-6 3M589 458l-7 2M578 457l6 3M570 456l-0 7M573 458l-6 4M572 460l-6 3M585 461l3 6M589 464l-3 6M567 463l-7 1M571 466l-7 1M571 464l2 7M577 470l-7 0M586 468l-3 6M571 472l7 1M577 470l4 6M553 471l7 1M558 469l4 6M553 471l5 5M569 476l7 0M563 474l-5 5M585 478l-6 3M580 480l-7 2M576 479l-7 2M567 480l6 4M585 482l-7 3M585 485l-7 0M575 482l4 6M567 482l-3 6M566 482l-2 7M561 483l1 7M558 486l7 2M576 491l-7 0M559 486l-6 4M585 493l-6 3M574 491l4 6M567 491l2 7M555 489l-2 7M585 498l-6 3M572 494l-2 7M563 497l6 4M573 499l-7 2M555 498l-7 2M551 496l2 7M562 503l7 2M582 505l-7 2M553 503l5 4M555 505l7 0M566 508l6 4M573 507l-3 6M552 506l-3 6M553 506l0 7M573 516l7 0M559 513l7 1M573 516l6 4M575 515l-3 6M546 517l7 1M576 518l-6 4M568 519l1 7M572 520l4 6M549 519l-1 7M557 520l-1 7M552 523l-6 4M565 525l-6 3M570 526l-2 7M576 527l2 7M563 528l-4 6M572 532l-7 0M574 532l2 7M552 531l6 3M572 535l-6 3M552 532l-3 6M566 537l-6 4M546 535l4 6M576 539l-3 6M568 540l6 4M570 544l7 0M564 541l-5 5M573 543l2 7M553 542l0 7M557 544l-3 6M554 545l3 6M574 548l-0 7M553 547l-4 6M549 549l3 6M546 552l7 1M552 553l6 4M569 553l-2 7M578 557l-6 4M555 554l-1 7M543 556l4 6M548 556l-1 7M556 559l0 7M552 559l-2 7M551 561l-1 7M566 565l7 1M559 565l6 4M569 568l7 1M548 567l-6 4M564 567l-3 6M564 569l3 6M553 569l1 7M563 574l-7 1M570 573l6 4M547 574l-5 5M566 574l-3 6M543 579l7 0M570 579l7 2M574 579l-4 6M550 581l7 2M544 584l7 0M545 581l-0 7M566 584l-5 5M575 585l-6 3M542 588l6 3M567 586l5 5M543 592l7 0M551 589l4 5M563 591l4 6M550 592l-4 6M562 593l4 6M561 595l7 2M571 597l-7 1M557 596l-4 5M557 599l-5 5M558 598l1 7M577 601l-6 3M559 600l-3 6M569 603l6 3M568 602l0 7M560 607l7 2M547 606l4 6M543 610l6 3M550 611l7 1M562 609l3 6M557 613l-7 1M561 614l7 2M576 612l-6 4M567 615l-4 5M565 616l7 2M557 618l-3 6M574 617l7 1M553 621l5 4M553 622l6 3M567 623l-6 4M566 621l3 6M550 626l-3 6M548 627l6 4M563 626l-3 6M546 630l6 4M560 631l7 2M569 628l4 5M549 634l6 4M566 632l-5 5M573 632l-2 7M582 634l-7 0M568 639l-7 0M561 638l-5 4M582 635l-5 5M571 637l-2 7M556 643l-5 5M573 638l-1 7M580 639l-1 7M568 641l4 6M566 645l6 4M581 640l-0 7M575 644l4 5M558 652l-7 1M557 651l3 6M584 648l-7 1M573 649l1 7M558 653l-0 7M562 657l-6 3M571 651l3 6M569 655l-2 7M566 657l-6 4M579 653l2 7M576 654l4 6M582 654l0 7M580 655l4 6M579 657l-1 7M561 665l-4 6M567 665l7 1M586 660l-7 2M571 665l-3 6M571 665l6 4M576 666l7 2M572 668l-4 5M583 664l4 6M579 665l0 7M572 676l-7 0M581 667l4 6M567 680l-6 3M585 667l3 6M586 671l7 1M591 671l-6 3M583 675l7 0M586 673l7 1M585 679l-6 4M586 674l4 5M582 680l0 7M578 683l-4 6M568 690l3 6M579 685l-3 7M580 690l-7 2M567 695l7 1M579 689l2 7M579 690l-1 7M592 689l-7 1M587 687l-2 7M579 701l-7 1M580 693l3 6M583 694l1 7M578 699l7 2M593 690l7 0M590 692l1 7M597 690l-3 6M594 694l-4 6M585 702l6 4M591 698l-0 7M585 708l1 7M587 708l-2 7M598 694l4 6M596 704l-5 4M592 706l6 3M602 692l6 3M597 712l-6 4M598 713l-7 1M595 711l6 3M593 715l3 6M600 707l5 5M604 710l-7 2M609 697l-1 7M598 715l5 5M615 697l-7 2M601 718l1 7M613 706l-6 3M605 717l1 7M613 715l-7 2M612 704l0 7M610 709l7 2M613 724l-6 4M618 713l-7 2M611 719l7 3M621 711l-7 2M620 697l-2 7M619 721l0 7M619 703l3 6M621 722l2 7M620 699l4 6M626 702l-6 3M622 716l4 6M628 717l-1 7M630 724l-4 6M633 717l-6 3M631 708l-6 4M631 706l-1 7M626 706l7 1M633 712l3 6M636 713l-3 6M634 697l-7 1M639 716l-1 7M636 710l4 5M634 694l-5 5M646 715l-5 5M637 709l6 4M635 699l5 5M639 708l6 4M644 702l-7 1M639 697l-1 7M646 702l-7 0M640 702l7 3M645 701l2 7M648 702l-5 5M653 704l-3 6M643 694l1 7M644 693l2 7M661 710l-5 5M644 696l6 3M661 706l-4 6M647 689l-3 6M643 686l-0 7M661 699l-0 7M649 689l0 7M660 701l7 3M646 686l3 6M662 694l-6 3M654 687l-3 6M661 690l-3 6M645 680l1 7M663 694l7 1M670 693l-3 6M670 690l-3 6M660 685l-7 1M645 678l7 0M657 684l7 2M670 689l7 2M665 683l-7 1M662 682l7 2M656 674l-3 6M659 675l1 7M650 674l7 1M664 674l-6 4M673 682l6 3M672 679l7 2M666 673l-3 6M661 669l4 6M678 676l2 7M682 674l-5 5M672 673l5 4M663 664l-0 7M655 664l6 3M656 664l7 1M656 660l2 7M681 666l2 7M667 662l3 6M657 659l7 1M682 663l-4 6M678 659l-0 7M670 657l-3 6M668 656l5 5M659 656l7 1M678 657l-7 0M689 658l-5 5M670 651l-4 5M685 656l6 4M662 647l3 6M661 646l-5 5M663 646l-7 2M672 647l-3 6M682 647l-5 5M670 644l-1 7M669 642l-4 6M662 640l2 7M675 642l5 5M666 639l-5 5M688 641l-6 4M678 642l7 1M678 636l0 7M682 638l4 6M689 636l2 7M666 634l6 4M684 635l7 3M691 634l1 7M665 627l3 6M677 631l6 4M677 630l7 1M677 627l3 6M663 623l5 5M685 627l5 5M665 623l7 1M692 626l-7 2M673 620l-6 4M665 617l1 7M666 618l6 3M680 617l-3 7M697 619l-6 3M693 617l-1 7M687 614l0 7M674 612l-1 7M674 613l7 2M692 615l-7 0M686 609l1 7M691 610l1 7M672 605l-0 7M689 611l7 1M672 603l-6 4M666 602l3 6M688 602l-2 7M696 604l-1 7M681 602l-7 1M671 598l1 7M675 597l5 5M694 600l-6 4M677 595l5 5M671 594l4 5M688 593l2 7M672 595l7 1M697 594l-7 2M689 591l2 7M683 588l-5 5M676 588l4 6M681 587l5 5M690 586l-2 7M667 584l7 3M698 585l-4 6M670 580l2 7M697 583l-5 5M681 579l-4 6M669 579l6 3M688 577l2 7M695 578l-3 6M679 575l4 6M685 578l7 1M692 575l6 4M681 575l7 1M689 570l2 7M696 575l7 1M669 566l4 6M698 570l-6 4M678 565l1 7M679 565l-5 5M681 564l5 5M685 566l-7 0M682 562l4 6M698 564l-7 2M695 563l7 2M693 562l-7 2M681 557l2 7M682 558l-6 3M693 556l0 7M671 556l7 2M698 554l-0 7M674 552l3 6M697 552l-4 6M682 553l-7 1M676 547l-2 7M705 551l-5 5M680 547l-6 3M676 546l3 6M687 547l7 2M690 545l-6 4M692 545l-7 2M675 541l2 7M692 543l6 3M698 543l-6 3M706 541l-6 3M702 539l-0 7M698 538l5 5M687 536l0 7M689 535l5 5M691 538l7 1M684 533l-6 4M681 531l-0 7M688 529l-3 6M687 529l-3 6M679 526l2 7M690 527l3 7M692 525l-1 7M677 524l-2 7M686 523l5 5M673 523l6 4M683 523l-7 0M673 520l6 4M691 520l-6 4M688 520l-6 3M696 516l-1 7M680 516l5 4M698 516l5 5M694 516l5 4M690 512l1 7M685 512l-6 4M681 510l6 4M680 509l2 7" stroke="#d08a10" stroke-width="0.8" opacity="0.45"></path>
<path d="M568 434l-0 6M582 438l-1 6M582 440l0 6M580 444l-6 2M573 444l-4 5M569 447l-6 1M569 449l-6 2M570 452l5 3M580 454l-3 5M586 458l-6 2M588 462l-6 0M563 458l-2 6M587 465l-6 2M571 467l6 1M572 467l-2 6M573 469l-4 4M568 470l-1 6M581 477l6 0M578 476l2 6M577 479l5 3M575 480l3 5M557 481l5 3M571 484l4 4M570 486l4 4M581 489l-4 5M559 490l5 3M553 492l6 2M572 495l3 5M575 501l6 1M580 501l-2 6M566 502l-5 4M578 508l-6 1M566 507l3 5M579 511l-3 5M572 512l-4 5M553 515l6 1M578 518l2 6M554 518l4 5M559 521l3 5M573 526l5 4M568 528l-5 3M580 531l-4 4M567 531l1 6M553 533l-3 5M567 537l-4 4M549 537l0 6M544 541l6 2M577 546l-6 2M569 549l6 0M574 549l-4 4M574 551l-4 5M562 555l-6 1M565 555l2 5M573 558l2 6M570 560l-1 6M555 562l-0 6M547 565l-5 4M545 566l1 6M552 569l1 6M547 572l3 5M558 575l-4 4M576 579l-6 1M566 580l-5 3M556 582l2 6M549 586l5 3M566 589l-6 0M558 589l-1 6M552 592l-3 5M547 595l4 4M557 597l-4 4M571 598l-3 5M544 602l4 5M572 602l2 6M560 607l6 2M564 608l-4 4M553 611l4 5M568 613l6 2M570 614l4 5M545 621l6 2M556 620l-2 6M566 624l-6 1M577 623l-4 4M555 628l-1 6M549 632l4 4M573 629l1 6M578 631l-3 5M561 636l2 5M574 636l-1 6M583 638l-4 4M574 640l0 6M580 641l3 5M559 649l3 5M552 653l3 5M568 651l5 4M562 655l4 5M580 652l-3 5M558 661l-2 6M560 666l-6 1M559 665l2 6M558 668l5 3M577 663l1 6M585 662l3 5M585 668l-6 0M584 667l-3 5M579 674l-6 2M580 674l6 2M571 681l-1 6M569 686l-3 5M589 676l2 6M582 683l-1 6M582 689l-6 2M593 683l-5 4M578 693l5 3M585 691l3 5M590 691l-3 5M594 694l-6 1M582 706l-4 4M589 700l-0 6M605 689l-4 4M597 697l4 5M593 706l6 2M601 698l4 4M600 703l6 2M607 696l-0 6M608 704l-5 4M610 704l-3 5M602 719l6 2M617 697l-5 3M612 703l4 4M613 710l6 0M619 718l-5 4M618 719l2 6M622 696l0 6M620 704l6 0M630 714l-6 2M625 705l4 4M624 697l6 2M638 717l-5 3M639 711l-5 3M638 710l2 6M639 714l5 3M641 707l1 6M634 696l6 1M636 691l1 6M645 706l6 1M649 708l6 2M646 695l1 6M661 706l-2 5M649 692l-3 5M656 695l-3 5M652 693l4 4M668 699l-6 2M657 692l5 3M653 685l4 4M653 681l-6 0M653 683l6 0M656 681l6 2M654 674l-4 5M667 678l-4 4M674 683l6 1M668 674l1 6M676 675l0 6M661 667l1 6M679 671l-2 5M669 668l6 2M662 661l-6 1M679 663l-2 6M667 657l2 6M676 659l5 4M666 653l3 5M673 652l-0 6M667 650l-6 1M664 645l-2 6M672 645l-0 6M690 647l-5 3M665 639l3 5M683 640l-3 5M677 639l6 2M683 637l-6 2M674 632l4 4M676 631l-6 1M685 628l-3 5M666 623l3 5M686 626l-6 0M672 619l-3 5M669 616l2 6M677 618l6 2M676 615l6 2M689 613l2 6M673 608l-3 5M683 607l3 5M697 607l-2 6M697 605l-5 3M680 599l-1 6M686 598l-0 6M689 596l-2 6M682 594l4 4M694 592l-2 6M693 590l-4 5M683 587l3 5M685 586l6 2M689 582l-4 5M691 581l4 5M675 577l3 5M685 577l6 2M672 574l6 1M680 570l-4 5M698 573l6 1M686 567l-5 3M679 565l-6 2M691 564l-6 1M684 562l6 1M675 557l-5 4M679 555l-3 5M689 554l-3 5M706 554l-5 4M677 549l4 4M686 547l2 6M701 547l-5 3M675 541l1 6M706 544l-6 2M693 539l-2 6M686 536l-3 5M671 536l6 1M695 533l3 5M703 533l-6 2M692 529l4 5M693 527l-5 3M703 525l4 5M698 524l6 2M696 520l4 5M695 519l6 1M675 515l5 3M678 514l6 1M679 510l3 5" stroke="#f6c060" stroke-width="0.8" opacity="0.4"></path>
<path d="M568.0 435.4h0.1M582.4 442.5h0.1M565.6 448.0h0.1M565.2 453.1h0.1M567.9 459.1h0.1M573.1 466.3h0.1M578.6 471.4h0.1M559.8 475.1h0.1M562.8 482.4h0.1M572.4 487.1h0.1M576.3 492.5h0.1M558.7 497.1h0.1M571.6 504.6h0.1M576.9 510.7h0.1M568.0 515.4h0.1M570.3 522.0h0.1M562.9 529.8h0.1M556.3 535.3h0.1M552.9 539.9h0.1M554.6 548.5h0.1M549.5 552.2h0.1M562.3 561.0h0.1M567.8 566.0h0.1M550.6 569.0h0.1M555.0 578.7h0.1M569.4 581.8h0.1M549.2 589.5h0.1M568.7 592.7h0.1M560.5 599.5h0.1M567.2 605.8h0.1M550.6 612.4h0.1M572.6 615.7h0.1M557.5 624.3h0.1M556.8 632.1h0.1M557.8 638.6h0.1M557.5 642.4h0.1M560.5 649.0h0.1M558.8 654.3h0.1M574.6 657.8h0.1M569.8 662.6h0.1M564.2 669.3h0.1M577.8 671.2h0.1M579.0 674.3h0.1M587.2 678.0h0.1M579.0 687.4h0.1M584.1 693.0h0.1M596.2 689.6h0.1M591.6 702.6h0.1M598.1 703.0h0.1M604.5 701.9h0.1M607.5 713.3h0.1M616.4 700.1h0.1M620.0 704.1h0.1M624.7 710.6h0.1M629.6 722.1h0.1M637.4 717.9h0.1M637.9 706.4h0.1M640.1 700.4h0.1M651.4 704.5h0.1M644.7 692.8h0.1M659.9 699.5h0.1M662.1 691.9h0.1M658.6 683.3h0.1M655.8 675.5h0.1M658.3 673.2h0.1M675.3 675.8h0.1M672.4 667.7h0.1M669.9 660.0h0.1M665.9 653.7h0.1M678.8 650.2h0.1M675.1 646.1h0.1M669.8 635.3h0.1M667.8 629.2h0.1M682.5 626.1h0.1M685.4 620.3h0.1M677.9 613.8h0.1M679.7 607.5h0.1M673.7 601.1h0.1M688.5 600.8h0.1M685.9 593.8h0.1M689.7 586.1h0.1M682.2 581.0h0.1M686.7 574.5h0.1M680.1 570.9h0.1M679.8 565.5h0.1M682.7 559.6h0.1M684.7 553.1h0.1M681.2 546.6h0.1M698.4 545.0h0.1M692.5 538.0h0.1M686.5 532.5h0.1M701.3 527.6h0.1M684.0 521.4h0.1M697.7 516.0h0.1" stroke="#fff2d0" stroke-width="2.6" stroke-linecap="round" opacity="0.6"></path>
</g>
<g filter="url(#soft)">
<path d="M591.0 329.0 C590.8 332.0 590.3 341.0 590.0 347.0 C589.7 353.0 589.2 362.0 589.0 365.0" fill="none" stroke="#f4d090" stroke-width="47" stroke-linecap="round" stroke-linejoin="round" opacity="0.2"></path>
<path d="M591.0 329.0 C590.8 332.0 590.3 341.0 590.0 347.0 C589.7 353.0 589.2 362.0 589.0 365.0" fill="none" stroke="#eca21c" stroke-width="31" stroke-linecap="round" stroke-linejoin="round"></path>
<path d="M577 328l-4 -11M576 328l-4 -11M580 328l-9 -11M603 330l13 -5M604 331l12 -2M576 329l-2 -10M582 330l-15 -3M579 329l-10 2M602 332l13 -1M577 330l-4 10M580 330l-7 -5M577 330l-11 8M600 333l13 1M579 332l-6 8M604 333l5 -11M605 333l9 -11M605 334l9 -9M580 333l-14 -7M602 334l8 11M601 334l9 11M580 334l-9 -4M577 333l-9 6M603 335l8 6M605 335l7 -4M602 336l15 -1M578 335l-9 9M575 334l-6 11M600 336l12 -12M582 336l-11 5M579 336l-8 6M599 337l11 13M577 336l-9 -5M581 337l-14 -5M576 337l-5 11M578 337l-9 3M577 337l-7 3M600 339l13 7M576 338l-4 -8M578 338l-13 5M580 338l-12 9M575 339l-3 9M602 340l13 3M575 339l-5 -14M582 339l-16 -6M577 340l-8 11M601 341l8 -7M578 340l-8 -8M576 340l-5 -13M581 341l-13 -2M603 342l12 7M605 342l6 -2M577 341l-12 3M599 343l15 -1M600 343l10 1M599 343l11 -3M578 342l-12 3M604 344l7 -4M576 343l-8 -3M578 343l-11 8M581 343l-15 -4M578 344l-10 -12M599 345l16 3M600 345l13 -11M575 344l-3 -10M600 346l10 -5M578 345l-10 13M602 346l11 -10M576 345l-8 7M604 347l5 9M599 347l13 -8M599 347l11 -8M577 346l-11 -6M602 348l13 4M600 348l12 -2M599 348l11 8M601 348l12 6M604 350l7 -13M579 348l-9 8M602 349l12 7M604 350l5 9M580 349l-9 -5M603 351l7 10M604 351l6 -4M605 351l7 -7M599 351l11 -2M601 351l9 4M577 350l-14 -5M581 350l-16 9M601 353l8 4M604 353l3 11M577 351l-7 -9M580 351l-10 -5M603 354l10 -11M575 352l-3 11M577 352l-10 6M580 352l-11 12M577 353l-11 -1M575 353l-8 6M579 353l-13 10M600 355l15 -6M601 356l10 5M602 356l13 3M575 354l-7 4M575 354l-9 2M603 357l5 8M602 357l10 6M579 356l-9 4M600 357l12 13M579 357l-6 -10M601 358l11 -7M577 356l-11 4M575 356l-6 0M574 357l-5 -6M599 359l16 -10M604 359l9 7M580 358l-11 -8M604 360l7 -7M600 360l7 -10M575 358l-5 3M599 360l9 9M579 360l-12 -14M598 361l11 -10M601 361l6 12M604 361l2 11M600 362l16 2M576 361l-7 -11M577 361l-10 -8M604 362l10 1M580 362l-15 9M603 363l5 -5M576 362l-9 8M575 362l-7 4M577 363l-8 -2M581 363l-10 8M599 364l14 -9M602 364l5 9M578 364l-9 6M581 364l-14 -5M579 364l-10 -7M603 365l10 11M582 325l-15 -7M581 322l-11 -7M602 328l12 -2M582 326l-15 -5M594 317l4 -13M580 321l-10 -7M584 318l-4 -6M580 327l-12 -2M600 323l12 -7M593 320l3 -17M594 317l3 -11M581 325l-13 -5M582 327l-14 -3M581 327l-15 -3M600 321l8 -7M578 323l-6 -3M588 319l-3 -11M577 324l-4 -1M588 318l-4 -11M591 318l-0 -13M603 327l12 -2M594 315l2 -8M582 377l-5 9M586 378l-2 8M600 368l14 4M580 366l-14 3M598 367l12 4M577 364l-9 0M581 369l-13 7M588 373l-2 17M576 366l-6 1M592 374l3 9M603 367l10 2M586 379l-2 9M602 373l7 4M596 377l5 9M595 377l5 9M596 373l8 11M590 373l2 13M574 368l-5 1M592 374l5 16M575 367l-6 1M578 366l-15 2M597 373l9 11" stroke="#f6c060" stroke-width="0.9" opacity="0.7"></path>
<path d="M604 330l6 -8M601 330l11 0M578 329l-4 -7M598 330l14 8M602 332l7 -3M601 332l11 -3M582 332l-12 5M581 332l-6 10M584 333l-8 -9M599 334l10 -8M585 334l-16 8M585 334l-10 4M579 335l-5 10M579 335l-10 -4M586 336l-16 -10M602 337l8 -3M580 337l-9 -14M584 337l-14 5M582 338l-11 -7M583 338l-11 5M601 340l6 3M581 339l-13 7M584 340l-17 2M580 340l-10 12M581 341l-6 -9M579 341l-5 5M598 343l12 2M585 342l-19 3M602 344l10 6M580 343l-11 -0M596 345l14 -0M595 345l11 -9M580 345l-6 -8M600 346l9 8M584 346l-10 9M596 347l15 -2M602 348l7 -4M599 348l13 4M585 349l-13 9M585 349l-16 -2M601 350l10 -9M577 349l-4 11M601 352l10 11M581 350l-9 11M580 351l-9 -9M583 352l-10 -7M601 354l7 13M584 353l-13 3M594 354l13 -9M585 354l-16 -0M580 355l-6 9M577 354l-8 3M580 356l-8 9M594 356l14 8M602 358l8 -10M595 357l13 6M602 359l2 8M594 358l16 11M602 360l10 8M578 359l-11 -2M597 361l9 -11M584 360l-17 -11M584 361l-17 -4M583 361l-11 5M599 363l9 -3M602 363l8 12M581 363l-7 7M578 363l-8 12M577 364l-7 -9M576 364l-9 4M597 328l16 -3M601 325l11 -5M603 327l6 -1M592 322l2 -13M586 318l-3 -6M597 329l12 0M583 320l-6 -6M586 323l-7 -8M596 320l5 -7M589 316l-1 -10M597 329l12 -1M588 319l-3 -10M593 325l6 -11M592 321l2 -14M598 324l8 -6M597 327l16 -5M593 320l2 -9M579 326l-11 -3M594 323l6 -14M599 327l15 -3M597 324l10 -8M585 328l-17 -3M586 372l-5 12M580 369l-13 6M586 370l-7 14M596 368l13 6M585 376l-4 11M579 365l-13 1M580 373l-5 5M590 377l0 5M580 370l-6 4M594 368l11 9M586 374l-2 7M581 366l-9 2M578 366l-11 2M583 370l-8 7M582 370l-7 6M589 372l-1 14M578 372l-7 5M592 371l4 9M584 366l-11 3M583 375l-3 5M591 375l3 12M587 372l-4 16" stroke="#b87810" stroke-width="0.8" opacity="0.45"></path>
<path d="M590 325l-1 7M574 326l5 4M575 327l4 6M580 328l-5 5M598 330l2 7M587 331l6 3M604 333l-5 5M590 333l-5 5M592 334l3 6M590 334l3 6M589 336l-3 6M589 339l-7 1M580 339l-6 3M583 341l7 0M602 342l-6 4M590 340l2 7M578 344l7 2M593 342l1 7M573 346l7 2M592 347l7 2M576 346l3 6M579 348l7 2M590 350l6 3M600 350l5 5M597 351l-1 7M601 351l-1 7M582 355l-7 2M595 353l-2 7M599 357l6 4M590 357l-7 3M592 357l3 6M593 358l-5 5M584 360l-5 5M603 361l-6 4M603 362l-3 6M589 362l-6 4" stroke="#d08a10" stroke-width="0.8" opacity="0.45"></path>
<path d="M605 327l-3 5M579 328l4 5M602 333l5 3M588 334l5 3M603 335l2 6M592 337l4 5M591 339l2 6M596 344l6 0M584 344l5 3M582 347l-6 1M582 348l-5 3M590 350l5 4M583 353l6 2M599 354l-4 4M588 356l5 4M589 359l-5 2M578 359l0 6M598 364l6 2" stroke="#f6c060" stroke-width="0.8" opacity="0.4"></path>
<path d="M585.5 328.3h0.1M581.0 332.7h0.1M584.9 340.3h0.1M586.9 343.5h0.1M597.1 351.6h0.1M586.3 353.1h0.1M590.2 358.8h0.1" stroke="#fff2d0" stroke-width="2.6" stroke-linecap="round" opacity="0.6"></path>
</g>
<g filter="url(#soft)">
<path d="M752.0 239.0 C749.7 249.8 743.3 276.0 738.0 304.0 C732.7 332.0 724.5 378.5 720.0 407.0 C715.5 435.5 712.8 448.0 711.0 475.0 C709.2 502.0 708.2 538.5 709.0 569.0 C709.8 599.5 711.7 634.0 716.0 658.0 C720.3 682.0 725.7 697.0 735.0 713.0 C744.3 729.0 759.8 749.8 772.0 754.0 C784.2 758.2 796.7 749.7 808.0 738.0 C819.3 726.3 831.0 705.0 840.0 684.0 C849.0 663.0 855.0 636.2 862.0 612.0 C869.0 587.8 877.5 563.2 882.0 539.0 C886.5 514.8 887.8 479.0 889.0 467.0" fill="none" stroke="#a8a8a8" stroke-width="46" stroke-linecap="round" stroke-linejoin="round" opacity="0.2"></path>
<path d="M752.0 239.0 C749.7 249.8 743.3 276.0 738.0 304.0 C732.7 332.0 724.5 378.5 720.0 407.0 C715.5 435.5 712.8 448.0 711.0 475.0 C709.2 502.0 708.2 538.5 709.0 569.0 C709.8 599.5 711.7 634.0 716.0 658.0 C720.3 682.0 725.7 697.0 735.0 713.0 C744.3 729.0 759.8 749.8 772.0 754.0 C784.2 758.2 796.7 749.7 808.0 738.0 C819.3 726.3 831.0 705.0 840.0 684.0 C849.0 663.0 855.0 636.2 862.0 612.0 C869.0 587.8 877.5 563.2 882.0 539.0 C886.5 514.8 887.8 479.0 889.0 467.0" fill="none" stroke="#8a8a8a" stroke-width="30" stroke-linecap="round" stroke-linejoin="round"></path>
<path d="M738 236l-4 -12M742 237l-13 -8M742 237l-17 -3M743 238l-10 -10M740 237l-8 -14M765 243l9 -7M739 238l-8 11M760 243l16 -11M739 238l-14 10M738 239l-9 -3M762 245l12 10M743 240l-18 -0M760 245l11 13M764 246l1 10M764 246l14 9M742 242l-11 -14M740 242l-14 -10M764 247l7 -8M737 242l-13 -4M759 247l19 -5M759 248l13 1M759 249l11 -1M738 244l-4 -9M762 249l11 -2M739 245l-7 -13M764 251l14 -6M763 251l12 -2M764 252l7 15M737 246l-16 -5M737 246l-11 -1M740 248l-14 -13M763 253l6 -0M760 252l7 15M740 249l-17 -6M739 249l-13 2M741 249l-13 -12M739 250l-14 11M761 255l15 10M736 249l-4 -15M738 251l-17 3M762 256l7 -6M737 250l-13 1M740 252l-10 -17M757 256l18 -9M761 257l8 8M759 258l10 -4M740 253l-12 -14M738 253l-7 -10M761 260l5 10M736 254l-11 10M738 254l-10 -18M760 261l13 -13M737 255l-8 -8M734 255l-7 -15M736 257l-4 -10M756 261l14 -5M757 261l11 8M736 258l-12 -2M755 262l20 3M734 258l-9 11M736 259l-14 11M733 259l-11 13M739 260l-15 9M733 260l-13 1M761 266l10 -1M756 265l10 6M733 261l-7 11M735 261l-9 -3M739 262l-11 8M758 267l7 -10M758 267l13 4M758 267l12 2M760 269l15 5M737 264l-10 -13M757 268l8 -8M733 264l-7 -0M756 269l6 14M737 265l-9 -8M758 271l13 -2M760 271l15 4M735 266l-11 -15M736 267l-6 -13M734 266l-4 -11M731 266l-12 9M732 267l-6 -10M756 272l6 14M759 273l4 11M735 269l-12 -6M756 273l16 2M736 269l-11 -3M759 275l2 10M755 274l11 -5M732 269l-10 1M730 270l-5 -11M731 270l-11 3M735 271l-11 3M730 271l-12 7M758 277l11 12M734 272l-4 -11M731 273l-8 10M756 278l11 -3M733 273l-15 2M734 275l-13 -8M730 274l-6 4M733 274l-11 8M757 281l6 -4M730 275l-4 -8M733 276l-13 -0M756 282l8 17M729 276l-13 -8M753 281l18 -6M733 278l-10 -1M732 278l-9 5M757 283l4 1M757 284l8 -6M756 284l8 -3M754 284l9 15M756 285l4 9M753 285l18 2M728 279l-14 11M731 281l-15 -3M731 281l-10 -3M728 281l-9 -5M732 283l-15 10M730 282l-5 -12M754 287l15 9M754 288l9 11M730 284l-14 10M755 289l6 15M728 284l-11 1M733 285l-13 6M731 285l-9 -15M755 291l3 11M750 290l18 -4M733 287l-19 0M754 292l9 -3M733 288l-18 -3M733 288l-7 -10M726 288l-8 -11M753 293l5 7M726 288l-10 7M728 289l-11 11M731 290l-20 -4M753 294l11 -2M753 296l8 19M749 295l17 -2M750 295l16 10M726 292l-7 5M753 297l10 -12M754 297l5 -4M754 299l9 -5M749 298l19 0M730 294l-10 -8M749 299l16 -3M751 299l9 11M731 295l-15 7M725 295l-12 -6M725 295l-9 -9M753 301l10 -10M727 297l-4 -10M725 297l-7 -14M750 302l11 9M747 302l16 -10M725 298l-11 -5M724 298l-6 -7M727 300l-11 1M728 300l-17 12M728 300l-13 -12M749 305l17 1M724 300l-9 10M750 305l16 -12M751 307l11 2M730 303l-12 -6M727 302l-9 -4M729 304l-15 3M730 304l-14 -18M749 308l13 6M751 310l9 -1M727 305l-11 -12M725 305l-14 -4M725 306l-7 -6M750 311l6 -11M723 306l-9 -3M746 311l12 7M724 307l-8 -2M723 307l-12 -10M746 313l16 -13M729 310l-17 3M746 313l20 -10M728 311l-11 10M727 311l-18 3M750 315l8 4M726 312l-15 5M727 312l-17 -1M728 312l-22 -2M750 318l2 8M745 317l12 -9M724 313l-14 5M749 319l11 5M749 319l13 8M748 319l7 8M747 320l14 10M749 321l11 4M744 320l15 -2M727 318l-13 -19M726 318l-13 6M723 317l-12 -13M750 323l7 1M723 318l-12 9M725 318l-12 -17M726 320l-10 10M721 319l-13 8M724 319l-9 9M747 324l9 -1M746 324l8 13M723 320l-8 -10M725 322l-14 -8M743 325l17 4M724 321l-16 -8M745 326l16 -6M723 322l-17 13M742 326l13 -1M746 327l12 -4M743 327l16 -0M748 328l12 6M746 328l7 -5M748 329l1 11M725 325l-16 0M720 325l-10 -10M723 325l-12 12M722 325l-11 -13M720 326l-5 -1M721 326l-14 -0M748 331l8 10M719 327l-4 -5M723 328l-16 -7M745 332l11 -2M748 333l4 10M721 328l-7 -11M746 333l12 2M724 330l-11 -1M719 329l-13 4M743 333l9 8M744 335l7 -10M719 330l-8 -9M718 330l-7 -11M723 332l-13 -8M741 335l9 13M720 331l-6 -5M718 332l-6 -2M746 337l5 1M719 332l-11 -6M743 338l11 17M723 334l-10 -15M746 338l4 10M722 335l-6 -12M745 339l11 -10M723 335l-17 4M718 336l-8 -6M740 340l16 -6M722 336l-19 -1M719 337l-11 13M719 337l-6 -3M722 338l-15 -14M743 342l9 11M743 342l7 6M717 338l-8 -12M740 343l10 11M745 344l13 4M719 339l-16 10M740 344l10 9M720 340l-8 7M719 340l-5 -10M740 345l14 5M719 342l-13 -9M719 341l-13 3M723 343l-20 4M721 343l-10 2M743 347l11 16M719 344l-14 5M741 348l11 -2M741 348l5 9M720 345l-10 4M739 348l15 15M738 348l10 13M719 346l-5 -9M720 346l-7 9M717 346l-10 -6M718 347l-16 -4M715 347l-10 -4M720 347l-11 -2M740 352l9 7M722 349l-9 -9M744 353l8 0M743 354l4 12M720 350l-9 -6M741 353l5 9M720 351l-13 -10M743 355l0 12M742 355l1 10M739 355l19 -11M743 356l13 2M738 355l12 -3M738 356l11 2M718 353l-18 -0M717 353l-16 0M720 354l-7 -11M717 354l-6 -12M739 358l17 5M742 359l3 11M720 355l-17 -2M714 354l-12 -1M715 356l-6 -4M714 356l-8 -14M741 360l13 -3M738 361l8 14M717 357l-8 4M717 357l-5 -11M716 358l-11 1M718 359l-17 -9M714 358l-10 7M715 359l-11 2M737 363l12 -7M741 364l6 -5M717 361l-18 8M719 361l-16 -6M741 365l11 -4M740 366l12 -1M740 366l7 5M718 362l-16 10M736 366l12 -2M718 363l-10 -13M717 363l-19 8M740 368l8 -0M737 368l15 2M713 364l-8 -3M715 365l-16 -9M718 366l-16 -8M714 365l-8 -7M717 366l-19 4M735 370l16 6M737 370l10 9M713 367l-5 -3M736 371l12 2M735 371l11 -2M716 369l-15 5M737 372l10 -4M714 368l-7 5M717 370l-11 -12M712 369l-8 5M716 370l-17 6M718 371l-15 -14M716 371l-18 -7M740 375l16 -2M716 372l-10 -13M713 372l-7 11M737 376l7 4M737 377l12 2M735 376l11 6M717 373l-16 -5M712 374l-12 3M733 377l20 -1M736 378l8 4M735 379l15 4M737 379l13 -1M710 374l-9 -8M737 380l8 11M738 380l7 9M715 376l-17 2M715 377l-15 -8M737 381l11 7M716 378l-12 5M710 378l-13 7M715 379l-15 7M714 378l-11 -5M737 383l15 -10M715 380l-11 -4M733 383l15 -3M715 381l-20 5M710 380l-6 -12M738 385l4 7M712 381l-7 -10M713 382l-8 9M736 385l11 5M716 383l-14 4M714 383l-18 -9M710 382l-12 5M734 387l11 8M738 388l1 12M710 383l-2 -11M732 388l16 -12M735 388l9 -7M711 384l-12 -5M713 386l-12 -16M732 389l15 -8M711 386l-14 3M713 387l-10 2M714 387l-6 -13M713 387l-14 0M731 391l12 -8M735 392l17 -6M713 388l-18 2M713 389l-16 8M733 392l12 12M712 389l-11 -10M737 394l14 7M733 393l12 -2M732 393l12 6M733 394l13 17M713 391l-19 12M709 390l-16 0M709 391l-7 -15M732 395l5 12M712 392l-18 -2M734 397l7 2M731 397l15 14M732 397l12 -6M735 399l11 -11M731 398l13 -8M707 394l-13 12M709 396l-8 -10M731 400l10 -8M709 396l-8 9M732 401l10 12M710 398l-8 -1M734 401l13 8M732 403l11 -6M734 403l6 12M711 399l-16 2M734 404l15 -8M735 404l13 -12M710 400l-9 9M731 405l10 -2M707 401l-13 0M735 406l4 11M708 403l-7 11M706 402l-11 -2M708 403l-9 12M708 404l-9 -3M735 408l-0 12M707 404l-12 -4M711 406l-20 1M732 409l6 3M710 406l-13 10M709 407l-10 -2M710 407l-11 6M708 407l-14 13M709 408l-13 1M706 408l-5 -9M729 411l10 -8M706 409l-6 3M710 410l-12 -13M707 409l-7 -8M729 414l12 -10M733 415l10 7M731 414l7 0M707 412l-13 -4M709 412l-8 -11M729 415l12 -6M710 413l-14 7M710 413l-19 13M733 417l4 7M727 417l15 8M732 418l9 -4M729 418l9 -4M710 416l-11 10M709 415l-11 -1M705 415l-4 -11M729 420l13 -7M706 416l-12 -8M728 420l20 -4M708 418l-10 11M731 421l9 0M704 417l-11 -7M708 419l-15 -3M703 418l-6 -9M726 422l15 -12M728 423l19 -9M703 419l-14 2M729 423l9 4M710 421l-15 -5M732 425l14 -3M709 421l-13 -6M728 425l9 -5M708 422l-11 -14M726 425l20 4M728 426l11 1M707 423l-13 7M705 422l-9 8M725 427l21 -6M728 427l18 -3M704 423l-16 6M731 429l5 -7M729 428l13 -2M704 424l-6 -16M729 430l8 -8M707 426l-16 4M729 430l7 16M708 427l-10 -6M707 427l-17 -8M708 427l-15 -0M703 428l-6 -11M707 429l-18 3M730 432l12 -7M706 430l-11 -2M704 430l-12 -10M705 430l-12 2M725 434l6 13M703 431l-7 12M707 431l-20 4M724 435l14 -3M708 433l-21 -3M705 432l-8 10M728 437l7 15M707 434l-14 9M703 433l-4 -12M706 435l-14 -17M729 439l15 -9M701 434l-5 -6M703 436l-15 0M705 436l-14 -1M727 439l15 -1M723 440l9 11M727 441l12 -9M729 441l3 8M703 438l-13 -7M701 438l-7 10M725 442l8 11M700 439l-15 3M726 443l11 11M706 440l-6 -12M705 441l-11 -2M702 441l-6 -3M726 444l9 8M725 445l9 6M724 445l18 -10M726 445l11 15M722 446l12 -0M727 447l11 -5M722 446l14 -10M726 448l12 13M700 444l-12 -6M723 447l15 8M723 448l10 1M727 449l7 -5M726 449l10 3M728 450l10 8M702 447l-14 -11M703 447l-18 -6M699 448l-7 -16M726 451l15 -2M727 451l13 -11M703 450l-16 4M703 450l-9 3M705 450l-16 8M698 450l-9 -6M701 451l-6 -8M704 451l-15 9M721 454l9 -9M700 452l-12 7M701 452l-9 -13M725 456l12 8M721 456l11 12M726 456l3 13M703 455l-10 10M726 458l12 -1M724 457l17 -11M704 456l-16 -10M725 459l16 8M703 456l-8 -8M704 458l-13 -17M703 458l-10 5M698 457l-6 12M703 459l-12 11M726 461l8 -8M702 459l-11 9M721 461l15 2M704 460l-19 -2M699 459l-13 6M702 461l-12 -10M726 463l4 -7M726 463l11 10M724 464l11 16M698 461l-10 -7M726 464l2 10M703 463l-19 2M702 463l-17 7M700 463l-8 -1M700 464l-11 -16M721 466l10 -3M701 464l-8 -8M724 467l12 -2M700 465l-11 -13M700 465l-11 -16M723 468l8 10M701 466l-8 -7M697 466l-15 -0M723 469l16 -10M720 469l12 -9M726 469l6 -4M703 469l-17 -9M700 468l-15 3M701 468l-12 9M698 469l-5 -2M723 471l7 12M722 471l9 -5M720 472l11 4M722 472l11 -7M703 471l-16 12M724 474l12 -3M701 472l-13 -12M726 474l12 11M701 473l-13 10M723 475l14 1M721 474l18 -8M722 476l17 -5M700 474l-9 -1M722 476l9 8M698 475l-11 10M698 475l-6 12M700 475l-10 -15M723 478l5 -10M722 478l18 8M700 477l-8 6M699 478l-14 -11M696 478l-10 -8M697 478l-16 -0M696 479l-5 10M696 479l-8 5M700 479l-10 10M700 481l-17 0M724 482l3 11M699 481l-11 14M697 482l-7 -4M699 482l-14 -3M725 483l5 8M699 483l-7 8M725 485l14 8M725 485l10 -9M697 484l-10 -2M698 484l-12 -6M724 486l6 7M723 487l12 -10M701 486l-18 -2M718 487l18 7M722 488l12 14M720 488l9 2M696 487l-5 -12M696 488l-9 -11M720 490l16 -12M702 489l-20 5M702 490l-19 -3M722 491l8 3M698 490l-9 -7M724 492l13 -3M719 492l15 1M698 491l-11 -1M695 492l-5 -2M721 494l18 -3M723 494l10 -1M697 494l-13 -8M722 495l10 6M697 494l-11 -7M720 496l16 6M701 495l-14 4M702 495l-13 13M699 497l-12 4M724 498l10 -7M695 497l-12 1M724 499l4 -9M718 499l21 2M719 499l11 -4M696 499l-11 -12M695 499l-11 9M720 500l9 12M721 502l14 -5M723 502l13 11M722 502l11 -8M721 503l13 -8M723 503l9 -5M700 502l-15 -11M724 505l1 11M697 504l-12 6M723 505l13 0M721 506l16 10M722 506l12 6M699 505l-13 3M696 507l-6 9M695 507l-8 2M701 507l-19 12M718 509l14 -10M701 508l-11 3M701 508l-15 5M701 510l-20 -7M698 510l-9 -11M718 510l10 -12M721 512l11 10M720 512l9 -4M722 512l13 5M722 513l5 11M722 513l10 -10M718 513l15 11M698 514l-10 -12M698 514l-10 -13M719 515l17 12M700 516l-17 -1M720 516l10 11M699 516l-12 1M698 517l-11 -2M721 518l9 8M699 517l-15 -2M721 519l10 11M699 518l-8 10M700 518l-7 -11M698 520l-11 0M721 520l12 -6M698 520l-12 1M722 522l7 2M721 522l11 -8M723 522l15 0M722 523l9 11M696 523l-9 1M719 523l12 14M694 524l-9 1M720 525l9 9M697 524l-11 5M698 526l-8 -7M717 526l19 -7M720 526l16 5M723 528l10 1M700 527l-17 6M695 527l-11 -11M722 529l14 0M720 529l9 3M695 529l-7 3M700 530l-17 15M696 530l-16 6M697 530l-17 -8M718 532l13 12M723 532l4 -12M700 532l-17 -7M717 534l11 -11M722 534l8 -13M699 533l-13 -16M697 535l-11 1M718 535l17 -12M724 535l10 -10M723 537l8 1M696 536l-9 -2M720 537l7 -3M697 538l-15 4M724 538l7 -10M695 538l-10 -0M696 539l-9 11M719 539l17 -8M697 539l-14 5M719 541l18 4M720 541l10 2M718 541l17 11M694 542l-9 3M699 542l-15 10M694 542l-3 -10M696 544l-5 -7M721 544l14 -1M717 544l11 2M723 545l2 -11M721 545l8 14M720 545l7 -7M696 547l-11 -11M720 547l4 11M698 547l-15 0M718 548l16 -10M719 548l19 -1M698 548l-17 9M694 550l-6 2M724 550l4 8M721 550l10 1M696 551l-15 9M695 551l-10 8M720 551l13 -13M696 553l-13 -3M717 552l11 -6M723 552l6 -10M718 554l11 6M699 554l-11 -1M696 554l-11 1M723 555l13 -2M719 555l16 12M695 556l-10 6M699 557l-8 10M695 557l-6 -8M718 557l16 -12M695 558l-15 -3M697 558l-8 -12M722 558l13 7M719 560l14 -10M699 560l-10 9M695 560l-10 5M720 561l10 3M721 561l10 -9M720 561l13 14M720 562l13 -1M697 563l-12 -2M697 563l-15 -2M720 564l15 2M696 564l-12 9M700 564l-13 3M723 565l12 -11M701 565l-7 11M724 565l6 -9M717 567l16 7M696 567l-11 4M720 566l17 -8M717 568l10 8M700 568l-16 -12M697 568l-6 -9M718 569l8 9M701 570l-15 3M698 570l-8 1M700 571l-11 -12M719 571l9 8M699 571l-11 -11M720 572l14 -13M722 572l7 11M696 573l-13 -14M697 574l-9 -7M698 574l-13 4M695 574l-6 2M719 575l9 5M718 575l17 10M698 575l-10 7M721 576l9 -14M718 576l11 -9M720 576l15 -10M718 577l21 4M718 578l13 -7M720 577l13 -1M698 580l-5 -11M724 579l7 -14M720 579l15 0M696 581l-13 0M721 580l10 13M699 581l-11 14M695 583l-3 -11M699 582l-9 -12M721 582l11 4M701 584l-18 2M723 583l14 -0M721 583l12 13M699 585l-17 9M697 585l-8 15M720 584l17 -10M698 587l-9 -9M720 586l9 -9M701 587l-20 2M696 588l-9 8M721 587l7 -11M723 587l14 -6M698 590l-7 11M724 588l7 1M699 590l-17 2M718 590l12 -2M699 591l-15 -3M696 591l-6 3M719 592l11 1M720 591l10 13M723 591l5 -3M695 594l-11 6M720 593l15 -14M722 593l18 -1M721 594l15 -0M698 595l-9 -3M696 595l-16 -5M701 597l-10 -3M720 596l16 -6M724 596l5 -13M723 597l14 5M695 598l-7 3M697 598l-15 -3M700 600l-13 -10M724 598l11 13M725 598l14 -3M701 601l-10 0M725 600l3 -9M722 600l17 -5M702 602l-10 2M702 602l-15 16M722 601l11 -2M698 604l-5 9M702 604l-20 -4M724 603l5 6M724 604l8 -14M722 604l6 -6M724 604l11 -15M723 605l9 -12M722 605l13 2M720 606l13 -8M700 608l-7 -10M699 608l-8 2M721 607l10 -9M697 610l-14 8M722 608l17 -9M724 608l13 2M724 609l6 9M721 610l12 9M697 611l-12 -0M722 611l12 -12M725 611l14 -5M726 611l13 7M722 612l14 5M697 614l-12 6M699 614l-11 5M697 616l-10 -2M698 615l-13 10M722 614l4 -11M702 617l-18 0M697 617l-9 9M701 617l-10 2M723 616l11 -3M700 618l-15 3M700 618l-15 9M697 620l-12 13M721 618l7 -9M700 620l-14 1M723 619l16 9M725 619l12 15M698 621l-14 7M702 622l-15 -2M724 620l11 -1M724 620l13 10M721 622l17 -4M722 622l17 -7M700 624l-12 -3M700 625l-10 17M703 625l-15 2M723 623l10 -6M703 626l-12 8M722 625l11 12M725 624l14 3M704 628l-15 11M723 626l9 1M721 626l16 -14M704 629l-18 4M721 627l11 -1M699 629l-11 -8M721 629l19 6M721 629l9 -9M704 630l-15 17M698 632l-2 9M727 629l8 -7M703 632l-16 -12M702 633l-17 6M727 631l12 14M704 633l-18 6M704 634l-17 -6M700 635l-8 9M726 632l12 -1M702 636l-6 13M727 633l7 -6M725 634l7 -13M724 635l16 -5M699 638l-12 -2M701 637l-16 2M723 636l11 -8M703 638l-17 -14M705 638l-19 -7M721 638l10 -5M703 640l-14 12M699 640l-9 17M723 639l17 1M699 642l-3 10M705 641l-13 14M724 640l17 11M704 642l-12 -12M700 643l-12 -5M724 641l19 3M728 641l5 12M727 641l14 4M729 642l4 -5M701 645l-6 4M729 642l12 5M727 643l14 -1M725 644l16 11M728 643l15 -2M723 645l14 -9M725 645l16 -2M702 648l-3 12M700 649l-9 14M729 645l5 -8M724 646l10 -8M704 650l-13 10M702 650l-17 -6M727 647l17 8M723 648l19 -0M701 652l-6 13M727 648l5 -12M701 653l-6 -0M727 649l6 -4M705 652l-18 -9M706 653l-17 -10M730 650l6 10M700 654l-7 10M728 651l7 -4M705 655l-6 11M704 655l-11 -11M726 653l13 -9M706 656l-12 4M727 652l13 -7M726 654l16 -7M725 654l8 -9M703 658l-14 -9M707 658l-21 -5M708 658l-15 8M702 659l-7 2M729 655l14 5M705 660l-4 12M727 656l6 -11M729 656l9 -8M730 656l8 -9M705 661l-10 12M727 658l18 -6M729 657l5 -15M728 658l7 7M728 659l6 -15M728 659l10 1M725 659l12 -0M729 659l5 -16M727 660l8 -10M730 659l8 -10M731 660l5 1M709 664l-12 15M729 661l12 -14M731 661l11 8M729 662l14 -9M708 666l-17 -11M726 663l7 -9M728 663l14 8M730 662l4 -7M726 664l15 5M707 668l-9 12M709 668l-17 -7M707 669l-11 15M729 665l18 1M729 664l6 -16M708 670l-11 -10M729 666l7 -13M728 666l15 -13M710 671l-11 10M727 668l17 4M707 672l-9 2M733 667l15 4M706 674l-13 2M733 667l13 -9M732 669l12 7M705 675l-11 -3M711 674l-17 -5M707 676l-7 -2M707 676l-7 -10M728 671l11 -10M731 671l8 8M710 677l-14 15M731 672l13 -8M706 679l-6 3M708 679l-8 -2M730 673l10 -18M734 673l5 -13M708 680l-17 0M730 674l16 3M711 680l-8 13M709 681l-9 5M731 675l7 -10M732 676l8 3M728 677l16 5M734 675l4 -10M712 683l-17 10M710 684l-7 15M732 677l15 0M713 684l-16 -6M735 677l7 -7M735 677l8 8M710 686l-7 1M714 685l-11 0M729 680l9 -17M714 686l-16 1M736 679l8 -14M734 680l13 -8M713 688l-18 -5M733 681l8 2M733 681l9 1M733 682l2 -11M733 683l8 -4M710 690l-6 -1M711 691l-7 7M713 690l-12 9M733 684l9 -18M711 692l-7 6M734 684l9 -11M734 684l15 3M735 685l5 -18M712 693l-13 -11M735 685l1 -11M736 686l3 -16M716 693l-21 -1M738 685l8 -8M737 687l13 0M735 687l7 -12M713 695l-13 -6M716 696l-11 10M738 687l5 -18M712 697l-9 0M734 690l12 -16M715 697l-16 -4M715 697l-4 13M734 691l20 9M713 699l-4 19M714 699l-7 8M714 700l-4 11M735 691l17 -10M713 701l-14 -6M737 692l15 -8M718 700l-10 8M713 702l-2 10M716 702l-6 3M719 700l-22 -2M719 700l-13 10M737 694l14 -8M720 701l-12 -1M738 694l17 10M719 703l-16 11M741 693l3 -5M714 705l-7 -10M718 705l-12 12M742 694l-1 -9M719 704l-11 1M716 707l-7 -8M740 696l9 -15M738 697l7 -20M742 696l3 -18M720 706l-15 8M741 696l13 -4M722 707l-6 10M719 708l-7 10M717 709l-5 14M719 710l-10 11M717 710l-7 2M722 708l-9 11M717 711l-4 10M739 701l13 -11M739 701l6 -11M739 702l10 -6M743 700l16 4M722 710l-13 13M745 700l14 7M742 701l3 -11M744 700l2 -7M741 703l19 -6M720 714l-15 3M720 714l-11 -7M723 714l-3 10M725 713l-4 13M723 714l-11 0M724 715l-13 13M740 706l12 -18M741 705l8 -10M721 718l1 12M742 706l18 -4M722 717l-14 -7M726 716l-11 2M747 704l6 -10M727 716l-20 2M744 707l14 -0M724 719l-4 16M742 708l21 -3M743 709l5 -18M746 707l-1 -13M744 708l3 -18M745 709l8 -11M727 720l-11 5M748 707l2 -11M729 720l-15 3M749 708l15 3M748 708l1 -10M727 723l-15 8M728 722l-18 0M727 722l-8 10M729 723l-7 15M745 713l13 -7M748 711l2 -12M747 713l9 -15M747 713l18 5M729 724l-15 3M747 715l11 -5M728 726l-16 3M727 727l-11 9M728 728l-9 5M731 726l-10 14M748 715l2 -12M749 716l4 -9M752 714l1 -8M748 717l16 3M734 727l-18 5M750 717l12 -1M752 715l17 4M753 716l4 -4M732 730l-18 0M752 717l1 -17M752 718l6 -14M733 731l-6 7M730 733l-3 7M750 721l19 -1M750 720l18 -10M754 718l13 -9M736 732l-1 17M735 733l-7 11M754 719l5 -8M754 721l9 -8M735 734l-6 19M734 735l-18 -5M756 721l7 -13M737 735l-9 16M734 737l2 12M736 737l-3 7M738 735l-10 12M738 736l-4 8M754 725l19 -7M739 736l-10 5M758 722l10 7M757 724l-3 -12M754 727l6 -19M737 740l-12 -4M737 741l1 18M741 738l-17 -1M757 726l7 -9M759 726l17 -6M741 740l-14 11M739 741l-3 14M757 729l13 -3M743 740l-14 -2M761 725l2 -10M741 743l-7 10M742 742l-10 9M741 743l3 13M758 731l6 -18M741 745l-14 -5M759 730l14 2M760 731l5 -20M744 744l-10 -2M743 745l-17 0M762 731l5 -9M746 744l-2 22M744 746l-18 3M764 730l14 -0M745 747l-15 -1M763 731l-3 -14M762 734l10 -8M761 734l-1 -14M747 747l-3 21M765 732l10 -13M746 750l3 15M745 751l-7 -0M747 751l3 13M764 734l17 0M764 734l14 -8M764 736l-1 -16M766 734l9 5M750 749l-20 2M749 752l-8 7M751 750l-7 7M749 752l-7 8M769 734l3 -11M765 738l2 -18M750 753l-12 7M752 752l-7 6M750 754l-11 -1M751 754l-5 6M769 737l18 0M770 736l10 -0M750 757l-13 -2M753 755l-2 11M754 755l-3 13M752 757l-6 5M755 755l1 15M769 739l-2 -16M756 754l-13 -2M755 757l2 13M770 739l2 -10M768 741l0 -13M771 739l-5 -18M772 738l12 -5M768 742l2 -12M769 743l-3 -17M756 760l-4 6M757 759l-8 3M759 758l-16 4M770 743l13 -6M773 739l1 -15M771 744l12 -6M759 762l-5 9M760 759l1 18M762 759l4 18M774 740l10 -8M760 762l-2 8M774 741l6 -11M775 741l-5 -10M774 742l11 -7M774 743l8 -14M774 744l16 -8M764 762l1 13M775 742l8 -12M775 741l13 -0M775 742l13 -1M774 745l5 -16M765 767l-7 13M765 767l8 16M769 763l-7 12M777 740l-1 -12M776 742l2 -16M770 766l12 15M776 743l-4 -8M776 742l-11 -12M777 743l1 -16M776 744l7 -13M776 746l-10 -11M777 743l-8 -8M778 740l-8 -13M778 741l11 -9M778 744l-6 -10M775 763l10 18M775 766l-12 10M778 743l-7 -14M777 768l-3 17M778 740l-7 -5M778 769l2 9M778 767l10 6M778 770l10 12M779 744l4 -16M780 768l-5 8M780 766l5 11M782 766l13 12M782 769l-15 11M782 768l-7 7M780 743l3 -16M780 744l-15 -7M783 766l-3 16M786 768l-7 6M780 741l6 -16M786 768l-3 14M780 740l-15 -2M787 765l-4 17M787 765l1 13M781 740l4 -9M782 744l-10 -8M781 740l-4 -14M782 741l-14 -12M789 762l-3 16M790 764l-1 17M782 741l-5 -10M782 740l3 -11M791 764l16 9M792 762l11 5M792 761l10 11M784 743l6 -9M795 764l-5 18M785 743l-14 -5M795 765l5 9M797 765l13 1M795 761l-4 17M785 742l3 -10M797 762l9 15M785 739l-15 -8M785 740l-8 -2M787 743l-4 -10M797 759l-1 15M796 758l1 20M786 739l-15 0M788 741l-11 -4M788 742l-7 -9M798 757l1 20M788 740l0 -16M801 761l13 5M789 740l4 -10M790 741l3 -20M801 759l14 5M801 757l14 5M804 760l6 13M788 737l-5 -10M803 757l6 11M805 760l2 13M802 756l10 4M803 754l15 2M789 736l-6 -5M805 758l17 6M793 740l-9 -13M793 740l0 -14M807 758l-6 9M807 756l17 3M790 735l-10 -11M791 735l-14 -4M792 735l-11 -3M793 737l-7 -11M807 754l1 14M809 754l17 1M807 752l22 1M808 752l-1 21M811 754l-3 15M794 734l-17 -6M810 753l17 -0M811 752l1 14M809 750l13 13M812 753l7 -1M798 736l-13 -0M814 753l3 5M797 735l-5 -16M797 733l-9 -13M798 735l1 -12M798 734l-8 -15M796 730l-9 -8M814 750l15 4M815 751l3 16M814 748l10 10M797 730l-15 -5M812 746l-0 16M816 747l-2 15M813 745l20 3M799 731l-19 -5M800 731l-18 -3M799 729l-15 -6M800 730l1 -15M818 745l5 7M803 731l-13 -1M819 746l17 2M801 729l-8 -3M819 745l16 0M803 730l-8 -12M819 743l10 2M802 728l1 -10M802 729l-3 -18M804 728l-12 3M802 727l-10 -11M800 725l-10 -1M822 743l9 5M800 725l-13 7M821 742l19 -4M820 739l13 5M820 740l12 11M822 741l14 11M802 724l-4 -5M803 724l-12 7M824 741l9 2M825 740l13 -6M825 740l8 12M825 740l8 -6M822 736l14 6M825 739l17 -2M824 738l2 11M807 724l-1 -14M804 721l-3 -7M823 736l14 -1M826 736l-1 13M807 723l-9 -5M825 735l4 13M807 721l-9 -10M804 719l-5 -6M807 721l-11 -5M808 720l-16 -7M807 720l-11 -12M808 720l-8 -4M810 720l-8 -5M828 733l17 -5M828 733l10 -1M808 718l-0 -14M810 719l-9 -12M829 732l15 -5M808 716l-10 -8M812 719l-10 -14M826 729l4 17M832 731l1 14M812 718l-14 -6M812 718l-19 -6M833 730l16 -9M810 715l-12 -2M813 717l-21 3M814 716l-7 -18M829 726l17 4M831 727l10 5M815 715l-15 -7M831 725l17 5M811 713l-3 -16M813 713l-14 -6M830 723l16 4M831 724l15 2M812 711l-19 5M833 723l18 2M830 722l20 -5M834 723l6 12M812 710l-16 -2M835 723l8 15M833 720l12 16M816 710l-7 -11M837 723l14 6M838 722l-0 9M836 720l3 15M817 710l-10 -19M815 707l-11 7M816 708l-7 -16M838 720l-3 10M837 718l6 7M817 707l-17 -0M818 707l-16 -9M818 706l-8 -9M818 706l-13 -3M814 704l-10 -6M816 703l-0 -14M838 715l14 -2M820 706l-13 5M821 705l-22 7M840 715l10 2M818 703l-10 -6M839 714l15 1M816 701l-15 -3M838 713l5 10M837 711l2 12M817 701l-13 5M838 712l3 16M822 702l-5 -18M842 713l4 10M841 712l9 -5M819 699l-16 6M837 709l7 16M837 709l14 1M838 708l19 1M819 698l-15 -6M817 697l2 -11M839 708l7 16M843 710l10 -5M818 697l-0 -10M839 706l14 -4M842 708l9 11M823 698l-7 -18M824 697l-5 -17M821 696l-16 4M841 706l20 -1M825 697l-18 5M821 695l-15 1M841 705l21 -4M840 703l20 0M844 705l13 2M844 705l4 11M845 704l13 2M845 705l7 -1M821 693l-12 9M844 703l11 -8M843 702l11 -7M826 694l-7 -20M824 692l-15 0M842 700l12 -3M843 701l9 6M848 702l6 10M823 691l-18 4M844 700l5 10M822 689l-10 10M827 691l-10 -8M848 701l5 11M827 690l-8 -14M844 698l19 -4M824 689l-3 -16M849 699l13 -8M826 688l-9 1M824 688l-7 -10M828 688l-10 -4M845 696l20 -2M845 696l18 -2M845 695l7 10M825 686l-9 -2M824 685l-12 -4M828 686l-3 -11M847 695l5 14M851 696l-1 12M824 683l-6 -13M826 684l-6 -4M845 693l21 -5M829 684l-12 1M849 693l3 8M831 685l-10 -15M846 691l12 12M848 692l4 13M849 692l11 1M826 681l-10 0M849 691l12 4M847 690l12 0M847 689l13 1M849 690l14 -5M848 689l20 -5M832 681l-20 -6M850 689l10 -4M850 689l13 9M828 679l-8 -12M851 688l14 4M832 680l-18 3M849 686l8 9M827 677l1 -14M853 688l9 -4M855 687l3 15M829 677l-17 9M851 686l2 13M851 685l6 19M855 686l4 13M830 676l-13 -0M849 683l14 -2M855 685l10 14M830 675l-5 -16M850 682l13 10M832 675l-9 -1M834 676l-15 -4M833 674l-8 -18M850 681l14 17M832 674l-15 -8M851 680l9 16M835 674l-16 7M829 672l-12 -8M832 672l-7 -15M852 679l14 15M835 673l-18 8M833 671l-11 -14M851 678l14 3M857 680l9 13M831 669l-8 -11M852 677l14 12M835 671l-14 -11M832 669l-5 -17M834 669l-15 -0M836 670l-19 6M834 668l-7 -14M832 667l-17 1M831 667l-1 -15M833 667l-6 -9M858 675l15 -5M857 675l10 13M835 666l-16 -8M833 666l-10 1M854 673l16 1M837 666l-5 -15M860 673l11 -12M838 666l-15 2M837 664l-3 -11M860 672l7 -4M858 672l7 8M855 669l10 5M860 671l5 15M854 669l15 6M834 661l-6 -10M857 669l15 14M856 669l11 -1M836 661l-12 -2M836 661l-8 6M856 667l7 12M835 659l-6 -9M861 668l13 -1M837 660l-15 -2M840 660l-15 -13M839 659l-12 9M837 659l-4 -9M859 665l16 -6M857 664l4 14M836 657l-13 1M858 663l15 -7M835 656l-15 7M840 657l-21 -0M858 662l6 14M838 656l-13 5M838 656l-8 4M862 662l7 15M836 654l-15 7M835 654l1 -11M858 660l16 -10M863 661l5 -7M838 654l-11 -9M863 660l8 -1M841 653l-9 -11M859 658l14 -3M859 657l17 10M864 659l8 10M864 659l13 5M838 650l-10 -15M863 657l5 10M839 650l-8 -5M864 656l6 4M839 649l-12 9M865 657l9 -9M842 649l-10 -13M843 649l-12 -6M842 649l-17 -1M864 654l13 2M860 653l17 11M865 654l3 12M862 652l3 12M841 646l-8 -16M865 653l2 14M843 646l-13 1M865 652l8 -0M862 651l15 10M841 644l-9 2M841 644l-11 -16M862 650l13 1M866 650l4 16M862 649l19 -9M839 642l-8 5M866 648l15 -0M844 642l-17 -5M841 641l-5 -10M866 647l5 16M842 641l-8 -5M841 640l-9 -9M867 646l6 7M864 645l13 4M861 645l12 -4M843 639l-4 -13M840 637l-6 -7M866 645l5 14M867 644l8 7M867 644l10 -4M862 642l19 -9M867 643l9 9M863 641l10 7M865 642l12 -3M845 635l-7 -12M841 634l-3 -15M868 642l5 12M847 635l-10 -7M843 634l-9 2M841 633l-4 -2M867 639l7 6M868 639l15 -12M845 633l-15 -5M866 637l10 17M848 632l-10 -6M869 638l8 0M846 631l-12 -11M846 631l-8 -17M869 637l12 -4M845 629l-7 -13M868 636l8 -0M869 636l12 -4M866 634l11 -8M865 633l16 7M849 629l-12 -11M867 633l13 -7M849 628l-20 -1M867 633l9 -8M869 632l10 -7M868 632l10 18M848 626l-10 -4M867 630l11 5M866 630l15 1M869 631l15 4M869 630l6 16M848 624l-11 -10M870 630l4 8M872 629l4 14M846 622l-9 8M870 629l6 17M872 628l5 18M847 621l-7 -13M848 622l-11 -8M872 627l6 -3M872 627l5 16M848 621l-12 4M869 625l16 -2M845 618l-11 1M847 619l-16 6M850 619l-5 -11M868 624l4 12M874 625l9 6M850 617l-8 -15M852 618l-18 -5M850 617l-14 4M848 616l-11 -11M868 621l15 7M846 615l-4 -4M848 614l-9 -1M873 621l7 14M873 621l11 -10M869 619l19 9M849 614l-8 -5M873 620l11 6M849 612l-5 -8M848 612l-6 -7M848 612l-14 -6M875 618l4 8M874 618l7 -8M869 617l11 8M872 616l11 17M873 617l14 5M847 609l-11 0M848 608l-7 -11M854 610l-10 -16M873 616l11 10M848 607l-5 9M851 608l-4 -12M849 607l-10 -8M875 614l12 -3M849 606l-8 9M848 606l-6 11M873 612l14 -3M850 605l-7 4M874 612l12 4M872 611l11 -8M851 605l-11 9M855 606l-12 -6M853 604l-11 -11M854 604l-6 -14M851 603l-7 10M872 608l17 -6M872 608l15 -4M852 602l-10 -1M853 602l-8 -17M878 609l6 12M850 601l-9 -9M876 607l9 9M852 600l-12 3M856 601l-20 10M877 606l12 -10M853 599l-9 1M856 600l-16 -1M855 598l-6 -10M852 597l-4 -13M851 597l-16 2M877 604l12 -3M853 597l-12 -4M874 603l16 10M857 597l-5 -11M879 603l14 4M879 603l8 4M857 596l-20 -2M875 601l17 -2M874 601l12 5M856 594l-13 9M853 593l-9 7M853 593l-15 6M877 599l10 -5M875 598l16 4M852 592l-14 8M875 597l13 -7M880 599l13 -5M855 591l-9 -9M854 590l-7 -13M879 597l10 10M858 591l-13 4M854 589l-13 5M876 595l11 5M875 595l21 -3M858 589l-16 -8M856 588l-10 -10M856 588l-6 -17M859 588l-12 -2M855 586l-9 -14M882 595l5 9M877 592l7 12M858 586l-11 10M883 594l8 11M859 585l-11 -2M856 584l-3 -14M857 585l-15 -6M861 585l-12 3M862 585l-12 -11M862 585l-20 2M858 582l-8 -12M858 583l-12 -12M856 582l-6 -10M858 581l-13 2M860 582l-11 5M857 581l-8 -15M881 587l12 -5M879 587l17 -8M884 588l2 16M861 580l-11 9M879 585l8 12M862 580l-14 -9M883 585l12 -11M882 585l6 17M885 586l3 11M863 578l-12 -10M862 578l-10 7M884 584l16 -10M883 583l8 15M860 576l-13 -3M858 576l-5 -5M880 581l21 1M883 582l12 12M881 581l11 16M863 575l-13 2M861 574l-17 -0M861 574l-8 -8M862 573l-18 4M861 573l-0 -11M865 574l-17 3M865 573l-12 4M883 578l18 -12M884 578l8 3M883 577l7 13M881 576l13 -3M885 577l5 14M882 575l10 15M862 570l-12 -5M865 571l-12 -19M864 569l-13 -6M861 568l-14 -4M884 575l12 -7M884 574l18 -7M888 575l13 -6M883 573l19 -6M862 566l-13 -5M886 573l9 -9M862 566l-6 -1M886 572l14 -1M889 572l7 -2M864 565l-13 8M888 571l11 11M863 564l-13 4M864 564l-16 -3M884 569l10 15M884 569l19 5M862 563l-4 -7M862 562l-13 -0M885 568l12 -7M866 563l-7 -9M889 568l14 -2M888 567l8 -6M890 568l9 -8M891 567l3 5M888 566l3 11M866 560l-10 -6M889 565l6 7M863 558l-7 -2M889 565l10 -3M891 564l12 -2M869 559l-8 -16M866 558l-7 -17M864 556l-7 0M868 557l-13 -3M869 558l-19 10M891 562l8 3M887 561l10 -4M888 561l20 -0M890 561l13 2M887 560l20 1M867 555l-11 0M867 554l-6 -14M890 559l11 12M864 553l-12 5M892 559l12 -4M866 552l-16 1M887 558l7 11M891 557l11 -3M887 556l16 2M866 551l-1 -11M867 550l-12 -1M892 556l7 -5M893 557l13 9M889 554l10 12M870 550l-10 10M868 550l-8 -18M892 554l7 4M893 554l8 -7M888 553l13 8M869 547l-12 11M870 548l-18 6M869 547l-10 -2M889 551l7 11M869 546l-17 -4M871 547l-14 -11M890 550l16 2M868 545l-15 2M890 550l19 -6M888 548l14 13M890 549l16 7M867 544l-9 -4M870 543l-10 1M869 543l-16 -5M895 548l7 3M892 547l14 11M870 542l-16 -8M870 542l-8 -1M889 545l11 -1M890 545l15 -8M870 541l-17 11M867 539l-9 13M870 540l-7 -16M893 545l11 -8M872 539l-19 -1M867 538l-4 8M872 539l-8 -12M896 543l9 -0M868 538l-11 -1M891 542l14 0M892 541l8 10M870 537l-9 6M894 541l7 -10M891 539l10 13M893 540l13 5M892 540l13 -7M895 539l7 15M896 539l7 -11M895 539l7 -7M893 537l8 11M872 534l-15 -5M891 537l12 14M872 533l-7 -6M874 533l-15 -16M869 532l-5 -14M897 536l5 -2M875 532l-20 9M892 535l16 -3M873 531l-10 5M898 534l13 -12M895 534l8 -7M874 530l-17 9M875 530l-19 -6M894 533l12 -3M897 532l8 -10M870 528l-16 1M871 528l-5 -9M871 527l-12 -2M898 531l11 -9M875 527l-16 -9M874 526l-18 1M896 529l5 12M872 526l-17 -6M897 528l11 4M870 524l-6 6M892 527l12 -3M873 524l-12 6M874 524l-10 -12M896 527l7 1M871 522l-13 10M892 525l12 5M897 525l12 -4M898 524l16 -8M893 524l16 6M898 524l6 7M875 520l-7 -10M870 520l-12 10M897 523l11 8M894 521l10 4M899 522l11 10M870 518l-11 14M895 520l16 -3M875 518l-10 -14M875 518l-10 -4M875 516l-14 12M899 519l10 0M876 517l-16 -8M874 515l-13 4M876 515l-9 -10M874 515l-16 -10M899 516l7 16M877 514l-14 -0M877 514l-13 -7M895 515l18 3M876 513l-13 -1M895 515l9 9M873 511l-6 2M872 511l-12 -12M874 511l-7 8M872 510l-7 8M898 512l12 -14M871 510l-8 7M873 509l-9 -1M897 511l15 -10M898 511l14 -11M901 510l9 6M897 510l15 -4M872 507l-4 8M875 507l-19 -1M897 508l12 2M901 509l11 8M878 506l-21 -3M900 507l14 5M877 505l-14 -13M897 506l9 -6M897 506l11 10M899 506l8 4M872 503l-4 9M874 503l-11 -5M872 503l-11 6M896 503l15 5M897 503l18 8M876 502l-9 -9M900 502l15 5M878 501l-13 2M898 502l14 2M900 501l14 5M900 501l8 8M875 499l-15 -11M895 499l18 4M875 498l-11 11M879 498l-18 9M895 498l21 2M879 497l-21 5M872 497l-12 9M897 497l15 -0M875 496l-8 3M874 495l-8 -14M878 495l-11 -8M877 494l-15 11M900 496l11 9M898 495l12 8M878 493l-17 11M874 493l-14 -10M897 494l18 7M900 494l11 -14M874 492l-7 12M876 491l-7 -10M899 493l15 1M875 491l-10 14M875 490l-14 -8M873 490l-7 1M900 491l13 -15M898 490l6 -10M876 489l-15 14M874 489l-5 -10M877 488l-8 5M878 488l-10 -3M876 488l-17 -2M898 488l12 -0M878 487l-20 3M876 486l-8 -2M902 487l13 -10M876 485l-17 -8M878 485l-8 10M896 486l14 13M874 484l-15 -0M877 484l-14 6M873 483l-10 13M901 485l10 -9M874 483l-12 7M899 484l12 11M901 484l8 15M897 484l14 -7M900 483l11 12M878 481l-10 -4M879 481l-11 -12M898 482l15 -2M878 480l-10 -12M899 482l11 7M874 479l-14 3M873 479l-10 9M878 479l-17 11M877 478l-9 4M899 479l11 -5M897 479l9 -10M877 476l-11 -6M899 478l9 -10M902 478l5 -6M874 475l-14 6M878 475l-11 -15M876 475l-9 -10M877 474l-12 0M875 474l-16 -1M875 474l-15 6M878 473l-16 -1M876 473l-10 -11M875 473l-6 9M875 472l-10 10M900 473l16 -1M876 472l-6 -2M877 471l-11 8M879 471l-8 -6M903 473l6 -0M899 471l10 1M899 471l7 9M899 471l10 -3M897 470l9 11M899 470l10 -5M877 468l-15 -9M900 469l9 -0M903 469l8 17M880 467l-10 -5M876 466l-13 2M878 466l-13 8M904 468l7 6M762 237l18 -4M741 229l-6 -5M756 228l4 -11M760 232l12 -10M750 229l-4 -18M750 231l-4 -13M749 231l-7 -18M742 236l-12 -3M751 228l-1 -14M757 228l6 -13M744 229l-9 -11M739 232l-10 -5M747 231l-8 -12M754 230l2 -11M756 229l6 -18M761 236l15 -6M761 229l8 -9M761 237l14 -4M751 229l-2 -13M760 229l5 -6M761 232l14 -11M766 239l15 0M896 457l6 -7M887 459l-5 -18M883 456l-4 -8M885 454l-4 -14M883 456l-5 -9M895 460l8 -9M895 458l9 -16M892 454l3 -14M898 461l16 -9M876 463l-15 -5M886 455l-4 -16M901 465l11 -2M895 458l8 -11M899 463l15 -6M895 461l15 -14M877 459l-7 -5M876 462l-12 -5M889 459l-0 -14M891 459l3 -15M890 454l1 -7M900 467l8 -0M902 461l8 -4" stroke="#bdbdbd" stroke-width="0.9" opacity="0.7"></path>
<path d="M745 237l-18 -1M758 240l13 -7M743 238l-15 2M743 238l-14 5M742 239l-3 -7M745 240l-14 -15M742 240l-19 -3M740 240l-8 6M742 241l-11 -9M742 241l-10 -6M741 242l-7 7M762 247l10 14M739 243l-9 5M742 244l-15 -13M742 245l-16 -0M743 245l-19 -7M739 245l-6 7M744 246l-11 1M740 247l-17 9M739 246l-3 -7M737 247l-14 3M745 249l-9 -9M754 252l15 -8M757 253l20 2M738 250l-14 7M760 254l7 -5M754 254l10 15M756 255l14 -2M760 257l3 6M739 252l-8 -3M741 254l-13 7M759 258l10 6M757 259l17 -10M759 259l7 15M741 256l-17 -10M744 257l-20 2M740 257l-15 10M742 258l-15 1M753 262l13 -8M736 258l-12 -4M752 263l19 -6M754 263l17 -11M740 261l-9 -5M742 262l-17 6M753 265l11 -4M734 261l-3 -13M754 267l10 -8M734 262l-11 0M757 268l8 16M755 268l5 8M754 269l5 11M756 269l12 -4M736 266l-9 -11M753 270l15 1M753 271l9 11M758 272l15 -8M757 273l12 4M756 272l12 -9M736 269l-10 9M751 272l15 6M740 271l-14 -4M757 275l7 9M738 272l-18 -11M733 271l-14 -5M733 272l-13 3M737 273l-14 -13M753 277l6 9M756 278l10 -7M748 277l21 9M739 276l-16 -13M751 279l15 13M751 279l6 13M732 276l-7 -6M752 281l14 10M747 281l8 10M738 279l-18 -8M733 279l-5 -8M748 282l21 -12M749 284l5 10M736 281l-11 5M735 282l-9 -11M747 285l17 -5M732 283l-14 -11M737 284l-19 7M733 284l-10 -11M748 287l11 -5M730 285l-5 4M729 285l-5 0M736 287l-11 -4M749 290l8 11M734 288l-11 -11M753 292l13 -2M746 292l11 -2M746 292l13 8M745 293l11 8M745 293l22 6M752 296l6 2M750 295l5 13M746 296l20 -7M729 292l-10 -1M733 294l-9 -3M748 297l12 11M749 299l13 6M751 299l1 8M734 297l-22 8M729 296l-13 11M732 298l-17 -3M743 300l10 9M728 299l-9 9M744 302l15 -10M749 304l14 -13M744 303l12 -2M749 305l7 2M749 305l5 8M748 306l10 7M746 306l10 -4M743 307l16 6M729 304l-14 -13M750 309l12 -6M731 306l-15 7M733 308l-18 -4M745 310l13 10M731 308l-17 -7M728 308l-10 -8M731 310l-21 8M745 313l17 -7M748 315l10 -5M727 311l-10 4M743 315l9 9M742 315l12 6M745 317l13 -1M724 313l-2 -6M740 318l11 5M745 319l5 10M728 317l-19 5M724 316l-13 4M724 317l-7 -6M723 317l-4 -9M746 322l9 8M729 319l-15 6M747 323l13 -13M722 319l-9 8M722 320l-8 5M743 324l7 -7M730 322l-13 -7M739 324l11 6M727 323l-11 -13M725 323l-9 3M746 328l4 -2M744 327l15 -9M727 325l-12 6M722 324l-2 -8M744 329l16 -11M725 326l-7 -9M742 330l8 7M740 330l12 -5M721 327l-1 -9M745 332l15 -6M727 330l-9 -11M727 329l-14 -0M724 330l-15 -6M725 330l-14 -12M745 335l16 -4M742 334l10 2M722 332l-10 -12M726 333l-14 2M744 337l4 7M727 334l-12 9M725 335l-11 -15M725 335l-9 -12M726 336l-16 7M728 336l-19 -6M741 340l15 -11M722 336l-13 7M744 341l3 5M744 341l7 10M720 338l-13 -1M724 339l-8 -5M726 341l-20 10M719 339l-10 -7M727 342l-17 -17M738 344l13 3M725 343l-7 -9M739 345l14 3M725 344l-11 7M719 343l-15 2M742 348l15 0M742 348l2 10M741 349l3 8M735 348l14 18M739 350l5 11M725 347l-11 7M739 351l7 -2M720 347l-5 -13M737 352l10 7M736 351l15 -10M721 350l-12 0M718 349l-9 6M724 352l-15 2M717 350l-9 -12M741 356l4 -4M734 354l19 -3M742 357l5 -5M740 357l13 11M740 358l13 7M725 355l-12 8M720 356l-15 8M739 359l9 2M721 357l-13 1M737 360l15 1M736 361l16 7M723 358l-13 -7M735 362l9 10M738 362l16 -9M715 359l-8 -0M734 363l19 7M739 365l4 2M737 364l11 -1M734 365l16 -1M715 362l-4 -3M714 363l-6 -15M718 363l-12 -0M720 365l-20 4M715 364l-11 -10M719 366l-19 1M733 368l10 -5M733 369l9 7M731 369l10 9M732 370l19 3M721 368l-19 7M720 369l-17 7M732 371l16 -4M738 373l5 -3M715 370l-11 -1M715 371l-16 10M736 374l11 -6M716 372l-11 -2M734 375l15 3M714 373l-12 6M732 376l12 -2M715 374l-12 3M730 377l15 -2M718 376l-11 -13M731 378l16 16M717 377l-8 -3M713 376l-6 -5M736 381l13 -2M718 378l-15 -5M720 379l-15 -4M716 379l-3 -9M717 380l-12 5M715 380l-17 2M733 384l6 12M712 380l-6 9M712 381l-9 -8M716 382l-7 -11M719 384l-16 9M719 384l-17 2M715 384l-8 3M711 383l-7 7M731 388l10 5M729 387l12 -2M730 389l16 -4M735 389l13 6M716 387l-11 1M717 388l-16 -7M711 388l-3 -9M734 391l9 -1M710 389l-13 -2M730 392l12 -4M711 390l-2 -11M728 392l11 -7M727 393l22 5M731 394l10 -5M735 396l8 13M732 395l9 11M712 393l-6 -11M713 394l-8 -13M734 399l6 9M728 397l20 6M730 399l16 8M734 400l4 -7M712 398l-10 5M715 398l-20 -3M732 403l14 5M731 402l2 9M711 401l-8 -8M715 401l-10 -3M727 404l12 -5M730 405l7 11M715 404l-12 8M713 404l-13 2M711 405l-16 10M708 404l-11 -13M727 409l14 -3M712 406l-14 3M729 410l11 11M724 409l17 -11M727 411l11 5M726 411l16 -6M707 409l-7 -11M712 410l-14 4M727 414l13 -9M730 414l8 -11M712 412l-19 -0M713 413l-19 6M723 415l21 7M724 416l9 10M727 417l10 9M726 417l19 -1M711 416l-16 -8M713 416l-13 2M713 417l-16 -3M726 419l10 16M728 421l8 -8M710 418l-10 -16M726 422l13 -6M711 419l-16 -3M725 423l10 5M727 423l8 0M707 421l-4 -4M707 421l-7 5M726 425l7 3M729 425l13 9M709 423l-9 -7M711 424l-13 -5M710 424l-7 -11M709 424l-15 1M711 426l-10 -3M724 428l13 16M726 429l3 10M708 426l-5 -10M706 427l-9 -9M707 427l-16 13M729 432l4 -7M723 431l10 5M707 430l-14 -9M710 430l-16 -1M727 434l4 -8M722 434l8 8M707 433l-11 6M710 433l-14 6M705 434l-16 -10M710 434l-17 -15M721 437l9 7M709 435l-14 -8M706 436l-19 2M710 437l-14 -8M705 437l-7 2M706 438l-9 7M723 441l16 11M708 439l-11 -11M720 442l14 13M702 439l-10 3M708 442l-12 8M718 443l16 3M721 445l10 -9M724 445l14 7M726 447l11 10M704 443l-11 -7M703 445l-9 -4M719 447l21 -6M724 449l7 13M726 449l12 -3M722 450l13 -0M709 448l-18 -1M702 448l-11 1M706 449l-9 7M726 453l7 15M720 452l15 6M725 454l13 -12M708 452l-12 -12M724 455l12 -1M722 455l7 -7M702 454l-10 -6M704 454l-8 5M706 455l-19 10M705 455l-9 0M706 457l-11 -3M725 459l6 15M702 458l-8 -13M705 458l-10 -3M722 461l11 10M708 459l-17 -1M703 460l-8 3M700 459l-3 -9M703 461l-13 -10M721 462l15 -13M701 462l-8 2M700 462l-9 -12M703 463l-8 7M703 463l-16 -11M704 464l-9 5M721 466l10 6M717 466l19 8M720 467l20 -1M721 468l9 -2M718 468l11 -5M700 467l-13 3M722 469l7 12M720 470l8 5M700 468l-15 -2M721 471l11 -5M717 471l19 4M724 472l5 11M721 472l16 -0M722 473l8 -11M722 473l15 -10M720 474l9 13M702 473l-14 14M706 475l-17 12M698 474l-6 -5M723 477l8 -12M716 477l19 11M699 477l-14 -0M724 478l7 3M707 478l-17 9M722 479l12 -11M717 480l9 -5M699 479l-12 11M723 482l9 12M700 481l-14 4M720 483l11 13M698 482l-4 -1M702 483l-15 6M703 483l-15 1M716 485l16 -8M703 485l-11 7M705 486l-15 -14M703 486l-18 6M698 487l-5 -10M717 488l7 8M714 489l13 -1M697 488l-12 -7M718 491l12 -9M714 491l21 9M698 491l-5 -3M719 492l10 -10M717 493l8 -6M706 493l-16 11M704 494l-14 5M703 494l-11 12M697 495l-13 6M718 496l16 7M705 497l-14 -11M722 498l8 -11M714 499l15 -1M718 499l15 -14M700 500l-8 0M704 500l-18 -6M722 502l4 -5M719 502l8 -0M720 503l11 14M714 503l11 7M716 505l13 9M715 504l16 7M703 505l-17 -5M715 506l17 -10M721 508l5 -1M718 507l18 -7M703 508l-11 -8M697 508l-11 -9M702 510l-13 1M701 510l-15 12M714 512l13 6M701 511l-12 -12M700 513l-10 -3M701 513l-13 1M702 514l-14 -0M699 514l-5 -10M718 516l18 -3M703 516l-11 -10M717 517l15 -9M704 517l-18 8M704 519l-14 -5M716 519l12 -12M705 520l-10 -9M722 520l5 6M702 522l-14 11M704 522l-22 -4M703 523l-16 2M717 523l11 -12M700 524l-11 10M718 525l5 9M715 526l16 16M717 526l10 -7M718 528l9 5M713 528l19 6M705 529l-14 -2M720 529l13 -11M700 530l-13 4M703 530l-14 -2M701 532l-10 9M713 532l18 -3M720 534l7 3M714 534l14 4M721 535l7 -2M714 535l11 -1M702 536l-19 5M714 536l20 12M701 538l-12 -10M714 538l14 -3M716 539l13 -9M697 539l-8 4M703 541l-10 -9M715 541l18 -11M721 542l3 10M719 542l10 -6M699 544l-15 12M704 544l-11 -10M702 545l-15 -13M721 545l6 -10M713 547l20 6M702 547l-20 -3M703 548l-20 9M717 548l18 -1M715 550l18 -4M702 550l-17 -13M704 551l-10 7M700 551l-11 3M698 553l-10 6M703 553l-19 14M700 554l-7 -5M697 554l-2 9M714 555l14 -1M698 556l-9 3M704 557l-22 2M699 557l-10 -6M717 558l12 1M713 558l10 -8M716 560l17 10M715 560l11 9M700 561l-12 -14M718 561l11 10M702 563l-14 -10M704 563l-14 13M701 564l-18 7M704 564l-13 5M697 566l-11 -0M720 565l15 -8M720 566l8 9M700 567l-12 8M720 568l14 5M699 568l-11 15M714 569l18 1M717 569l16 2M698 571l-13 7M699 571l-5 -4M719 572l16 5M698 573l-9 0M721 573l15 -1M715 573l17 9M697 575l-9 5M714 575l20 -2M697 577l-5 -2M699 577l-8 10M701 578l-14 -5M722 577l13 1M714 579l13 5M722 579l4 1M700 581l-8 10M718 580l15 5M722 582l8 12M716 582l19 -8M721 583l9 11M704 584l-18 12M699 585l-11 -11M697 585l-14 -10M715 586l17 -4M701 587l-12 14M720 587l11 10M717 587l14 -4M715 589l21 7M723 589l6 12M722 590l8 13M700 591l-7 -11M700 592l-10 -3M703 592l-11 13M721 593l11 -8M703 594l-18 -8M718 594l8 2M699 595l-8 -3M698 597l-4 -8M721 596l11 -5M699 598l-12 -13M719 597l13 -10M704 599l-14 2M722 598l9 -2M715 600l16 -11M697 601l-8 12M702 602l-11 -9M718 601l19 2M705 604l-20 -10M699 604l-8 -3M704 605l-13 9M716 604l15 3M706 606l-16 -3M700 607l-9 -7M706 608l-13 -8M720 607l11 0M702 609l-13 10M703 609l-13 -5M705 611l-10 11M723 610l15 8M719 611l17 8M706 612l-15 12M707 613l-22 10M715 613l15 1M698 615l-5 12M721 614l9 3M706 616l-13 -10M706 616l-21 -3M724 616l9 7M719 617l6 -9M723 618l13 13M717 618l11 1M705 621l-17 -3M717 620l21 -6M723 621l4 -5M700 622l-6 12M723 622l8 10M704 623l-15 5M716 624l12 -3M707 625l-16 -4M717 625l13 -4M702 626l-3 10M708 627l-19 -5M703 628l-12 9M717 628l13 -5M720 628l11 8M706 630l-15 11M719 629l12 -7M723 630l9 -11M702 632l-9 4M721 631l17 -3M704 633l-11 -6M700 635l-4 -10M701 635l-10 1M722 634l11 9M708 635l-21 8M719 635l13 1M709 637l-20 -1M701 639l-9 6M703 639l-14 -1M719 638l15 6M700 640l-4 9M701 641l-4 -6M717 639l13 -0M721 640l18 -2M718 641l16 -17M724 641l11 4M718 642l13 -12M703 645l-7 6M725 642l6 5M709 646l-21 4M725 643l6 1M721 645l12 -16M726 645l10 -4M721 646l6 -10M703 649l-2 7M727 647l4 -13M708 649l-19 -2M703 651l-4 6M722 649l20 -3M726 649l7 -12M706 652l-14 8M707 653l-15 12M728 650l12 1M723 652l10 -3M721 652l13 -17M728 652l7 6M728 652l5 -8M706 657l-13 -2M724 654l19 2M708 658l-10 -7M705 658l-16 -6M728 655l1 -9M727 656l13 -4M729 656l9 -7M707 660l-14 -9M712 661l-12 -8M728 658l9 3M710 662l-19 4M709 662l-19 1M711 663l-18 -5M728 660l13 11M724 662l10 -1M728 661l8 -13M710 665l-15 13M723 663l15 -4M724 664l15 1M711 666l-14 -3M727 664l18 1M709 668l-10 -10M722 666l11 7M722 666l12 -10M727 666l12 -16M709 670l-10 -9M708 672l-8 -7M714 670l-16 14M714 672l-20 -11M728 669l14 -5M712 674l-11 -3M725 671l9 -14M730 671l7 -8M730 671l2 -8M708 677l-5 16M728 672l11 2M730 673l14 4M724 675l22 -1M725 676l12 -4M726 675l21 -6M715 679l-15 -5M709 681l-15 -5M727 677l16 -12M716 680l-14 -7M728 678l8 -15M711 683l-14 2M710 685l-6 15M726 680l11 6M717 684l-8 10M712 685l-10 4M732 681l15 7M734 680l13 8M711 688l-15 3M717 687l-11 16M733 683l9 2M734 682l5 -8M734 683l16 8M714 690l-9 1M732 685l8 -19M718 690l-14 0M717 691l-9 -5M736 685l5 -17M734 686l15 -3M715 693l-7 15M712 696l-11 11M728 690l10 -8M733 689l17 -4M731 690l18 3M720 695l-11 1M735 690l15 2M737 690l16 10M730 692l13 -17M731 693l10 -17M732 693l16 2M733 693l8 -18M737 692l13 4M721 700l-19 -6M715 702l-10 8M724 700l-19 4M723 700l-11 8M722 702l-10 2M719 703l-12 9M740 695l16 9M722 703l-18 1M735 698l21 2M724 703l-15 -1M740 697l8 -12M740 697l4 -12M724 706l-19 -2M737 700l6 -19M735 702l10 -17M741 698l11 -5M721 709l-5 3M735 703l14 -1M726 708l-22 3M735 704l18 0M739 703l16 6M740 702l8 -4M740 703l9 -15M741 703l6 -3M729 711l-12 -0M739 705l18 -7M739 707l11 -5M725 714l-19 -5M726 715l-9 17M726 715l-10 5M723 718l-9 6M742 707l11 -8M741 709l7 -10M745 706l10 -1M730 717l-11 14M742 709l18 -4M746 708l8 3M746 708l16 2M729 720l-8 3M729 720l-12 11M742 713l19 -1M745 711l7 -9M730 722l-14 12M732 721l-3 14M728 725l-9 -5M729 724l-12 9M744 716l14 2M730 725l1 10M730 727l-7 9M729 727l-9 -3M733 726l-7 8M748 716l15 -9M737 725l-10 7M751 716l3 -18M751 717l9 -1M731 730l2 14M732 731l-3 13M734 730l1 12M734 732l0 15M735 731l-12 7M751 722l10 -6M737 732l-6 6M752 722l16 -1M752 722l14 3M749 726l15 -6M750 725l11 -9M741 734l-4 9M740 734l-4 19M755 725l9 -1M757 723l9 3M758 724l10 0M754 727l13 4M744 736l-22 8M743 737l-9 17M740 741l-7 -4M740 741l-17 3M759 727l3 -6M758 728l1 -18M744 741l-10 9M747 738l-8 21M759 730l-3 -10M745 742l-8 10M747 742l-4 10M758 732l8 -15M744 746l-0 16M760 732l13 -12M762 732l13 -2M760 733l9 -1M750 744l-18 8M749 745l-12 13M747 748l-9 3M751 745l-11 11M751 747l-12 13M751 746l-5 18M753 747l-17 12M761 739l9 -10M750 751l-11 10M749 752l-6 12M765 738l8 -11M750 753l-7 2M766 738l5 -17M754 751l1 12M767 738l8 -15M764 742l9 -14M756 752l-5 11M758 750l-0 14M769 739l15 2M756 754l-9 7M759 752l-16 10M754 758l-14 -1M769 742l10 -2M770 741l7 -15M758 757l-11 10M756 759l-15 6M770 743l18 -7M771 742l14 -0M772 742l-4 -12M771 744l1 -10M764 756l-19 12M763 758l-1 12M764 759l-19 7M773 744l-3 -16M774 744l2 -12M765 761l-8 15M775 742l11 -6M767 758l-4 10M775 743l-3 -8M769 758l-13 9M774 748l15 -11M774 748l14 -13M776 745l8 -11M770 765l-13 9M772 762l-6 13M772 763l4 18M776 750l-6 -16M776 748l11 -13M777 751l-3 -23M777 745l-4 -9M778 743l-8 -14M777 767l-1 5M778 765l11 6M778 749l2 -21M780 759l6 18M779 742l-10 -10M780 744l3 -7M780 748l7 -17M780 745l-11 -13M781 748l-2 -19M781 746l-8 -10M780 743l6 -7M783 750l-9 -20M782 748l-9 -9M782 745l3 -8M783 749l-16 -14M783 744l2 -7M783 745l8 -18M785 748l-9 -10M785 749l-12 -9M786 748l-10 -16M784 742l-1 -9M788 749l5 -19M794 762l-9 15M785 741l3 -15M795 761l-4 14M794 756l4 21M796 761l-7 17M794 755l8 10M789 745l-20 -9M788 742l1 -19M790 746l-6 -21M800 760l1 11M790 743l-0 -17M800 757l-5 8M792 745l-5 -12M802 758l9 1M793 744l-10 -21M789 738l-11 3M803 757l9 9M793 741l-0 -21M794 743l-1 -21M805 755l-1 8M793 739l-8 -4M793 738l-10 -3M804 752l0 11M808 754l5 9M806 752l2 19M793 735l1 -6M796 739l-5 -8M795 736l-12 -0M808 750l1 11M795 735l-16 -0M795 735l-10 0M801 739l-6 -10M811 750l0 13M809 746l9 12M797 734l-9 -4M813 749l1 7M799 734l-9 -0M797 731l-9 0M798 732l-3 -4M801 733l-11 -8M804 736l-19 -7M801 731l-5 -4M813 743l13 9M806 734l-17 -7M817 744l12 9M803 731l-7 -9M801 729l-5 -17M815 740l1 19M818 742l2 16M808 732l-8 -15M820 743l5 1M808 731l-17 -1M819 740l2 19M806 728l-10 0M822 741l8 14M823 740l16 -1M816 735l8 13M819 736l6 16M821 737l1 17M821 735l16 -2M805 723l-3 -2M822 735l4 9M811 727l-22 -3M821 732l10 4M806 722l-8 -4M826 735l9 3M806 721l-9 7M809 722l-18 -1M808 720l-5 -0M827 732l4 15M823 730l5 14M824 729l4 22M814 722l-12 -15M825 728l6 14M823 727l16 3M826 727l5 18M826 727l1 10M814 718l-15 -2M816 719l-14 -8M827 725l10 5M813 716l-12 -1M816 716l-15 -1M816 716l-11 -7M817 716l-10 -13M831 724l7 3M818 714l-19 -2M812 711l-17 4M833 722l5 2M813 710l-5 2M834 721l3 16M815 710l-12 -5M833 719l5 18M819 710l-11 -10M834 718l17 5M833 717l20 -7M832 715l8 18M820 708l-20 -0M822 708l-10 -18M834 715l19 -1M822 707l-15 3M834 713l2 13M819 704l-16 -4M836 713l5 14M820 703l-2 -13M840 714l9 2M838 712l14 4M836 711l6 6M825 704l-20 1M824 703l-12 -18M836 708l8 13M838 709l5 7M840 709l9 -1M823 700l-9 0M838 707l7 18M822 699l-7 3M826 700l-12 1M843 708l-0 6M823 697l-8 -15M826 698l-14 -8M826 697l-11 -7M838 704l12 12M841 704l8 2M825 696l-19 8M841 703l3 11M829 697l-7 -14M840 701l14 -4M830 696l-15 0M839 699l19 10M824 692l-12 -10M827 692l-8 1M826 692l-17 -2M844 699l9 1M825 690l-9 4M841 697l18 -5M826 690l-9 -3M846 698l7 12M844 697l10 14M827 688l-16 -2M825 687l-7 -8M841 693l15 -2M844 695l8 12M846 694l11 1M844 693l11 -2M827 685l-12 -3M842 691l17 -0M833 686l-14 -15M847 692l11 2M848 692l12 4M832 685l-5 -9M834 684l-21 -1M834 684l-12 -8M834 683l-20 4M832 682l-17 -3M828 680l-10 9M834 682l-10 -14M835 681l-17 -4M831 680l-6 -11M834 680l-4 -14M846 685l6 11M832 678l-14 -5M851 686l14 -9M850 684l13 -7M853 685l16 -3M830 675l-15 2M832 676l-17 -3M851 682l5 12M835 676l-20 -4M833 674l-11 -13M837 676l-11 2M850 680l11 4M839 675l-6 -13M839 674l-21 2M847 677l6 13M854 679l5 8M852 678l9 16M835 670l-10 -7M840 672l-11 -6M853 676l8 11M850 675l20 8M856 676l15 1M852 674l4 11M841 669l-17 6M857 675l15 -11M853 672l20 -1M839 667l-14 -5M838 666l-11 -1M852 671l12 12M855 670l11 7M850 669l15 -3M840 665l-19 -1M855 669l6 8M836 662l-13 -5M839 663l-13 -13M841 663l-9 -18M855 667l13 12M860 667l9 12M852 665l18 -3M855 664l14 12M858 665l7 5M841 659l-12 -17M856 664l19 -3M839 657l-5 -13M838 657l-16 3M860 662l9 7M860 662l7 5M858 661l7 10M840 655l-4 -12M843 655l-15 -6M841 654l-7 -5M838 652l-9 1M860 659l10 13M844 653l-10 -4M855 656l10 8M860 656l8 15M843 651l-10 7M845 651l-14 -2M847 651l-15 -19M861 654l7 14M859 654l17 6M859 652l13 3M841 647l-8 -0M847 648l-13 -15M843 647l-8 2M861 651l13 3M862 651l3 9M861 649l12 -8M845 645l-10 -2M841 643l-9 -3M845 644l-20 -1M844 642l-7 4M859 646l17 12M848 642l-21 6M865 647l5 14M849 641l-17 6M862 645l3 10M866 645l6 6M849 640l-15 -1M845 638l-11 -4M862 642l17 5M846 637l-13 -4M848 637l-16 -10M860 639l18 -8M843 635l-5 -5M865 639l11 -3M867 640l12 -10M864 638l6 8M845 633l-13 2M849 633l-14 -4M862 636l18 3M864 636l11 1M862 635l9 16M845 629l-14 -10M851 631l-10 -8M847 629l-8 -17M850 629l-12 -6M852 629l-13 -11M851 629l-13 -12M852 628l-14 -5M863 631l9 10M850 626l-17 -7M851 626l-13 -12M863 628l11 -6M850 625l-9 -17M854 624l-13 -15M851 624l-6 -10M866 627l10 -3M847 621l-6 -8M871 627l15 -4M863 625l11 9M855 621l-12 -2M871 625l3 13M868 623l14 -4M849 618l-3 -13M868 622l16 11M864 621l17 9M870 622l6 11M850 616l-9 -8M852 616l-11 -3M851 615l-8 1M870 619l12 -6M870 619l7 -7M868 618l13 3M857 615l-10 -8M853 612l-17 3M871 617l16 -10M866 615l9 9M873 617l8 16M855 610l-12 -17M851 609l-10 9M870 614l19 -5M853 609l-8 -1M851 607l-8 7M850 607l-1 -13M851 606l-11 -12M858 608l-8 -15M856 606l-5 -9M857 606l-5 -12M855 604l-14 3M854 604l-11 9M859 604l-9 -16M857 604l-15 6M873 607l9 -4M870 606l9 14M875 607l5 12M855 601l-17 2M875 606l7 3M860 601l-15 -14M859 600l-10 -6M870 603l14 -0M877 604l7 -8M877 604l11 -10M871 601l14 -0M858 597l-11 -17M862 597l-16 -15M878 602l6 4M859 595l-9 7M874 599l16 5M855 592l-2 -4M873 598l12 10M878 598l7 -6M862 593l-15 -3M873 595l15 -3M872 595l18 13M874 595l5 10M863 591l-21 -3M858 588l-15 -7M875 594l21 -3M857 587l-9 -5M881 594l12 -4M876 592l11 -8M858 586l-8 5M878 591l5 9M862 586l-5 -10M876 589l20 -8M858 584l-8 7M879 589l13 14M880 589l13 -10M864 583l-10 0M863 583l-17 3M867 583l-16 -4M866 583l-20 -12M866 581l-21 -6M876 584l22 -2M881 585l5 1M879 584l15 4M861 578l-6 -9M884 584l4 -2M878 581l18 -3M866 578l-19 -6M876 580l10 15M863 576l-7 -11M863 574l-10 -11M880 580l6 7M882 579l10 12M866 574l-17 -11M880 577l11 13M882 578l9 -1M869 573l-16 -15M868 573l-9 -14M881 575l14 -5M866 571l-11 -6M868 570l-9 -5M866 569l-16 5M869 569l-17 -8M868 569l-16 5M864 567l-2 -8M865 567l-9 1M886 572l6 -2M884 571l14 3M867 565l-13 1M880 569l10 4M869 565l-14 5M871 565l-18 7M870 564l-6 -10M864 562l-14 -5M872 563l-8 -11M867 562l-15 7M881 564l21 1M869 561l-15 8M888 565l13 -6M865 559l-4 8M885 563l13 -7M882 562l18 9M887 562l6 -8M870 558l-16 -11M866 556l-3 -13M886 561l11 -8M874 556l-17 4M869 555l-10 -1M866 554l-5 -1M871 555l-11 8M887 558l17 0M872 554l-11 -10M870 552l-15 -6M885 556l20 6M871 551l-14 -14M885 555l16 12M869 550l-14 1M883 553l21 4M871 549l-7 -11M889 553l17 -6M892 553l9 13M887 551l15 4M873 547l-14 -4M888 551l7 14M892 550l15 1M892 550l12 -10M874 545l-12 -16M872 545l-19 4M888 547l10 -4M869 543l-10 3M873 543l-16 12M893 547l4 11M873 542l-9 8M886 544l17 -1M869 540l-7 4M892 544l7 -3M892 543l12 -7M894 544l9 -9M870 538l-6 -2M889 541l8 12M871 537l-11 -4M895 541l9 1M873 536l-18 1M893 540l4 -7M877 536l-20 6M887 538l22 4M894 538l12 7M877 535l-16 -5M888 535l10 12M894 536l11 -11M871 531l-7 -11M872 532l-9 -4M887 533l21 9M874 531l-18 0M873 529l-11 -11M893 532l9 -6M890 531l10 5M877 529l-11 5M871 527l-5 -1M892 530l10 3M878 527l-20 3M875 526l-10 8M888 527l18 -4M890 527l12 -9M895 526l8 15M889 526l12 10M890 525l16 -2M895 525l2 9M893 524l18 -6M879 522l-11 -0M874 520l-13 12M873 520l-6 -11M875 519l-12 11M894 521l14 7M893 520l16 -4M896 520l7 11M889 518l19 -13M892 518l18 -6M895 517l11 9M875 515l-5 -8M889 515l21 -10M877 514l-6 -7M877 513l-19 4M880 513l-19 -5M894 513l11 7M877 512l-17 -2M874 510l-13 -11M896 512l5 -8M890 510l17 -3M895 511l16 4M891 509l15 15M890 509l18 -5M876 507l-9 5M898 509l8 -11M899 507l4 2M894 507l18 0M892 506l14 7M875 504l-8 -10M892 504l10 6M892 504l14 14M893 503l15 -3M874 501l-11 11M878 501l-9 -1M895 502l9 2M878 499l-13 4M893 501l8 -8M894 499l9 -7M876 498l-4 -9M880 497l-10 -7M891 498l17 -9M899 497l9 -1M893 497l13 -2M881 495l-15 -5M894 496l13 -7M882 494l-12 6M899 495l5 -1M899 494l13 0M881 492l-19 11M878 491l-9 -5M893 492l17 2M876 490l-6 7M898 491l8 -1M875 489l-13 -1M880 489l-17 8M880 488l-16 8M894 489l9 7M879 487l-11 1M881 487l-14 8M895 487l11 13M896 487l19 3M892 485l17 -12M883 485l-12 -0M893 484l21 -6M882 484l-20 -4M900 484l8 0M900 484l7 14M896 482l5 10M882 482l-18 14M897 481l12 2M882 480l-17 5M896 480l14 5M901 480l9 -8M879 478l-15 -3M893 479l17 4M897 478l10 13M895 478l19 2M880 475l-6 8M881 475l-8 -5M878 474l-12 1M897 475l8 0M900 474l15 -7M898 474l6 -6M884 472l-13 7M881 472l-16 3M898 472l10 15M894 472l14 -3M881 470l-7 8M880 470l-10 3M876 468l-1 -9M901 470l9 -6M883 468l-16 -6M878 467l-7 -11M884 467l-16 -8M899 468l6 -4M758 236l17 -8M751 230l-2 -16M749 234l-7 -11M753 235l3 -20M759 237l14 -4M747 235l-16 -12M748 232l-8 -16M746 234l-15 -13M743 232l-9 -8M745 231l-4 -6M750 228l-3 -16M756 235l8 -9M752 232l1 -15M765 237l7 -1M746 231l-9 -11M745 236l-7 -3M760 236l17 -7M742 234l-12 -6M759 233l15 -12M744 232l-12 -10M748 236l-17 -13M758 228l4 -6M892 460l4 -9M893 462l7 -8M893 459l7 -14M891 463l5 -11M894 464l11 -7M888 458l-2 -17M885 461l-7 -10M894 462l9 -8M883 457l-6 -11M895 457l5 -8M888 461l-3 -20M881 460l-8 -7M881 460l-8 -7M895 459l10 -13M897 464l11 -4M883 460l-13 -13M878 463l-15 -5M887 462l-9 -19M888 460l-2 -13M895 462l15 -13M893 465l16 -7M896 463l11 -5" stroke="#4e4e4e" stroke-width="0.8" opacity="0.45"></path>
<path d="M750 235l-3 6M757 238l5 5M738 236l5 5M757 239l-5 5M745 239l3 6M761 244l6 4M741 241l4 6M740 243l7 1M746 244l-5 5M765 249l-7 2M754 248l-6 4M763 251l-7 1M742 250l6 3M765 255l-7 1M753 254l-7 1M744 252l6 4M757 256l2 7M739 253l-7 1M749 256l2 7M738 256l-7 0M743 257l-3 6M746 262l7 0M748 261l-3 6M736 259l-6 4M745 262l-1 7M741 263l-7 2M739 263l-0 7M750 268l-7 1M740 269l7 2M755 269l-2 7M752 271l-5 4M760 274l-7 1M758 276l-7 1M751 272l-3 6M740 274l6 4M758 276l-1 7M752 278l1 7M753 277l-3 7M744 279l4 6M741 278l2 7M734 278l-3 6M758 285l-7 2M734 281l-5 5M738 283l-6 3M735 284l-5 4M747 288l5 5M734 286l2 7M733 286l-2 7M733 288l-3 6M742 291l4 6M731 293l7 2M748 297l7 2M730 294l4 6M735 294l-4 6M745 299l2 7M746 300l-6 3M746 301l2 7M745 303l-7 1M735 304l6 3M732 305l7 1M748 308l4 5M748 309l6 4M741 309l-5 5M728 306l-0 7M724 309l4 6M721 310l6 4M731 314l6 4M724 311l-3 7M745 319l-7 3M730 317l-7 1M743 319l-0 7M732 317l-2 7M742 324l6 3M727 319l4 6M721 321l5 5M737 324l-6 4M746 327l-5 5M741 329l7 1M746 328l-3 6M730 325l0 7M729 329l-6 3M733 330l-7 1M724 331l6 4M745 333l-5 5M725 335l7 1M722 331l-5 5M744 337l2 7M747 338l-5 5M732 337l-0 7M731 337l-4 6M739 341l-4 6M737 344l7 1M735 343l-6 3M734 342l-4 6M720 342l2 7M718 344l7 2M744 348l-2 7M732 348l6 4M730 349l-6 3M720 346l-3 6M742 354l-7 2M735 352l-5 5M736 354l1 7M738 356l-6 3M718 355l6 4M720 357l7 0M718 356l-6 4M739 360l-6 4M714 357l1 7M711 360l7 1M726 363l-7 2M722 362l-7 2M723 366l7 2M717 363l-5 4M717 367l-7 0M723 367l-6 3M733 369l2 7M714 369l7 2M739 373l-4 5M729 371l-5 5M715 371l3 7M722 374l-7 2M730 378l6 3M717 373l-3 6M725 377l-1 7M723 377l2 7M721 378l1 7M740 383l-6 4M717 380l-2 7M719 384l7 0M724 384l-6 4M719 385l6 3M707 384l6 4M712 383l-4 6M716 387l-6 3M709 385l-1 7M730 392l5 5M714 388l-3 6M727 394l4 6M712 392l6 3M723 399l7 0M726 396l5 5M710 397l6 4M733 400l3 7M722 401l3 6M721 400l2 7M713 402l2 7M713 404l6 3M706 403l0 7M724 408l6 4M730 410l4 6M706 405l-1 7M719 410l-1 7M731 414l-7 1M734 415l-4 6M719 413l2 7M725 418l-7 1M735 420l-7 1M708 416l2 7M708 415l-1 7M724 420l-1 7M730 421l-3 6M722 423l-7 3M716 424l-7 0M708 424l7 2M726 427l-7 1M707 424l3 6M713 425l-1 7M709 427l-2 7M717 429l4 6M715 433l6 3M719 431l-2 7M708 434l-7 1M728 437l-7 1M719 438l-7 1M708 435l2 7M699 437l4 5M706 438l6 4M711 441l-6 4M713 441l5 5M719 443l1 7M709 444l6 4M723 448l6 4M709 444l-0 7M720 450l-7 2M725 450l-5 5M705 452l7 2M715 451l-4 6M724 455l-5 5M699 451l2 7M720 459l-7 1M714 458l7 1M709 460l7 1M720 459l-6 3M711 460l3 6M713 459l-2 7M717 465l7 1M699 462l6 3M702 464l6 4M715 465l6 4M700 465l0 7M706 469l7 0M721 471l7 2M703 469l-6 3M697 471l6 4M709 471l4 6M702 472l-2 7M711 476l7 0M705 476l-6 3M712 475l-1 7M720 480l6 4M706 478l3 6M717 481l-1 7M712 480l1 7M702 483l5 5M694 484l6 3M709 486l-4 6M726 488l-6 3M701 488l2 7M721 489l3 6M719 492l2 7M697 492l5 5M708 495l6 4M720 496l6 3M708 498l-5 4M717 499l6 3M707 499l1 7M701 499l-1 7M704 503l-5 5M724 503l-1 7M714 506l3 6M713 505l-2 7M702 508l-3 6M714 509l-4 6M710 511l-3 6M721 513l-7 2M703 516l-7 1M700 517l-7 1M704 517l2 7M693 518l6 3M721 523l-7 1M723 520l-3 6M722 523l0 7M710 523l1 7M697 525l2 7M705 527l5 5M712 529l-2 7M707 532l7 0M699 535l7 0M699 532l-3 6M720 535l3 6M704 536l5 5M722 538l-2 7M704 539l6 4M716 541l-2 7M707 541l-3 6M710 544l3 6M724 545l-6 4M712 547l-4 6M697 546l2 7M721 552l-7 1M712 549l4 6M701 554l-7 3M723 554l-7 2M706 558l-7 0M693 558l7 1M706 558l-2 7M707 561l7 1M709 561l5 5M703 563l7 2M705 566l-6 3M720 563l2 7M714 567l5 5M695 568l6 4M710 569l4 6M698 571l6 4M724 572l-3 6M720 572l-5 5M710 575l5 5M703 576l-5 4M719 577l4 6M695 578l2 7M719 580l4 6M719 580l-0 7M706 583l4 6M694 586l7 2M710 586l4 6M704 586l-3 6M705 589l-2 7M707 589l1 7M706 592l-2 7M704 592l2 7M709 598l-7 0M693 597l7 2M718 599l-6 3M710 599l6 3M709 601l-4 5M695 601l5 5M712 605l-7 2M710 603l4 6M722 605l2 7M714 605l2 7M719 611l-7 0M705 610l-5 5M704 613l6 4M723 610l-2 7M712 614l1 7M706 615l-4 6M719 617l-3 6M723 616l4 6M712 620l-3 6M722 619l3 6M722 622l4 6M713 622l4 6M697 626l3 6M721 624l3 6M717 629l-6 4M725 627l-5 5M725 629l3 7M726 630l-6 4M700 635l6 4M723 632l-1 7M698 637l4 6M720 635l-2 7M716 640l-7 2M725 640l-7 1M723 640l5 5M703 644l7 0M723 643l-5 5M720 642l3 6M710 648l7 1M729 644l-3 6M728 647l-5 4M699 651l6 3M723 650l7 2M722 650l6 3M704 654l-2 7M701 655l3 6M718 655l-5 5M723 653l-2 7M724 655l2 7M716 660l-7 2M723 660l-6 3M708 662l7 2M727 659l-4 6M714 661l2 7M715 665l7 2M719 663l-3 6M709 670l-7 2M730 663l-2 7M729 669l-7 1M725 667l6 3M713 673l6 3M734 670l-7 1M707 677l7 2M727 675l-7 0M724 677l-7 2M717 676l-3 6M708 683l7 0M713 681l-5 5M719 682l-5 5M721 683l-7 1M706 688l7 2M716 687l-7 1M738 680l-3 6M725 683l5 5M731 685l-6 4M733 684l-4 6M712 692l5 5M712 694l7 2M736 686l-2 7M716 694l6 4M727 691l-0 7M723 693l6 4M738 689l4 6M714 699l5 5M715 701l1 7M716 701l6 4M739 696l-6 3M723 701l7 1M724 703l-1 7M717 707l7 1M725 705l-3 6M729 703l-3 6M742 700l-5 5M738 700l5 5M742 700l3 6M728 713l-7 2M743 702l2 7M730 714l-7 1M739 712l-7 1M721 717l7 2M737 714l-7 3M734 713l-3 6M748 706l0 7M751 709l-7 1M740 719l-7 0M743 716l-7 2M740 718l7 1M742 715l3 6M742 718l4 5M728 728l7 1M735 726l1 7M730 730l7 2M750 718l6 3M743 723l4 6M744 730l-6 3M733 733l5 5M750 725l7 2M745 730l-3 6M754 725l7 2M750 728l-0 7M744 739l-5 5M743 738l-3 6M758 726l3 6M762 730l-7 2M759 730l7 1M761 734l-7 1M749 741l6 3M752 738l2 7M750 746l-3 6M755 739l7 2M754 748l-5 5M764 733l3 6M765 735l7 1M756 750l-6 3M771 739l-7 2M753 751l5 5M764 746l-4 6M763 743l3 6M757 755l1 7M769 738l3 6M759 758l0 7M762 750l6 4M771 739l5 5M767 747l4 6M774 752l-7 1M767 764l-7 2M772 755l-3 6M772 756l-3 6M770 757l6 3M772 751l3 6M778 755l-4 5M774 750l6 4M776 756l5 4M775 744l7 3M782 748l-3 6M780 739l-2 7M782 766l7 2M784 755l-2 7M785 743l-5 5M787 747l-7 2M784 749l5 4M780 742l7 0M797 761l-7 2M783 737l1 7M790 755l7 1M789 752l6 3M797 758l5 5M793 744l-4 6M790 739l1 7M796 745l-7 2M795 742l-0 7M791 741l5 5M805 750l-6 3M796 747l7 2M796 742l6 4M798 737l-6 4M802 747l7 0M806 749l5 5M801 734l-5 4M810 744l-6 3M808 738l-5 5M793 730l7 2M799 727l-1 7M813 748l7 0M813 738l1 7M817 741l-1 7M803 727l2 7M800 729l7 1M818 735l-4 5M813 731l-7 2M824 738l-7 1M815 730l-7 2M808 722l-7 2M827 738l-7 0M827 734l-7 1M818 727l1 7M822 731l6 4M816 723l-7 1M814 718l-2 7M812 718l-7 0M817 717l-3 7M822 723l3 6M831 723l-6 4M820 719l5 5M813 714l7 1M836 724l-7 3M824 714l2 7M834 719l-1 7M837 718l-7 2M832 715l1 7M816 705l5 5M832 715l6 4M831 708l-6 3M836 711l-6 4M826 703l-6 4M816 703l7 1M831 703l-2 7M837 711l7 2M826 700l-7 1M830 703l6 4M833 701l-7 1M847 708l-7 0M819 694l6 3M840 703l5 5M826 693l4 6M826 691l-4 6M826 690l-6 3M826 693l6 3M846 697l-6 4M830 689l-3 6M823 687l6 4M833 692l6 3M841 690l-6 4M828 683l-2 7M838 686l-4 6M840 691l7 1M850 690l-7 2M838 688l7 2M840 683l-6 3M830 680l4 6M840 680l-1 7M838 680l2 7M843 679l1 7M846 681l2 7M848 680l-7 2M846 678l1 7M835 672l-5 5M856 680l-6 3M836 670l-3 6M852 677l-7 1M846 672l-5 4M846 675l7 1M853 671l-3 6M855 673l2 7M837 663l0 7M837 664l3 6M843 664l2 7M849 666l3 6M856 665l1 7M833 661l7 2M838 658l4 6M849 661l4 6M843 658l5 5M849 660l-7 1M847 657l-7 0M836 654l6 3M854 656l-6 3M845 653l2 7M842 649l-0 7M840 650l5 5M852 652l6 3M859 651l-4 6M861 654l7 0M850 648l4 6M859 646l-4 6M861 651l7 1M846 641l-6 4M857 645l-6 3M843 637l-4 5M855 640l-3 6M853 641l7 2M869 644l-7 2M866 639l-1 7M845 636l7 2M870 640l-7 0M857 634l-4 6M847 629l-5 5M845 629l4 6M845 626l-3 6M872 635l-7 1M858 628l-6 3M863 631l6 4M855 624l-6 4M870 629l-6 3M869 626l-6 3M847 622l6 4M856 622l7 2M870 623l-5 5M865 620l-6 4M865 621l-7 1M845 615l7 2M845 616l7 1M852 611l2 7M852 611l-5 5M863 612l2 7M873 614l-2 7M868 613l-7 1M871 611l-2 7M862 607l3 7M860 606l0 7M867 609l7 1M868 609l6 4M867 604l3 6M860 605l7 1M854 600l6 3M874 606l7 2M873 600l1 7M873 602l-7 2M853 593l3 6M876 599l-6 4M880 600l-7 1M868 595l2 7M855 590l5 4M875 594l1 7M880 595l-7 1M872 590l-1 7M861 585l1 7M871 588l-5 5M878 587l-0 7M861 584l4 6M874 586l-7 2M871 586l6 3M865 582l6 3M870 581l-6 4M881 581l1 7M858 576l5 5M880 581l-7 1M872 576l0 7M885 578l-4 6M876 576l-6 3M879 574l-6 3M883 576l-7 2M887 573l-1 7M865 567l-5 5M880 569l-2 7M869 566l-4 5M877 566l-1 7M881 568l-7 2M877 565l5 4M879 565l-7 2M867 561l7 3M868 560l-7 2M870 557l-6 4M861 559l7 0M886 559l-5 5M875 558l6 3M876 554l3 6M886 558l6 4M881 552l-1 7M871 550l0 7M886 551l-3 6M874 549l-6 4M880 549l-6 3M878 550l-7 0M877 545l2 7M876 546l6 4M873 543l-7 2M888 545l3 6M873 539l-4 6M883 543l5 5M872 539l-7 2M872 537l-5 5M885 540l6 3M887 538l2 7M876 533l-1 7M890 537l4 6M882 532l-3 6M883 535l-7 0M869 531l7 2M869 528l2 7M891 532l7 1M876 527l-4 6M885 525l-2 7M876 526l6 4M894 526l-6 3M871 521l-2 7M870 520l5 5M884 521l2 7M876 519l-7 2M891 520l-6 3M893 517l3 6M868 515l6 4M880 514l5 4M892 514l2 7M898 512l1 7M876 512l-7 0M893 509l4 6M873 508l6 4M887 508l-7 1M883 506l5 5M885 503l-4 6M880 504l-6 3M885 501l-4 6M878 500l1 7M884 498l-5 5M878 498l3 6M888 496l-4 6M892 497l5 4M875 492l-3 6M877 493l-5 5M880 493l7 1M873 490l1 7M880 488l3 6M885 488l-2 7M890 487l4 5M874 485l-1 7M896 486l-6 3M886 485l-6 3M902 483l-3 6M898 486l7 0M887 482l-7 1M882 479l-2 7M895 480l-6 3M887 480l7 2M886 477l7 3M882 476l6 3M885 474l-7 2M901 474l-5 5M884 471l4 6M885 470l-2 7M880 470l-7 1M883 471l7 1M877 467l6 3M890 469l-7 0M886 464l-4 6M890 464l-2 7" stroke="#6c6c6c" stroke-width="0.8" opacity="0.45"></path>
<path d="M760 238l2 6M760 241l-5 3M742 239l-4 5M761 245l1 6M750 245l-3 5M740 245l-0 6M743 248l-1 6M742 250l2 6M737 251l-3 5M743 258l6 2M747 261l5 3M736 259l-5 3M754 267l6 1M746 266l-5 3M748 268l1 6M746 271l4 5M758 276l-6 2M737 272l1 6M745 276l-3 5M752 282l-6 1M734 279l-1 6M741 283l-3 5M750 287l-2 6M748 289l-1 6M739 290l2 6M734 292l-0 6M729 295l4 4M731 297l3 5M737 301l4 5M739 303l-2 6M726 303l-2 6M733 309l-6 1M747 313l3 5M734 314l-5 3M741 318l3 5M733 318l-4 5M738 323l5 3M735 323l2 6M744 326l-3 5M738 329l-6 2M738 330l-5 4M718 331l6 1M723 331l-2 6M726 334l-0 6M734 339l3 5M740 344l6 1M738 345l5 2M738 349l6 1M725 347l-6 2M718 347l3 5M717 350l4 4M741 357l-6 0M724 355l-3 5M737 360l4 5M715 358l3 5M734 364l-6 2M725 364l2 6M720 365l-0 6M728 370l-5 3M713 372l6 0M723 374l-6 1M717 376l5 3M739 380l-4 5M737 382l-4 4M722 382l2 5M731 385l-4 4M726 389l6 2M728 391l5 3M712 390l6 2M730 395l5 4M727 396l-1 6M721 399l5 4M720 404l6 1M716 403l2 5M707 404l3 5M706 406l-1 6M711 412l-6 0M716 412l-2 6M725 417l-5 3M726 419l2 6M709 419l-4 4M727 426l6 1M720 424l-0 6M725 429l-5 3M727 431l-5 4M727 433l-3 5M712 435l-6 2M723 440l6 2M730 442l-5 3M699 440l5 3M709 442l-1 6M721 447l-5 4M706 447l1 6M719 454l6 2M701 455l6 0M702 456l5 4M720 459l-2 5M707 461l5 3M706 464l-6 0M711 466l-6 1M702 466l-5 4M726 470l-3 5M714 472l-5 3M719 476l-6 1M717 477l-5 4M713 480l5 3M706 481l-1 6M716 484l2 6M702 487l-5 3M701 491l6 1M715 492l3 5M708 494l2 6M703 498l-6 2M702 503l6 0M715 503l-2 6M711 507l-5 3M708 509l-2 6M699 514l6 1M715 516l-5 3M699 517l2 6M698 520l2 6M702 524l-4 5M710 528l6 2M715 529l2 5M716 532l-0 6M698 536l4 4M726 540l-6 1M715 541l0 6M711 544l-3 5M702 547l-1 6M710 551l-5 3M702 553l1 6M712 558l6 1M724 561l-6 0M701 563l6 1M707 565l5 3M709 567l-4 4M707 571l5 3M702 572l-1 6M712 575l3 5M703 580l6 1M715 581l5 4M716 583l-1 6M714 588l-6 2M702 592l6 1M709 595l-6 1M704 598l-6 1M726 599l-6 2M716 601l5 4M701 605l-5 4M704 609l-6 0M718 608l0 6M708 614l6 1M722 616l-6 2M696 619l5 4M711 622l-6 2M700 624l-0 6M705 626l2 6M712 629l-3 5M699 633l4 4M711 636l-6 1M702 638l5 3M718 639l-5 4M708 642l3 5M730 644l-6 1M722 645l-4 5M703 652l6 0M723 650l-4 4M718 652l1 6M727 653l-0 6M722 658l-6 2M723 659l5 3M723 663l-6 0M711 667l-6 2M722 666l6 1M708 671l5 3M712 672l4 5M709 677l6 2M720 675l2 5M715 679l1 6M719 681l6 2M721 682l4 5M729 683l6 1M725 687l6 2M722 692l-5 3M712 696l5 3M729 692l-2 6M731 694l6 0M723 700l6 1M738 695l-2 6M730 700l6 2M743 698l-5 4M729 706l-1 6M735 705l-1 6M722 714l1 6M737 708l4 5M741 709l6 0M733 720l-5 2M741 714l1 6M744 715l1 6M733 726l6 1M748 723l-6 0M751 718l2 6M744 726l2 5M751 729l-6 1M754 725l6 1M744 736l6 2M758 730l-4 4M749 738l6 1M756 735l4 5M761 734l0 6M761 736l3 5M758 742l5 3M764 741l-1 6M756 753l0 6M755 757l5 3M764 751l1 6M773 744l-3 5M772 745l-0 6M778 743l-5 3M773 757l-0 6M774 745l5 2M777 753l4 5M777 745l6 2M782 743l-1 6M783 741l-2 6M784 751l6 1M784 746l6 0M796 754l-4 4M799 754l-4 4M799 750l-6 2M801 750l-1 6M795 745l6 1M797 737l-6 1M806 745l-1 6M802 736l-5 4M813 746l1 6M810 742l4 4M797 728l6 1M808 731l-6 0M818 736l-6 0M814 734l6 2M818 731l2 6M815 728l5 3M807 720l5 3M824 725l-5 4M822 722l3 5M813 713l-6 1M825 718l-6 2M818 711l1 6M821 708l-2 6M824 707l-4 5M823 704l-5 3M821 701l1 6M835 706l-5 4M821 697l2 6M829 699l2 6M831 699l4 4M827 694l4 5M846 700l-4 5M832 691l2 6M829 689l5 4M851 695l-6 2M834 685l-0 6M852 690l-2 6M848 687l-5 3M843 682l-4 4M833 676l-6 1M843 677l-3 5M838 673l-4 4M848 675l-5 4M855 676l3 5M852 672l-4 4M851 671l6 2M858 669l-5 3M836 663l6 1M846 662l5 4M857 662l-6 1M857 661l6 2M858 657l1 6M864 657l-6 2M860 652l-3 5M847 649l5 3M866 649l-4 4M852 645l5 4M859 642l-3 5M846 636l-3 5M859 637l-2 5M851 635l-6 0M845 629l3 5M866 632l-3 5M849 627l-6 0M867 628l4 5M871 627l-6 2M862 621l-3 5M858 621l6 1M845 613l4 4M853 613l4 5M857 612l-6 1M860 612l6 1M863 608l2 6M861 604l-0 6M866 605l3 5M855 599l4 4M875 604l5 3M874 600l4 4M861 592l-2 6M857 590l4 5M865 589l3 5M869 589l3 5M882 589l-3 5M883 588l-6 2M860 578l3 5M872 579l-0 6M863 575l-6 2M863 572l1 6M859 570l5 3M879 572l-3 5M887 573l-6 2M867 563l-2 6M870 563l5 4M867 559l-2 6M880 560l2 6M879 558l-6 2M870 553l-5 4M875 555l6 1M883 555l6 0M878 551l6 1M879 547l-6 2M878 546l6 2M882 542l-3 5M883 539l-2 6M871 538l6 1M881 535l3 5M884 534l-5 3M892 533l5 4M870 527l3 5M888 528l-6 2M897 525l2 6M880 524l6 0M876 517l0 6M886 518l5 3M886 514l2 6M882 512l5 3M892 510l5 4M882 507l6 2M901 507l-6 1M890 501l-3 5M896 500l-5 3M873 496l5 3M883 493l-0 6M897 493l5 3M893 492l-6 0M890 487l1 6M875 483l-1 6M882 482l1 6M886 480l-2 6M892 478l2 6M881 476l4 5M901 475l-5 4M888 471l-2 5M886 469l-4 4M883 466l-0 6M882 463l-0 6" stroke="#bdbdbd" stroke-width="0.8" opacity="0.4"></path>
<path d="M747.8 239.3h0.1M742.7 243.4h0.1M759.2 250.4h0.1M749.0 254.9h0.1M747.8 261.5h0.1M749.9 269.3h0.1M739.8 269.7h0.1M734.8 276.8h0.1M732.7 283.4h0.1M748.2 292.9h0.1M748.7 298.6h0.1M732.0 300.2h0.1M739.6 308.6h0.1M733.7 314.0h0.1M726.2 321.1h0.1M726.6 326.8h0.1M728.0 329.5h0.1M739.4 336.6h0.1M724.7 342.8h0.1M729.7 350.0h0.1M730.4 354.8h0.1M726.3 358.7h0.1M723.1 362.5h0.1M717.3 368.0h0.1M727.9 376.8h0.1M730.2 383.8h0.1M733.1 388.0h0.1M718.6 391.5h0.1M716.0 399.2h0.1M727.0 407.2h0.1M725.6 414.2h0.1M712.7 415.7h0.1M712.3 422.4h0.1M715.4 426.9h0.1M725.6 436.2h0.1M714.8 438.6h0.1M715.1 446.7h0.1M713.0 453.8h0.1M704.9 457.9h0.1M720.8 462.7h0.1M707.0 468.0h0.1M720.8 474.0h0.1M703.1 480.4h0.1M716.6 487.0h0.1M703.8 492.6h0.1M710.0 499.6h0.1M712.0 509.3h0.1M707.8 516.7h0.1M706.3 524.0h0.1M701.1 529.2h0.1M708.3 536.5h0.1M707.3 544.0h0.1M705.1 550.6h0.1M711.4 561.1h0.1M718.5 566.8h0.1M717.1 573.0h0.1M701.4 582.7h0.1M718.6 588.3h0.1M705.7 595.5h0.1M703.2 602.6h0.1M704.8 607.9h0.1M703.5 616.5h0.1M704.8 621.9h0.1M707.2 631.1h0.1M720.3 633.4h0.1M719.8 642.2h0.1M721.7 647.1h0.1M721.2 655.4h0.1M718.5 657.7h0.1M724.1 661.5h0.1M716.5 669.9h0.1M728.0 673.4h0.1M714.4 683.2h0.1M719.0 690.5h0.1M729.0 693.0h0.1M732.5 697.2h0.1M735.6 701.4h0.1M728.9 711.1h0.1M738.7 708.4h0.1M743.1 714.4h0.1M744.9 720.6h0.1M750.9 725.1h0.1M751.1 729.8h0.1M756.7 731.2h0.1M763.6 733.9h0.1M761.5 740.7h0.1M759.8 756.5h0.1M763.3 758.6h0.1M774.7 756.8h0.1M778.8 759.3h0.1M783.1 747.6h0.1M789.9 747.0h0.1M792.0 744.2h0.1M800.7 746.6h0.1M810.3 747.5h0.1M810.4 740.8h0.1M812.0 733.7h0.1M815.6 732.0h0.1M825.8 731.5h0.1M820.2 720.9h0.1M822.0 710.7h0.1M821.6 707.1h0.1M840.0 707.2h0.1M833.2 698.3h0.1M839.5 696.0h0.1M841.6 693.9h0.1M837.8 686.8h0.1M844.3 683.5h0.1M838.7 674.3h0.1M841.1 670.7h0.1M849.2 664.9h0.1M851.0 661.7h0.1M857.9 658.8h0.1M859.1 650.9h0.1M843.3 642.2h0.1M848.4 636.8h0.1M866.4 634.1h0.1M852.2 624.6h0.1M849.7 617.9h0.1M866.8 617.5h0.1M858.7 609.3h0.1M866.8 604.4h0.1M871.0 600.9h0.1M863.6 594.0h0.1M863.2 586.4h0.1M869.6 581.2h0.1M882.0 579.6h0.1M867.4 569.1h0.1M870.2 564.6h0.1M870.7 561.2h0.1M871.3 552.5h0.1M870.4 548.2h0.1M882.9 545.9h0.1M884.6 540.9h0.1M875.7 531.5h0.1M894.7 529.0h0.1M894.8 523.3h0.1M892.1 514.5h0.1M875.5 507.5h0.1M884.0 502.5h0.1M896.9 497.1h0.1M890.3 488.9h0.1M884.0 483.6h0.1M891.1 480.8h0.1M890.0 474.5h0.1M884.9 469.6h0.1" stroke="#ffffff" stroke-width="2.6" stroke-linecap="round" opacity="0.6"></path>
</g>
<g filter="url(#soft)">
<path d="M652.0 364.0 C664.7 365.2 702.7 368.3 728.0 371.0 C753.3 373.7 791.3 378.5 804.0 380.0" fill="none" stroke="#a8a8a8" stroke-width="43" stroke-linecap="round" stroke-linejoin="round" opacity="0.2"></path>
<path d="M652.0 364.0 C664.7 365.2 702.7 368.3 728.0 371.0 C753.3 373.7 791.3 378.5 804.0 380.0" fill="none" stroke="#8a8a8a" stroke-width="27" stroke-linecap="round" stroke-linejoin="round"></path>
<path d="M651 373l-7 13M651 377l12 10M651 377l-10 3M652 377l13 9M652 374l2 15M654 352l-9 -4M653 374l-7 13M655 355l2 -10M655 356l8 -9M654 374l-1 9M654 378l-13 8M656 353l-3 -17M657 354l-7 -7M655 374l6 10M655 376l-4 7M658 352l-6 -9M658 354l11 -12M657 373l-0 13M657 375l10 15M657 376l10 12M657 375l4 17M659 376l1 8M661 352l8 -3M659 373l1 12M662 354l-9 -5M660 377l7 6M660 376l10 14M661 374l-6 15M663 354l-3 -8M663 356l-7 -14M664 357l-6 -16M664 358l8 -13M663 372l-2 19M666 355l3 -14M666 355l3 -14M664 373l-9 15M665 372l-8 18M665 373l11 13M667 355l11 -10M668 355l-7 -17M668 353l3 -11M666 373l6 11M669 357l3 -15M668 357l-7 -11M667 377l-13 7M670 355l13 -9M670 358l-6 -14M668 377l7 9M671 353l-4 -6M669 376l-3 10M671 355l-3 -7M670 374l1 12M672 359l0 -15M670 372l5 19M671 378l11 9M673 353l13 -6M673 355l5 -16M673 374l0 17M672 377l-1 16M674 354l14 -9M675 359l-7 -21M673 379l-11 8M675 355l7 -10M675 379l0 12M677 356l-11 -14M675 379l-9 13M678 358l9 -11M676 373l-2 17M678 359l-7 -10M677 379l-3 5M678 373l0 16M677 378l10 7M679 375l10 18M678 380l-8 10M679 374l-6 13M682 353l4 -7M680 375l12 12M679 379l-3 11M683 356l-13 -13M681 377l-8 14M683 357l-4 -9M684 360l4 -16M684 354l-2 -15M682 378l-11 10M685 356l-4 -13M683 379l-12 9M685 358l1 -18M685 379l7 12M686 359l14 -14M684 380l8 4M688 354l-9 -12M686 379l-2 11M688 360l10 -15M687 376l14 16M689 359l-3 -18M689 356l12 -10M689 377l-4 11M689 374l4 15M689 376l-3 9M690 377l9 17M692 356l-9 -8M690 374l3 15M693 357l-14 -13M693 356l-1 -15M693 361l-6 -11M694 360l6 -19M693 374l-10 10M693 376l-2 20M696 360l-1 -14M695 361l-7 -10M694 379l-13 10M696 375l4 17M697 359l-2 -16M696 375l7 17M698 358l-12 -12M698 358l5 -14M696 380l-9 4M700 358l-0 -14M698 376l-3 12M700 361l1 -15M701 359l-8 -8M699 378l3 12M701 355l6 -13M702 361l-3 -14M702 358l6 -10M702 362l-8 -12M704 358l16 -12M702 380l-7 10M702 377l-16 13M703 379l-12 9M703 377l-11 12M705 358l9 -4M706 362l3 -18M706 359l4 -16M705 376l1 19M706 379l6 9M708 357l-9 -7M706 382l-14 10M707 379l1 14M709 359l9 -9M707 382l-0 12M708 381l-12 5M710 359l8 -9M708 380l-10 5M712 357l11 -13M710 378l-5 11M712 359l4 -14M713 358l-7 -6M713 362l-10 -16M711 376l-10 10M715 356l2 -11M712 381l-11 14M712 380l10 6M714 377l-12 15M714 376l10 18M714 381l-0 10M717 361l-6 -15M715 383l-0 13M717 359l-10 -13M716 378l9 17M718 362l11 -14M716 379l-5 15M719 360l6 -6M718 377l-6 21M719 360l4 -17M719 382l4 14M719 380l-4 7M720 363l-4 -10M722 361l-6 -10M720 377l4 15M722 359l1 -9M723 363l6 -12M721 381l-7 15M721 380l-7 11M722 382l7 6M725 358l-11 -9M722 380l5 13M723 380l4 8M725 364l14 -16M725 362l1 -12M727 359l10 -10M727 362l-8 -10M725 378l4 10M726 380l-10 16M728 361l6 -11M726 382l-8 6M727 383l-8 5M729 362l12 -8M727 379l-11 9M728 379l4 12M728 382l-5 17M730 364l11 -16M732 359l-1 -8M730 378l-3 12M732 358l9 -5M730 382l13 11M731 379l-9 12M730 383l4 10M734 364l9 -11M732 378l-8 10M734 363l-1 -18M735 362l-1 -9M735 362l-5 -11M735 365l-10 -14M734 382l-17 11M734 379l2 13M736 360l8 -9M735 381l-9 8M735 382l-7 10M738 359l-0 -9M738 366l12 -9M736 382l-16 10M736 383l-12 12M740 363l-6 -17M737 385l-9 9M738 384l-11 9M741 361l-10 -9M741 365l5 -17M741 363l4 -10M742 364l9 -12M743 362l12 -9M743 359l-9 -9M744 363l8 -16M743 366l-4 -14M744 360l-7 -9M743 385l9 6M745 362l-10 -9M743 382l6 11M747 361l0 -16M744 380l1 14M744 384l-4 11M748 364l1 -9M747 366l-11 -18M747 366l-9 -20M747 383l-7 10M749 364l6 -18M747 381l2 12M750 367l-6 -15M748 380l-0 13M750 364l1 -15M752 364l-5 -9M749 383l11 14M749 384l-10 10M753 366l1 -17M753 361l-3 -5M753 364l16 -12M752 387l3 9M754 364l-13 -12M752 387l14 13M756 364l12 -5M756 361l12 -5M754 381l10 14M757 366l-10 -16M757 365l11 -10M757 365l12 -15M756 385l8 14M756 387l9 5M756 386l-8 6M757 385l5 14M758 383l-4 16M759 367l8 -11M758 387l-6 7M761 366l-8 -15M761 368l6 -20M760 385l6 13M762 366l1 -17M760 384l1 17M761 385l-10 7M761 385l2 8M761 386l-10 15M763 382l2 14M765 364l12 -5M762 387l-3 13M766 367l-7 -9M767 363l1 -7M764 383l-10 7M767 369l10 -14M765 389l-4 11M767 367l6 -10M769 366l10 -16M769 362l-1 -4M767 383l13 18M770 366l12 -11M771 363l8 -2M770 367l5 -13M772 365l10 -11M772 364l-6 -10M771 367l-1 -11M773 366l-11 -13M772 369l-7 -11M773 368l9 -8M774 366l14 -10M774 364l6 -15M774 368l8 -19M775 368l4 -12M773 387l4 10M776 364l-2 -10M774 388l10 16M774 390l-16 7M777 367l9 -6M776 385l0 20M778 367l-9 -17M778 369l-7 -14M776 389l14 13M779 370l-11 -16M779 369l-1 -16M780 367l2 -10M778 390l-7 14M778 388l-11 11M779 389l9 12M779 384l9 18M779 384l-0 12M783 364l-0 -13M783 365l3 -6M780 386l-16 13M784 369l9 -16M784 369l3 -11M784 365l6 -9M785 371l9 -10M785 367l2 -12M785 369l6 -15M786 365l-5 -5M787 365l-2 -15M786 365l5 -7M788 366l-2 -10M785 385l12 18M784 391l-0 9M788 371l-3 -15M786 388l-2 17M788 369l3 -14M787 391l-6 5M787 385l-6 15M789 368l8 -13M791 365l-10 -10M791 366l9 -4M788 390l-4 13M791 370l15 -11M791 369l-3 -8M789 387l7 17M790 392l0 8M793 365l5 -12M793 367l-2 -17M793 372l-1 -11M791 392l-6 14M791 392l8 4M792 390l14 12M793 387l7 13M792 391l9 7M796 370l9 -8M794 386l-13 16M796 369l-5 -9M795 387l-13 8M797 369l4 -10M795 388l-8 10M796 391l1 9M798 373l8 -11M796 392l-6 8M797 392l10 9M797 391l-8 8M800 369l12 -11M800 372l10 -9M800 372l5 -11M801 368l6 -11M802 368l-5 -12M802 369l3 -17M802 370l-4 -7M800 390l-10 8M803 373l7 -10M803 367l5 -9M804 372l-0 -14M802 390l-5 15M804 372l-9 -18M805 370l14 -11M803 389l3 10M802 392l-3 9M644 361l-15 -6M647 354l-7 -14M645 365l-18 2M643 371l-10 8M648 376l-3 8M648 372l-4 8M642 357l-12 -8M650 356l-5 -19M647 369l-13 12M648 372l-6 12M649 376l-1 6M640 368l-5 2M649 374l-3 12M643 364l-16 0M643 367l-17 7M653 351l0 -5M649 356l-8 -18M649 374l-4 17M652 355l-0 -12M647 375l-4 10M646 372l-11 15M641 358l-14 -7M810 383l17 9M804 389l1 16M809 389l4 8M813 373l12 -8M813 375l11 -5M810 386l7 7M804 388l-0 20M814 376l9 -3M813 373l6 -5M803 390l-0 8M813 381l11 1M811 389l7 8M806 390l4 15M811 389l5 7M812 385l11 7M813 380l16 1M816 379l6 -0M808 369l4 -10M815 379l17 -2M809 370l7 -14M815 379l16 -1M816 385l9 4" stroke="#bdbdbd" stroke-width="0.9" opacity="0.7"></path>
<path d="M652 360l8 -13M651 372l2 13M653 368l3 14M654 355l5 -9M655 354l4 -9M655 359l11 -9M656 356l-2 -13M654 374l-1 11M656 370l3 17M656 367l9 17M657 370l-0 20M656 375l11 13M658 370l-11 17M658 372l9 15M660 359l14 -12M660 362l7 -20M661 358l-7 -11M661 358l-9 -16M663 355l0 -12M663 357l4 -10M664 356l-8 -12M664 362l2 -16M664 368l-11 17M664 375l-11 7M665 375l-8 2M666 359l7 -8M666 374l-6 8M666 368l-10 16M667 373l6 8M668 361l13 -16M670 356l10 -6M670 358l-12 -13M669 371l-14 16M671 356l-1 -8M672 355l11 -5M672 361l9 -8M673 359l-7 -9M672 371l-9 18M674 359l7 -18M673 373l7 13M675 359l-5 -14M675 357l-4 -9M676 359l8 -15M675 372l5 11M678 356l-2 -7M676 375l2 6M679 358l-6 -10M679 356l-8 -10M678 378l7 2M680 356l-8 -10M680 371l10 15M680 378l0 11M682 360l-6 -14M681 377l-1 8M684 361l6 -15M684 358l-7 -16M685 363l7 -18M685 357l4 -10M685 374l-6 15M686 361l10 -10M687 363l11 -13M686 378l-11 7M688 374l-1 8M688 375l-12 8M690 361l0 -16M690 364l-0 -12M690 377l-9 7M691 365l-9 -21M692 373l-7 8M691 378l-8 13M694 360l5 -14M693 372l-6 17M694 378l-7 11M694 379l-9 9M696 371l-5 14M696 365l11 -17M698 359l-3 -7M698 362l2 -10M699 365l-10 -17M698 374l-8 16M700 371l-9 17M701 362l-1 -14M702 365l2 -19M701 375l-8 8M702 374l-7 8M703 371l5 15M705 364l5 -9M704 372l-7 18M706 361l3 -8M706 364l4 -18M706 376l-1 10M707 365l5 -15M709 363l-11 -14M707 377l0 14M710 362l-11 -17M709 378l-0 14M710 379l-3 9M710 372l-4 23M713 359l-5 -13M711 375l-6 16M714 364l6 -10M713 373l-6 10M716 360l9 -10M715 367l0 -15M715 374l-4 10M715 380l-5 3M716 377l4 17M716 380l3 6M719 367l1 -17M717 380l-6 3M720 362l-10 -9M719 381l-1 5M720 382l-13 10M720 380l7 4M723 360l-4 -15M722 374l1 12M723 374l-11 17M722 379l-7 15M724 380l6 7M726 361l-7 -10M725 378l1 13M725 380l11 14M726 374l11 20M728 362l-5 -13M729 363l-6 -8M728 367l6 -10M730 363l4 -12M730 366l-5 -11M731 365l15 -14M730 377l1 16M730 381l8 16M732 363l-6 -15M734 363l1 -14M732 379l6 14M733 381l-5 8M735 361l-9 -4M734 382l-5 3M736 360l-5 -13M737 369l-2 -19M737 369l9 -11M738 365l-3 -8M736 382l10 7M738 380l2 11M739 367l4 -15M741 361l1 -12M739 383l-6 8M740 383l-3 9M742 366l12 -15M744 365l-8 -8M742 381l-0 12M743 379l7 19M745 367l5 -19M746 366l10 -5M744 383l8 5M748 364l-6 -11M747 369l-4 -12M749 363l-1 -8M747 378l3 17M749 378l9 19M748 383l-9 13M750 381l-5 15M752 363l-9 -9M753 367l-7 -19M753 366l-2 -17M752 385l-2 7M753 377l0 22M754 381l3 19M754 380l10 18M757 368l-2 -10M757 366l7 -14M757 377l0 17M756 384l-1 12M759 372l13 -14M757 385l-7 9M761 368l9 -8M760 371l2 -22M762 366l-1 -7M760 381l-7 17M764 365l2 -7M764 366l7 -14M763 381l2 9M763 379l-9 12M764 384l-0 6M766 369l-2 -9M767 373l13 -16M765 386l-10 4M769 369l8 -12M768 373l10 -12M770 366l3 -6M770 367l-2 -17M771 371l4 -11M771 366l-8 -15M771 379l5 15M772 373l-4 -16M773 372l-4 -16M773 379l-7 14M774 381l-12 11M775 368l-10 -10M777 367l9 -7M777 367l8 -8M776 382l-1 12M778 368l-4 -15M777 383l-5 10M777 380l7 11M780 368l-6 -10M780 373l-6 -18M780 380l7 11M782 366l9 -1M783 368l-1 -14M780 388l-2 7M782 384l-8 18M782 381l-12 18M784 373l-11 -15M783 380l-9 15M785 374l-7 -21M786 371l13 -11M786 382l9 12M787 369l-9 -8M788 374l-9 -11M786 386l-15 11M787 385l2 18M788 383l-6 18M790 372l6 -9M791 368l-5 -5M789 387l3 7M790 383l-6 10M792 374l8 -8M792 373l7 -19M792 383l1 19M793 371l8 -16M793 381l-4 11M793 382l2 22M796 373l-2 -11M794 388l9 6M797 372l-4 -10M797 374l2 -14M797 383l-5 16M798 370l-13 -14M798 384l1 19M799 373l-2 -11M799 386l-13 13M800 372l-5 -10M801 373l-6 -16M800 385l7 9M801 384l10 14M801 385l-9 19M802 389l6 13M801 391l8 6M804 375l3 -19M803 384l0 10M644 359l-6 -4M650 366l-12 18M647 361l-17 -10M650 355l-4 -14M650 359l-5 -15M645 366l-13 3M650 374l-1 6M649 370l-5 10M649 365l-19 6M648 358l-7 -11M649 368l-12 17M650 363l-19 -9M650 371l-5 14M650 357l-2 -10M648 362l-16 -9M648 365l-13 4M644 369l-14 9M646 367l-12 5M645 364l-18 -1M651 359l-3 -13M650 370l-5 12M652 357l-1 -12M808 382l10 4M811 377l17 -6M805 386l2 14M809 377l12 -6M815 381l9 1M809 384l13 11M811 376l6 -3M805 378l11 -16M812 380l7 -0M804 386l-0 9M806 369l2 -9M805 384l3 13M804 389l1 12M813 383l15 5M804 383l1 18M805 391l1 7M811 376l9 -5M811 386l6 5M807 383l16 15M806 377l10 -12M804 386l0 16M810 375l13 -10" stroke="#4e4e4e" stroke-width="0.8" opacity="0.45"></path>
<path d="M655 352l-4 6M653 367l-3 6M655 369l-4 6M653 362l2 7M653 363l6 3M657 369l-3 6M657 359l4 6M657 367l2 7M659 359l4 6M659 371l2 7M663 360l1 7M663 365l-1 7M668 358l-5 5M668 375l-7 2M669 373l-5 5M667 365l0 7M673 354l-4 5M669 372l-1 7M676 364l-7 2M673 355l0 7M674 363l1 7M670 376l6 3M680 362l-5 5M673 370l6 3M680 360l-0 7M677 359l7 1M683 375l-5 5M680 357l4 6M683 363l2 7M689 355l-7 1M690 375l-7 1M690 367l-7 1M689 369l0 7M690 367l-2 7M693 374l-4 6M695 363l-5 5M697 359l-3 6M691 377l6 3M701 363l-7 2M695 357l6 3M696 372l7 2M696 371l7 2M706 358l-6 4M701 366l3 6M708 377l-7 1M709 363l-5 4M705 374l5 5M709 361l-1 7M708 360l7 1M713 367l-5 5M713 377l-2 7M709 375l6 3M714 357l7 2M719 359l-4 6M720 356l-2 7M719 373l-3 7M723 375l-5 5M721 372l-1 7M722 362l4 5M722 368l3 6M728 379l-7 2M723 361l7 1M729 355l0 7M724 376l7 2M730 370l0 7M728 364l5 5M728 383l7 2M733 378l-3 6M739 364l-6 3M733 365l6 4M742 367l-7 0M736 380l1 7M742 384l-7 0M743 361l-4 6M746 359l-4 6M739 371l7 1M744 362l4 6M741 376l7 0M746 360l6 3M745 371l7 3M748 365l7 1M748 375l4 6M754 358l1 7M758 361l-7 2M760 368l-7 0M753 369l7 3M759 378l-2 7M761 379l-6 4M766 365l-7 0M762 380l-4 5M766 368l-3 6M767 371l-6 3M764 370l5 5M770 376l-7 1M771 367l-4 6M767 376l3 6M776 362l-5 5M771 370l2 7M772 380l2 7M773 384l-0 7M781 370l-7 0M778 380l-3 6M777 374l4 6M781 366l-3 6M786 366l-7 0M784 388l-7 1M779 384l7 2M787 381l-7 2M785 372l3 6M790 372l-7 1M793 371l-7 1M786 366l6 3M791 387l-5 5M793 375l-6 4M793 371l0 7M794 386l-6 4M799 370l-6 4M795 382l-1 7M802 366l-6 3M800 376l-4 5M797 367l7 1M803 370l-6 4M798 381l7 2M803 366l-0 7M800 384l6 3M803 376l1 7" stroke="#6c6c6c" stroke-width="0.8" opacity="0.45"></path>
<path d="M649 369l4 4M654 370l-2 6M657 368l-4 5M658 357l1 6M661 371l-3 5M661 360l6 0M663 366l5 3M667 351l3 5M670 354l2 6M672 359l0 6M676 352l-1 6M675 373l3 5M677 363l4 4M679 361l6 1M684 376l-1 6M684 367l6 2M687 367l5 3M694 359l-3 5M694 361l2 6M695 365l4 4M703 375l-6 0M700 365l6 2M706 365l-2 6M706 368l4 5M710 373l-1 6M711 359l6 1M713 366l6 2M720 363l-2 6M723 374l-4 4M727 357l-5 4M724 361l6 0M728 362l1 6M733 369l-5 3M730 369l6 1M732 381l4 4M737 378l-1 6M736 379l6 1M741 364l6 1M744 361l4 5M748 376l-2 6M751 361l2 6M751 370l6 0M757 385l-6 1M759 372l-2 6M759 372l5 3M765 373l-3 5M769 379l-6 2M769 367l2 6M776 364l-6 0M771 380l6 0M775 373l5 4M782 368l-4 5M782 386l-4 4M781 380l5 4M783 380l5 3M787 370l5 4M793 371l-3 5M791 388l1 6M797 365l-2 6M795 383l3 5M802 383l-6 1M802 386l-2 6M801 379l5 3" stroke="#bdbdbd" stroke-width="0.8" opacity="0.4"></path>
<path d="M651.7 363.9h0.1M656.6 369.6h0.1M663.7 372.4h0.1M668.3 371.0h0.1M674.1 371.0h0.1M678.8 374.2h0.1M685.9 359.5h0.1M694.4 362.5h0.1M702.0 368.8h0.1M708.8 366.0h0.1M711.8 374.1h0.1M717.2 376.5h0.1M727.0 371.9h0.1M729.8 369.1h0.1M738.5 377.9h0.1M746.0 368.8h0.1M752.8 364.9h0.1M754.3 383.2h0.1M762.3 379.0h0.1M770.9 373.2h0.1M777.7 376.9h0.1M781.9 377.3h0.1M790.1 372.5h0.1M795.6 376.9h0.1M797.7 379.7h0.1" stroke="#ffffff" stroke-width="2.6" stroke-linecap="round" opacity="0.6"></path>
</g>
<g fill="none" stroke="#5b8fd8" stroke-width="1.3">
<rect x="623" y="207" width="298.5" height="576.5"></rect>
<path d="M772.3 207 V170"></path>
</g>
<g fill="#eef4ff" stroke="#5b8fd8" stroke-width="1.3">
<circle cx="623" cy="207" r="4.5"></circle><circle cx="772.3" cy="207" r="4.5"></circle><circle cx="921.5" cy="207" r="4.5"></circle><circle cx="623" cy="495.3" r="4.5"></circle><circle cx="921.5" cy="495.3" r="4.5"></circle><circle cx="623" cy="783.5" r="4.5"></circle><circle cx="772.3" cy="783.5" r="4.5"></circle><circle cx="921.5" cy="783.5" r="4.5"></circle><circle cx="772.3" cy="170" r="4.5"></circle></g>
</svg></div><!--/canvas-->
<div id="vscroll" class="a">
<svg class="a" style="left:5px;top:6px" width="10" height="10" viewBox="0 0 10 10"><path d="M0.5 9 L5 0.5 L9.5 9 Z" fill="#6e6e6e"></path></svg>
<div class="a" style="left:6px;top:242px;width:9px;height:123px;border-radius:5px;background:#7a7a7a"></div>
</div>
<div id="hscroll" class="a">
<svg class="a" style="left:6px;top:6px" width="10" height="10" viewBox="0 0 10 10"><path d="M9 0.5 L0.5 5 L9 9.5 Z" fill="#6e6e6e"></path></svg>
<div class="a" style="left:478px;top:7px;width:270px;height:8px;border-radius:4px;background:#8a8a8a"></div>
</div>
<div id="status" class="a"><div class="t" style="transform-origin: left top; width: auto; left: 26px; transform: scaleX(0.986);">'t.png' selected. <b>Drag</b> to move selection. <b>Click</b> another object to select it. <b>Click</b> on an empty area to deselect selection. <b>Return</b> to enter move/duplicate values.</div></div>
<div id="panel" class="a">
<!-- header color -->
<div class="a" style="left:0;top:0;width:513px;height:36px;background:#333333"></div>
<div class="a" style="left:0;top:3px;width:21px;height:33px;background:#2c2c2c"></div>
<div class="a" style="left:9px;top:14px;width:1px;height:11px;background:#8a8a8a"></div>
<div class="a" style="left:12px;top:14px;width:1px;height:11px;background:#8a8a8a"></div>
<div class="a" style="left:21px;top:3px;width:45px;height:33px;background:#3c3c3c"></div>
<div class="ph" style="left: 28px; color: rgb(230, 230, 230); transform-origin: left top; width: auto; transform: scaleX(0.986);">Color</div>
<div class="ph" style="left: 72px; transform-origin: left top; width: auto; transform: scaleX(0.923);">Swatches</div>
<div class="ph" style="left: 139px; transform-origin: left top; width: auto; transform: scaleX(0.939);">Stroke</div>
<div class="ph" style="left:189px;left:189px"></div>
<div class="ph" style="left: 190px; transform-origin: left top; width: auto; transform: scaleX(0.94);">Appearance</div>
<div class="ph" style="left: 273px; transform-origin: left top; width: auto; transform: scaleX(0.97);">32-bit Preview</div>
<svg class="a" style="left:490px;top:11px" width="14" height="13" viewBox="0 0 14 13"><path d="M0 1.5 H14 M0 6.5 H14 M0 11.5 H14" stroke="#d0d0d0" stroke-width="1.8"></path></svg>
<!-- color wheel icons -->
<svg class="a" style="left:18px;top:55px" width="52" height="50" viewBox="0 0 52 50">
<circle cx="16" cy="17" r="14" fill="#3a3a3a" stroke="#555" stroke-width="1"></circle>
<circle cx="16" cy="17" r="11" fill="none" stroke="#ececec" stroke-width="5"></circle>
<path d="M23 7 L28 14" stroke="#e03030" stroke-width="2.2"></path><path d="M6 27 L10 31" stroke="#e03030" stroke-width="2"></path>
<circle cx="9" cy="41" r="7.5" fill="#e0e0e0" stroke="#3a3a3a" stroke-width="1.5"></circle><path d="M4 46 L14 36" stroke="#e03030" stroke-width="1.5"></path>
<circle cx="32" cy="33" r="15" fill="#ececec" stroke="#3a3a3a" stroke-width="2"></circle><path d="M22 44 L43 22" stroke="#e83030" stroke-width="2.5"></path>
<path d="M38 3 Q46 5 48 14" fill="none" stroke="#b0b0b0" stroke-width="1.2"></path><path d="M36 1 L38 3 L36 6 M45 13 L48 15 L50 12" fill="none" stroke="#b0b0b0" stroke-width="1.1"></path>
</svg>
<svg class="a" style="left:76px;top:53px" width="48" height="26" viewBox="0 0 48 26"><path d="M3 23 L14 12" stroke="#c8c8c8" stroke-width="3.5" stroke-linecap="round"></path><circle cx="17" cy="8" r="6" fill="#c08868"></circle><circle cx="36" cy="12" r="10" fill="#1a4aa0" stroke="#2a2a2a" stroke-width="1.5"></circle></svg>
<div class="a" style="left:374px;top:88px;width:21px;height:22px;background:#2e2e2e;border-radius:2px"></div>
<svg class="a" style="left:378px;top:91px" width="13" height="15" viewBox="0 0 13 15"><path d="M3.5 7 V4.5 Q3.5 1.5 6.5 1.5 Q9.5 1.5 9.5 4.5 V7" fill="none" stroke="#9a9a9a" stroke-width="1.4"></path><rect x="2" y="7" width="9" height="7" rx="1" fill="#9a9a9a"></rect></svg>
<div class="a" style="left:403px;top:88px;width:95px;height:22px;background:#474747;border-radius:3px"></div>
<div class="ph2" style="left: 407.4px; top: 91px; font-size: 14px; color: rgb(232, 232, 232); transform-origin: left top; width: auto; transform: scaleX(0.804);">RGB</div>
<svg class="a" style="left:483px;top:95px" width="12" height="8" viewBox="0 0 12 8"><path d="M2 2 L6 6 L10 2" fill="none" stroke="#d8d8d8" stroke-width="1.5"></path></svg>
<!-- sliders -->
<div class="ph2" style="left:17px;top:121px">R:</div>
<div class="ph2" style="left:17px;top:151px">G:</div>
<div class="ph2" style="left:17px;top:181px">B:</div>
<div class="a" style="left:34px;top:122px;width:410px;height:11px;border-radius:6px;background:linear-gradient(90deg,#12d6de,#a8dfe0 75%,#ebdada)"></div>
<div class="a" style="left:34px;top:152px;width:410px;height:11px;border-radius:6px;background:linear-gradient(90deg,#e018e0,#e090e0 65%,#dde9dc)"></div>
<div class="a" style="left:34px;top:182px;width:410px;height:11px;border-radius:6px;background:linear-gradient(90deg,#dede10,#ddde90 65%,#dcdcef)"></div>
<svg class="a" style="left:397px;top:118px" width="18" height="80" viewBox="0 0 18 80"><g fill="rgba(255,255,255,0.25)" stroke="#9a9a9a" stroke-width="1.3"><circle cx="9" cy="10" r="6.5"></circle><circle cx="9" cy="40" r="6.5"></circle><circle cx="9" cy="70" r="6.5"></circle></g><g fill="none" stroke="#f0f0f0" stroke-width="1"><circle cx="9" cy="10" r="8"></circle><circle cx="9" cy="40" r="8"></circle><circle cx="9" cy="70" r="8"></circle></g></svg>
<div class="a vb" style="left:450px;top:115px"><span style="display: inline-block; transform-origin: left top; width: auto; left: 0px; transform: scaleX(0.925);">235</span></div>
<div class="a vb" style="left:450px;top:145px"><span style="display: inline-block; transform-origin: left top; width: auto; left: 0px; transform: scaleX(0.925);">235</span></div>
<div class="a vb" style="left:450px;top:175px"><span style="display: inline-block; transform-origin: left top; width: auto; left: 0px; transform: scaleX(0.925);">235</span></div>
<div class="a" style="left:18px;top:207px;width:481px;height:65px;background:linear-gradient(180deg,#ffffff 0%,rgba(255,255,255,0) 50%,rgba(0,0,0,0) 50%,#000 100%),linear-gradient(90deg,#ff0000 0%,#ffff00 16.7%,#00ff00 33.3%,#00ffff 50%,#0000ff 66.7%,#ff00ff 83.3%,#ff0000 100%)"></div>
<div class="ph2" style="left: 17px; top: 279px; font-size: 13px; color: rgb(110, 110, 110); transform-origin: left top; width: auto; transform: scaleX(0.948);">Opacity</div>
<div class="a" style="left:23px;top:299px;width:17px;height:17px;border-radius:50%;background:#9a9a9a"></div>
<div class="a" style="left:49px;top:304px;width:356px;height:8px;border-radius:4px;background:#383838"></div>
<div class="a" style="left:401px;top:301px;width:15px;height:15px;border-radius:50%;border:1.5px solid #b8b8b8"></div>
<div class="a" style="left:424px;top:296px;width:50px;height:24px;background:#3a3a3a"></div>
<div class="ph2" style="left: 429px; top: 300px; color: rgb(138, 138, 138); font-size: 13px; transform-origin: left top; width: auto; transform: scaleX(0.993);">100 %</div>
<div class="a" style="left:476px;top:295px;width:17px;height:23px;background:#4a4a4a"></div>
<svg class="a" style="left:479px;top:302px" width="11" height="8" viewBox="0 0 11 8"><path d="M2 2 L5.5 5.5 L9 2" fill="none" stroke="#aaa" stroke-width="1.2"></path></svg>
<!-- layers header -->
<div class="a" style="left:0;top:328px;width:513px;height:36px;background:#333333"></div>
<div class="a" style="left:9px;top:342px;width:1px;height:11px;background:#8a8a8a"></div>
<div class="a" style="left:12px;top:342px;width:1px;height:11px;background:#8a8a8a"></div>
<div class="ph" style="left: 28px; top: 338px; transform-origin: left top; width: auto; transform: scaleX(0.904);">Layers</div>
<div class="a" style="left:72px;top:331px;width:59px;height:33px;background:#3c3c3c"></div><div class="a" style="left:0;top:331px;width:21px;height:33px;background:#2c2c2c"></div><div class="a" style="left:9px;top:342px;width:1px;height:11px;background:#8a8a8a"></div><div class="a" style="left:12px;top:342px;width:1px;height:11px;background:#8a8a8a"></div>
<div class="ph" style="left: 78px; top: 338px; color: rgb(230, 230, 230); transform-origin: left top; width: auto; transform: scaleX(0.915);">Brushes</div>
<div class="ph" style="left: 137px; top: 338px; transform-origin: left top; width: auto; transform: scaleX(0.92);">Quick FX</div>
<div class="ph" style="left: 202px; top: 338px; transform-origin: left top; width: auto; transform: scaleX(0.892);">Styles</div>
<svg class="a" style="left:490px;top:339px" width="14" height="13" viewBox="0 0 14 13"><path d="M0 1.5 H14 M0 6.5 H14 M0 11.5 H14" stroke="#d0d0d0" stroke-width="1.8"></path></svg>
<div class="a" style="left:7px;top:372px;width:473px;height:20px;background:#474747;border-radius:2px"></div>
<div class="ph2" style="left: 33.5px; top: 374px; color: rgb(232, 232, 232); font-size: 14px; transform-origin: left top; width: auto; transform: scaleX(0.938);">My Tinsel Brushes</div>
<svg class="a" style="left:465px;top:378px" width="12" height="8" viewBox="0 0 12 8"><path d="M2 2 L6 6 L10 2" fill="none" stroke="#d8d8d8" stroke-width="1.5"></path></svg>
<svg class="a" style="left:492px;top:373px" width="17" height="18" viewBox="0 0 17 18"><rect x="1" y="1" width="15" height="16" rx="2" fill="#2a2a2a" stroke="#d0d0d0" stroke-width="1.2"></rect><path d="M4 5 H13 M4 8 H13 M4 11 H13 M4 14 H13" stroke="#d0d0d0" stroke-width="1.1"></path></svg>
<!-- brush list -->
<div class="a" style="left:0;top:400px;width:490px;height:257px;background:#3a3a3a;overflow:hidden;border:1px solid #1e1e1e">
 <div class="brow" style="top:-30px"><span class="n1">64</span><span class="n2">11</span></div>
 <div class="brow" style="top:27px"><span class="n1">64</span><span class="n2">14</span></div>
 <div class="brow" style="top:85px"><span class="n1">64</span><span class="n2">13</span></div>
 <div class="brow" style="top:142px;border:1.5px solid #5a7ea8"><span class="n1">64</span><span class="n2">15</span></div>
 <div class="brow" style="top:199px"><span class="n1">64</span><span class="n2">16</span></div>
 <svg class="a" style="left:0;top:0" width="490" height="257" viewBox="0 0 490 257">
<defs>
<filter id="spk" filterUnits="userSpaceOnUse" x="0" y="-20" width="490" height="290">
<feGaussianBlur in="SourceGraphic" stdDeviation="2.2" result="b"></feGaussianBlur>
<feTurbulence type="fractalNoise" baseFrequency="0.95" numOctaves="1" seed="4" result="n"></feTurbulence>
<feColorMatrix in="n" type="matrix" values="0 0 0 0 1  0 0 0 0 1  0 0 0 0 1  0 0 0 2.6 -0.7" result="na"></feColorMatrix>
<feComposite in="b" in2="na" operator="arithmetic" k1="1.5" k2="0.35" k3="0" k4="0"></feComposite>
</filter>
<filter id="spk2" filterUnits="userSpaceOnUse" x="0" y="-20" width="490" height="290">
<feTurbulence type="fractalNoise" baseFrequency="1.1" numOctaves="1" seed="9" result="n"></feTurbulence>
<feColorMatrix in="n" type="matrix" values="0 0 0 0 1  0 0 0 0 0.92  0 0 0 0 0.8  0 0 0 6 -3.6" result="na"></feColorMatrix>
<feComposite in="na" in2="SourceGraphic" operator="in"></feComposite>
</filter>
</defs>
<path d="M100 -6.0 L118 -6.2 L135 -6.3 L152 -6.5 L170 -6.6 L188 -6.7 L205 -6.8 L222 -6.9 L240 -7.0 L258 -7.0 L275 -7.0 L292 -7.0 L310 -7.0 L328 -6.9 L345 -6.8 L362 -6.7 L380 -6.6 L398 -6.5 L415 -6.3 L432 -6.2 L450 -6.0" fill="none" stroke="#c0c0c0" stroke-width="14" stroke-linecap="round" filter="url(#spk)" opacity="0.8"></path>
<path d="M56 50.0 L76 49.6 L96 49.2 L115 48.9 L135 48.5 L155 48.2 L175 48.0 L195 47.8 L214 47.6 L234 47.5 L254 47.5 L274 47.5 L294 47.6 L313 47.8 L333 48.0 L353 48.2 L373 48.5 L393 48.9 L412 49.2 L432 49.6 L452 50.0" fill="none" stroke="#d8913a" stroke-width="15" stroke-linecap="round" filter="url(#spk)" opacity="0.95"></path>
<path d="M56 50.0 L76 49.6 L96 49.2 L115 48.9 L135 48.5 L155 48.2 L175 48.0 L195 47.8 L214 47.6 L234 47.5 L254 47.5 L274 47.5 L294 47.6 L313 47.8 L333 48.0 L353 48.2 L373 48.5 L393 48.9 L412 49.2 L432 49.6 L452 50.0" fill="none" stroke="#000" stroke-width="11" stroke-linecap="round" filter="url(#spk2)" opacity="0.3"></path>
<circle cx="60" cy="50.5" r="5" fill="#d8800c" opacity="0.7" filter="url(#spk)"></circle>
<path d="M56 165.0 L76 164.6 L96 164.2 L115 163.9 L135 163.5 L155 163.2 L175 163.0 L195 162.8 L214 162.6 L234 162.5 L254 162.5 L274 162.5 L294 162.6 L313 162.8 L333 163.0 L353 163.2 L373 163.5 L393 163.9 L412 164.2 L432 164.6 L452 165.0" fill="none" stroke="#d8913a" stroke-width="15" stroke-linecap="round" filter="url(#spk)" opacity="0.95"></path>
<path d="M56 165.0 L76 164.6 L96 164.2 L115 163.9 L135 163.5 L155 163.2 L175 163.0 L195 162.8 L214 162.6 L234 162.5 L254 162.5 L274 162.5 L294 162.6 L313 162.8 L333 163.0 L353 163.2 L373 163.5 L393 163.9 L412 164.2 L432 164.6 L452 165.0" fill="none" stroke="#000" stroke-width="11" stroke-linecap="round" filter="url(#spk2)" opacity="0.3"></path>
<circle cx="60" cy="165.5" r="5" fill="#d8800c" opacity="0.7" filter="url(#spk)"></circle>
<path d="M90 107.0 L108 106.7 L126 106.4 L144 106.1 L162 105.8 L180 105.6 L199 105.4 L217 105.2 L235 105.1 L253 105.0 L271 105.0 L289 105.0 L307 105.1 L325 105.2 L343 105.4 L362 105.6 L380 105.8 L398 106.1 L416 106.4 L434 106.7 L452 107.0" fill="none" stroke="#5a5a5a" stroke-width="14" stroke-linecap="round" filter="url(#spk)" opacity="0.22"></path>
<path d="M56 222.0 L76 221.6 L96 221.2 L115 220.9 L135 220.5 L155 220.2 L175 220.0 L195 219.8 L214 219.6 L234 219.5 L254 219.5 L274 219.5 L294 219.6 L313 219.8 L333 220.0 L353 220.2 L373 220.5 L393 220.9 L412 221.2 L432 221.6 L452 222.0" fill="none" stroke="#aaaaaa" stroke-width="16" stroke-linecap="round" filter="url(#spk)"></path>
<path d="M56 222.0 L76 221.6 L96 221.2 L115 220.9 L135 220.5 L155 220.2 L175 220.0 L195 219.8 L214 219.6 L234 219.5 L254 219.5 L274 219.5 L294 219.6 L313 219.8 L333 220.0 L353 220.2 L373 220.5 L393 220.9 L412 221.2 L432 221.6 L452 222.0" fill="none" stroke="#000" stroke-width="12" stroke-linecap="round" filter="url(#spk2)" opacity="0.35"></path>
</svg>
</div>
<div class="a" style="left:490px;top:400px;width:23px;height:257px;background:#3a3a3a"></div>
<svg class="a" style="left:495px;top:405px" width="12" height="10" viewBox="0 0 12 10"><path d="M1 9 L6 1 L11 9 Z" fill="#6a6a6a"></path></svg>
<svg class="a" style="left:495px;top:641px" width="12" height="10" viewBox="0 0 12 10"><path d="M1 1 L6 9 L11 1 Z" fill="#6a6a6a"></path></svg>
<div class="a" style="left:497px;top:579px;width:8px;height:57px;border-radius:4px;background:#6a6a6a"></div>
<!-- transform header -->
<div class="a" style="left:0;top:660px;width:513px;height:36px;background:#333333"></div>
<div class="a" style="left:9px;top:673px;width:1px;height:11px;background:#8a8a8a"></div>
<div class="a" style="left:12px;top:673px;width:1px;height:11px;background:#8a8a8a"></div>
<div class="a" style="left:22px;top:663px;width:73px;height:33px;background:#3c3c3c"></div><div class="a" style="left:0;top:663px;width:21px;height:33px;background:#2c2c2c"></div><div class="a" style="left:9px;top:673px;width:1px;height:11px;background:#8a8a8a"></div><div class="a" style="left:12px;top:673px;width:1px;height:11px;background:#8a8a8a"></div>
<div class="ph" style="left: 28px; top: 670px; color: rgb(230, 230, 230); transform-origin: left top; width: auto; transform: scaleX(0.94);">Transform</div>
<div class="ph" style="left: 100px; top: 670px; transform-origin: left top; width: auto; transform: scaleX(0.993);">Navigator</div>
<div class="ph" style="left: 171px; top: 670px; transform-origin: left top; width: auto; transform: scaleX(0.987);">History</div>
<svg class="a" style="left:490px;top:671px" width="14" height="13" viewBox="0 0 14 13"><path d="M0 1.5 H14 M0 6.5 H14 M0 11.5 H14" stroke="#d0d0d0" stroke-width="1.8"></path></svg>
<div class="ph2" style="left:85px;top:716px;font-size:14px">X:</div>
<div class="a" style="left:102px;top:711px;width:80px;height:24px;background:#2a2a2a;border-radius:3px"></div>
<div class="ph2" style="left: 109.7px; top: 715px; font-size: 14px; color: rgb(224, 224, 224); transform-origin: left top; width: auto; transform: scaleX(0.925);">19.656 in</div>
<div class="ph2" style="left:199px;top:716px;font-size:14px">W:</div>
<div class="a" style="left:220px;top:711px;width:81px;height:24px;background:#2a2a2a;border-radius:3px"></div>
<div class="ph2" style="left: 226px; top: 715px; font-size: 14px; color: rgb(224, 224, 224); transform-origin: left top; width: auto; transform: scaleX(0.961);">4.84 in</div>
<svg class="a" style="left:312px;top:720px" width="14" height="25" viewBox="0 0 14 25"><path d="M2 2 H7 V10 M4 10 H10 V18 H4 Z M7 18 V25" fill="none" stroke="#bbb" stroke-width="1.2"></path></svg>
<div class="a" style="left:102px;top:739px;width:80px;height:10px;background:#2a2a2a;border-radius:3px"></div>
<div class="a" style="left:220px;top:739px;width:81px;height:10px;background:#2a2a2a;border-radius:3px"></div>
<div class="a" style="left:19px;top:737px;width:12px;height:8px;background:#e0e0e0"></div>
<div class="a" style="left:31px;top:741px;width:34px;height:1px;background:#9a9a9a"></div>
<div class="a" style="left:40px;top:739px;width:8px;height:6px;background:#9a9a9a"></div>
<div class="a" style="left:57px;top:739px;width:8px;height:6px;background:#9a9a9a"></div>
</div>
<div id="rec" class="a">
<div class="a" style="left:12px;top:26px;width:25px;height:25px;border-radius:50%;background:#8c8c8c"></div>
<svg class="a" style="left:16px;top:32px" width="17" height="12" viewBox="0 0 17 12"><path d="M2.5 9 L8.5 3 L14.5 9 Z" fill="#2e2e2e"></path></svg>
<svg class="a" style="left:81px;top:15px" width="26" height="24" viewBox="0 0 26 24"><path d="M8 3 L10 0.5 H16 L18 3 H23 Q25 3 25 5 V21 Q25 23 23 23 H3 Q1 23 1 21 V5 Q1 3 3 3 Z" fill="#a8a8a8"></path><circle cx="13" cy="13" r="5.5" fill="none" stroke="#2c2c2c" stroke-width="2.2"></circle></svg>
<div class="rt" style="left: 57px; top: 52px; transform-origin: left top; width: auto; transform: scaleX(0.944);">ScreenShot</div>
<div class="a" style="left:184px;top:12px;width:31px;height:31px;border-radius:50%;background:#c82828"></div>
<div class="a" style="left:203px;top:31px;width:19px;height:19px;border-radius:50%;background:rgba(214,140,24,0.88)"></div>
<div class="rt" style="left: 156px; top: 52px; transform-origin: left top; width: auto; transform: scaleX(0.951);">Record | Stop</div>
<svg class="a" style="left:204px;top:38px" width="20" height="26" viewBox="0 0 20 26"><path d="M6 3 Q6 1 7.5 1 Q9 1 9 3 V11 L10 10 Q11.5 9.5 12.5 11 L13 11 Q14.5 10.5 15.5 12 Q17 11.5 18 13 V18 Q18 23 14 25 H9 Q6 24 4 20 L1.5 15 Q1 13 3 13 Q4.5 13 6 15 Z" fill="#f4f4f4" stroke="#1a1a1a" stroke-width="1"></path></svg>
<div class="a" style="left:307px;top:14px;width:8px;height:25px;background:#363636"></div>
<div class="a" style="left:322px;top:14px;width:8px;height:25px;background:#363636"></div>
<div class="rt" style="left: 268px; top: 52px; transform-origin: left top; width: auto; transform: scaleX(0.913);">Pause | Resume</div>
<div class="rt" style="left: 466px; top: 29px; color: rgb(228, 228, 228); transform-origin: left top; width: auto; transform: scaleX(0.942);">00:00:00</div>
<div class="a" style="left:614px;top:35px;width:26px;height:3px;background:#9c9c9c"></div>
<svg class="a" style="left:660px;top:25px" width="25" height="25" viewBox="0 0 25 25"><path d="M2 2 L12.5 11 L23 2 M2 13 L12.5 22 L23 13" fill="none" stroke="#a4a4a4" stroke-width="2.6"></path></svg>
<svg class="a" style="left:705px;top:25px" width="24" height="25" viewBox="0 0 24 25"><path d="M2 2 L23 23 M23 2 L2 23" stroke="#b03a3a" stroke-width="2.6"></path></svg>
<div class="a" style="left:9px;top:83px;width:36px;height:36px;border-radius:50%;border:1.5px solid #8e2cb8"></div>
<svg class="a" style="left:17px;top:90px" width="20" height="22" viewBox="0 0 20 22"><path d="M5 3 L15 11 L10.5 11.5 L13 17 L11 18 L8.5 12.5 L5 15 Z" fill="none" stroke="#a030d0" stroke-width="1.6" stroke-linejoin="round"></path></svg>
<div class="a" style="left:54px;top:83px;width:36px;height:36px;border-radius:50%;border:1.5px solid #8e2cb8"></div>
<svg class="a" style="left:62px;top:90px" width="20" height="22" viewBox="0 0 20 22"><path d="M7 2 Q8.5 1 10 2 V9 L15 10 Q17 11 16 14 L15 18 Q14 20 12 20 H8 Q6 20 5 18 L3 13 Q3 11 5 12 L7 13 Z" fill="#a030d0"></path></svg>
<svg class="a" style="left:107px;top:94px" width="20" height="14" viewBox="0 0 20 14"><g fill="#a8a8a8"><rect x="1" y="1" width="3" height="2"></rect><rect x="5" y="1" width="3" height="2"></rect><rect x="9" y="1" width="3" height="2"></rect><rect x="13" y="1" width="3" height="2"></rect><rect x="17" y="1" width="2" height="2"></rect><rect x="1" y="5" width="3" height="2"></rect><rect x="5" y="5" width="3" height="2"></rect><rect x="9" y="5" width="3" height="2"></rect><rect x="13" y="5" width="3" height="2"></rect><rect x="17" y="5" width="2" height="2"></rect><rect x="4" y="9" width="12" height="2"></rect></g></svg>
<svg class="a" style="left:152px;top:90px" width="18" height="22" viewBox="0 0 18 22"><circle cx="9" cy="13" r="7" fill="none" stroke="#a8a8a8" stroke-width="1.6"></circle><path d="M6 2.5 H12 M9 3 V6 M9 13 V9" stroke="#a8a8a8" stroke-width="1.6"></path></svg>
<svg class="a" style="left:570px;top:90px" width="24" height="24" viewBox="0 0 24 24"><path d="M4 12 A8 8 0 0 1 17 5.5 M20 12 A8 8 0 0 1 7 18.5" fill="none" stroke="#b4b4b4" stroke-width="2.2"></path><path d="M14 2 L19 6 L13 8 Z M10 22 L5 18 L11 16 Z" fill="#b4b4b4"></path></svg>
<svg class="a" style="left:615px;top:90px" width="24" height="23" viewBox="0 0 24 23"><path d="M22 1 L10 14 L13 16 Z" fill="#bcbcbc"></path><path d="M9 14 Q4 14 3 19 L1 22 Q7 22 10 20 Q12 18 12 16 Z" fill="#bcbcbc"></path></svg>
<svg class="a" style="left:658px;top:92px" width="26" height="20" viewBox="0 0 26 20"><path d="M1 3 Q1 1 3 1 H9 L11 3 H23 Q25 3 25 5 V17 Q25 19 23 19 H3 Q1 19 1 17 Z" fill="#bcbcbc"></path></svg>
<svg class="a" style="left:703px;top:90px" width="25" height="24" viewBox="0 0 25 24"><g fill="#a030d0"><circle cx="12.5" cy="12" r="8"></circle><rect x="10.5" y="0" width="4" height="5"></rect><rect x="10.5" y="19" width="4" height="5"></rect><rect x="0.5" y="10" width="5" height="4"></rect><rect x="19.5" y="10" width="5" height="4"></rect><rect x="10.5" y="0" width="4" height="5" transform="rotate(45 12.5 12)"></rect><rect x="10.5" y="19" width="4" height="5" transform="rotate(45 12.5 12)"></rect><rect x="0.5" y="10" width="5" height="4" transform="rotate(45 12.5 12)"></rect><rect x="19.5" y="10" width="5" height="4" transform="rotate(45 12.5 12)"></rect></g><circle cx="12.5" cy="12" r="3.5" fill="#2c2c2c"></circle></svg>
<div class="a" style="left:7px;top:133px;width:139px;height:12px;background:#c02ed2"></div>
<div class="a" style="left:24px;top:140px;width:16px;height:16px;border-radius:50%;background:#f0f0f0"></div>
<div class="a" style="left:156px;top:133px;width:1px;height:12px;background:#555"></div>
<div class="a" style="left:168px;top:136px;font-size:15px;font-weight:bold;color:#d8d8d8;white-space:nowrap;height:9px;overflow:hidden;line-height:16px">Video Source</div>
</div>
<div id="taskbar" class="a">
<div class="a" style="left:0;top:0;width:1920px;height:1px;background:rgba(120,110,80,0.35)"></div>
<div class="a" style="left:0;top:58px;width:1920px;height:2px;background:#4a4838"></div>
<svg class="a" style="left:24px;top:22px" width="32" height="22" viewBox="0 0 32 22"><defs><linearGradient id="cl" x1="0" y1="0" x2="0" y2="1"><stop offset="0" stop-color="#c8dcf4"></stop><stop offset="1" stop-color="#7aa8e0"></stop></linearGradient></defs><path d="M5 20 Q0 20 1 15 Q2 10 8 11 Q10 4 17 5 Q24 6 24 12 Q30 12 30 16 Q30 20 26 20 Z" fill="url(#cl)"></path></svg>
<div class="a" style="left:38px;top:8px;width:19px;height:19px;border-radius:50%;background:#c42b2b"></div>
<div class="tt" style="left:44px;top:10px;font-size:12px;color:#fff">1</div>
<div class="tt" style="left: 64px; top: 12px; font-size: 14px; color: rgb(42, 42, 42); transform-origin: left top; width: auto; transform: scaleX(0.874);">81°F</div>
<div class="tt" style="left: 64px; top: 30px; font-size: 15px; color: rgb(90, 88, 64); transform-origin: left top; width: auto; transform: scaleX(1.023);">Mostly cloudy</div>
<svg class="a" style="left:478px;top:16px" width="30" height="29" viewBox="0 0 30 29"><defs><linearGradient id="wl" x1="0" y1="0" x2="1" y2="1"><stop offset="0" stop-color="#3ec0f4"></stop><stop offset="1" stop-color="#0a78d4"></stop></linearGradient></defs><g fill="url(#wl)"><rect x="0" y="0" width="14" height="13.5"></rect><rect x="15.5" y="0" width="14" height="13.5"></rect><rect x="0" y="15" width="14" height="14"></rect><rect x="15.5" y="15" width="14" height="14"></rect></g></svg>
<div class="a" style="left:526px;top:11px;width:270px;height:38px;border-radius:19px;background:#f1eedf;border:1px solid #dcd8c4"></div>
<svg class="a" style="left:539px;top:22px" width="20" height="19" viewBox="0 0 20 19"><circle cx="8" cy="8" r="6.2" fill="none" stroke="#2a2a2a" stroke-width="2"></circle><path d="M12.5 12.5 L18 18" stroke="#2a2a2a" stroke-width="2.2"></path></svg>
<div class="tt" style="left: 570.7px; top: 20px; font-size: 17px; color: rgb(96, 96, 96); transform-origin: left top; width: auto; transform: scaleX(0.934);">Search</div>
<svg class="a" style="left:737px;top:16px" width="48" height="30" viewBox="0 0 48 30"><path d="M3 6 L8 12 L5 13 L10 20" fill="none" stroke="#f0a020" stroke-width="2"></path><path d="M45 6 L40 12 L43 13 L38 20" fill="none" stroke="#f0a020" stroke-width="2"></path><rect x="16" y="3" width="16" height="17" rx="3" fill="#8ab070"></rect><rect x="15" y="2" width="18" height="5" fill="#2a3a2a"></rect><circle cx="20" cy="12" r="1.3" fill="#222"></circle><circle cx="28" cy="12" r="1.3" fill="#222"></circle><path d="M11 30 Q11 21 24 21 Q37 21 37 30 Z" fill="#6a4a9a"></path><ellipse cx="24" cy="26" rx="20" ry="5" fill="#b090e0" opacity="0.3"></ellipse></svg>
<svg class="a" style="left:811px;top:13px" width="38" height="36" viewBox="0 0 38 36"><circle cx="16" cy="20" r="15" fill="#e8c030"></circle><path d="M16 20 L3 12 A15 15 0 0 1 29 12 Z" fill="#e04030"></path><path d="M16 20 L3 12 A15 15 0 0 0 12 34.5 Z" fill="#30a050"></path><circle cx="16" cy="20" r="7" fill="#fff"></circle><circle cx="16" cy="20" r="5.5" fill="#3a7ae0"></circle><circle cx="27" cy="10" r="9.5" fill="#1a5ab8" stroke="#e8e4c8" stroke-width="1"></circle><text x="27" y="14" font-size="11" font-family="Liberation Sans" font-weight="bold" fill="#fff" text-anchor="middle">G</text></svg>
<svg class="a" style="left:866px;top:16px" width="31" height="29" viewBox="0 0 31 29"><path d="M1 3 Q1 1 3 1 H11 L14 4 H28 Q30 4 30 6 V9 H1 Z" fill="#d8a820"></path><rect x="1" y="7" width="29" height="21" rx="1.5" fill="#f2c640"></rect><rect x="9" y="20" width="13" height="5" rx="1" fill="#1a78c8"></rect></svg>
<svg class="a" style="left:921px;top:15px" width="31" height="30" viewBox="0 0 31 30"><rect x="0.5" y="0.5" width="30" height="29" rx="3" fill="#1a4a80"></rect><rect x="2.5" y="2.5" width="26" height="25" rx="2" fill="#36a6e6"></rect><path d="M4 26 L16 4 H27 V26 Z" fill="#48b8f0"></path><path d="M4 26 L16 4 M10 16 L16 26 M10 16 H27" stroke="#1b5e9e" stroke-width="1.3" fill="none"></path></svg>
<svg class="a" style="left:975px;top:15px" width="31" height="30" viewBox="0 0 31 30"><defs><linearGradient id="gr" x1="0" y1="0" x2="0" y2="1"><stop offset="0" stop-color="#48d048"></stop><stop offset="1" stop-color="#18a030"></stop></linearGradient></defs><rect x="0.5" y="0.5" width="30" height="29" rx="5" fill="url(#gr)"></rect><path d="M7 9 L23 22" stroke="#f4f4f4" stroke-width="4.5" stroke-linecap="round"></path></svg>
<svg class="a" style="left:1030px;top:15px" width="30" height="30" viewBox="0 0 30 30"><defs><linearGradient id="yl" x1="0" y1="0" x2="1" y2="0"><stop offset="0" stop-color="#f0f0c0"></stop><stop offset="0.35" stop-color="#f4e820"></stop><stop offset="0.65" stop-color="#f4e820"></stop><stop offset="1" stop-color="#f0f0c0"></stop></linearGradient></defs><rect x="0" y="0" width="30" height="30" fill="url(#yl)"></rect><path d="M15 1 V28" stroke="#5a5a40" stroke-width="1.6"></path><path d="M13.5 22 L15 29 L16.5 22" fill="#5a5a40"></path></svg>
<svg class="a" style="left:1085px;top:15px" width="30" height="30" viewBox="0 0 30 30"><rect x="0" y="0" width="30" height="30" fill="#b81a28"></rect><path d="M3 14 Q8 9 15 10 Q22 8 28 12 Q24 14 26 18 Q20 16 16 19 Q10 17 4 19 Q6 16 3 14 Z" fill="#2a1418"></path></svg>
<svg class="a" style="left:1139px;top:15px" width="31" height="30" viewBox="0 0 31 30"><path d="M15.5 1 L29 15 Q30 17 28 17 H22 Q24 22 20 23 Q18 23 18 20 Q15 28 11 25 Q9 23 12 20 H3 Q1 17 2 15 Z" fill="#1e1e1e"></path><path d="M15.5 4 L21 10 Q18 12 16 10 Q13 13 10 10 Z" fill="#f0f0f0"></path></svg>
<svg class="a" style="left:1194px;top:14px" width="28" height="31" viewBox="0 0 28 31"><rect x="8" y="1" width="12" height="13" fill="#f0a030" stroke="#a07030" stroke-width="0.8"></rect><text x="14" y="12" font-size="10" font-family="Liberation Sans" font-weight="bold" fill="#c02020" text-anchor="middle">M</text><rect x="1" y="16" width="12" height="14" fill="#70c060" stroke="#508040" stroke-width="0.8"></rect><text x="7" y="27" font-size="10" font-family="Liberation Sans" font-weight="bold" fill="#2050a0" text-anchor="middle">F</text><rect x="14" y="16" width="13" height="14" fill="#80c8f0" stroke="#4080a0" stroke-width="0.8"></rect><text x="20.5" y="27" font-size="10" font-family="Liberation Sans" font-weight="bold" fill="#2050a0" text-anchor="middle">C</text></svg>
<svg class="a" style="left:1249px;top:15px" width="30" height="30" viewBox="0 0 30 30"><defs><radialGradient id="pg" cx="0.4" cy="0.35" r="0.7"><stop offset="0" stop-color="#8a8af0"></stop><stop offset="1" stop-color="#2a2aa0"></stop></radialGradient></defs><circle cx="15" cy="15" r="14" fill="url(#pg)" stroke="#c8c8e8" stroke-width="1"></circle><text x="15" y="22" font-size="20" font-family="Liberation Serif" font-style="italic" font-weight="bold" fill="#fff" text-anchor="middle">P</text></svg>
<svg class="a" style="left:1303px;top:15px" width="30" height="30" viewBox="0 0 30 30"><circle cx="15" cy="15" r="14" fill="#1a2050"></circle><path d="M2 20 Q15 12 28 20 A14 14 0 0 1 2 20 Z" fill="#3a7ad0" opacity="0.8"></path><text x="15" y="16" font-size="10" font-family="Liberation Sans" font-weight="bold" fill="#fff" text-anchor="middle">FX</text></svg>
<svg class="a" style="left:1358px;top:15px" width="30" height="30" viewBox="0 0 30 30"><circle cx="15" cy="15" r="14" fill="#1a2050"></circle><path d="M2 20 Q15 12 28 20 A14 14 0 0 1 2 20 Z" fill="#3a7ad0" opacity="0.8"></path><text x="15" y="16" font-size="10" font-family="Liberation Sans" font-weight="bold" fill="#fff" text-anchor="middle">PM</text></svg>
<div class="a" style="left:1403px;top:6px;width:47px;height:48px;border-radius:5px;background:rgba(255,255,255,0.55)"></div>
<svg class="a" style="left:1411px;top:17px" width="32" height="30" viewBox="0 0 32 30"><rect x="0" y="2" width="23" height="26" rx="2" fill="#e04848"></rect><path d="M22 11 L31 5 V25 L22 19 Z" fill="#e04848"></path><circle cx="11" cy="10" r="5" fill="none" stroke="#fff" stroke-width="2.5"></circle><text x="11" y="24" font-size="6.5" font-family="Liberation Sans" font-weight="bold" fill="#fff" text-anchor="middle">REC</text></svg>
<div class="a" style="left:1417px;top:50px;width:20px;height:3px;border-radius:2px;background:#1a78d0"></div>
<div class="a" style="left:822px;top:51px;width:10px;height:3px;border-radius:2px;background:#6a6a6a"></div>
<div class="a" style="left:876px;top:51px;width:10px;height:3px;border-radius:2px;background:#6a6a6a"></div>
<div class="a" style="left:931px;top:51px;width:10px;height:3px;border-radius:2px;background:#6a6a6a"></div>
<div class="a" style="left:1040px;top:51px;width:10px;height:3px;border-radius:2px;background:#6a6a6a"></div>
<div class="a" style="left:1258px;top:51px;width:10px;height:3px;border-radius:2px;background:#6a6a6a"></div>
<div class="a" style="left:1313px;top:51px;width:10px;height:3px;border-radius:2px;background:#6a6a6a"></div>
<div class="a" style="left:1367px;top:51px;width:10px;height:3px;border-radius:2px;background:#6a6a6a"></div>
<svg class="a" style="left:1617px;top:24px" width="16" height="10" viewBox="0 0 16 10"><path d="M1.5 8.5 L8 2 L14.5 8.5" fill="none" stroke="#1e1e1e" stroke-width="1.7"></path></svg>
<svg class="a" style="left:1654px;top:21px" width="22" height="16" viewBox="0 0 22 16"><path d="M1.5 5.5 Q11 -2.5 20.5 5.5 M4.5 8.5 Q11 3 17.5 8.5 M7.5 11.5 Q11 8.5 14.5 11.5" fill="none" stroke="#1e1e1e" stroke-width="1.6"></path><circle cx="11" cy="14" r="1.6" fill="#1e1e1e"></circle></svg>
<svg class="a" style="left:1684px;top:21px" width="22" height="16" viewBox="0 0 22 16"><path d="M1.5 5.5 H5 L10 1.5 V14.5 L5 10.5 H1.5 Z" fill="none" stroke="#1e1e1e" stroke-width="1.4"></path><path d="M13 5 Q15 8 13 11 M16 3 Q19.5 8 16 13" fill="none" stroke="#1e1e1e" stroke-width="1.4"></path></svg>
<svg class="a" style="left:1714px;top:20px" width="22" height="16" viewBox="0 0 22 16"><rect x="6" y="5" width="13" height="9" rx="1.5" fill="#1e1e1e"></rect><rect x="19" y="7.5" width="2" height="4" fill="#1e1e1e"></rect><path d="M1 3 V7 Q1 9 3 9 H6 M2.5 1 V3 M4.5 1 V3" fill="none" stroke="#1e1e1e" stroke-width="1.4"></path></svg>
<div class="tt" style="left: 1770px; top: 10px; font-size: 15px; color: rgb(30, 30, 30); transform-origin: left top; width: auto; transform: scaleX(0.957);">2:31 PM</div>
<div class="tt" style="left: 1755px; top: 30px; font-size: 15px; color: rgb(30, 30, 30); transform-origin: left top; width: auto; transform: scaleX(1.026);">8/30/2024</div>
<div class="a" style="left:1834px;top:27px;width:10px;height:13px;border:1.5px solid #1e1e1e;border-radius:1px"></div>
<svg class="a" style="left:1865px;top:15px" width="32" height="30" viewBox="0 0 32 30"><defs><linearGradient id="cpl" x1="0" y1="0" x2="0" y2="1"><stop offset="0" stop-color="#1aa0f0"></stop><stop offset="0.55" stop-color="#58c050"></stop><stop offset="1" stop-color="#d8c028"></stop></linearGradient><linearGradient id="cpr" x1="0" y1="0" x2="1" y2="0"><stop offset="0" stop-color="#f05890"></stop><stop offset="1" stop-color="#a048e0"></stop></linearGradient></defs><path d="M5 4 Q6 1 9 1 H19 L14 19 Q13 21 10 21 H4 Q1 21 2 18 Z" fill="url(#cpl)"></path><path d="M14 1 H19 Q21 1 22 3 L24 8 H15 Z" fill="#2550c8"></path><path d="M14 8 H26 Q29 8 28 11 L25 20 Q24 22 21 22 H9 L13 9 Z" fill="url(#cpr)"></path><rect x="8" y="22" width="22" height="7.5" rx="1.5" fill="#f2c424"></rect><text x="19" y="28.5" font-size="7.5" font-family="Liberation Sans" font-weight="bold" fill="#111" text-anchor="middle">PRE</text></svg>
</div>


</body></html>
